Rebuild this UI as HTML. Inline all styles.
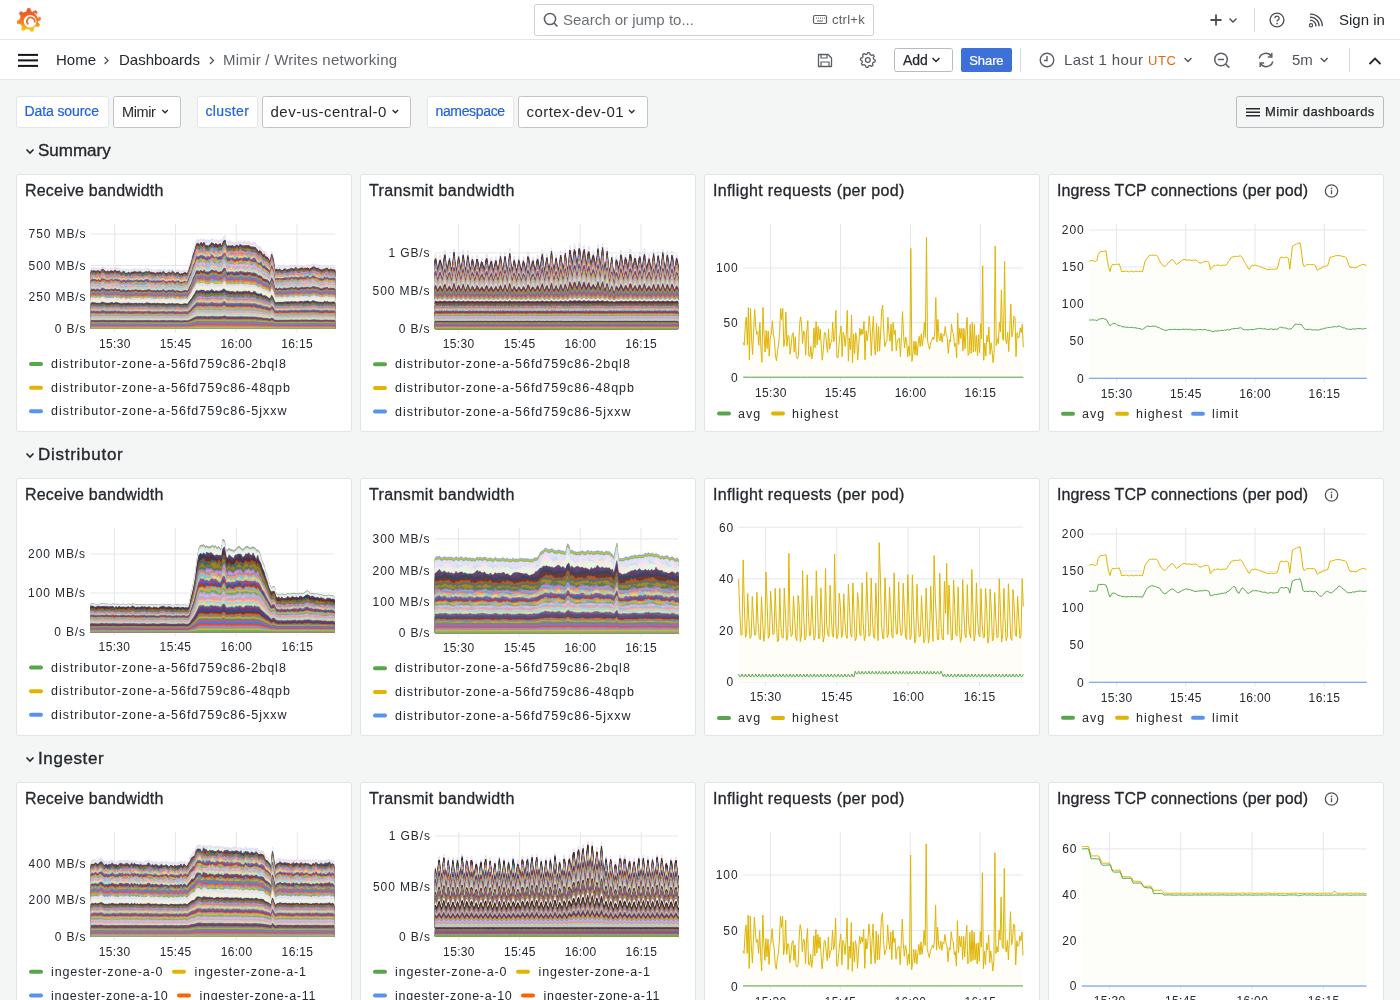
<!DOCTYPE html>
<html><head><meta charset="utf-8"><style>
html,body{margin:0;padding:0;background:#f4f5f5;width:1400px;height:1000px;overflow:hidden}
svg{display:block;will-change:transform;font-family:"Liberation Sans", sans-serif}
</style></head><body>
<svg width="1400" height="1000" viewBox="0 0 1400 1000">
<rect x="0" y="0" width="1400" height="40" fill="#ffffff" stroke="none" rx="0" stroke-width="1"/>
<rect x="0" y="39" width="1400" height="1" fill="#e4e5e6"/>
<rect x="0" y="40" width="1400" height="40" fill="#ffffff" stroke="none" rx="0" stroke-width="1"/>
<rect x="0" y="79" width="1400" height="1" fill="#e4e5e6"/>
<defs><linearGradient id="lg" x1="0" y1="0" x2="0" y2="1"><stop offset="0" stop-color="#ef4f28"/><stop offset="0.55" stop-color="#f57a1f"/><stop offset="1" stop-color="#f7d50c"/></linearGradient></defs>
<polygon points="26.62,11.47 27.57,8.46 30.03,8.46 30.98,11.47 32.75,12.11 35.40,10.42 37.29,12.00 36.08,14.91 37.14,16.83 40.25,17.35 40.59,19.79 37.75,21.14 37.53,22.38 39.74,24.62 38.58,26.80 35.49,26.22 33.57,27.83 33.60,30.98 31.25,31.74 29.43,29.18 26.02,28.76 23.63,30.81 21.54,29.50 22.33,26.45 20.64,24.00 17.52,23.65 17.04,21.23 19.81,19.73 20.78,16.11 19.13,13.43 20.75,11.57 23.64,12.83" fill="url(#lg)" stroke="url(#lg)" stroke-width="0.6" stroke-linejoin="round"/>
<circle cx="30.1" cy="21.2" r="6.3" fill="#ffffff"/>
<path d="M34.6,13.2 A8.9,8.9 0 0 1 38.6,18.4" fill="none" stroke="#ffffff" stroke-width="1.0"/>
<path d="M28.3,24.4 A3.9,3.9 0 1 1 34.6,22.6" fill="none" stroke="#f26b21" stroke-width="1.7"/>
<rect x="534.5" y="4.5" width="339" height="31" fill="#ffffff" stroke="#cfd0d2" rx="2" stroke-width="1"/>
<circle cx="550" cy="19" r="5.6" fill="none" stroke="#5b5f64" stroke-width="1.5"/><line x1="554" y1="23" x2="557.5" y2="26.5" stroke="#5b5f64" stroke-width="1.6"/>
<text x="563" y="25" font-size="15" fill="#6c7075" text-anchor="start" font-weight="normal" letter-spacing="0" >Search or jump to...</text>
<rect x="813.5" y="15.5" width="13" height="8" rx="1.5" fill="none" stroke="#5b5f64" stroke-width="1.2"/>
<rect x="816" y="17.6" width="1" height="1" fill="#5b5f64"/>
<rect x="818" y="17.6" width="1" height="1" fill="#5b5f64"/>
<rect x="820" y="17.6" width="1" height="1" fill="#5b5f64"/>
<rect x="822" y="17.6" width="1" height="1" fill="#5b5f64"/>
<rect x="824" y="17.6" width="1" height="1" fill="#5b5f64"/>
<rect x="817" y="20.5" width="6" height="1" fill="#5b5f64"/>
<text x="832" y="24" font-size="13" fill="#5b5f64" text-anchor="start" font-weight="normal" letter-spacing="0.25" >ctrl+k</text>
<path d="M1216,14.5 V25.5 M1210.5,20 H1221.5" stroke="#4a4e53" stroke-width="1.8" fill="none"/>
<path d="M1229.5,18.5 L1233,22 L1236.5,18.5" stroke="#4a4e53" stroke-width="1.4" fill="none"/>
<rect x="1254" y="8" width="1" height="24" fill="#d9dadb"/>
<circle cx="1277" cy="20" r="6.9" fill="none" stroke="#4a4e53" stroke-width="1.4"/>
<path d="M1274.9,18.2 A2.1,2.1 0 1 1 1277.8,20.1 Q1277,20.5 1277,21.6" fill="none" stroke="#4a4e53" stroke-width="1.3"/><circle cx="1277" cy="23.6" r="0.9" fill="#4a4e53"/>
<circle cx="1311" cy="25.3" r="1.6" fill="none" stroke="#4a4e53" stroke-width="1.2"/>
<path d="M1310,20.5 A5,5 0 0 1 1315.8,26.3 M1310,17.3 A8.3,8.3 0 0 1 1319,26.3 M1310,14.2 A11.5,11.5 0 0 1 1322.2,26.3" fill="none" stroke="#4a4e53" stroke-width="1.4"/>
<text x="1339" y="25" font-size="15" fill="#24292e" text-anchor="start" font-weight="normal" letter-spacing="0" >Sign in</text>
<rect x="18" y="53.9" width="20" height="2" fill="#111418"/>
<rect x="18" y="59.4" width="20" height="2" fill="#111418"/>
<rect x="18" y="64.9" width="20" height="2" fill="#111418"/>
<text x="56" y="65" font-size="15" fill="#24292e" text-anchor="start" font-weight="normal" letter-spacing="0" >Home</text>
<path d="M210,57 L213.5,60.5 L210,64" stroke="#4a4e53" stroke-width="1.2" fill="none"/>
<text x="119" y="65" font-size="15" fill="#24292e" text-anchor="start" font-weight="normal" letter-spacing="0" >Dashboards</text>
<text x="223" y="65" font-size="15" fill="#5f6368" text-anchor="start" font-weight="normal" letter-spacing="0.25" >Mimir / Writes networking</text>
<path d="M104.6,57 L108.1,60.5 L104.6,64" stroke="#4a4e53" stroke-width="1.2" fill="none"/>
<path d="M818.5,54.5 H828 L831.5,58 V66.5 H818.5 Z" fill="none" stroke="#5b5f64" stroke-width="1.3" stroke-linejoin="round"/>
<path d="M821,54.5 V58 H827 V54.5 M821,66.5 V62 H829 V66.5" fill="none" stroke="#5b5f64" stroke-width="1.2"/>
<polygon points="875.20,60.00 875.14,60.97 874.95,61.92 873.25,62.26 872.91,62.95 872.48,63.59 873.03,65.23 872.30,65.87 871.50,66.41 870.06,65.45 869.33,65.70 868.57,65.85 867.80,67.40 866.83,67.34 865.88,67.15 865.54,65.45 864.85,65.11 864.21,64.68 862.57,65.23 861.93,64.50 861.39,63.70 862.35,62.26 862.10,61.53 861.95,60.77 860.40,60.00 860.46,59.03 860.65,58.08 862.35,57.74 862.69,57.05 863.12,56.41 862.57,54.77 863.30,54.13 864.10,53.59 865.54,54.55 866.27,54.30 867.03,54.15 867.80,52.60 868.77,52.66 869.72,52.85 870.06,54.55 870.75,54.89 871.39,55.32 873.03,54.77 873.67,55.50 874.21,56.30 873.25,57.74 873.50,58.47 873.65,59.23" fill="none" stroke="#5b5f64" stroke-width="1.3" stroke-linejoin="round"/>
<circle cx="867.8" cy="60" r="2.4" fill="none" stroke="#5b5f64" stroke-width="1.3"/>
<rect x="894.5" y="48.5" width="58" height="23" fill="#ffffff" stroke="#b9bbbe" rx="2" stroke-width="1"/>
<text x="903" y="65" font-size="14" fill="#24292e" text-anchor="start" font-weight="normal" letter-spacing="0" stroke="#24292e" stroke-width="0.25">Add</text>
<path d="M932.5,58 L936,61.5 L939.5,58" stroke="#24292e" stroke-width="1.5" fill="none"/>
<rect x="961" y="48" width="51" height="24" fill="#3d71d9" stroke="none" rx="2" stroke-width="1"/>
<text x="969.3" y="64.8" font-size="13" fill="#ffffff" text-anchor="start" font-weight="normal" letter-spacing="-0.1" stroke="#ffffff" stroke-width="0.2">Share</text>
<rect x="1020" y="48" width="1" height="24" fill="#d9dadb"/>
<circle cx="1047" cy="60" r="6.8" fill="none" stroke="#5b5f64" stroke-width="1.4"/><path d="M1047,56 V60.5 H1044" fill="none" stroke="#5b5f64" stroke-width="1.4"/>
<text x="1064" y="65" font-size="15" fill="#4f5358" text-anchor="start" font-weight="normal" letter-spacing="0.4" >Last 1 hour</text>
<text x="1148" y="64.5" font-size="13" fill="#e8660f" text-anchor="start" font-weight="normal" letter-spacing="0.6" >UTC</text>
<path d="M1184.5,58 L1188,61.5 L1191.5,58" stroke="#4f5358" stroke-width="1.4" fill="none"/>
<circle cx="1221" cy="59.5" r="6.3" fill="none" stroke="#5b5f64" stroke-width="1.5"/><path d="M1218,59.5 H1224 M1225.6,64 L1229.4,67.6" stroke="#5b5f64" stroke-width="1.5" fill="none"/>
<path d="M1259.2,58.5 A6.8,6.8 0 0 1 1271.5,56.5 M1272.8,61.5 A6.8,6.8 0 0 1 1260.5,63.5" fill="none" stroke="#5b5f64" stroke-width="1.5"/>
<path d="M1271.8,53 V57 H1267.8 M1260.2,67 V63 H1264.2" fill="none" stroke="#5b5f64" stroke-width="1.5"/>
<text x="1292" y="65" font-size="15" fill="#4f5358" text-anchor="start" font-weight="normal" letter-spacing="0" >5m</text>
<path d="M1320.8,58 L1324.2,61.5 L1327.6,58" stroke="#4f5358" stroke-width="1.4" fill="none"/>
<rect x="1349" y="48" width="1" height="24" fill="#d9dadb"/>
<path d="M1369.5,64 L1375,58.5 L1380.5,64" stroke="#24292e" stroke-width="1.8" fill="none"/>
<rect x="16.5" y="96.5" width="92" height="31" fill="#ffffff" stroke="#e4e5e6" rx="2" stroke-width="1"/>
<text x="24.5" y="116.3" font-size="14" fill="#1f62e0" text-anchor="start" font-weight="normal" letter-spacing="-0.1" stroke="#1f62e0" stroke-width="0.2">Data source</text>
<rect x="113.5" y="96.5" width="67" height="31" fill="#ffffff" stroke="#c2c4c6" rx="2" stroke-width="1"/>
<text x="122" y="117" font-size="14.5" fill="#24292e" text-anchor="start" font-weight="normal" letter-spacing="-0.4" >Mimir</text>
<path d="M162.3,110 L165.05,112.75 L167.8,110" stroke="#24292e" stroke-width="1.3" fill="none"/>
<rect x="197.5" y="96.5" width="60" height="31" fill="#ffffff" stroke="#e4e5e6" rx="2" stroke-width="1"/>
<text x="205.5" y="116.3" font-size="14" fill="#1f62e0" text-anchor="start" font-weight="normal" letter-spacing="0.35" stroke="#1f62e0" stroke-width="0.2">cluster</text>
<rect x="262.5" y="96.5" width="148" height="31" fill="#ffffff" stroke="#c2c4c6" rx="2" stroke-width="1"/>
<text x="270.5" y="117" font-size="15" fill="#24292e" text-anchor="start" font-weight="normal" letter-spacing="0.5" >dev-us-central-0</text>
<path d="M392.6,110 L395.35,112.75 L398.1,110" stroke="#24292e" stroke-width="1.3" fill="none"/>
<rect x="427.5" y="96.5" width="86" height="31" fill="#ffffff" stroke="#e4e5e6" rx="2" stroke-width="1"/>
<text x="435.5" y="116.3" font-size="14" fill="#1f62e0" text-anchor="start" font-weight="normal" letter-spacing="-0.35" stroke="#1f62e0" stroke-width="0.2">namespace</text>
<rect x="518.5" y="96.5" width="129" height="31" fill="#ffffff" stroke="#c2c4c6" rx="2" stroke-width="1"/>
<text x="526.5" y="117" font-size="15" fill="#24292e" text-anchor="start" font-weight="normal" letter-spacing="0.45" >cortex-dev-01</text>
<path d="M629,110 L631.75,112.75 L634.5,110" stroke="#24292e" stroke-width="1.3" fill="none"/>
<rect x="1236.5" y="96.5" width="147" height="31" fill="#f4f5f5" stroke="#b9bbbe" rx="2" stroke-width="1"/>
<rect x="1246" y="108" width="14" height="1.5" fill="#24292e"/>
<rect x="1246" y="111.5" width="14" height="1.5" fill="#24292e"/>
<rect x="1246" y="115" width="14" height="1.5" fill="#24292e"/>
<text x="1265" y="116.2" font-size="13" fill="#24292e" text-anchor="start" font-weight="normal" letter-spacing="0.4" stroke="#24292e" stroke-width="0.25">Mimir dashboards</text>
<path d="M26.5,149.5 L30.0,153.0 L33.5,149.5" stroke="#24292e" stroke-width="1.6" fill="none"/>
<text x="38" y="155.8" font-size="17" fill="#24292e" text-anchor="start" font-weight="normal" letter-spacing="0" stroke="#24292e" stroke-width="0.35">Summary</text>
<path d="M26.5,453.5 L30.0,457.0 L33.5,453.5" stroke="#24292e" stroke-width="1.6" fill="none"/>
<text x="38" y="459.8" font-size="17" fill="#24292e" text-anchor="start" font-weight="normal" letter-spacing="0.73" stroke="#24292e" stroke-width="0.35">Distributor</text>
<path d="M26.5,757.5 L30.0,761.0 L33.5,757.5" stroke="#24292e" stroke-width="1.6" fill="none"/>
<text x="38" y="763.8" font-size="17" fill="#24292e" text-anchor="start" font-weight="normal" letter-spacing="0.6" stroke="#24292e" stroke-width="0.35">Ingester</text>
<rect x="16.5" y="174.5" width="335" height="257" fill="#ffffff" stroke="#e2e4e3" rx="1.5" stroke-width="1"/>
<rect x="360.5" y="174.5" width="335" height="257" fill="#ffffff" stroke="#e2e4e3" rx="1.5" stroke-width="1"/>
<rect x="704.5" y="174.5" width="335" height="257" fill="#ffffff" stroke="#e2e4e3" rx="1.5" stroke-width="1"/>
<rect x="1048.5" y="174.5" width="335" height="257" fill="#ffffff" stroke="#e2e4e3" rx="1.5" stroke-width="1"/>
<rect x="16.5" y="478.5" width="335" height="257" fill="#ffffff" stroke="#e2e4e3" rx="1.5" stroke-width="1"/>
<rect x="360.5" y="478.5" width="335" height="257" fill="#ffffff" stroke="#e2e4e3" rx="1.5" stroke-width="1"/>
<rect x="704.5" y="478.5" width="335" height="257" fill="#ffffff" stroke="#e2e4e3" rx="1.5" stroke-width="1"/>
<rect x="1048.5" y="478.5" width="335" height="257" fill="#ffffff" stroke="#e2e4e3" rx="1.5" stroke-width="1"/>
<rect x="16.5" y="782.5" width="335" height="257" fill="#ffffff" stroke="#e2e4e3" rx="1.5" stroke-width="1"/>
<rect x="360.5" y="782.5" width="335" height="257" fill="#ffffff" stroke="#e2e4e3" rx="1.5" stroke-width="1"/>
<rect x="704.5" y="782.5" width="335" height="257" fill="#ffffff" stroke="#e2e4e3" rx="1.5" stroke-width="1"/>
<rect x="1048.5" y="782.5" width="335" height="257" fill="#ffffff" stroke="#e2e4e3" rx="1.5" stroke-width="1"/>
<text x="25" y="196" font-size="16" fill="#24292e" text-anchor="start" font-weight="normal" letter-spacing="0.2" stroke="#24292e" stroke-width="0.3">Receive bandwidth</text>
<text x="369" y="196" font-size="16" fill="#24292e" text-anchor="start" font-weight="normal" letter-spacing="0.37" stroke="#24292e" stroke-width="0.3">Transmit bandwidth</text>
<text x="713" y="196" font-size="16" fill="#24292e" text-anchor="start" font-weight="normal" letter-spacing="0.35" stroke="#24292e" stroke-width="0.3">Inflight requests (per pod)</text>
<text x="1057" y="196" font-size="16" fill="#24292e" text-anchor="start" font-weight="normal" letter-spacing="0.11" stroke="#24292e" stroke-width="0.3">Ingress TCP connections (per pod)</text>
<circle cx="1331.5" cy="191" r="6.2" fill="none" stroke="#4f5358" stroke-width="1.3"/>
<rect x="1330.85" y="190.2" width="1.3" height="4" fill="#4f5358"/><circle cx="1331.5" cy="188.3" r="0.85" fill="#4f5358"/>
<text x="25" y="500" font-size="16" fill="#24292e" text-anchor="start" font-weight="normal" letter-spacing="0.2" stroke="#24292e" stroke-width="0.3">Receive bandwidth</text>
<text x="369" y="500" font-size="16" fill="#24292e" text-anchor="start" font-weight="normal" letter-spacing="0.37" stroke="#24292e" stroke-width="0.3">Transmit bandwidth</text>
<text x="713" y="500" font-size="16" fill="#24292e" text-anchor="start" font-weight="normal" letter-spacing="0.35" stroke="#24292e" stroke-width="0.3">Inflight requests (per pod)</text>
<text x="1057" y="500" font-size="16" fill="#24292e" text-anchor="start" font-weight="normal" letter-spacing="0.11" stroke="#24292e" stroke-width="0.3">Ingress TCP connections (per pod)</text>
<circle cx="1331.5" cy="495" r="6.2" fill="none" stroke="#4f5358" stroke-width="1.3"/>
<rect x="1330.85" y="494.2" width="1.3" height="4" fill="#4f5358"/><circle cx="1331.5" cy="492.3" r="0.85" fill="#4f5358"/>
<text x="25" y="804" font-size="16" fill="#24292e" text-anchor="start" font-weight="normal" letter-spacing="0.2" stroke="#24292e" stroke-width="0.3">Receive bandwidth</text>
<text x="369" y="804" font-size="16" fill="#24292e" text-anchor="start" font-weight="normal" letter-spacing="0.37" stroke="#24292e" stroke-width="0.3">Transmit bandwidth</text>
<text x="713" y="804" font-size="16" fill="#24292e" text-anchor="start" font-weight="normal" letter-spacing="0.35" stroke="#24292e" stroke-width="0.3">Inflight requests (per pod)</text>
<text x="1057" y="804" font-size="16" fill="#24292e" text-anchor="start" font-weight="normal" letter-spacing="0.11" stroke="#24292e" stroke-width="0.3">Ingress TCP connections (per pod)</text>
<circle cx="1331.5" cy="799" r="6.2" fill="none" stroke="#4f5358" stroke-width="1.3"/>
<rect x="1330.85" y="798.2" width="1.3" height="4" fill="#4f5358"/><circle cx="1331.5" cy="796.3" r="0.85" fill="#4f5358"/>
<clipPath id="clipall"><rect x="0" y="0" width="1400" height="1000"/></clipPath>
<rect x="91" y="328.0" width="244.0" height="1" fill="#e6e7e8"/>
<text x="86.5" y="332.8" font-size="12" fill="#24292e" text-anchor="end" font-weight="normal" letter-spacing="0.9" >0 B/s</text>
<rect x="91" y="296.5" width="244.0" height="1" fill="#e6e7e8"/>
<text x="86.5" y="301.3" font-size="12" fill="#24292e" text-anchor="end" font-weight="normal" letter-spacing="0.9" >250 MB/s</text>
<rect x="91" y="265.0" width="244.0" height="1" fill="#e6e7e8"/>
<text x="86.5" y="269.8" font-size="12" fill="#24292e" text-anchor="end" font-weight="normal" letter-spacing="0.9" >500 MB/s</text>
<rect x="91" y="233.5" width="244.0" height="1" fill="#e6e7e8"/>
<text x="86.5" y="238.3" font-size="12" fill="#24292e" text-anchor="end" font-weight="normal" letter-spacing="0.9" >750 MB/s</text>
<rect x="114.2" y="223.6" width="1" height="108.9" fill="#e6e7e8"/>
<text x="114.9" y="347.9" font-size="12" fill="#24292e" text-anchor="middle" font-weight="normal" letter-spacing="0.35" >15:30</text>
<rect x="175.0" y="223.6" width="1" height="108.9" fill="#e6e7e8"/>
<text x="175.66666666666666" y="347.9" font-size="12" fill="#24292e" text-anchor="middle" font-weight="normal" letter-spacing="0.35" >15:45</text>
<rect x="235.7" y="223.6" width="1" height="108.9" fill="#e6e7e8"/>
<text x="236.43333333333334" y="347.9" font-size="12" fill="#24292e" text-anchor="middle" font-weight="normal" letter-spacing="0.35" >16:00</text>
<rect x="296.5" y="223.6" width="1" height="108.9" fill="#e6e7e8"/>
<text x="297.2" y="347.9" font-size="12" fill="#24292e" text-anchor="middle" font-weight="normal" letter-spacing="0.35" >16:15</text>
<defs><path id="s1v0" d="M91,0 L91.0,-60.6 92.5,-60.8 94.0,-61.3 95.5,-60.4 97.0,-60.4 98.5,-60.5 100.0,-59.7 101.5,-61.1 103.0,-61.8 104.6,-60.8 106.1,-59.5 107.6,-59.8 109.1,-59.4 110.6,-60.6 112.1,-60.4 113.6,-59.2 115.1,-60.8 116.6,-60.8 118.1,-60.2 119.6,-60.1 121.1,-59.2 122.6,-58.9 124.1,-59.8 125.6,-58.9 127.1,-59.1 128.7,-59.2 130.2,-58.8 131.7,-59.5 133.2,-59.4 134.7,-60.1 136.2,-59.5 137.7,-59.7 139.2,-59.4 140.7,-59.6 142.2,-59.2 143.7,-58.9 145.2,-60.1 146.7,-60.1 148.2,-59.8 149.7,-59.5 151.2,-58.8 152.8,-58.6 154.3,-58.6 155.8,-58.2 157.3,-59.4 158.8,-58.7 160.3,-59.5 161.8,-58.6 163.3,-59.6 164.8,-59.4 166.3,-57.9 167.8,-58.2 169.3,-59.4 170.8,-58.6 172.3,-59.4 173.8,-58.4 175.3,-57.8 176.9,-58.7 178.4,-58.9 179.9,-58.0 181.4,-57.6 182.9,-58.0 184.4,-59.1 185.9,-58.7 187.4,-57.6 188.9,-62.0 190.4,-66.9 191.9,-71.9 193.4,-78.8 194.9,-82.5 196.4,-88.6 197.9,-89.5 199.4,-88.7 201.0,-90.1 202.5,-88.4 204.0,-89.7 205.5,-88.2 207.0,-88.9 208.5,-88.2 210.0,-88.3 211.5,-90.1 213.0,-89.6 214.5,-88.1 216.0,-89.6 217.5,-87.7 219.0,-88.1 220.5,-89.2 222.0,-88.6 223.5,-92.0 225.0,-93.1 226.6,-86.8 228.1,-86.8 229.6,-88.1 231.1,-86.9 232.6,-86.7 234.1,-86.1 235.6,-86.0 237.1,-87.3 238.6,-86.3 240.1,-87.2 241.6,-86.5 243.1,-86.6 244.6,-87.9 246.1,-86.6 247.6,-86.7 249.1,-87.4 250.7,-85.6 252.2,-85.4 253.7,-86.8 255.2,-85.9 256.7,-83.7 258.2,-82.1 259.7,-81.9 261.2,-80.9 262.7,-77.7 264.2,-77.9 265.7,-76.3 267.2,-74.2 268.7,-72.3 270.2,-70.5 271.7,-77.7 273.2,-72.5 274.8,-61.3 276.3,-62.2 277.8,-61.5 279.3,-62.7 280.8,-62.3 282.3,-61.9 283.8,-61.7 285.3,-62.9 286.8,-61.7 288.3,-62.1 289.8,-62.9 291.3,-63.5 292.8,-63.2 294.3,-62.6 295.8,-63.9 297.3,-62.7 298.9,-62.4 300.4,-63.0 301.9,-63.4 303.4,-62.8 304.9,-63.1 306.4,-63.6 307.9,-64.1 309.4,-63.3 310.9,-63.6 312.4,-64.4 313.9,-64.5 315.4,-63.7 316.9,-63.6 318.4,-63.3 319.9,-62.3 321.4,-61.9 323.0,-61.8 324.5,-63.3 326.0,-62.7 327.5,-63.1 329.0,-61.2 330.5,-62.2 332.0,-61.8 333.5,-62.1 335.0,-61.2 L335,0Z" fill="currentColor" stroke="currentColor"/><path id="s1v1" d="M91,0 L91.0,-59.1 92.5,-59.8 94.0,-59.9 95.5,-59.7 97.0,-58.9 98.5,-60.3 100.0,-59.0 101.5,-58.8 103.0,-59.6 104.6,-60.0 106.1,-57.4 107.6,-59.1 109.1,-57.1 110.6,-58.8 112.1,-59.4 113.6,-58.6 115.1,-60.8 116.6,-58.6 118.1,-60.1 119.6,-58.1 121.1,-56.9 122.6,-57.6 124.1,-59.4 125.6,-56.9 127.1,-56.8 128.7,-57.5 130.2,-57.6 131.7,-58.6 133.2,-58.6 134.7,-59.6 136.2,-57.9 137.7,-58.6 139.2,-58.9 140.7,-59.4 142.2,-57.7 143.7,-58.2 145.2,-58.9 146.7,-59.3 148.2,-57.7 149.7,-57.4 151.2,-58.7 152.8,-58.1 154.3,-57.9 155.8,-55.9 157.3,-57.6 158.8,-57.9 160.3,-59.0 161.8,-57.1 163.3,-57.6 164.8,-57.2 166.3,-57.1 167.8,-56.1 169.3,-57.7 170.8,-57.4 172.3,-57.1 173.8,-57.8 175.3,-56.1 176.9,-58.5 178.4,-58.5 179.9,-55.9 181.4,-57.2 182.9,-56.3 184.4,-57.7 185.9,-56.7 187.4,-56.7 188.9,-61.2 190.4,-66.1 191.9,-69.4 193.4,-76.9 194.9,-79.3 196.4,-85.5 197.9,-89.0 199.4,-86.8 201.0,-89.7 202.5,-88.2 204.0,-89.4 205.5,-85.1 207.0,-86.1 208.5,-85.3 210.0,-87.1 211.5,-87.9 213.0,-86.8 214.5,-86.8 216.0,-87.5 217.5,-86.9 219.0,-87.8 220.5,-88.3 222.0,-85.4 223.5,-89.9 225.0,-89.7 226.6,-85.2 228.1,-85.9 229.6,-85.3 231.1,-84.0 232.6,-86.7 234.1,-83.8 235.6,-85.7 237.1,-86.9 238.6,-83.2 240.1,-87.0 241.6,-85.7 243.1,-83.2 244.6,-86.4 246.1,-86.2 247.6,-86.2 249.1,-86.6 250.7,-83.0 252.2,-85.1 253.7,-83.7 255.2,-84.6 256.7,-80.4 258.2,-79.1 259.7,-81.0 261.2,-80.1 262.7,-76.2 264.2,-77.6 265.7,-74.3 267.2,-74.0 268.7,-72.3 270.2,-67.7 271.7,-76.8 273.2,-70.8 274.8,-60.2 276.3,-61.5 277.8,-61.4 279.3,-60.4 280.8,-59.9 282.3,-59.5 283.8,-61.5 285.3,-62.3 286.8,-60.2 288.3,-59.7 289.8,-61.5 291.3,-61.8 292.8,-61.5 294.3,-62.0 295.8,-62.5 297.3,-61.9 298.9,-61.8 300.4,-62.8 301.9,-62.7 303.4,-60.3 304.9,-62.0 306.4,-61.9 307.9,-62.4 309.4,-60.9 310.9,-62.6 312.4,-63.7 313.9,-63.6 315.4,-62.9 316.9,-61.5 318.4,-61.0 319.9,-61.5 321.4,-61.1 323.0,-60.4 324.5,-61.8 326.0,-61.3 327.5,-62.5 329.0,-61.1 330.5,-61.6 332.0,-61.6 333.5,-60.7 335.0,-61.0 L335,0Z" fill="currentColor" stroke="currentColor"/><path id="s1v2" d="M91,0 L91.0,-60.5 92.5,-59.2 94.0,-60.6 95.5,-58.5 97.0,-59.2 98.5,-58.4 100.0,-59.3 101.5,-59.9 103.0,-59.8 104.6,-60.6 106.1,-57.2 107.6,-59.4 109.1,-57.5 110.6,-58.3 112.1,-58.4 113.6,-58.4 115.1,-60.6 116.6,-59.5 118.1,-58.0 119.6,-59.4 121.1,-57.1 122.6,-58.6 124.1,-57.6 125.6,-58.9 127.1,-58.4 128.7,-57.0 130.2,-56.9 131.7,-57.3 133.2,-57.4 134.7,-58.3 136.2,-57.9 137.7,-59.2 139.2,-58.4 140.7,-59.3 142.2,-57.5 143.7,-57.3 145.2,-59.5 146.7,-59.9 148.2,-57.5 149.7,-57.6 151.2,-57.5 152.8,-57.3 154.3,-56.7 155.8,-57.2 157.3,-58.5 158.8,-57.9 160.3,-58.9 161.8,-58.6 163.3,-58.1 164.8,-58.4 166.3,-56.5 167.8,-58.0 169.3,-58.5 170.8,-58.2 172.3,-59.1 173.8,-57.8 175.3,-55.8 176.9,-57.8 178.4,-58.0 179.9,-56.6 181.4,-57.1 182.9,-58.0 184.4,-57.9 185.9,-57.5 187.4,-56.1 188.9,-60.9 190.4,-65.0 191.9,-69.8 193.4,-78.0 194.9,-80.8 196.4,-86.9 197.9,-88.7 199.4,-87.3 201.0,-88.1 202.5,-85.2 204.0,-86.4 205.5,-87.2 207.0,-86.6 208.5,-88.1 210.0,-88.1 211.5,-88.2 213.0,-86.4 214.5,-87.6 216.0,-86.8 217.5,-84.6 219.0,-87.0 220.5,-86.8 222.0,-85.6 223.5,-90.6 225.0,-90.5 226.6,-84.2 228.1,-84.8 229.6,-85.1 231.1,-83.8 232.6,-83.4 234.1,-84.1 235.6,-85.4 237.1,-86.4 238.6,-85.6 240.1,-85.2 241.6,-83.9 243.1,-86.5 244.6,-85.5 246.1,-84.1 247.6,-85.5 249.1,-85.6 250.7,-85.0 252.2,-82.9 253.7,-86.7 255.2,-82.5 256.7,-81.0 258.2,-80.0 259.7,-81.1 261.2,-78.0 262.7,-74.7 264.2,-77.5 265.7,-73.9 267.2,-71.7 268.7,-70.4 270.2,-68.5 271.7,-76.3 273.2,-69.9 274.8,-58.9 276.3,-61.3 277.8,-59.5 279.3,-61.6 280.8,-61.9 282.3,-61.1 283.8,-61.4 285.3,-60.6 286.8,-59.4 288.3,-61.8 289.8,-61.3 291.3,-62.5 292.8,-62.9 294.3,-61.9 295.8,-63.3 297.3,-60.8 298.9,-62.4 300.4,-62.5 301.9,-62.3 303.4,-62.7 304.9,-61.5 306.4,-62.0 307.9,-61.9 309.4,-62.8 310.9,-62.9 312.4,-63.0 313.9,-63.8 315.4,-62.2 316.9,-63.0 318.4,-61.5 319.9,-60.3 321.4,-59.9 323.0,-59.4 324.5,-61.9 326.0,-61.5 327.5,-60.9 329.0,-59.3 330.5,-60.8 332.0,-60.8 333.5,-61.4 335.0,-60.9 L335,0Z" fill="currentColor" stroke="currentColor"/><path id="s1v3" d="M91,0 L91.0,-58.7 92.5,-60.5 94.0,-59.5 95.5,-59.1 97.0,-58.1 98.5,-58.7 100.0,-57.4 101.5,-60.8 103.0,-60.6 104.6,-59.4 106.1,-58.7 107.6,-58.6 109.1,-58.5 110.6,-59.4 112.1,-60.4 113.6,-58.1 115.1,-59.7 116.6,-60.0 118.1,-59.2 119.6,-58.2 121.1,-57.6 122.6,-57.8 124.1,-58.3 125.6,-58.0 127.1,-58.6 128.7,-59.2 130.2,-58.1 131.7,-58.1 133.2,-57.3 134.7,-58.1 136.2,-58.3 137.7,-57.3 139.2,-58.3 140.7,-57.6 142.2,-58.3 143.7,-57.1 145.2,-57.8 146.7,-59.4 148.2,-59.4 149.7,-58.0 151.2,-57.5 152.8,-57.7 154.3,-58.6 155.8,-57.3 157.3,-58.4 158.8,-57.8 160.3,-57.4 161.8,-57.3 163.3,-57.9 164.8,-57.2 166.3,-56.1 167.8,-57.0 169.3,-57.6 170.8,-57.1 172.3,-57.9 173.8,-56.9 175.3,-56.8 176.9,-57.2 178.4,-57.4 179.9,-55.8 181.4,-55.8 182.9,-56.1 184.4,-57.3 185.9,-56.8 187.4,-56.2 188.9,-61.1 190.4,-66.2 191.9,-69.9 193.4,-76.0 194.9,-80.7 196.4,-88.1 197.9,-86.5 199.4,-87.0 201.0,-88.4 202.5,-88.2 204.0,-87.8 205.5,-85.5 207.0,-87.4 208.5,-87.0 210.0,-86.0 211.5,-90.0 213.0,-87.7 214.5,-84.8 216.0,-87.1 217.5,-86.3 219.0,-85.7 220.5,-87.1 222.0,-87.8 223.5,-91.2 225.0,-89.8 226.6,-85.9 228.1,-86.6 229.6,-85.2 231.1,-85.1 232.6,-85.5 234.1,-84.3 235.6,-83.5 237.1,-86.7 238.6,-84.1 240.1,-84.7 241.6,-83.7 243.1,-85.7 244.6,-85.7 246.1,-85.8 247.6,-84.8 249.1,-86.8 250.7,-82.9 252.2,-82.5 253.7,-85.7 255.2,-85.1 256.7,-80.5 258.2,-79.7 259.7,-79.2 261.2,-80.8 262.7,-74.9 264.2,-76.0 265.7,-75.3 267.2,-72.9 268.7,-70.1 270.2,-68.3 271.7,-77.1 273.2,-70.7 274.8,-60.9 276.3,-59.8 277.8,-60.4 279.3,-60.4 280.8,-60.5 282.3,-60.4 283.8,-61.1 285.3,-61.5 286.8,-61.4 288.3,-61.8 289.8,-61.1 291.3,-62.6 292.8,-61.3 294.3,-62.0 295.8,-62.1 297.3,-60.9 298.9,-61.7 300.4,-62.7 301.9,-62.4 303.4,-61.6 304.9,-62.9 306.4,-63.1 307.9,-63.9 309.4,-61.8 310.9,-61.3 312.4,-63.9 313.9,-64.4 315.4,-61.9 316.9,-61.5 318.4,-60.8 319.9,-60.8 321.4,-61.1 323.0,-59.7 324.5,-63.0 326.0,-61.0 327.5,-62.8 329.0,-60.2 330.5,-61.0 332.0,-60.8 333.5,-61.6 335.0,-60.6 L335,0Z" fill="currentColor" stroke="currentColor"/><path id="s1v4" d="M91,0 L91.0,-58.7 92.5,-59.6 94.0,-59.9 95.5,-59.9 97.0,-58.7 98.5,-59.7 100.0,-58.3 101.5,-58.9 103.0,-59.3 104.6,-60.7 106.1,-57.6 107.6,-57.7 109.1,-58.6 110.6,-59.7 112.1,-59.0 113.6,-57.0 115.1,-59.9 116.6,-58.6 118.1,-58.4 119.6,-59.7 121.1,-57.0 122.6,-58.9 124.1,-59.5 125.6,-57.4 127.1,-59.0 128.7,-58.3 130.2,-58.5 131.7,-58.4 133.2,-57.4 134.7,-57.9 136.2,-59.4 137.7,-59.5 139.2,-57.4 140.7,-59.5 142.2,-58.6 143.7,-58.6 145.2,-59.9 146.7,-60.0 148.2,-58.2 149.7,-57.7 151.2,-57.2 152.8,-56.6 154.3,-57.1 155.8,-57.3 157.3,-57.9 158.8,-56.5 160.3,-58.0 161.8,-58.1 163.3,-59.5 164.8,-57.2 166.3,-56.5 167.8,-57.4 169.3,-57.9 170.8,-57.3 172.3,-58.2 173.8,-58.2 175.3,-56.9 176.9,-57.7 178.4,-58.5 179.9,-56.0 181.4,-56.7 182.9,-56.5 184.4,-57.4 185.9,-57.0 187.4,-55.9 188.9,-60.1 190.4,-66.2 191.9,-69.1 193.4,-78.3 194.9,-79.4 196.4,-85.6 197.9,-86.5 199.4,-88.5 201.0,-89.8 202.5,-85.5 204.0,-88.0 205.5,-86.9 207.0,-85.4 208.5,-88.1 210.0,-86.4 211.5,-88.5 213.0,-89.1 214.5,-86.7 216.0,-87.1 217.5,-84.6 219.0,-88.0 220.5,-87.4 222.0,-88.3 223.5,-89.0 225.0,-92.8 226.6,-86.7 228.1,-85.5 229.6,-85.5 231.1,-85.8 232.6,-86.3 234.1,-83.3 235.6,-83.3 237.1,-84.3 238.6,-85.3 240.1,-85.7 241.6,-85.6 243.1,-84.7 244.6,-86.7 246.1,-85.4 247.6,-84.0 249.1,-84.1 250.7,-83.6 252.2,-85.1 253.7,-84.6 255.2,-84.3 256.7,-80.4 258.2,-79.7 259.7,-79.2 261.2,-78.7 262.7,-76.0 264.2,-75.1 265.7,-73.7 267.2,-73.3 268.7,-71.8 270.2,-69.4 271.7,-76.1 273.2,-72.3 274.8,-60.4 276.3,-60.8 277.8,-61.4 279.3,-60.6 280.8,-60.7 282.3,-61.1 283.8,-61.0 285.3,-62.0 286.8,-60.9 288.3,-60.3 289.8,-61.6 291.3,-62.2 292.8,-62.8 294.3,-60.3 295.8,-63.1 297.3,-61.9 298.9,-62.2 300.4,-60.5 301.9,-62.2 303.4,-60.5 304.9,-60.8 306.4,-61.1 307.9,-62.0 309.4,-60.9 310.9,-61.2 312.4,-62.4 313.9,-64.1 315.4,-62.4 316.9,-62.2 318.4,-60.8 319.9,-60.3 321.4,-60.2 323.0,-59.9 324.5,-62.4 326.0,-60.4 327.5,-61.5 329.0,-60.2 330.5,-61.0 332.0,-59.3 333.5,-60.7 335.0,-60.7 L335,0Z" fill="currentColor" stroke="currentColor"/><path id="s1v5" d="M91,0 L91.0,-60.3 92.5,-59.1 94.0,-60.0 95.5,-58.2 97.0,-60.0 98.5,-59.5 100.0,-57.9 101.5,-61.0 103.0,-61.6 104.6,-59.5 106.1,-58.8 107.6,-59.5 109.1,-58.8 110.6,-59.1 112.1,-59.1 113.6,-59.0 115.1,-60.7 116.6,-58.7 118.1,-58.6 119.6,-59.7 121.1,-57.2 122.6,-58.9 124.1,-58.9 125.6,-56.9 127.1,-57.4 128.7,-58.5 130.2,-56.7 131.7,-58.1 133.2,-57.4 134.7,-58.0 136.2,-58.5 137.7,-58.1 139.2,-58.1 140.7,-57.4 142.2,-57.3 143.7,-57.2 145.2,-58.2 146.7,-57.7 148.2,-59.2 149.7,-59.0 151.2,-57.0 152.8,-56.8 154.3,-57.4 155.8,-57.1 157.3,-58.5 158.8,-56.7 160.3,-57.6 161.8,-57.3 163.3,-59.5 164.8,-57.4 166.3,-56.8 167.8,-57.7 169.3,-58.7 170.8,-56.9 172.3,-59.4 173.8,-58.1 175.3,-57.1 176.9,-56.6 178.4,-57.2 179.9,-55.7 181.4,-56.4 182.9,-56.7 184.4,-57.8 185.9,-57.5 187.4,-56.3 188.9,-60.0 190.4,-64.3 191.9,-70.7 193.4,-76.8 194.9,-81.5 196.4,-87.6 197.9,-87.7 199.4,-86.6 201.0,-88.1 202.5,-84.9 204.0,-89.1 205.5,-85.9 207.0,-85.4 208.5,-85.6 210.0,-86.3 211.5,-88.8 213.0,-88.1 214.5,-84.8 216.0,-86.4 217.5,-85.4 219.0,-84.9 220.5,-85.9 222.0,-85.6 223.5,-90.5 225.0,-91.4 226.6,-84.0 228.1,-85.6 229.6,-85.5 231.1,-85.2 232.6,-85.6 234.1,-84.5 235.6,-85.6 237.1,-86.0 238.6,-84.9 240.1,-87.1 241.6,-85.9 243.1,-85.7 244.6,-84.9 246.1,-84.5 247.6,-85.7 249.1,-83.9 250.7,-84.7 252.2,-83.7 253.7,-84.3 255.2,-83.5 256.7,-82.2 258.2,-79.5 259.7,-80.3 261.2,-78.6 262.7,-76.1 264.2,-74.9 265.7,-74.1 267.2,-73.9 268.7,-71.9 270.2,-67.7 271.7,-77.0 273.2,-72.5 274.8,-60.7 276.3,-61.0 277.8,-59.2 279.3,-61.7 280.8,-60.5 282.3,-59.8 283.8,-61.5 285.3,-61.3 286.8,-59.3 288.3,-60.8 289.8,-61.5 291.3,-62.6 292.8,-60.8 294.3,-60.2 295.8,-63.7 297.3,-61.3 298.9,-61.4 300.4,-61.3 301.9,-63.1 303.4,-62.1 304.9,-62.4 306.4,-62.4 307.9,-62.0 309.4,-61.1 310.9,-61.6 312.4,-62.7 313.9,-64.2 315.4,-62.7 316.9,-61.9 318.4,-62.5 319.9,-61.0 321.4,-59.7 323.0,-61.5 324.5,-61.1 326.0,-62.5 327.5,-62.1 329.0,-59.0 330.5,-61.7 332.0,-60.5 333.5,-61.0 335.0,-59.0 L335,0Z" fill="currentColor" stroke="currentColor"/><path id="s1v6" d="M91,0 L91.0,-58.2 92.5,-60.1 94.0,-60.1 95.5,-58.3 97.0,-59.1 98.5,-60.0 100.0,-57.9 101.5,-60.3 103.0,-60.6 104.6,-60.8 106.1,-57.1 107.6,-58.2 109.1,-57.2 110.6,-58.3 112.1,-59.7 113.6,-57.9 115.1,-59.8 116.6,-58.9 118.1,-58.1 119.6,-59.5 121.1,-58.6 122.6,-57.3 124.1,-58.8 125.6,-58.6 127.1,-58.7 128.7,-57.9 130.2,-57.4 131.7,-57.2 133.2,-58.2 134.7,-58.6 136.2,-59.1 137.7,-58.7 139.2,-58.7 140.7,-58.0 142.2,-58.6 143.7,-58.4 145.2,-59.2 146.7,-59.0 148.2,-59.0 149.7,-58.1 151.2,-58.3 152.8,-56.5 154.3,-57.0 155.8,-57.0 157.3,-59.3 158.8,-58.0 160.3,-57.8 161.8,-57.1 163.3,-57.7 164.8,-57.3 166.3,-57.1 167.8,-57.0 169.3,-58.6 170.8,-58.3 172.3,-59.1 173.8,-57.8 175.3,-57.6 176.9,-57.4 178.4,-57.3 179.9,-56.7 181.4,-56.1 182.9,-57.5 184.4,-58.6 185.9,-57.4 187.4,-55.5 188.9,-61.0 190.4,-66.9 191.9,-71.9 193.4,-77.8 194.9,-80.4 196.4,-88.3 197.9,-88.7 199.4,-86.3 201.0,-86.5 202.5,-87.2 204.0,-87.5 205.5,-86.3 207.0,-88.8 208.5,-87.1 210.0,-87.8 211.5,-89.2 213.0,-86.8 214.5,-85.7 216.0,-89.4 217.5,-87.4 219.0,-85.5 220.5,-88.9 222.0,-87.5 223.5,-91.0 225.0,-92.9 226.6,-86.7 228.1,-86.4 229.6,-86.7 231.1,-83.6 232.6,-84.5 234.1,-85.2 235.6,-83.7 237.1,-86.3 238.6,-84.5 240.1,-86.0 241.6,-83.2 243.1,-85.4 244.6,-85.1 246.1,-84.4 247.6,-83.8 249.1,-85.3 250.7,-82.6 252.2,-84.0 253.7,-84.5 255.2,-83.8 256.7,-81.9 258.2,-80.2 259.7,-80.2 261.2,-79.6 262.7,-74.9 264.2,-76.0 265.7,-74.6 267.2,-74.0 268.7,-70.8 270.2,-70.0 271.7,-77.1 273.2,-71.3 274.8,-59.9 276.3,-61.6 277.8,-60.8 279.3,-61.3 280.8,-61.2 282.3,-60.9 283.8,-61.5 285.3,-61.9 286.8,-60.1 288.3,-60.8 289.8,-61.5 291.3,-61.4 292.8,-61.3 294.3,-60.9 295.8,-63.8 297.3,-61.9 298.9,-60.7 300.4,-62.6 301.9,-61.1 303.4,-62.4 304.9,-60.9 306.4,-63.0 307.9,-61.9 309.4,-61.1 310.9,-62.7 312.4,-62.2 313.9,-64.1 315.4,-61.5 316.9,-62.6 318.4,-62.2 319.9,-62.0 321.4,-60.5 323.0,-61.1 324.5,-61.6 326.0,-60.7 327.5,-61.6 329.0,-61.2 330.5,-59.8 332.0,-59.5 333.5,-60.5 335.0,-60.2 L335,0Z" fill="currentColor" stroke="currentColor"/><path id="s1v7" d="M91,0 L91.0,-59.3 92.5,-58.6 94.0,-60.2 95.5,-58.5 97.0,-59.0 98.5,-59.5 100.0,-57.5 101.5,-60.1 103.0,-60.3 104.6,-60.6 106.1,-58.3 107.6,-59.7 109.1,-57.7 110.6,-60.6 112.1,-60.3 113.6,-58.9 115.1,-60.5 116.6,-59.5 118.1,-59.3 119.6,-59.4 121.1,-56.9 122.6,-56.8 124.1,-58.2 125.6,-57.0 127.1,-57.2 128.7,-58.6 130.2,-56.9 131.7,-58.9 133.2,-58.1 134.7,-59.2 136.2,-59.1 137.7,-57.8 139.2,-57.2 140.7,-58.9 142.2,-57.2 143.7,-58.1 145.2,-58.5 146.7,-57.7 148.2,-57.9 149.7,-59.4 151.2,-57.7 152.8,-57.7 154.3,-58.0 155.8,-56.3 157.3,-58.4 158.8,-57.1 160.3,-58.0 161.8,-57.4 163.3,-59.5 164.8,-57.8 166.3,-55.8 167.8,-57.8 169.3,-57.9 170.8,-57.4 172.3,-58.6 173.8,-56.7 175.3,-55.5 176.9,-58.7 178.4,-56.8 179.9,-57.1 181.4,-55.7 182.9,-57.6 184.4,-57.4 185.9,-58.5 187.4,-56.8 188.9,-59.6 190.4,-65.1 191.9,-69.7 193.4,-77.3 194.9,-80.9 196.4,-86.9 197.9,-86.7 199.4,-86.2 201.0,-89.4 202.5,-86.8 204.0,-87.7 205.5,-86.2 207.0,-85.6 208.5,-85.3 210.0,-87.8 211.5,-88.7 213.0,-89.2 214.5,-88.0 216.0,-89.3 217.5,-87.1 219.0,-85.4 220.5,-86.9 222.0,-85.8 223.5,-90.9 225.0,-92.5 226.6,-83.4 228.1,-84.0 229.6,-84.8 231.1,-86.8 232.6,-85.4 234.1,-83.9 235.6,-83.5 237.1,-84.1 238.6,-84.4 240.1,-85.8 241.6,-86.5 243.1,-83.9 244.6,-84.4 246.1,-83.4 247.6,-84.4 249.1,-86.2 250.7,-84.8 252.2,-82.8 253.7,-83.6 255.2,-82.6 256.7,-83.1 258.2,-80.1 259.7,-80.3 261.2,-79.5 262.7,-75.2 264.2,-75.0 265.7,-74.1 267.2,-72.1 268.7,-70.3 270.2,-68.6 271.7,-76.1 273.2,-71.8 274.8,-59.4 276.3,-61.9 277.8,-59.9 279.3,-61.7 280.8,-60.9 282.3,-60.3 283.8,-60.6 285.3,-60.4 286.8,-61.2 288.3,-62.1 289.8,-60.5 291.3,-62.7 292.8,-62.5 294.3,-61.6 295.8,-62.4 297.3,-60.2 298.9,-60.6 300.4,-62.2 301.9,-62.1 303.4,-61.7 304.9,-61.8 306.4,-62.5 307.9,-63.6 309.4,-62.3 310.9,-62.6 312.4,-63.9 313.9,-62.4 315.4,-62.8 316.9,-63.2 318.4,-61.8 319.9,-60.2 321.4,-60.0 323.0,-60.2 324.5,-61.4 326.0,-61.9 327.5,-62.7 329.0,-60.6 330.5,-61.3 332.0,-61.1 333.5,-60.9 335.0,-60.8 L335,0Z" fill="currentColor" stroke="currentColor"/></defs>
<g stroke-width="0.6"><use href="#s1v0" transform="matrix(1 0 0 1.0000 0 328.50)" color="#e2dff8"/><use href="#s1v2" transform="matrix(1 0 0 0.9954 0 328.50)" color="#f9def9"/><use href="#s1v2" transform="matrix(1 0 0 0.9920 0 328.50)" color="#c4e3f5"/><use href="#s1v7" transform="matrix(1 0 0 0.9872 0 328.50)" color="#fce6e2"/><use href="#s1v3" transform="matrix(1 0 0 0.9852 0 328.50)" color="#f9e6d8"/><use href="#s1v4" transform="matrix(1 0 0 0.9808 0 328.50)" color="#d6faff"/><use href="#s1v1" transform="matrix(1 0 0 0.9756 0 328.50)" color="#fcedd1"/><use href="#s1v5" transform="matrix(1 0 0 0.9709 0 328.50)" color="#e4f9dd"/><use href="#s1v5" transform="matrix(1 0 0 0.9679 0 328.50)" color="#5b4a73"/><use href="#s1v1" transform="matrix(1 0 0 0.9624 0 328.50)" color="#6b3964"/><use href="#s1v7" transform="matrix(1 0 0 0.9543 0 328.50)" color="#2a4a6b"/><use href="#s1v7" transform="matrix(1 0 0 0.9463 0 328.50)" color="#713730"/><use href="#s1v5" transform="matrix(1 0 0 0.9408 0 328.50)" color="#a8602e"/><use href="#s1v4" transform="matrix(1 0 0 0.9321 0 328.50)" color="#4e7076"/><use href="#s1v1" transform="matrix(1 0 0 0.9206 0 328.50)" color="#a58827"/><use href="#s1v4" transform="matrix(1 0 0 0.9131 0 328.50)" color="#5b7e51"/><use href="#s1v7" transform="matrix(1 0 0 0.9058 0 328.50)" color="#9383c1"/><use href="#s1v5" transform="matrix(1 0 0 0.9004 0 328.50)" color="#dc95d5"/><use href="#s1v7" transform="matrix(1 0 0 0.8887 0 328.50)" color="#6ba4d5"/><use href="#s1v5" transform="matrix(1 0 0 0.8828 0 328.50)" color="#ed7b77"/><use href="#s1v6" transform="matrix(1 0 0 0.8689 0 328.50)" color="#f9a368"/><use href="#s1v3" transform="matrix(1 0 0 0.8548 0 328.50)" color="#7ccde0"/><use href="#s1v4" transform="matrix(1 0 0 0.8445 0 328.50)" color="#f3d182"/><use href="#s1v3" transform="matrix(1 0 0 0.8314 0 328.50)" color="#a9cc9b"/><use href="#s1v3" transform="matrix(1 0 0 0.8243 0 328.50)" color="#7867a3"/><use href="#s1v4" transform="matrix(1 0 0 0.8189 0 328.50)" color="#a54c94"/><use href="#s1v1" transform="matrix(1 0 0 0.8094 0 328.50)" color="#2e6aaf"/><use href="#s1v5" transform="matrix(1 0 0 0.7989 0 328.50)" color="#c83d26"/><use href="#s1v7" transform="matrix(1 0 0 0.7927 0 328.50)" color="#e4894c"/><use href="#s1v4" transform="matrix(1 0 0 0.7795 0 328.50)" color="#7bbbd0"/><use href="#s1v1" transform="matrix(1 0 0 0.7736 0 328.50)" color="#e8b832"/><use href="#s1v4" transform="matrix(1 0 0 0.7659 0 328.50)" color="#79ac6b"/><use href="#s1v3" transform="matrix(1 0 0 0.7568 0 328.50)" color="#baafe4"/><use href="#s1v5" transform="matrix(1 0 0 0.7442 0 328.50)" color="#e8b5e6"/><use href="#s1v6" transform="matrix(1 0 0 0.7297 0 328.50)" color="#94c0dd"/><use href="#s1v3" transform="matrix(1 0 0 0.7163 0 328.50)" color="#f3a1a1"/><use href="#s1v7" transform="matrix(1 0 0 0.7063 0 328.50)" color="#f9c49f"/><use href="#s1v2" transform="matrix(1 0 0 0.6922 0 328.50)" color="#85e0ef"/><use href="#s1v5" transform="matrix(1 0 0 0.6806 0 328.50)" color="#f5dba7"/><use href="#s1v5" transform="matrix(1 0 0 0.6694 0 328.50)" color="#c1e0b7"/><use href="#s1v5" transform="matrix(1 0 0 0.6618 0 328.50)" color="#71608b"/><use href="#s1v7" transform="matrix(1 0 0 0.6529 0 328.50)" color="#824079"/><use href="#s1v3" transform="matrix(1 0 0 0.6451 0 328.50)" color="#2e5f8f"/><use href="#s1v1" transform="matrix(1 0 0 0.6382 0 328.50)" color="#9a3327"/><use href="#s1v7" transform="matrix(1 0 0 0.6282 0 328.50)" color="#ca7439"/><use href="#s1v5" transform="matrix(1 0 0 0.6212 0 328.50)" color="#6091c6"/><use href="#s1v7" transform="matrix(1 0 0 0.6151 0 328.50)" color="#d3b026"/><use href="#s1v7" transform="matrix(1 0 0 0.6101 0 328.50)" color="#6a985e"/><use href="#s1v7" transform="matrix(1 0 0 0.6026 0 328.50)" color="#8575ae"/><use href="#s1v3" transform="matrix(1 0 0 0.5905 0 328.50)" color="#c45fb5"/><use href="#s1v4" transform="matrix(1 0 0 0.5843 0 328.50)" color="#408cca"/><use href="#s1v4" transform="matrix(1 0 0 0.5702 0 328.50)" color="#e44e60"/><use href="#s1v5" transform="matrix(1 0 0 0.5614 0 328.50)" color="#fa7b26"/><use href="#s1v7" transform="matrix(1 0 0 0.5483 0 328.50)" color="#70a4f3"/><use href="#s1v1" transform="matrix(1 0 0 0.5364 0 328.50)" color="#e4bf26"/><use href="#s1v5" transform="matrix(1 0 0 0.5224 0 328.50)" color="#6fb366"/><use href="#s1v5" transform="matrix(1 0 0 0.5163 0 328.50)" color="#e2dff8"/><use href="#s1v1" transform="matrix(1 0 0 0.5063 0 328.50)" color="#f9def9"/><use href="#s1v1" transform="matrix(1 0 0 0.4993 0 328.50)" color="#c4e3f5"/><use href="#s1v5" transform="matrix(1 0 0 0.4919 0 328.50)" color="#fce6e2"/><use href="#s1v5" transform="matrix(1 0 0 0.4806 0 328.50)" color="#f9e6d8"/><use href="#s1v1" transform="matrix(1 0 0 0.4672 0 328.50)" color="#d6faff"/><use href="#s1v1" transform="matrix(1 0 0 0.4612 0 328.50)" color="#fcedd1"/><use href="#s1v3" transform="matrix(1 0 0 0.4501 0 328.50)" color="#e4f9dd"/><use href="#s1v3" transform="matrix(1 0 0 0.4356 0 328.50)" color="#5b4a73"/><use href="#s1v3" transform="matrix(1 0 0 0.4252 0 328.50)" color="#6b3964"/><use href="#s1v7" transform="matrix(1 0 0 0.4188 0 328.50)" color="#2a4a6b"/><use href="#s1v5" transform="matrix(1 0 0 0.4082 0 328.50)" color="#713730"/><use href="#s1v1" transform="matrix(1 0 0 0.4038 0 328.50)" color="#a8602e"/><use href="#s1v6" transform="matrix(1 0 0 0.3978 0 328.50)" color="#4e7076"/><use href="#s1v3" transform="matrix(1 0 0 0.3879 0 328.50)" color="#a58827"/><use href="#s1v5" transform="matrix(1 0 0 0.3790 0 328.50)" color="#5b7e51"/><use href="#s1v1" transform="matrix(1 0 0 0.3704 0 328.50)" color="#9383c1"/><use href="#s1v4" transform="matrix(1 0 0 0.3574 0 328.50)" color="#dc95d5"/><use href="#s1v6" transform="matrix(1 0 0 0.3496 0 328.50)" color="#6ba4d5"/><use href="#s1v1" transform="matrix(1 0 0 0.3400 0 328.50)" color="#ed7b77"/><use href="#s1v7" transform="matrix(1 0 0 0.3330 0 328.50)" color="#f9a368"/><use href="#s1v5" transform="matrix(1 0 0 0.3198 0 328.50)" color="#7ccde0"/><use href="#s1v4" transform="matrix(1 0 0 0.3140 0 328.50)" color="#f3d182"/><use href="#s1v3" transform="matrix(1 0 0 0.3037 0 328.50)" color="#a9cc9b"/><use href="#s1v5" transform="matrix(1 0 0 0.2953 0 328.50)" color="#7867a3"/><use href="#s1v7" transform="matrix(1 0 0 0.2834 0 328.50)" color="#a54c94"/><use href="#s1v5" transform="matrix(1 0 0 0.2762 0 328.50)" color="#2e6aaf"/><use href="#s1v1" transform="matrix(1 0 0 0.2629 0 328.50)" color="#c83d26"/><use href="#s1v2" transform="matrix(1 0 0 0.2544 0 328.50)" color="#e4894c"/><use href="#s1v3" transform="matrix(1 0 0 0.2397 0 328.50)" color="#7bbbd0"/><use href="#s1v3" transform="matrix(1 0 0 0.2282 0 328.50)" color="#e8b832"/><use href="#s1v2" transform="matrix(1 0 0 0.2204 0 328.50)" color="#79ac6b"/><use href="#s1v2" transform="matrix(1 0 0 0.2117 0 328.50)" color="#baafe4"/><use href="#s1v5" transform="matrix(1 0 0 0.2043 0 328.50)" color="#e8b5e6"/><use href="#s1v2" transform="matrix(1 0 0 0.1986 0 328.50)" color="#94c0dd"/><use href="#s1v5" transform="matrix(1 0 0 0.1883 0 328.50)" color="#f3a1a1"/><use href="#s1v1" transform="matrix(1 0 0 0.1821 0 328.50)" color="#f9c49f"/><use href="#s1v4" transform="matrix(1 0 0 0.1713 0 328.50)" color="#85e0ef"/><use href="#s1v3" transform="matrix(1 0 0 0.1596 0 328.50)" color="#f5dba7"/><use href="#s1v7" transform="matrix(1 0 0 0.1508 0 328.50)" color="#c1e0b7"/><use href="#s1v5" transform="matrix(1 0 0 0.1385 0 328.50)" color="#71608b"/><use href="#s1v4" transform="matrix(1 0 0 0.1340 0 328.50)" color="#824079"/><use href="#s1v7" transform="matrix(1 0 0 0.1239 0 328.50)" color="#2e5f8f"/><use href="#s1v3" transform="matrix(1 0 0 0.1193 0 328.50)" color="#9a3327"/><use href="#s1v3" transform="matrix(1 0 0 0.1104 0 328.50)" color="#ca7439"/><use href="#s1v7" transform="matrix(1 0 0 0.1035 0 328.50)" color="#6091c6"/><use href="#s1v3" transform="matrix(1 0 0 0.0946 0 328.50)" color="#d3b026"/><use href="#s1v5" transform="matrix(1 0 0 0.0842 0 328.50)" color="#6a985e"/><use href="#s1v3" transform="matrix(1 0 0 0.0735 0 328.50)" color="#8575ae"/><use href="#s1v1" transform="matrix(1 0 0 0.0599 0 328.50)" color="#c45fb5"/><use href="#s1v6" transform="matrix(1 0 0 0.0507 0 328.50)" color="#408cca"/><use href="#s1v1" transform="matrix(1 0 0 0.0438 0 328.50)" color="#e44e60"/><use href="#s1v7" transform="matrix(1 0 0 0.0335 0 328.50)" color="#fa7b26"/><use href="#s1v6" transform="matrix(1 0 0 0.0206 0 328.50)" color="#70a4f3"/><use href="#s1v2" transform="matrix(1 0 0 0.0137 0 328.50)" color="#e4bf26"/><use href="#s1v7" transform="matrix(1 0 0 0.0062 0 328.50)" color="#6fb366"/></g>
<rect x="29" y="362.0" width="14" height="4" rx="2" fill="#56a64b"/>
<text x="51" y="368.0" font-size="12.5" fill="#24292e" text-anchor="start" font-weight="normal" letter-spacing="0.98" >distributor-zone-a-56fd759c86-2bql8</text>
<rect x="29" y="385.7" width="14" height="4" rx="2" fill="#e0b400"/>
<text x="51" y="391.7" font-size="12.5" fill="#24292e" text-anchor="start" font-weight="normal" letter-spacing="0.98" >distributor-zone-a-56fd759c86-48qpb</text>
<rect x="29" y="409.2" width="14" height="4" rx="2" fill="#5794f2"/>
<text x="51" y="415.2" font-size="12.5" fill="#24292e" text-anchor="start" font-weight="normal" letter-spacing="0.98" >distributor-zone-a-56fd759c86-5jxxw</text>
<rect x="435" y="328.3" width="243.0" height="1" fill="#e6e7e8"/>
<text x="430.5" y="333.1" font-size="12" fill="#24292e" text-anchor="end" font-weight="normal" letter-spacing="0.9" >0 B/s</text>
<rect x="435" y="290.4" width="243.0" height="1" fill="#e6e7e8"/>
<text x="430.5" y="295.15000000000003" font-size="12" fill="#24292e" text-anchor="end" font-weight="normal" letter-spacing="0.9" >500 MB/s</text>
<rect x="435" y="252.4" width="243.0" height="1" fill="#e6e7e8"/>
<text x="430.5" y="257.2" font-size="12" fill="#24292e" text-anchor="end" font-weight="normal" letter-spacing="0.9" >1 GB/s</text>
<rect x="458.0" y="223.6" width="1" height="109.2" fill="#e6e7e8"/>
<text x="458.7" y="348.2" font-size="12" fill="#24292e" text-anchor="middle" font-weight="normal" letter-spacing="0.35" >15:30</text>
<rect x="518.8" y="223.6" width="1" height="109.2" fill="#e6e7e8"/>
<text x="519.5333333333334" y="348.2" font-size="12" fill="#24292e" text-anchor="middle" font-weight="normal" letter-spacing="0.35" >15:45</text>
<rect x="579.7" y="223.6" width="1" height="109.2" fill="#e6e7e8"/>
<text x="580.3666666666667" y="348.2" font-size="12" fill="#24292e" text-anchor="middle" font-weight="normal" letter-spacing="0.35" >16:00</text>
<rect x="640.5" y="223.6" width="1" height="109.2" fill="#e6e7e8"/>
<text x="641.2" y="348.2" font-size="12" fill="#24292e" text-anchor="middle" font-weight="normal" letter-spacing="0.35" >16:15</text>
<defs><path id="s2v0" d="M435,0 L435.0,-48.7 435.8,-49.1 436.5,-42.7 437.3,-39.0 438.0,-38.6 438.8,-41.5 439.6,-46.9 440.3,-48.5 441.1,-42.6 441.9,-39.0 442.6,-38.5 443.4,-42.3 444.1,-49.7 444.9,-53.8 445.7,-45.1 446.4,-39.7 447.2,-38.2 447.9,-40.4 448.7,-44.8 449.5,-48.5 450.2,-42.9 451.0,-39.2 451.8,-38.1 452.5,-41.1 453.3,-47.4 454.0,-54.8 454.8,-46.0 455.6,-40.2 456.3,-38.0 457.1,-40.0 457.9,-44.7 458.6,-51.7 459.4,-44.7 460.1,-39.9 460.9,-37.9 461.7,-40.0 462.4,-45.5 463.2,-53.9 463.9,-46.8 464.7,-40.7 465.5,-37.9 466.2,-39.6 467.0,-45.0 467.8,-53.3 468.5,-47.7 469.3,-41.2 470.0,-38.0 470.8,-38.8 471.6,-42.3 472.3,-47.9 473.1,-45.2 473.8,-40.5 474.6,-37.9 475.4,-38.6 476.1,-42.3 476.9,-48.5 477.7,-46.7 478.4,-41.1 479.2,-38.1 479.9,-38.2 480.7,-41.1 481.5,-46.0 482.2,-45.6 483.0,-40.8 483.8,-38.1 484.5,-38.2 485.3,-42.0 486.0,-48.7 486.8,-49.7 487.6,-42.6 488.3,-38.4 489.1,-37.8 489.8,-40.3 490.6,-44.8 491.4,-46.6 492.1,-41.5 492.9,-38.3 493.7,-37.6 494.4,-39.9 495.2,-44.2 495.9,-47.1 496.7,-41.8 497.5,-38.4 498.2,-37.5 499.0,-40.3 499.7,-45.9 500.5,-51.2 501.3,-43.8 502.0,-39.0 502.8,-37.4 503.6,-39.8 504.3,-45.0 505.1,-51.7 505.8,-44.2 506.6,-39.3 507.4,-37.3 508.1,-39.9 508.9,-46.4 509.7,-56.0 510.4,-46.9 511.2,-40.2 511.9,-37.3 512.7,-38.5 513.5,-42.0 514.2,-47.3 515.0,-43.1 515.7,-39.2 516.5,-37.3 517.3,-38.4 518.0,-42.0 518.8,-47.7 519.6,-44.2 520.3,-39.7 521.1,-37.4 521.8,-38.2 522.6,-41.7 523.4,-47.3 524.1,-45.0 524.9,-40.2 525.6,-37.6 526.4,-38.5 527.2,-43.6 527.9,-52.2 528.7,-50.4 529.5,-42.4 530.2,-38.0 531.0,-37.9 531.7,-41.0 532.5,-46.2 533.3,-46.2 534.0,-41.0 534.8,-37.9 535.6,-37.9 536.3,-41.2 537.1,-47.3 537.8,-48.7 538.6,-42.2 539.4,-38.3 540.1,-37.9 540.9,-42.1 541.6,-50.0 542.4,-53.9 543.2,-44.7 543.9,-39.0 544.7,-37.7 545.5,-40.5 546.2,-46.0 547.0,-50.1 547.7,-43.3 548.5,-38.9 549.3,-37.6 550.0,-41.1 550.8,-48.4 551.5,-56.0 552.3,-46.3 553.1,-39.9 553.8,-37.6 554.6,-39.5 555.4,-43.7 556.1,-49.5 556.9,-43.4 557.6,-39.3 558.4,-37.6 559.2,-39.8 559.9,-45.3 560.7,-53.5 561.5,-46.2 562.2,-40.4 563.0,-37.7 563.7,-39.6 564.5,-45.3 565.3,-54.0 566.0,-47.8 566.8,-41.1 567.5,-37.9 568.3,-40.5 569.1,-47.4 569.8,-58.2 570.6,-54.7 571.4,-48.2 572.1,-44.4 572.9,-45.5 573.6,-51.0 574.4,-60.1 575.2,-56.9 575.9,-48.8 576.7,-44.4 577.4,-45.1 578.2,-51.1 579.0,-61.0 579.7,-59.6 580.5,-50.0 581.3,-44.6 582.0,-44.5 582.8,-49.2 583.5,-57.5 584.3,-58.1 585.1,-49.6 585.8,-44.6 586.6,-44.0 587.4,-48.0 588.1,-55.3 588.9,-57.5 589.6,-49.5 590.4,-44.6 591.2,-43.6 591.9,-46.1 592.7,-51.0 593.4,-53.7 594.2,-47.9 595.0,-44.3 595.7,-43.4 596.5,-46.7 597.3,-53.5 598.0,-59.2 598.8,-50.5 599.5,-44.9 600.3,-42.8 601.1,-45.7 601.8,-52.5 602.6,-60.3 603.3,-49.5 604.1,-42.4 604.9,-39.4 605.6,-41.6 606.4,-47.4 607.2,-56.1 607.9,-46.1 608.7,-39.0 609.4,-35.5 610.2,-36.9 611.0,-41.9 611.7,-49.6 612.5,-41.2 613.3,-34.0 614.0,-30.4 614.8,-33.3 615.5,-39.5 616.3,-48.6 617.1,-46.0 617.8,-42.0 618.6,-39.5 619.3,-40.7 620.1,-45.7 620.9,-53.7 621.6,-49.8 622.4,-43.1 623.2,-39.5 623.9,-40.1 624.7,-43.9 625.4,-50.1 626.2,-48.3 627.0,-42.7 627.7,-39.5 628.5,-40.2 629.2,-45.6 630.0,-54.8 630.8,-54.1 631.5,-45.1 632.3,-39.9 633.1,-39.5 633.8,-42.7 634.6,-48.4 635.3,-49.3 636.1,-43.3 636.9,-39.7 637.6,-39.4 638.4,-42.9 639.2,-49.4 639.9,-52.1 640.7,-44.6 641.4,-40.1 642.2,-39.2 643.0,-42.9 643.7,-50.2 644.5,-55.0 645.2,-46.1 646.0,-40.5 646.8,-38.9 647.5,-41.0 648.3,-45.3 649.1,-49.4 649.8,-43.7 650.6,-40.0 651.3,-38.8 652.1,-41.3 652.9,-46.8 653.6,-54.0 654.4,-46.0 655.1,-40.7 655.9,-38.6 656.7,-40.6 657.4,-45.4 658.2,-52.6 659.0,-45.8 659.7,-40.8 660.5,-38.6 661.2,-40.6 662.0,-46.2 662.8,-54.7 663.5,-48.1 664.3,-41.7 665.1,-38.6 665.8,-40.1 666.6,-45.2 667.3,-53.2 668.1,-48.4 668.9,-41.9 669.6,-38.6 670.4,-39.8 671.1,-44.9 671.9,-53.2 672.7,-49.8 673.4,-42.6 674.2,-38.7 675.0,-39.1 675.7,-42.8 676.5,-49.0 677.2,-47.7 678.0,-41.9 L678,0Z" fill="currentColor" stroke="currentColor"/><path id="s2v1" d="M435,0 L435.0,-47.1 435.8,-47.1 436.5,-42.7 437.3,-37.1 438.0,-37.2 438.8,-40.3 439.6,-44.8 440.3,-46.4 441.1,-42.4 441.9,-37.4 442.6,-37.0 443.4,-41.9 444.1,-47.8 444.9,-52.2 445.7,-44.7 446.4,-38.1 447.2,-37.9 447.9,-39.2 448.7,-43.8 449.5,-47.9 450.2,-41.6 451.0,-38.3 451.8,-37.7 452.5,-39.1 453.3,-47.3 454.0,-54.8 454.8,-44.8 455.6,-38.5 456.3,-36.7 457.1,-38.5 457.9,-43.6 458.6,-50.0 459.4,-43.9 460.1,-39.4 460.9,-37.0 461.7,-39.9 462.4,-45.3 463.2,-51.9 463.9,-46.4 464.7,-39.2 465.5,-36.4 466.2,-38.8 467.0,-43.5 467.8,-51.2 468.5,-45.7 469.3,-40.9 470.0,-37.7 470.8,-38.0 471.6,-41.3 472.3,-47.2 473.1,-45.2 473.8,-39.3 474.6,-36.1 475.4,-37.9 476.1,-41.2 476.9,-47.5 477.7,-45.7 478.4,-39.3 479.2,-37.5 479.9,-37.0 480.7,-40.1 481.5,-44.7 482.2,-43.5 483.0,-40.7 483.8,-36.5 484.5,-37.6 485.3,-40.6 486.0,-46.7 486.8,-48.0 487.6,-41.8 488.3,-36.8 489.1,-37.6 489.8,-39.0 490.6,-43.9 491.4,-45.4 492.1,-39.7 492.9,-36.8 493.7,-36.5 494.4,-39.3 495.2,-43.7 495.9,-46.0 496.7,-41.3 497.5,-37.9 498.2,-35.7 499.0,-40.0 499.7,-44.0 500.5,-50.3 501.3,-43.0 502.0,-38.4 502.8,-37.2 503.6,-38.9 504.3,-44.7 505.1,-50.5 505.8,-43.6 506.6,-37.5 507.4,-35.6 508.1,-39.0 508.9,-44.9 509.7,-53.4 510.4,-46.1 511.2,-40.0 511.9,-36.8 512.7,-38.1 513.5,-40.6 514.2,-46.5 515.0,-42.4 515.7,-37.6 516.5,-36.8 517.3,-36.8 518.0,-40.7 518.8,-46.7 519.6,-42.4 520.3,-39.0 521.1,-35.8 521.8,-36.4 522.6,-40.7 523.4,-45.7 524.1,-42.9 524.9,-38.7 525.6,-36.1 526.4,-36.8 527.2,-41.6 527.9,-50.2 528.7,-47.9 529.5,-41.8 530.2,-36.8 531.0,-36.6 531.7,-40.2 532.5,-45.3 533.3,-45.8 534.0,-39.0 534.8,-37.3 535.6,-37.0 536.3,-39.4 537.1,-46.8 537.8,-46.3 538.6,-41.9 539.4,-38.3 540.1,-37.2 540.9,-41.4 541.6,-47.8 542.4,-51.5 543.2,-43.0 543.9,-38.2 544.7,-36.6 545.5,-40.0 546.2,-44.0 547.0,-49.2 547.7,-42.7 548.5,-37.7 549.3,-37.4 550.0,-40.5 550.8,-46.1 551.5,-55.8 552.3,-45.9 553.1,-39.5 553.8,-37.1 554.6,-38.6 555.4,-43.1 556.1,-48.7 556.9,-42.8 557.6,-38.8 558.4,-36.5 559.2,-39.1 559.9,-44.4 560.7,-51.5 561.5,-46.0 562.2,-40.1 563.0,-36.1 563.7,-38.8 564.5,-43.5 565.3,-53.7 566.0,-46.5 566.8,-39.4 567.5,-37.2 568.3,-38.9 569.1,-46.0 569.8,-57.0 570.6,-52.0 571.4,-47.2 572.1,-43.4 572.9,-44.1 573.6,-50.2 574.4,-57.6 575.2,-55.2 575.9,-47.4 576.7,-43.2 577.4,-42.9 578.2,-48.5 579.0,-58.5 579.7,-58.2 580.5,-49.0 581.3,-43.4 582.0,-44.4 582.8,-49.0 583.5,-54.6 584.3,-57.8 585.1,-47.3 585.8,-43.0 586.6,-42.0 587.4,-47.8 588.1,-54.4 588.9,-55.2 589.6,-49.5 590.4,-44.3 591.2,-42.8 591.9,-45.7 592.7,-50.6 593.4,-51.9 594.2,-47.7 595.0,-42.1 595.7,-42.0 596.5,-46.6 597.3,-51.1 598.0,-58.5 598.8,-49.3 599.5,-43.7 600.3,-42.5 601.1,-44.6 601.8,-52.3 602.6,-59.7 603.3,-47.3 604.1,-40.7 604.9,-38.4 605.6,-40.2 606.4,-45.4 607.2,-55.8 607.9,-45.0 608.7,-38.7 609.4,-35.3 610.2,-36.7 611.0,-41.5 611.7,-49.5 612.5,-40.7 613.3,-33.4 614.0,-29.4 614.8,-31.9 615.5,-37.7 616.3,-46.8 617.1,-44.8 617.8,-40.1 618.6,-39.2 619.3,-40.5 620.1,-43.8 620.9,-52.0 621.6,-49.3 622.4,-42.3 623.2,-39.0 623.9,-39.3 624.7,-42.9 625.4,-49.1 626.2,-46.4 627.0,-40.9 627.7,-38.4 628.5,-39.2 629.2,-44.9 630.0,-52.7 630.8,-51.5 631.5,-44.6 632.3,-38.5 633.1,-38.2 633.8,-41.3 634.6,-48.3 635.3,-47.9 636.1,-42.9 636.9,-39.4 637.6,-38.2 638.4,-41.5 639.2,-47.9 639.9,-50.1 640.7,-43.1 641.4,-39.1 642.2,-39.1 643.0,-41.3 643.7,-48.1 644.5,-52.7 645.2,-44.8 646.0,-40.4 646.8,-38.5 647.5,-40.8 648.3,-43.8 649.1,-48.0 649.8,-43.3 650.6,-38.1 651.3,-36.9 652.1,-39.4 652.9,-45.8 653.6,-53.2 654.4,-45.5 655.1,-39.1 655.9,-37.3 656.7,-40.0 657.4,-43.4 658.2,-51.1 659.0,-44.9 659.7,-40.0 660.5,-37.2 661.2,-39.7 662.0,-44.6 662.8,-54.4 663.5,-46.4 664.3,-41.1 665.1,-36.8 665.8,-39.7 666.6,-44.4 667.3,-51.8 668.1,-47.5 668.9,-40.8 669.6,-36.8 670.4,-39.4 671.1,-43.2 671.9,-51.4 672.7,-47.8 673.4,-41.6 674.2,-37.8 675.0,-38.5 675.7,-41.8 676.5,-48.4 677.2,-47.2 678.0,-40.9 L678,0Z" fill="currentColor" stroke="currentColor"/><path id="s2v2" d="M435,0 L435.0,-48.2 435.8,-48.0 436.5,-41.5 437.3,-38.4 438.0,-38.3 438.8,-40.3 439.6,-44.9 440.3,-48.0 441.1,-41.3 441.9,-37.7 442.6,-36.8 443.4,-40.9 444.1,-48.9 444.9,-53.2 445.7,-43.2 446.4,-39.1 447.2,-38.2 447.9,-38.6 448.7,-44.3 449.5,-47.7 450.2,-42.2 451.0,-38.7 451.8,-36.7 452.5,-40.4 453.3,-46.4 454.0,-53.6 454.8,-44.0 455.6,-40.1 456.3,-36.9 457.1,-39.7 457.9,-44.4 458.6,-50.2 459.4,-43.8 460.1,-39.8 460.9,-36.8 461.7,-38.2 462.4,-44.0 463.2,-52.6 463.9,-45.0 464.7,-38.9 465.5,-37.6 466.2,-39.0 467.0,-42.8 467.8,-50.9 468.5,-47.3 469.3,-39.8 470.0,-36.3 470.8,-37.6 471.6,-40.8 472.3,-46.7 473.1,-44.7 473.8,-40.0 474.6,-37.8 475.4,-37.3 476.1,-42.1 476.9,-47.0 477.7,-45.8 478.4,-40.2 479.2,-36.2 479.9,-37.5 480.7,-40.1 481.5,-45.1 482.2,-45.1 483.0,-40.4 483.8,-37.1 484.5,-36.6 485.3,-41.8 486.0,-46.4 486.8,-48.0 487.6,-42.5 488.3,-37.1 489.1,-37.1 489.8,-39.2 490.6,-44.6 491.4,-45.4 492.1,-40.4 492.9,-36.8 493.7,-36.6 494.4,-38.5 495.2,-42.6 495.9,-46.5 496.7,-41.7 497.5,-37.5 498.2,-37.3 499.0,-40.0 499.7,-45.2 500.5,-49.9 501.3,-42.5 502.0,-37.8 502.8,-35.6 503.6,-39.6 504.3,-43.8 505.1,-51.5 505.8,-42.7 506.6,-38.4 507.4,-37.0 508.1,-39.3 508.9,-44.8 509.7,-54.7 510.4,-44.6 511.2,-39.5 511.9,-36.6 512.7,-36.7 513.5,-40.7 514.2,-47.1 515.0,-41.4 515.7,-38.4 516.5,-35.5 517.3,-37.1 518.0,-40.3 518.8,-45.5 519.6,-43.1 520.3,-37.8 521.1,-37.4 521.8,-37.6 522.6,-40.0 523.4,-47.3 524.1,-43.5 524.9,-38.1 525.6,-36.2 526.4,-36.8 527.2,-43.5 527.9,-50.8 528.7,-48.9 529.5,-41.5 530.2,-37.2 531.0,-36.4 531.7,-40.6 532.5,-46.1 533.3,-44.8 534.0,-39.0 534.8,-36.4 535.6,-36.6 536.3,-40.6 537.1,-45.1 537.8,-48.6 538.6,-41.7 539.4,-36.8 540.1,-36.2 540.9,-41.3 541.6,-47.8 542.4,-53.6 543.2,-43.4 543.9,-38.9 544.7,-37.2 545.5,-40.1 546.2,-45.9 547.0,-49.1 547.7,-42.2 548.5,-38.4 549.3,-36.4 550.0,-41.0 550.8,-47.1 551.5,-54.6 552.3,-45.3 553.1,-38.1 553.8,-37.4 554.6,-38.6 555.4,-42.7 556.1,-48.6 556.9,-41.3 557.6,-38.2 558.4,-36.7 559.2,-38.9 559.9,-44.3 560.7,-51.0 561.5,-44.3 562.2,-39.0 563.0,-37.4 563.7,-38.5 564.5,-45.0 565.3,-53.1 566.0,-47.7 566.8,-39.7 567.5,-36.0 568.3,-39.2 569.1,-46.1 569.8,-57.4 570.6,-53.5 571.4,-47.0 572.1,-43.5 572.9,-44.9 573.6,-50.5 574.4,-57.9 575.2,-54.2 575.9,-46.8 576.7,-43.0 577.4,-45.1 578.2,-50.3 579.0,-58.5 579.7,-56.7 580.5,-48.6 581.3,-43.3 582.0,-43.0 582.8,-48.6 583.5,-55.5 584.3,-57.1 585.1,-47.5 585.8,-43.5 586.6,-42.6 587.4,-46.7 588.1,-53.8 588.9,-56.2 589.6,-47.1 590.4,-42.9 591.2,-42.7 591.9,-45.0 592.7,-48.7 593.4,-51.7 594.2,-46.3 595.0,-42.1 595.7,-43.1 596.5,-45.3 597.3,-51.8 598.0,-57.9 598.8,-48.1 599.5,-42.7 600.3,-42.0 601.1,-44.3 601.8,-50.5 602.6,-58.2 603.3,-48.6 604.1,-40.7 604.9,-38.8 605.6,-41.3 606.4,-45.9 607.2,-54.3 607.9,-45.2 608.7,-38.0 609.4,-33.8 610.2,-35.4 611.0,-41.1 611.7,-47.4 612.5,-40.0 613.3,-33.3 614.0,-29.4 614.8,-32.0 615.5,-37.7 616.3,-46.9 617.1,-44.4 617.8,-41.2 618.6,-39.4 619.3,-39.8 620.1,-45.4 620.9,-51.1 621.6,-48.9 622.4,-41.8 623.2,-38.1 623.9,-39.8 624.7,-42.1 625.4,-49.3 626.2,-48.1 627.0,-41.4 627.7,-38.7 628.5,-38.3 629.2,-44.6 630.0,-54.5 630.8,-54.1 631.5,-45.1 632.3,-39.0 633.1,-38.1 633.8,-42.6 634.6,-47.6 635.3,-48.1 636.1,-41.4 636.9,-37.8 637.6,-37.6 638.4,-41.5 639.2,-48.0 639.9,-51.5 640.7,-43.3 641.4,-39.7 642.2,-38.6 643.0,-41.1 643.7,-48.7 644.5,-53.0 645.2,-45.1 646.0,-40.0 646.8,-37.9 647.5,-39.8 648.3,-44.7 649.1,-47.3 649.8,-41.6 650.6,-39.7 651.3,-38.3 652.1,-39.6 652.9,-45.2 653.6,-53.4 654.4,-44.7 655.1,-40.3 655.9,-37.0 656.7,-39.4 657.4,-44.3 658.2,-52.2 659.0,-44.9 659.7,-39.8 660.5,-37.9 661.2,-40.2 662.0,-45.7 662.8,-52.8 663.5,-45.8 664.3,-39.9 665.1,-37.4 665.8,-38.5 666.6,-44.9 667.3,-52.7 668.1,-46.7 668.9,-41.9 669.6,-38.5 670.4,-38.2 671.1,-44.5 671.9,-52.7 672.7,-48.8 673.4,-40.8 674.2,-38.7 675.0,-37.4 675.7,-42.2 676.5,-47.6 677.2,-46.6 678.0,-41.7 L678,0Z" fill="currentColor" stroke="currentColor"/><path id="s2v3" d="M435,0 L435.0,-46.3 435.8,-48.7 436.5,-41.0 437.3,-37.2 438.0,-37.7 438.8,-39.5 439.6,-46.7 440.3,-48.2 441.1,-41.6 441.9,-38.9 442.6,-36.9 443.4,-41.2 444.1,-47.7 444.9,-53.0 445.7,-45.0 446.4,-37.9 447.2,-37.8 447.9,-39.5 448.7,-44.5 449.5,-47.1 450.2,-41.9 451.0,-38.8 451.8,-38.0 452.5,-40.4 453.3,-45.6 454.0,-54.4 454.8,-45.4 455.6,-38.9 456.3,-36.8 457.1,-38.4 457.9,-43.3 458.6,-49.5 459.4,-44.3 460.1,-38.1 460.9,-37.9 461.7,-39.8 462.4,-45.3 463.2,-51.8 463.9,-45.7 464.7,-38.9 465.5,-36.1 466.2,-37.7 467.0,-43.6 467.8,-52.4 468.5,-45.5 469.3,-39.7 470.0,-37.6 470.8,-37.7 471.6,-42.3 472.3,-47.9 473.1,-43.8 473.8,-39.0 474.6,-36.3 475.4,-37.2 476.1,-42.1 476.9,-46.7 477.7,-44.4 478.4,-39.7 479.2,-37.1 479.9,-37.7 480.7,-41.0 481.5,-44.5 482.2,-43.4 483.0,-40.6 483.8,-36.5 484.5,-36.5 485.3,-41.2 486.0,-46.6 486.8,-49.3 487.6,-42.0 488.3,-37.3 489.1,-36.2 489.8,-39.2 490.6,-44.6 491.4,-44.5 492.1,-40.3 492.9,-36.8 493.7,-37.2 494.4,-39.2 495.2,-44.0 495.9,-46.6 496.7,-40.9 497.5,-37.6 498.2,-36.3 499.0,-38.6 499.7,-45.1 500.5,-48.9 501.3,-42.4 502.0,-38.4 502.8,-37.0 503.6,-37.9 504.3,-43.5 505.1,-51.6 505.8,-42.7 506.6,-38.5 507.4,-36.5 508.1,-38.4 508.9,-45.8 509.7,-55.3 510.4,-45.6 511.2,-38.4 511.9,-37.1 512.7,-36.9 513.5,-40.5 514.2,-46.9 515.0,-41.7 515.7,-37.9 516.5,-35.9 517.3,-37.3 518.0,-41.3 518.8,-46.5 519.6,-43.7 520.3,-38.8 521.1,-36.6 521.8,-38.0 522.6,-41.2 523.4,-46.5 524.1,-44.1 524.9,-39.0 525.6,-36.2 526.4,-38.0 527.2,-42.4 527.9,-51.3 528.7,-49.8 529.5,-42.1 530.2,-36.1 531.0,-36.1 531.7,-39.3 532.5,-45.8 533.3,-45.9 534.0,-40.8 534.8,-37.4 535.6,-37.1 536.3,-41.2 537.1,-46.3 537.8,-47.0 538.6,-40.5 539.4,-38.0 540.1,-37.9 540.9,-40.4 541.6,-49.1 542.4,-53.1 543.2,-44.4 543.9,-38.5 544.7,-37.2 545.5,-39.9 546.2,-45.4 547.0,-48.8 547.7,-41.5 548.5,-38.3 549.3,-36.9 550.0,-40.1 550.8,-46.3 551.5,-53.9 552.3,-44.0 553.1,-39.6 553.8,-36.1 554.6,-38.9 555.4,-42.4 556.1,-48.2 556.9,-42.1 557.6,-38.7 558.4,-37.5 559.2,-39.8 559.9,-43.2 560.7,-51.2 561.5,-45.1 562.2,-40.2 563.0,-36.1 563.7,-38.6 564.5,-44.2 565.3,-52.3 566.0,-47.4 566.8,-40.7 567.5,-36.3 568.3,-39.0 569.1,-45.1 569.8,-56.9 570.6,-52.0 571.4,-46.0 572.1,-43.3 572.9,-43.4 573.6,-50.6 574.4,-59.9 575.2,-54.6 575.9,-48.5 576.7,-43.3 577.4,-43.5 578.2,-49.3 579.0,-60.4 579.7,-57.2 580.5,-49.9 581.3,-43.3 582.0,-42.5 582.8,-47.9 583.5,-56.6 584.3,-55.2 585.1,-47.8 585.8,-42.8 586.6,-42.1 587.4,-45.8 588.1,-53.7 588.9,-55.2 589.6,-48.2 590.4,-44.0 591.2,-43.0 591.9,-45.5 592.7,-50.9 593.4,-52.1 594.2,-47.0 595.0,-42.2 595.7,-43.3 596.5,-44.9 597.3,-52.9 598.0,-58.3 598.8,-49.8 599.5,-42.8 600.3,-41.4 601.1,-44.7 601.8,-52.0 602.6,-60.1 603.3,-48.6 604.1,-40.4 604.9,-38.6 605.6,-40.2 606.4,-45.3 607.2,-56.0 607.9,-45.4 608.7,-38.2 609.4,-35.1 610.2,-36.2 611.0,-40.5 611.7,-49.3 612.5,-39.8 613.3,-33.5 614.0,-29.4 614.8,-33.0 615.5,-37.9 616.3,-47.5 617.1,-44.1 617.8,-40.0 618.6,-38.3 619.3,-40.7 620.1,-44.9 620.9,-51.0 621.6,-48.2 622.4,-41.5 623.2,-38.6 623.9,-38.2 624.7,-41.9 625.4,-48.6 626.2,-46.9 627.0,-42.5 627.7,-39.5 628.5,-39.8 629.2,-43.9 630.0,-52.5 630.8,-52.1 631.5,-43.1 632.3,-39.9 633.1,-39.5 633.8,-42.2 634.6,-48.3 635.3,-47.8 636.1,-41.3 636.9,-38.0 637.6,-39.2 638.4,-41.5 639.2,-47.8 639.9,-50.4 640.7,-43.7 641.4,-39.6 642.2,-37.4 643.0,-41.0 643.7,-48.4 644.5,-53.5 645.2,-46.1 646.0,-40.0 646.8,-38.4 647.5,-40.5 648.3,-44.8 649.1,-47.7 649.8,-42.2 650.6,-39.7 651.3,-37.0 652.1,-41.3 652.9,-44.6 653.6,-52.4 654.4,-44.5 655.1,-40.2 655.9,-37.3 656.7,-38.8 657.4,-44.9 658.2,-52.3 659.0,-44.0 659.7,-40.3 660.5,-38.4 661.2,-39.6 662.0,-45.7 662.8,-54.2 663.5,-47.4 664.3,-41.5 665.1,-37.0 665.8,-39.0 666.6,-43.7 667.3,-52.5 668.1,-46.5 668.9,-39.9 669.6,-36.7 670.4,-39.7 671.1,-44.2 671.9,-53.0 672.7,-48.6 673.4,-41.2 674.2,-37.5 675.0,-38.4 675.7,-40.8 676.5,-47.5 677.2,-45.3 678.0,-41.0 L678,0Z" fill="currentColor" stroke="currentColor"/><path id="s2v4" d="M435,0 L435.0,-47.1 435.8,-48.9 436.5,-41.6 437.3,-37.7 438.0,-38.1 438.8,-40.2 439.6,-46.6 440.3,-47.4 441.1,-41.3 441.9,-38.1 442.6,-38.2 443.4,-41.9 444.1,-48.7 444.9,-52.0 445.7,-44.1 446.4,-39.3 447.2,-37.6 447.9,-39.8 448.7,-44.5 449.5,-47.1 450.2,-41.8 451.0,-38.6 451.8,-38.1 452.5,-39.2 453.3,-47.3 454.0,-54.5 454.8,-45.3 455.6,-38.6 456.3,-36.2 457.1,-38.5 457.9,-44.2 458.6,-49.6 459.4,-44.6 460.1,-39.7 460.9,-37.7 461.7,-38.9 462.4,-44.2 463.2,-52.2 463.9,-44.6 464.7,-39.2 465.5,-36.5 466.2,-39.3 467.0,-42.9 467.8,-50.9 468.5,-45.8 469.3,-41.0 470.0,-36.6 470.8,-37.8 471.6,-41.2 472.3,-47.3 473.1,-43.5 473.8,-38.8 474.6,-36.5 475.4,-38.0 476.1,-40.8 476.9,-48.3 477.7,-45.1 478.4,-41.1 479.2,-38.0 479.9,-38.0 480.7,-39.8 481.5,-43.7 482.2,-44.5 483.0,-39.5 483.8,-37.0 484.5,-36.6 485.3,-39.9 486.0,-46.7 486.8,-48.8 487.6,-42.5 488.3,-36.7 489.1,-37.3 489.8,-38.8 490.6,-42.9 491.4,-46.2 492.1,-41.1 492.9,-37.5 493.7,-36.1 494.4,-38.2 495.2,-42.0 495.9,-46.4 496.7,-40.5 497.5,-36.8 498.2,-36.8 499.0,-39.1 499.7,-45.4 500.5,-49.0 501.3,-42.9 502.0,-38.1 502.8,-36.2 503.6,-39.1 504.3,-43.2 505.1,-50.5 505.8,-43.3 506.6,-37.8 507.4,-36.1 508.1,-38.5 508.9,-44.3 509.7,-53.8 510.4,-45.9 511.2,-38.9 511.9,-35.7 512.7,-38.4 513.5,-40.6 514.2,-46.1 515.0,-42.3 515.7,-38.9 516.5,-36.7 517.3,-36.9 518.0,-40.1 518.8,-45.3 519.6,-42.6 520.3,-38.0 521.1,-35.9 521.8,-37.9 522.6,-40.3 523.4,-45.3 524.1,-43.3 524.9,-39.6 525.6,-36.2 526.4,-37.7 527.2,-42.7 527.9,-50.3 528.7,-48.7 529.5,-42.1 530.2,-36.8 531.0,-37.8 531.7,-40.5 532.5,-44.3 533.3,-44.1 534.0,-40.5 534.8,-36.5 535.6,-37.5 536.3,-40.2 537.1,-46.4 537.8,-48.5 538.6,-41.3 539.4,-37.3 540.1,-36.3 540.9,-41.9 541.6,-49.3 542.4,-53.9 543.2,-44.3 543.9,-38.5 544.7,-36.1 545.5,-38.6 546.2,-45.5 547.0,-48.9 547.7,-42.1 548.5,-38.0 549.3,-35.8 550.0,-39.1 550.8,-48.3 551.5,-54.9 552.3,-45.0 553.1,-38.6 553.8,-36.6 554.6,-37.8 555.4,-43.5 556.1,-48.4 556.9,-41.6 557.6,-39.0 558.4,-37.3 559.2,-38.6 559.9,-44.9 560.7,-52.1 561.5,-45.9 562.2,-40.0 563.0,-37.1 563.7,-38.1 564.5,-43.9 565.3,-52.4 566.0,-46.3 566.8,-40.3 567.5,-36.0 568.3,-39.3 569.1,-46.0 569.8,-58.0 570.6,-54.0 571.4,-46.7 572.1,-42.3 572.9,-43.9 573.6,-50.9 574.4,-57.7 575.2,-56.3 575.9,-47.4 576.7,-44.0 577.4,-45.0 578.2,-49.1 579.0,-59.5 579.7,-57.8 580.5,-48.3 581.3,-43.2 582.0,-43.6 582.8,-48.4 583.5,-56.0 584.3,-57.4 585.1,-48.9 585.8,-42.7 586.6,-43.3 587.4,-46.3 588.1,-53.4 588.9,-56.2 589.6,-47.5 590.4,-43.8 591.2,-43.6 591.9,-44.2 592.7,-49.0 593.4,-51.7 594.2,-45.7 595.0,-43.4 595.7,-42.4 596.5,-45.3 597.3,-51.1 598.0,-58.4 598.8,-48.6 599.5,-42.8 600.3,-42.3 601.1,-45.7 601.8,-52.1 602.6,-58.3 603.3,-49.0 604.1,-40.4 604.9,-39.3 605.6,-39.8 606.4,-46.6 607.2,-53.6 607.9,-45.3 608.7,-38.8 609.4,-34.3 610.2,-36.4 611.0,-39.9 611.7,-47.6 612.5,-40.7 613.3,-33.2 614.0,-29.5 614.8,-32.0 615.5,-38.9 616.3,-47.2 617.1,-44.8 617.8,-40.8 618.6,-38.4 619.3,-39.8 620.1,-44.8 620.9,-52.6 621.6,-47.4 622.4,-42.0 623.2,-39.3 623.9,-39.3 624.7,-42.2 625.4,-48.4 626.2,-48.1 627.0,-41.8 627.7,-38.6 628.5,-38.5 629.2,-45.0 630.0,-52.3 630.8,-51.9 631.5,-45.1 632.3,-38.9 633.1,-38.5 633.8,-41.4 634.6,-46.2 635.3,-48.8 636.1,-41.5 636.9,-39.7 637.6,-37.7 638.4,-42.3 639.2,-49.4 639.9,-50.0 640.7,-42.5 641.4,-38.8 642.2,-37.6 643.0,-42.1 643.7,-49.5 644.5,-53.2 645.2,-44.3 646.0,-40.0 646.8,-38.2 647.5,-40.4 648.3,-44.7 649.1,-47.3 649.8,-43.7 650.6,-40.0 651.3,-38.4 652.1,-39.6 652.9,-45.5 653.6,-51.9 654.4,-44.4 655.1,-38.9 655.9,-37.5 656.7,-40.6 657.4,-45.2 658.2,-51.6 659.0,-45.5 659.7,-40.2 660.5,-38.1 661.2,-38.6 662.0,-43.9 662.8,-52.9 663.5,-47.1 664.3,-40.8 665.1,-38.5 665.8,-39.2 666.6,-44.9 667.3,-51.8 668.1,-46.4 668.9,-41.1 669.6,-37.3 670.4,-38.2 671.1,-42.9 671.9,-52.1 672.7,-49.2 673.4,-40.7 674.2,-37.7 675.0,-38.6 675.7,-41.4 676.5,-46.9 677.2,-45.4 678.0,-41.1 L678,0Z" fill="currentColor" stroke="currentColor"/><path id="s2l0" d="M435,0 L435.0,-25.0 435.8,-25.0 436.5,-25.0 437.3,-25.0 438.0,-25.0 438.8,-25.0 439.6,-25.0 440.3,-25.0 441.1,-25.0 441.9,-25.0 442.6,-25.0 443.4,-25.0 444.1,-25.0 444.9,-25.0 445.7,-25.0 446.4,-25.0 447.2,-25.0 447.9,-25.0 448.7,-25.0 449.5,-25.0 450.2,-25.0 451.0,-25.0 451.8,-25.0 452.5,-25.0 453.3,-25.0 454.0,-25.0 454.8,-25.0 455.6,-25.0 456.3,-25.0 457.1,-25.0 457.9,-25.0 458.6,-25.0 459.4,-25.0 460.1,-25.0 460.9,-25.0 461.7,-25.0 462.4,-25.0 463.2,-25.0 463.9,-25.0 464.7,-25.0 465.5,-25.0 466.2,-25.0 467.0,-25.0 467.8,-25.0 468.5,-25.0 469.3,-25.0 470.0,-25.0 470.8,-25.0 471.6,-25.0 472.3,-25.0 473.1,-25.0 473.8,-25.0 474.6,-25.0 475.4,-25.0 476.1,-25.0 476.9,-25.0 477.7,-25.0 478.4,-25.0 479.2,-25.0 479.9,-25.0 480.7,-25.0 481.5,-25.0 482.2,-25.0 483.0,-25.0 483.8,-25.0 484.5,-25.0 485.3,-25.0 486.0,-25.0 486.8,-25.0 487.6,-25.0 488.3,-25.0 489.1,-25.0 489.8,-25.0 490.6,-25.0 491.4,-25.0 492.1,-25.0 492.9,-25.0 493.7,-25.0 494.4,-25.0 495.2,-25.0 495.9,-25.0 496.7,-25.0 497.5,-25.0 498.2,-25.0 499.0,-25.0 499.7,-25.0 500.5,-25.0 501.3,-25.0 502.0,-25.0 502.8,-25.0 503.6,-25.0 504.3,-25.0 505.1,-25.0 505.8,-25.0 506.6,-25.0 507.4,-25.0 508.1,-25.0 508.9,-25.0 509.7,-25.0 510.4,-25.0 511.2,-25.0 511.9,-25.0 512.7,-25.0 513.5,-25.0 514.2,-25.0 515.0,-25.0 515.7,-25.0 516.5,-25.0 517.3,-25.0 518.0,-25.0 518.8,-25.0 519.6,-25.0 520.3,-25.0 521.1,-25.0 521.8,-25.0 522.6,-25.0 523.4,-25.0 524.1,-25.0 524.9,-25.0 525.6,-25.0 526.4,-25.0 527.2,-25.0 527.9,-25.0 528.7,-25.0 529.5,-25.0 530.2,-25.0 531.0,-25.0 531.7,-25.0 532.5,-25.0 533.3,-25.0 534.0,-25.0 534.8,-25.0 535.6,-25.0 536.3,-25.0 537.1,-25.0 537.8,-25.0 538.6,-25.0 539.4,-25.0 540.1,-25.0 540.9,-25.0 541.6,-25.0 542.4,-25.0 543.2,-25.0 543.9,-25.0 544.7,-25.0 545.5,-25.0 546.2,-25.0 547.0,-25.0 547.7,-25.0 548.5,-25.0 549.3,-25.0 550.0,-25.0 550.8,-25.0 551.5,-25.0 552.3,-25.0 553.1,-25.0 553.8,-25.0 554.6,-25.0 555.4,-25.0 556.1,-25.0 556.9,-25.0 557.6,-25.0 558.4,-25.0 559.2,-25.0 559.9,-25.0 560.7,-25.0 561.5,-25.0 562.2,-25.0 563.0,-25.0 563.7,-25.0 564.5,-25.0 565.3,-25.0 566.0,-25.0 566.8,-25.0 567.5,-25.0 568.3,-25.0 569.1,-25.0 569.8,-25.0 570.6,-25.0 571.4,-25.0 572.1,-25.0 572.9,-25.0 573.6,-25.0 574.4,-25.0 575.2,-25.0 575.9,-25.0 576.7,-25.0 577.4,-25.0 578.2,-25.0 579.0,-25.0 579.7,-25.0 580.5,-25.0 581.3,-25.0 582.0,-25.0 582.8,-25.0 583.5,-25.0 584.3,-25.0 585.1,-25.0 585.8,-25.0 586.6,-25.0 587.4,-25.0 588.1,-25.0 588.9,-25.0 589.6,-25.0 590.4,-25.0 591.2,-25.0 591.9,-25.0 592.7,-25.0 593.4,-25.0 594.2,-25.0 595.0,-25.0 595.7,-25.0 596.5,-25.0 597.3,-25.0 598.0,-25.0 598.8,-25.0 599.5,-25.0 600.3,-25.0 601.1,-25.0 601.8,-25.0 602.6,-25.0 603.3,-25.0 604.1,-25.0 604.9,-25.0 605.6,-25.0 606.4,-25.0 607.2,-25.0 607.9,-25.0 608.7,-25.0 609.4,-25.0 610.2,-25.0 611.0,-25.0 611.7,-25.0 612.5,-25.0 613.3,-25.0 614.0,-25.0 614.8,-25.0 615.5,-25.0 616.3,-25.0 617.1,-25.0 617.8,-25.0 618.6,-25.0 619.3,-25.0 620.1,-25.0 620.9,-25.0 621.6,-25.0 622.4,-25.0 623.2,-25.0 623.9,-25.0 624.7,-25.0 625.4,-25.0 626.2,-25.0 627.0,-25.0 627.7,-25.0 628.5,-25.0 629.2,-25.0 630.0,-25.0 630.8,-25.0 631.5,-25.0 632.3,-25.0 633.1,-25.0 633.8,-25.0 634.6,-25.0 635.3,-25.0 636.1,-25.0 636.9,-25.0 637.6,-25.0 638.4,-25.0 639.2,-25.0 639.9,-25.0 640.7,-25.0 641.4,-25.0 642.2,-25.0 643.0,-25.0 643.7,-25.0 644.5,-25.0 645.2,-25.0 646.0,-25.0 646.8,-25.0 647.5,-25.0 648.3,-25.0 649.1,-25.0 649.8,-25.0 650.6,-25.0 651.3,-25.0 652.1,-25.0 652.9,-25.0 653.6,-25.0 654.4,-25.0 655.1,-25.0 655.9,-25.0 656.7,-25.0 657.4,-25.0 658.2,-25.0 659.0,-25.0 659.7,-25.0 660.5,-25.0 661.2,-25.0 662.0,-25.0 662.8,-25.0 663.5,-25.0 664.3,-25.0 665.1,-25.0 665.8,-25.0 666.6,-25.0 667.3,-25.0 668.1,-25.0 668.9,-25.0 669.6,-25.0 670.4,-25.0 671.1,-25.0 671.9,-25.0 672.7,-25.0 673.4,-25.0 674.2,-25.0 675.0,-25.0 675.7,-25.0 676.5,-25.0 677.2,-25.0 678.0,-25.0 L678,0Z" fill="currentColor" stroke="currentColor"/><path id="s2l1" d="M435,0 L435.0,-24.5 435.8,-24.4 436.5,-25.0 437.3,-24.0 438.0,-24.4 438.8,-24.1 439.6,-23.8 440.3,-24.1 441.1,-24.1 441.9,-24.2 442.6,-24.4 443.4,-24.1 444.1,-24.1 444.9,-24.7 445.7,-24.0 446.4,-24.9 447.2,-24.4 447.9,-23.9 448.7,-24.8 449.5,-23.9 450.2,-24.4 451.0,-24.1 451.8,-24.9 452.5,-25.0 453.3,-24.7 454.0,-24.3 454.8,-23.9 455.6,-24.3 456.3,-24.4 457.1,-24.6 457.9,-24.4 458.6,-24.2 459.4,-24.0 460.1,-24.6 460.9,-24.2 461.7,-24.6 462.4,-24.7 463.2,-25.0 463.9,-24.5 464.7,-24.3 465.5,-24.4 466.2,-24.5 467.0,-24.1 467.8,-24.5 468.5,-24.2 469.3,-24.4 470.0,-23.9 470.8,-24.6 471.6,-24.5 472.3,-24.1 473.1,-24.7 473.8,-24.1 474.6,-24.6 475.4,-24.9 476.1,-24.4 476.9,-24.3 477.7,-24.7 478.4,-24.7 479.2,-23.8 479.9,-24.4 480.7,-24.2 481.5,-24.5 482.2,-24.4 483.0,-24.7 483.8,-24.8 484.5,-24.0 485.3,-24.2 486.0,-24.7 486.8,-24.5 487.6,-24.3 488.3,-25.0 489.1,-24.3 489.8,-23.8 490.6,-24.2 491.4,-24.5 492.1,-24.9 492.9,-24.4 493.7,-24.3 494.4,-24.2 495.2,-23.9 495.9,-24.7 496.7,-24.9 497.5,-23.8 498.2,-24.4 499.0,-23.9 499.7,-24.3 500.5,-23.9 501.3,-24.3 502.0,-24.1 502.8,-24.3 503.6,-23.9 504.3,-24.1 505.1,-23.8 505.8,-24.5 506.6,-24.8 507.4,-24.8 508.1,-24.5 508.9,-24.4 509.7,-24.2 510.4,-24.5 511.2,-23.8 511.9,-24.5 512.7,-25.0 513.5,-24.4 514.2,-24.2 515.0,-24.7 515.7,-24.1 516.5,-24.8 517.3,-23.9 518.0,-24.5 518.8,-23.9 519.6,-24.3 520.3,-24.1 521.1,-24.8 521.8,-23.9 522.6,-23.8 523.4,-24.9 524.1,-24.3 524.9,-24.8 525.6,-23.9 526.4,-24.0 527.2,-23.9 527.9,-24.1 528.7,-24.6 529.5,-24.3 530.2,-25.0 531.0,-24.9 531.7,-24.4 532.5,-24.1 533.3,-24.7 534.0,-25.0 534.8,-25.0 535.6,-24.6 536.3,-24.6 537.1,-23.9 537.8,-24.2 538.6,-23.9 539.4,-24.1 540.1,-24.2 540.9,-24.1 541.6,-24.8 542.4,-24.1 543.2,-24.3 543.9,-24.2 544.7,-24.4 545.5,-24.5 546.2,-24.0 547.0,-24.0 547.7,-24.8 548.5,-24.0 549.3,-24.4 550.0,-25.0 550.8,-24.1 551.5,-23.9 552.3,-24.5 553.1,-24.5 553.8,-24.7 554.6,-24.8 555.4,-24.4 556.1,-24.5 556.9,-24.2 557.6,-24.2 558.4,-24.8 559.2,-24.1 559.9,-24.5 560.7,-24.5 561.5,-24.8 562.2,-24.3 563.0,-24.2 563.7,-24.1 564.5,-24.0 565.3,-24.6 566.0,-24.4 566.8,-24.3 567.5,-24.6 568.3,-25.0 569.1,-24.1 569.8,-23.9 570.6,-24.5 571.4,-23.9 572.1,-25.0 572.9,-24.3 573.6,-24.6 574.4,-24.2 575.2,-24.6 575.9,-24.1 576.7,-24.8 577.4,-24.7 578.2,-24.5 579.0,-24.5 579.7,-24.5 580.5,-23.9 581.3,-24.4 582.0,-24.3 582.8,-24.9 583.5,-24.4 584.3,-24.1 585.1,-24.2 585.8,-23.8 586.6,-24.3 587.4,-24.6 588.1,-24.0 588.9,-23.8 589.6,-23.8 590.4,-24.9 591.2,-24.2 591.9,-24.8 592.7,-24.7 593.4,-24.1 594.2,-24.0 595.0,-24.3 595.7,-24.6 596.5,-24.4 597.3,-24.7 598.0,-24.7 598.8,-24.8 599.5,-23.9 600.3,-23.9 601.1,-24.8 601.8,-24.0 602.6,-24.1 603.3,-24.1 604.1,-24.7 604.9,-24.4 605.6,-24.0 606.4,-24.2 607.2,-23.9 607.9,-25.0 608.7,-24.6 609.4,-24.6 610.2,-24.5 611.0,-23.8 611.7,-23.8 612.5,-24.0 613.3,-24.2 614.0,-24.1 614.8,-24.0 615.5,-24.8 616.3,-24.3 617.1,-23.8 617.8,-24.8 618.6,-24.5 619.3,-24.6 620.1,-24.0 620.9,-24.5 621.6,-24.9 622.4,-24.6 623.2,-24.2 623.9,-24.4 624.7,-25.0 625.4,-24.0 626.2,-24.7 627.0,-25.0 627.7,-24.3 628.5,-24.2 629.2,-24.3 630.0,-24.9 630.8,-25.0 631.5,-24.1 632.3,-24.4 633.1,-25.0 633.8,-24.3 634.6,-24.9 635.3,-24.5 636.1,-24.2 636.9,-24.8 637.6,-24.5 638.4,-24.1 639.2,-24.7 639.9,-24.3 640.7,-25.0 641.4,-24.2 642.2,-24.8 643.0,-24.5 643.7,-23.8 644.5,-24.1 645.2,-24.8 646.0,-24.0 646.8,-24.5 647.5,-24.4 648.3,-24.7 649.1,-24.8 649.8,-23.8 650.6,-24.6 651.3,-24.8 652.1,-24.0 652.9,-24.9 653.6,-24.5 654.4,-24.9 655.1,-25.0 655.9,-23.8 656.7,-24.4 657.4,-24.2 658.2,-24.9 659.0,-24.6 659.7,-25.0 660.5,-24.0 661.2,-25.0 662.0,-23.9 662.8,-23.8 663.5,-24.8 664.3,-24.7 665.1,-24.8 665.8,-25.0 666.6,-24.5 667.3,-24.4 668.1,-23.9 668.9,-24.4 669.6,-24.8 670.4,-24.5 671.1,-24.8 671.9,-25.0 672.7,-24.6 673.4,-24.0 674.2,-24.9 675.0,-23.8 675.7,-24.0 676.5,-23.8 677.2,-24.3 678.0,-24.7 L678,0Z" fill="currentColor" stroke="currentColor"/><path id="s2l2" d="M435,0 L435.0,-24.1 435.8,-24.9 436.5,-24.4 437.3,-24.0 438.0,-24.4 438.8,-24.1 439.6,-24.8 440.3,-24.0 441.1,-24.9 441.9,-24.6 442.6,-24.3 443.4,-23.9 444.1,-24.9 444.9,-24.7 445.7,-24.1 446.4,-24.7 447.2,-24.6 447.9,-24.8 448.7,-23.8 449.5,-24.1 450.2,-24.6 451.0,-23.8 451.8,-23.9 452.5,-24.6 453.3,-25.0 454.0,-24.1 454.8,-24.3 455.6,-24.7 456.3,-25.0 457.1,-24.7 457.9,-23.9 458.6,-24.2 459.4,-24.2 460.1,-24.2 460.9,-24.7 461.7,-23.9 462.4,-24.5 463.2,-23.9 463.9,-24.3 464.7,-24.2 465.5,-24.0 466.2,-23.8 467.0,-24.2 467.8,-23.9 468.5,-24.5 469.3,-24.7 470.0,-24.7 470.8,-24.6 471.6,-23.9 472.3,-24.6 473.1,-24.7 473.8,-24.9 474.6,-24.1 475.4,-23.9 476.1,-24.5 476.9,-24.9 477.7,-24.1 478.4,-24.0 479.2,-24.5 479.9,-24.5 480.7,-24.6 481.5,-24.4 482.2,-24.2 483.0,-23.9 483.8,-24.6 484.5,-23.8 485.3,-24.3 486.0,-24.5 486.8,-24.0 487.6,-24.7 488.3,-24.4 489.1,-23.9 489.8,-24.0 490.6,-24.0 491.4,-24.4 492.1,-24.2 492.9,-24.1 493.7,-24.7 494.4,-23.8 495.2,-24.0 495.9,-24.4 496.7,-24.3 497.5,-23.9 498.2,-25.0 499.0,-24.7 499.7,-23.9 500.5,-25.0 501.3,-24.2 502.0,-24.7 502.8,-24.7 503.6,-25.0 504.3,-24.7 505.1,-24.6 505.8,-24.2 506.6,-24.0 507.4,-24.3 508.1,-24.9 508.9,-24.4 509.7,-23.9 510.4,-24.8 511.2,-24.2 511.9,-24.8 512.7,-24.7 513.5,-24.4 514.2,-24.0 515.0,-24.4 515.7,-24.8 516.5,-24.3 517.3,-25.0 518.0,-24.1 518.8,-24.3 519.6,-24.6 520.3,-24.3 521.1,-24.6 521.8,-24.4 522.6,-24.3 523.4,-24.0 524.1,-24.8 524.9,-23.8 525.6,-24.0 526.4,-24.8 527.2,-23.9 527.9,-24.7 528.7,-24.0 529.5,-24.8 530.2,-24.0 531.0,-24.0 531.7,-24.3 532.5,-24.2 533.3,-24.1 534.0,-24.3 534.8,-24.6 535.6,-24.1 536.3,-23.9 537.1,-24.4 537.8,-24.0 538.6,-24.6 539.4,-24.5 540.1,-24.2 540.9,-24.6 541.6,-24.1 542.4,-24.1 543.2,-24.8 543.9,-24.5 544.7,-23.9 545.5,-24.4 546.2,-25.0 547.0,-24.0 547.7,-24.8 548.5,-24.5 549.3,-23.9 550.0,-24.1 550.8,-24.1 551.5,-25.0 552.3,-24.7 553.1,-24.9 553.8,-23.8 554.6,-24.8 555.4,-24.8 556.1,-24.2 556.9,-24.1 557.6,-24.1 558.4,-24.4 559.2,-23.9 559.9,-24.3 560.7,-25.0 561.5,-24.0 562.2,-25.0 563.0,-23.8 563.7,-24.3 564.5,-24.3 565.3,-24.7 566.0,-24.0 566.8,-24.6 567.5,-24.3 568.3,-25.0 569.1,-24.2 569.8,-24.0 570.6,-24.3 571.4,-24.0 572.1,-24.3 572.9,-24.4 573.6,-24.0 574.4,-24.8 575.2,-24.6 575.9,-24.0 576.7,-24.1 577.4,-23.9 578.2,-24.1 579.0,-24.2 579.7,-24.2 580.5,-24.8 581.3,-24.1 582.0,-24.0 582.8,-24.8 583.5,-24.6 584.3,-24.5 585.1,-24.1 585.8,-25.0 586.6,-24.9 587.4,-23.9 588.1,-24.1 588.9,-24.5 589.6,-24.8 590.4,-25.0 591.2,-24.9 591.9,-23.9 592.7,-24.9 593.4,-24.0 594.2,-24.8 595.0,-24.0 595.7,-24.8 596.5,-24.2 597.3,-24.1 598.0,-24.4 598.8,-24.7 599.5,-24.4 600.3,-24.7 601.1,-23.8 601.8,-24.5 602.6,-24.3 603.3,-24.6 604.1,-24.5 604.9,-23.9 605.6,-23.9 606.4,-24.0 607.2,-23.9 607.9,-23.8 608.7,-25.0 609.4,-24.7 610.2,-24.9 611.0,-24.0 611.7,-24.9 612.5,-24.1 613.3,-24.8 614.0,-24.8 614.8,-24.6 615.5,-23.9 616.3,-24.7 617.1,-24.8 617.8,-24.1 618.6,-24.7 619.3,-24.3 620.1,-24.4 620.9,-24.2 621.6,-24.4 622.4,-24.8 623.2,-24.9 623.9,-24.0 624.7,-24.8 625.4,-24.7 626.2,-24.3 627.0,-23.9 627.7,-24.6 628.5,-24.6 629.2,-24.6 630.0,-24.5 630.8,-23.9 631.5,-24.3 632.3,-24.4 633.1,-24.7 633.8,-24.6 634.6,-24.5 635.3,-24.0 636.1,-23.9 636.9,-24.0 637.6,-24.8 638.4,-23.9 639.2,-24.7 639.9,-24.6 640.7,-24.5 641.4,-24.9 642.2,-24.4 643.0,-23.9 643.7,-24.9 644.5,-23.8 645.2,-24.5 646.0,-24.7 646.8,-24.4 647.5,-24.9 648.3,-24.6 649.1,-24.1 649.8,-24.7 650.6,-24.1 651.3,-24.7 652.1,-24.1 652.9,-24.1 653.6,-24.3 654.4,-24.5 655.1,-24.8 655.9,-24.9 656.7,-24.4 657.4,-24.6 658.2,-24.0 659.0,-24.9 659.7,-24.9 660.5,-24.6 661.2,-24.4 662.0,-24.1 662.8,-24.3 663.5,-24.7 664.3,-24.9 665.1,-24.2 665.8,-24.9 666.6,-24.1 667.3,-24.3 668.1,-23.9 668.9,-24.5 669.6,-24.5 670.4,-24.2 671.1,-24.9 671.9,-24.0 672.7,-24.3 673.4,-24.2 674.2,-25.0 675.0,-24.7 675.7,-24.9 676.5,-24.6 677.2,-24.6 678.0,-23.9 L678,0Z" fill="currentColor" stroke="currentColor"/><path id="s2l3" d="M435,0 L435.0,-24.5 435.8,-24.3 436.5,-24.5 437.3,-24.5 438.0,-25.0 438.8,-24.2 439.6,-24.4 440.3,-24.8 441.1,-24.1 441.9,-25.0 442.6,-23.9 443.4,-24.4 444.1,-24.0 444.9,-24.4 445.7,-24.9 446.4,-24.4 447.2,-24.8 447.9,-24.4 448.7,-25.0 449.5,-24.2 450.2,-24.1 451.0,-24.3 451.8,-24.6 452.5,-24.2 453.3,-24.6 454.0,-23.8 454.8,-23.9 455.6,-24.5 456.3,-24.0 457.1,-24.7 457.9,-23.9 458.6,-24.2 459.4,-25.0 460.1,-24.2 460.9,-24.6 461.7,-24.2 462.4,-24.9 463.2,-24.6 463.9,-23.9 464.7,-24.3 465.5,-24.4 466.2,-24.2 467.0,-24.9 467.8,-24.9 468.5,-24.5 469.3,-24.6 470.0,-24.5 470.8,-24.4 471.6,-24.9 472.3,-24.7 473.1,-24.0 473.8,-24.1 474.6,-24.3 475.4,-25.0 476.1,-24.2 476.9,-24.9 477.7,-24.8 478.4,-24.7 479.2,-23.8 479.9,-24.6 480.7,-24.7 481.5,-24.9 482.2,-24.5 483.0,-24.1 483.8,-24.6 484.5,-24.5 485.3,-24.9 486.0,-24.8 486.8,-24.9 487.6,-24.0 488.3,-24.0 489.1,-24.5 489.8,-24.3 490.6,-24.6 491.4,-24.2 492.1,-24.8 492.9,-24.6 493.7,-24.1 494.4,-24.6 495.2,-23.8 495.9,-24.5 496.7,-25.0 497.5,-24.4 498.2,-24.0 499.0,-24.8 499.7,-24.5 500.5,-24.3 501.3,-23.9 502.0,-25.0 502.8,-24.1 503.6,-24.9 504.3,-24.2 505.1,-23.9 505.8,-24.3 506.6,-25.0 507.4,-24.7 508.1,-24.5 508.9,-23.9 509.7,-24.5 510.4,-24.7 511.2,-24.1 511.9,-24.1 512.7,-23.8 513.5,-24.3 514.2,-24.1 515.0,-23.9 515.7,-24.8 516.5,-25.0 517.3,-24.0 518.0,-24.3 518.8,-24.0 519.6,-24.0 520.3,-24.9 521.1,-24.7 521.8,-24.0 522.6,-24.4 523.4,-24.1 524.1,-23.9 524.9,-25.0 525.6,-24.7 526.4,-25.0 527.2,-24.8 527.9,-24.6 528.7,-23.9 529.5,-24.8 530.2,-24.4 531.0,-24.5 531.7,-23.9 532.5,-24.2 533.3,-24.5 534.0,-24.9 534.8,-24.7 535.6,-24.9 536.3,-23.8 537.1,-24.7 537.8,-24.8 538.6,-25.0 539.4,-24.9 540.1,-24.3 540.9,-24.4 541.6,-24.3 542.4,-24.1 543.2,-24.8 543.9,-24.3 544.7,-24.3 545.5,-23.8 546.2,-24.5 547.0,-24.8 547.7,-24.8 548.5,-24.2 549.3,-24.0 550.0,-24.7 550.8,-24.0 551.5,-23.9 552.3,-24.6 553.1,-24.9 553.8,-23.9 554.6,-24.7 555.4,-23.8 556.1,-24.6 556.9,-24.4 557.6,-24.5 558.4,-25.0 559.2,-24.6 559.9,-24.9 560.7,-24.4 561.5,-24.9 562.2,-24.3 563.0,-24.4 563.7,-23.9 564.5,-24.0 565.3,-24.3 566.0,-24.1 566.8,-24.5 567.5,-24.0 568.3,-24.3 569.1,-24.0 569.8,-24.0 570.6,-24.2 571.4,-23.9 572.1,-25.0 572.9,-23.9 573.6,-24.4 574.4,-24.4 575.2,-24.8 575.9,-24.6 576.7,-24.4 577.4,-24.6 578.2,-25.0 579.0,-24.6 579.7,-24.8 580.5,-23.8 581.3,-24.9 582.0,-24.1 582.8,-24.1 583.5,-23.8 584.3,-24.1 585.1,-24.1 585.8,-24.3 586.6,-23.9 587.4,-24.0 588.1,-24.4 588.9,-23.8 589.6,-24.3 590.4,-24.5 591.2,-24.7 591.9,-24.3 592.7,-24.4 593.4,-24.7 594.2,-24.5 595.0,-24.5 595.7,-24.0 596.5,-24.9 597.3,-25.0 598.0,-24.4 598.8,-24.4 599.5,-25.0 600.3,-24.5 601.1,-24.9 601.8,-24.8 602.6,-24.1 603.3,-25.0 604.1,-24.8 604.9,-24.4 605.6,-24.0 606.4,-24.1 607.2,-24.4 607.9,-24.4 608.7,-24.0 609.4,-24.4 610.2,-24.1 611.0,-24.5 611.7,-24.9 612.5,-23.9 613.3,-24.8 614.0,-24.3 614.8,-24.2 615.5,-24.4 616.3,-24.6 617.1,-25.0 617.8,-24.5 618.6,-24.9 619.3,-24.4 620.1,-24.5 620.9,-25.0 621.6,-24.6 622.4,-24.5 623.2,-24.7 623.9,-23.9 624.7,-24.7 625.4,-25.0 626.2,-25.0 627.0,-25.0 627.7,-24.5 628.5,-25.0 629.2,-24.5 630.0,-23.9 630.8,-24.7 631.5,-24.2 632.3,-24.4 633.1,-24.8 633.8,-24.5 634.6,-25.0 635.3,-24.5 636.1,-24.9 636.9,-24.9 637.6,-24.5 638.4,-24.6 639.2,-24.8 639.9,-24.9 640.7,-24.7 641.4,-23.8 642.2,-23.8 643.0,-24.7 643.7,-25.0 644.5,-24.4 645.2,-23.9 646.0,-24.7 646.8,-23.8 647.5,-24.5 648.3,-24.7 649.1,-25.0 649.8,-24.7 650.6,-24.4 651.3,-24.7 652.1,-24.6 652.9,-24.1 653.6,-24.4 654.4,-24.9 655.1,-24.9 655.9,-24.0 656.7,-24.8 657.4,-24.6 658.2,-24.2 659.0,-23.8 659.7,-24.4 660.5,-24.1 661.2,-24.3 662.0,-24.0 662.8,-24.5 663.5,-24.8 664.3,-24.4 665.1,-24.3 665.8,-24.9 666.6,-24.3 667.3,-24.5 668.1,-24.6 668.9,-24.4 669.6,-24.6 670.4,-24.6 671.1,-23.8 671.9,-24.6 672.7,-24.5 673.4,-25.0 674.2,-24.7 675.0,-24.0 675.7,-24.4 676.5,-24.2 677.2,-23.9 678.0,-24.2 L678,0Z" fill="currentColor" stroke="currentColor"/><path id="s2l4" d="M435,0 L435.0,-23.9 435.8,-24.0 436.5,-24.8 437.3,-24.3 438.0,-25.0 438.8,-24.2 439.6,-23.9 440.3,-24.1 441.1,-23.9 441.9,-24.3 442.6,-24.1 443.4,-24.8 444.1,-24.7 444.9,-24.9 445.7,-24.9 446.4,-24.1 447.2,-24.9 447.9,-24.1 448.7,-24.7 449.5,-24.0 450.2,-23.8 451.0,-25.0 451.8,-24.3 452.5,-24.2 453.3,-24.5 454.0,-25.0 454.8,-24.4 455.6,-24.2 456.3,-24.4 457.1,-24.8 457.9,-24.4 458.6,-25.0 459.4,-24.8 460.1,-24.6 460.9,-24.4 461.7,-24.6 462.4,-24.7 463.2,-23.9 463.9,-24.9 464.7,-24.8 465.5,-24.1 466.2,-24.6 467.0,-24.0 467.8,-24.0 468.5,-24.4 469.3,-24.3 470.0,-24.6 470.8,-24.1 471.6,-23.8 472.3,-24.3 473.1,-24.6 473.8,-23.9 474.6,-25.0 475.4,-24.1 476.1,-23.9 476.9,-24.8 477.7,-24.2 478.4,-24.9 479.2,-24.6 479.9,-23.9 480.7,-24.9 481.5,-24.8 482.2,-24.9 483.0,-24.9 483.8,-24.8 484.5,-23.8 485.3,-24.3 486.0,-24.4 486.8,-24.0 487.6,-24.2 488.3,-23.8 489.1,-24.6 489.8,-24.4 490.6,-23.9 491.4,-24.7 492.1,-23.9 492.9,-24.6 493.7,-24.5 494.4,-24.5 495.2,-24.9 495.9,-24.6 496.7,-24.2 497.5,-24.0 498.2,-24.3 499.0,-25.0 499.7,-24.3 500.5,-24.2 501.3,-24.3 502.0,-24.7 502.8,-25.0 503.6,-24.4 504.3,-24.7 505.1,-24.0 505.8,-24.0 506.6,-25.0 507.4,-24.1 508.1,-24.5 508.9,-24.5 509.7,-24.5 510.4,-24.0 511.2,-24.9 511.9,-23.9 512.7,-23.9 513.5,-24.5 514.2,-23.8 515.0,-24.0 515.7,-24.2 516.5,-24.4 517.3,-24.2 518.0,-24.3 518.8,-24.1 519.6,-24.8 520.3,-24.5 521.1,-24.7 521.8,-25.0 522.6,-24.2 523.4,-24.3 524.1,-24.7 524.9,-24.0 525.6,-24.1 526.4,-24.1 527.2,-24.3 527.9,-24.7 528.7,-24.2 529.5,-24.7 530.2,-24.4 531.0,-24.0 531.7,-24.4 532.5,-24.0 533.3,-24.0 534.0,-24.5 534.8,-24.6 535.6,-24.7 536.3,-24.5 537.1,-24.9 537.8,-24.0 538.6,-24.7 539.4,-25.0 540.1,-24.9 540.9,-24.6 541.6,-24.6 542.4,-24.3 543.2,-24.6 543.9,-24.8 544.7,-24.5 545.5,-24.4 546.2,-24.4 547.0,-24.6 547.7,-24.4 548.5,-23.8 549.3,-24.6 550.0,-24.2 550.8,-24.5 551.5,-24.2 552.3,-24.6 553.1,-24.0 553.8,-23.8 554.6,-24.2 555.4,-24.1 556.1,-25.0 556.9,-24.2 557.6,-24.2 558.4,-24.8 559.2,-24.1 559.9,-24.0 560.7,-23.9 561.5,-24.5 562.2,-24.8 563.0,-24.8 563.7,-25.0 564.5,-24.4 565.3,-23.8 566.0,-24.6 566.8,-24.4 567.5,-24.9 568.3,-24.1 569.1,-24.6 569.8,-24.7 570.6,-24.0 571.4,-24.2 572.1,-24.3 572.9,-24.2 573.6,-24.9 574.4,-24.2 575.2,-24.3 575.9,-24.3 576.7,-24.6 577.4,-24.5 578.2,-24.9 579.0,-24.5 579.7,-24.5 580.5,-24.3 581.3,-24.4 582.0,-24.3 582.8,-24.4 583.5,-23.8 584.3,-24.8 585.1,-24.2 585.8,-24.1 586.6,-24.1 587.4,-24.8 588.1,-24.7 588.9,-24.2 589.6,-24.3 590.4,-24.6 591.2,-24.0 591.9,-24.5 592.7,-24.7 593.4,-24.5 594.2,-24.8 595.0,-24.1 595.7,-23.8 596.5,-24.1 597.3,-24.3 598.0,-24.9 598.8,-23.9 599.5,-24.0 600.3,-24.0 601.1,-24.1 601.8,-24.9 602.6,-24.7 603.3,-24.4 604.1,-24.3 604.9,-24.8 605.6,-23.9 606.4,-24.4 607.2,-24.1 607.9,-23.9 608.7,-24.7 609.4,-24.8 610.2,-24.3 611.0,-24.9 611.7,-25.0 612.5,-25.0 613.3,-24.1 614.0,-24.0 614.8,-24.6 615.5,-24.5 616.3,-24.3 617.1,-24.7 617.8,-24.6 618.6,-24.6 619.3,-24.7 620.1,-24.2 620.9,-24.4 621.6,-24.9 622.4,-24.9 623.2,-24.1 623.9,-24.4 624.7,-24.0 625.4,-24.1 626.2,-24.3 627.0,-24.7 627.7,-24.3 628.5,-24.5 629.2,-24.1 630.0,-24.7 630.8,-23.8 631.5,-23.9 632.3,-23.8 633.1,-24.6 633.8,-24.8 634.6,-24.5 635.3,-24.1 636.1,-24.2 636.9,-25.0 637.6,-24.8 638.4,-23.8 639.2,-24.4 639.9,-25.0 640.7,-24.3 641.4,-24.1 642.2,-23.9 643.0,-24.9 643.7,-24.2 644.5,-24.9 645.2,-24.2 646.0,-24.4 646.8,-25.0 647.5,-24.8 648.3,-24.5 649.1,-24.2 649.8,-23.8 650.6,-24.7 651.3,-24.7 652.1,-24.2 652.9,-24.5 653.6,-24.3 654.4,-24.0 655.1,-24.1 655.9,-24.5 656.7,-24.6 657.4,-24.2 658.2,-24.3 659.0,-24.2 659.7,-24.4 660.5,-24.1 661.2,-24.8 662.0,-24.0 662.8,-24.5 663.5,-24.5 664.3,-25.0 665.1,-24.0 665.8,-24.3 666.6,-24.3 667.3,-24.6 668.1,-25.0 668.9,-24.4 669.6,-24.4 670.4,-24.8 671.1,-24.0 671.9,-25.0 672.7,-24.0 673.4,-23.9 674.2,-24.9 675.0,-23.9 675.7,-23.9 676.5,-24.6 677.2,-24.5 678.0,-24.0 L678,0Z" fill="currentColor" stroke="currentColor"/></defs>
<g stroke-width="1.0"><use href="#s2v0" transform="matrix(1 0 0 1.0000 0 303.75)" color="#e1ddf7"/><use href="#s2v4" transform="matrix(1 0 0 0.9964 0 303.75)" color="#f9dcf9"/><use href="#s2v4" transform="matrix(1 0 0 0.9873 0 303.75)" color="#c0e2f5"/><use href="#s2v4" transform="matrix(1 0 0 0.9791 0 303.75)" color="#fce4e1"/><use href="#s2v3" transform="matrix(1 0 0 0.9744 0 303.75)" color="#f9e4d6"/><use href="#s2v4" transform="matrix(1 0 0 0.9668 0 303.75)" color="#d3faff"/><use href="#s2v4" transform="matrix(1 0 0 0.9590 0 303.75)" color="#fceccf"/><use href="#s2v3" transform="matrix(1 0 0 0.9502 0 303.75)" color="#e3f9db"/><use href="#s2v1" transform="matrix(1 0 0 0.9439 0 303.75)" color="#52406b"/><use href="#s2v4" transform="matrix(1 0 0 0.9247 0 303.75)" color="#622e5b"/><use href="#s2v1" transform="matrix(1 0 0 0.9079 0 303.75)" color="#1e4062"/><use href="#s2v1" transform="matrix(1 0 0 0.8908 0 303.75)" color="#682b24"/><use href="#s2v1" transform="matrix(1 0 0 0.8729 0 303.75)" color="#a35622"/><use href="#s2v1" transform="matrix(1 0 0 0.8515 0 303.75)" color="#43676e"/><use href="#s2v1" transform="matrix(1 0 0 0.8359 0 303.75)" color="#a0811b"/><use href="#s2v3" transform="matrix(1 0 0 0.8271 0 303.75)" color="#527747"/><use href="#s2v3" transform="matrix(1 0 0 0.8103 0 303.75)" color="#8c7cbe"/><use href="#s2v1" transform="matrix(1 0 0 0.7986 0 303.75)" color="#da8fd2"/><use href="#s2v4" transform="matrix(1 0 0 0.7724 0 303.75)" color="#629fd2"/><use href="#s2v1" transform="matrix(1 0 0 0.7583 0 303.75)" color="#ec736f"/><use href="#s2v1" transform="matrix(1 0 0 0.7328 0 303.75)" color="#f99d5f"/><use href="#s2v3" transform="matrix(1 0 0 0.7073 0 303.75)" color="#74cade"/><use href="#s2v4" transform="matrix(1 0 0 0.6938 0 303.75)" color="#f3ce7b"/><use href="#s2v1" transform="matrix(1 0 0 0.6823 0 303.75)" color="#a4c995"/><use href="#s2v4" transform="matrix(1 0 0 0.6719 0 303.75)" color="#705e9d"/><use href="#s2v4" transform="matrix(1 0 0 0.6560 0 303.75)" color="#a0428e"/><use href="#s2v1" transform="matrix(1 0 0 0.6415 0 303.75)" color="#2261aa"/><use href="#s2v1" transform="matrix(1 0 0 0.6247 0 303.75)" color="#c53119"/><use href="#s2v1" transform="matrix(1 0 0 0.6038 0 303.75)" color="#e38242"/><use href="#s2v3" transform="matrix(1 0 0 0.5816 0 303.75)" color="#73b7cd"/><use href="#s2v1" transform="matrix(1 0 0 0.5561 0 303.75)" color="#e7b426"/><use href="#s2v2" transform="matrix(1 0 0 0.5330 0 303.75)" color="#71a762"/><use href="#s2v2" transform="matrix(1 0 0 0.5211 0 303.75)" color="#b6abe3"/><use href="#s2v3" transform="matrix(1 0 0 0.5114 0 303.75)" color="#e7b0e4"/><use href="#s2v1" transform="matrix(1 0 0 0.4967 0 303.75)" color="#8ebcdb"/><use href="#s2v2" transform="matrix(1 0 0 0.4724 0 303.75)" color="#f39c9c"/><use href="#s2v1" transform="matrix(1 0 0 0.4611 0 303.75)" color="#f9c09a"/><use href="#s2v3" transform="matrix(1 0 0 0.4343 0 303.75)" color="#7edeee"/><use href="#s2v3" transform="matrix(1 0 0 0.4156 0 303.75)" color="#f5d9a2"/><use href="#s2v1" transform="matrix(1 0 0 0.3919 0 303.75)" color="#bedeb3"/><use href="#s2v4" transform="matrix(1 0 0 0.3805 0 303.75)" color="#685684"/><use href="#s2v2" transform="matrix(1 0 0 0.3665 0 303.75)" color="#7b3571"/><use href="#s2v3" transform="matrix(1 0 0 0.3449 0 303.75)" color="#225589"/><use href="#s2v2" transform="matrix(1 0 0 0.3349 0 303.75)" color="#94271b"/><use href="#s2v3" transform="matrix(1 0 0 0.3143 0 303.75)" color="#c76c2e"/><use href="#s2v1" transform="matrix(1 0 0 0.2887 0 303.75)" color="#568ac2"/><use href="#s2v3" transform="matrix(1 0 0 0.2699 0 303.75)" color="#d1ac19"/><use href="#s2v4" transform="matrix(1 0 0 0.2604 0 303.75)" color="#619254"/><use href="#s2v1" transform="matrix(1 0 0 0.2359 0 303.75)" color="#7e6da9"/><use href="#s2v1" transform="matrix(1 0 0 0.2217 0 303.75)" color="#c055b1"/><use href="#s2v2" transform="matrix(1 0 0 0.2099 0 303.75)" color="#3585c7"/><use href="#s2v3" transform="matrix(1 0 0 0.1895 0 303.75)" color="#e34356"/><use href="#s2v2" transform="matrix(1 0 0 0.1719 0 303.75)" color="#fa7319"/><use href="#s2v2" transform="matrix(1 0 0 0.1485 0 303.75)" color="#679ef3"/><use href="#s2v1" transform="matrix(1 0 0 0.1282 0 303.75)" color="#e3bb19"/><use href="#s2v3" transform="matrix(1 0 0 0.1101 0 303.75)" color="#66ae5d"/><use href="#s2v4" transform="matrix(1 0 0 0.0996 0 303.75)" color="#e1ddf7"/><use href="#s2v3" transform="matrix(1 0 0 0.0905 0 303.75)" color="#f9dcf9"/><use href="#s2v2" transform="matrix(1 0 0 0.0854 0 303.75)" color="#c0e2f5"/><use href="#s2v4" transform="matrix(1 0 0 0.0789 0 303.75)" color="#fce4e1"/><use href="#s2v2" transform="matrix(1 0 0 0.0739 0 303.75)" color="#f9e4d6"/><use href="#s2v3" transform="matrix(1 0 0 0.0695 0 303.75)" color="#d3faff"/><use href="#s2v1" transform="matrix(1 0 0 0.0657 0 303.75)" color="#fceccf"/><use href="#s2v4" transform="matrix(1 0 0 0.0620 0 303.75)" color="#e3f9db"/><use href="#s2v4" transform="matrix(1 0 0 0.0581 0 303.75)" color="#52406b"/><use href="#s2v3" transform="matrix(1 0 0 0.0404 0 303.75)" color="#622e5b"/><use href="#s2v4" transform="matrix(1 0 0 0.0205 0 303.75)" color="#1e4062"/><use href="#s2v2" transform="matrix(1 0 0 0.0098 0 303.75)" color="#682b24"/><use href="#s2l0" transform="matrix(1 0 0 1.0000 0 328.8)" color="#a35622"/><use href="#s2l4" transform="matrix(1 0 0 0.9787 0 328.8)" color="#43676e"/><use href="#s2l2" transform="matrix(1 0 0 0.9609 0 328.8)" color="#a0811b"/><use href="#s2l4" transform="matrix(1 0 0 0.9364 0 328.8)" color="#527747"/><use href="#s2l3" transform="matrix(1 0 0 0.9248 0 328.8)" color="#8c7cbe"/><use href="#s2l3" transform="matrix(1 0 0 0.8922 0 328.8)" color="#da8fd2"/><use href="#s2l2" transform="matrix(1 0 0 0.8725 0 328.8)" color="#629fd2"/><use href="#s2l3" transform="matrix(1 0 0 0.8581 0 328.8)" color="#ec736f"/><use href="#s2l3" transform="matrix(1 0 0 0.8241 0 328.8)" color="#f99d5f"/><use href="#s2l4" transform="matrix(1 0 0 0.8034 0 328.8)" color="#74cade"/><use href="#s2l4" transform="matrix(1 0 0 0.7690 0 328.8)" color="#f3ce7b"/><use href="#s2l2" transform="matrix(1 0 0 0.7520 0 328.8)" color="#a4c995"/><use href="#s2l2" transform="matrix(1 0 0 0.7212 0 328.8)" color="#705e9d"/><use href="#s2l1" transform="matrix(1 0 0 0.7047 0 328.8)" color="#a0428e"/><use href="#s2l3" transform="matrix(1 0 0 0.6835 0 328.8)" color="#2261aa"/><use href="#s2l2" transform="matrix(1 0 0 0.6479 0 328.8)" color="#c53119"/><use href="#s2l1" transform="matrix(1 0 0 0.6174 0 328.8)" color="#e38242"/><use href="#s2l4" transform="matrix(1 0 0 0.5837 0 328.8)" color="#73b7cd"/><use href="#s2l4" transform="matrix(1 0 0 0.5703 0 328.8)" color="#e7b426"/><use href="#s2l4" transform="matrix(1 0 0 0.5408 0 328.8)" color="#71a762"/><use href="#s2l1" transform="matrix(1 0 0 0.5194 0 328.8)" color="#b6abe3"/><use href="#s2l2" transform="matrix(1 0 0 0.4885 0 328.8)" color="#e7b0e4"/><use href="#s2l1" transform="matrix(1 0 0 0.4581 0 328.8)" color="#8ebcdb"/><use href="#s2l1" transform="matrix(1 0 0 0.4315 0 328.8)" color="#f39c9c"/><use href="#s2l1" transform="matrix(1 0 0 0.3996 0 328.8)" color="#f9c09a"/><use href="#s2l4" transform="matrix(1 0 0 0.3798 0 328.8)" color="#7edeee"/><use href="#s2l3" transform="matrix(1 0 0 0.3492 0 328.8)" color="#f5d9a2"/><use href="#s2l2" transform="matrix(1 0 0 0.3342 0 328.8)" color="#bedeb3"/><use href="#s2l3" transform="matrix(1 0 0 0.3116 0 328.8)" color="#685684"/><use href="#s2l2" transform="matrix(1 0 0 0.2977 0 328.8)" color="#7b3571"/><use href="#s2l3" transform="matrix(1 0 0 0.2854 0 328.8)" color="#225589"/><use href="#s2l3" transform="matrix(1 0 0 0.2707 0 328.8)" color="#94271b"/><use href="#s2l3" transform="matrix(1 0 0 0.2564 0 328.8)" color="#c76c2e"/><use href="#s2l3" transform="matrix(1 0 0 0.2368 0 328.8)" color="#568ac2"/><use href="#s2l3" transform="matrix(1 0 0 0.2220 0 328.8)" color="#d1ac19"/><use href="#s2l1" transform="matrix(1 0 0 0.2029 0 328.8)" color="#619254"/><use href="#s2l1" transform="matrix(1 0 0 0.1814 0 328.8)" color="#7e6da9"/><use href="#s2l4" transform="matrix(1 0 0 0.1555 0 328.8)" color="#c055b1"/><use href="#s2l3" transform="matrix(1 0 0 0.1253 0 328.8)" color="#3585c7"/><use href="#s2l4" transform="matrix(1 0 0 0.1015 0 328.8)" color="#e34356"/><use href="#s2l4" transform="matrix(1 0 0 0.0878 0 328.8)" color="#fa7319"/><use href="#s2l1" transform="matrix(1 0 0 0.0597 0 328.8)" color="#679ef3"/><use href="#s2l3" transform="matrix(1 0 0 0.0469 0 328.8)" color="#e3bb19"/><use href="#s2l4" transform="matrix(1 0 0 0.0140 0 328.8)" color="#66ae5d"/></g>
<rect x="373" y="362.3" width="14" height="4" rx="2" fill="#56a64b"/>
<text x="395" y="368.3" font-size="12.5" fill="#24292e" text-anchor="start" font-weight="normal" letter-spacing="0.98" >distributor-zone-a-56fd759c86-2bql8</text>
<rect x="373" y="386.0" width="14" height="4" rx="2" fill="#e0b400"/>
<text x="395" y="392.0" font-size="12.5" fill="#24292e" text-anchor="start" font-weight="normal" letter-spacing="0.98" >distributor-zone-a-56fd759c86-48qpb</text>
<rect x="373" y="409.5" width="14" height="4" rx="2" fill="#5794f2"/>
<text x="395" y="415.5" font-size="12.5" fill="#24292e" text-anchor="start" font-weight="normal" letter-spacing="0.98" >distributor-zone-a-56fd759c86-5jxxw</text>
<rect x="90.5" y="631.5" width="244.0" height="1" fill="#e6e7e8"/>
<text x="86.0" y="636.3" font-size="12" fill="#24292e" text-anchor="end" font-weight="normal" letter-spacing="0.9" >0 B/s</text>
<rect x="90.5" y="592.5" width="244.0" height="1" fill="#e6e7e8"/>
<text x="86.0" y="597.3" font-size="12" fill="#24292e" text-anchor="end" font-weight="normal" letter-spacing="0.9" >100 MB/s</text>
<rect x="90.5" y="553.5" width="244.0" height="1" fill="#e6e7e8"/>
<text x="86.0" y="558.3" font-size="12" fill="#24292e" text-anchor="end" font-weight="normal" letter-spacing="0.9" >200 MB/s</text>
<rect x="113.8" y="527.6" width="1" height="108.4" fill="#e6e7e8"/>
<text x="114.5" y="651.4" font-size="12" fill="#24292e" text-anchor="middle" font-weight="normal" letter-spacing="0.35" >15:30</text>
<rect x="174.8" y="527.6" width="1" height="108.4" fill="#e6e7e8"/>
<text x="175.5" y="651.4" font-size="12" fill="#24292e" text-anchor="middle" font-weight="normal" letter-spacing="0.35" >15:45</text>
<rect x="235.8" y="527.6" width="1" height="108.4" fill="#e6e7e8"/>
<text x="236.5" y="651.4" font-size="12" fill="#24292e" text-anchor="middle" font-weight="normal" letter-spacing="0.35" >16:00</text>
<rect x="296.8" y="527.6" width="1" height="108.4" fill="#e6e7e8"/>
<text x="297.5" y="651.4" font-size="12" fill="#24292e" text-anchor="middle" font-weight="normal" letter-spacing="0.35" >16:15</text>
<defs><path id="s3v0" d="M90.5,0 L90.5,-28.1 92.0,-28.2 93.5,-28.2 95.0,-27.6 96.5,-27.5 98.0,-27.9 99.5,-27.7 101.0,-28.3 102.5,-28.2 104.1,-28.0 105.6,-28.0 107.1,-28.1 108.6,-27.5 110.1,-27.8 111.6,-27.5 113.1,-28.3 114.6,-27.3 116.1,-28.1 117.6,-27.3 119.1,-27.9 120.6,-27.5 122.1,-27.6 123.6,-28.1 125.1,-27.1 126.6,-27.2 128.2,-28.1 129.7,-27.6 131.2,-27.1 132.7,-28.1 134.2,-28.1 135.7,-27.1 137.2,-27.4 138.7,-27.1 140.2,-27.3 141.7,-27.6 143.2,-27.1 144.7,-27.7 146.2,-26.9 147.7,-27.0 149.2,-27.7 150.7,-27.3 152.3,-27.3 153.8,-27.4 155.3,-27.3 156.8,-27.2 158.3,-26.8 159.8,-27.5 161.3,-27.8 162.8,-27.7 164.3,-27.4 165.8,-27.0 167.3,-27.0 168.8,-27.4 170.3,-27.3 171.8,-26.7 173.3,-26.8 174.8,-26.9 176.4,-27.1 177.9,-27.4 179.4,-27.0 180.9,-26.5 182.4,-27.3 183.9,-26.9 185.4,-27.0 186.9,-26.6 188.4,-26.8 189.9,-30.5 191.4,-38.9 192.9,-45.5 194.4,-54.2 195.9,-62.4 197.4,-74.7 198.9,-83.4 200.5,-86.8 202.0,-86.7 203.5,-87.5 205.0,-85.2 206.5,-86.4 208.0,-85.2 209.5,-85.2 211.0,-85.6 212.5,-87.0 214.0,-85.1 215.5,-86.5 217.0,-83.5 218.5,-85.8 220.0,-83.7 221.5,-82.8 223.0,-93.0 224.5,-91.3 226.1,-81.1 227.6,-82.1 229.1,-83.9 230.6,-82.6 232.1,-82.3 233.6,-81.7 235.1,-81.9 236.6,-84.0 238.1,-85.3 239.6,-85.5 241.1,-84.0 242.6,-82.5 244.1,-83.6 245.6,-85.3 247.1,-85.6 248.6,-85.0 250.2,-83.8 251.7,-84.9 253.2,-84.9 254.7,-84.7 256.2,-81.8 257.7,-82.3 259.2,-80.3 260.7,-75.1 262.2,-70.7 263.7,-67.5 265.2,-61.1 266.7,-57.8 268.2,-52.0 269.7,-47.5 271.2,-43.5 272.7,-45.3 274.3,-45.8 275.8,-39.5 277.3,-37.7 278.8,-37.8 280.3,-37.0 281.8,-38.2 283.3,-37.5 284.8,-37.3 286.3,-37.6 287.8,-38.5 289.3,-37.9 290.8,-38.1 292.3,-38.6 293.8,-38.7 295.3,-38.4 296.8,-37.9 298.4,-38.2 299.9,-38.7 301.4,-38.6 302.9,-38.5 304.4,-39.3 305.9,-40.5 307.4,-41.3 308.9,-40.2 310.4,-38.5 311.9,-38.7 313.4,-38.4 314.9,-38.1 316.4,-38.1 317.9,-38.0 319.4,-37.3 320.9,-37.5 322.5,-36.8 324.0,-36.2 325.5,-36.5 327.0,-36.3 328.5,-37.1 330.0,-36.6 331.5,-36.2 333.0,-36.2 334.5,-35.3 L334.5,0Z" fill="currentColor" stroke="currentColor"/><path id="s3v1" d="M90.5,0 L90.5,-27.8 92.0,-27.3 93.5,-27.9 95.0,-26.3 96.5,-26.1 98.0,-27.5 99.5,-27.3 101.0,-26.9 102.5,-27.1 104.1,-26.7 105.6,-27.4 107.1,-27.8 108.6,-27.0 110.1,-26.5 111.6,-27.0 113.1,-27.7 114.6,-26.6 116.1,-27.4 117.6,-26.6 119.1,-26.4 120.6,-27.3 122.1,-27.6 123.6,-26.5 125.1,-25.7 126.6,-25.6 128.2,-27.4 129.7,-26.1 131.2,-25.6 132.7,-27.7 134.2,-26.8 135.7,-25.8 137.2,-26.4 138.7,-26.3 140.2,-26.8 141.7,-27.0 143.2,-26.7 144.7,-27.5 146.2,-26.0 147.7,-26.6 149.2,-26.4 150.7,-27.2 152.3,-25.8 153.8,-26.3 155.3,-25.8 156.8,-25.7 158.3,-25.3 159.8,-26.6 161.3,-27.7 162.8,-26.5 164.3,-27.1 165.8,-26.5 167.3,-25.9 168.8,-26.5 170.3,-26.6 171.8,-25.2 173.3,-25.8 174.8,-26.4 176.4,-26.7 177.9,-26.0 179.4,-26.3 180.9,-25.3 182.4,-26.8 183.9,-26.6 185.4,-26.1 186.9,-25.3 188.4,-26.6 189.9,-29.0 191.4,-36.7 192.9,-43.3 194.4,-51.5 195.9,-62.4 197.4,-71.9 198.9,-79.1 200.5,-86.5 202.0,-85.3 203.5,-86.1 205.0,-82.5 206.5,-84.2 208.0,-82.8 209.5,-81.3 211.0,-85.6 212.5,-86.7 214.0,-84.5 215.5,-85.8 217.0,-83.2 218.5,-80.8 220.0,-79.4 221.5,-82.4 223.0,-90.2 224.5,-89.6 226.1,-79.5 227.6,-80.3 229.1,-80.6 230.6,-79.7 232.1,-80.6 233.6,-80.8 235.1,-80.3 236.6,-83.4 238.1,-82.5 239.6,-81.8 241.1,-82.1 242.6,-82.1 244.1,-82.7 245.6,-83.4 247.1,-82.5 248.6,-81.1 250.2,-81.9 251.7,-80.8 253.2,-81.7 254.7,-82.5 256.2,-79.9 257.7,-79.8 259.2,-76.9 260.7,-73.2 262.2,-67.8 263.7,-65.6 265.2,-60.2 266.7,-55.9 268.2,-49.8 269.7,-47.3 271.2,-42.4 272.7,-44.2 274.3,-43.4 275.8,-37.3 277.3,-36.9 278.8,-35.8 280.3,-35.2 281.8,-37.6 283.3,-36.5 284.8,-37.0 286.3,-35.8 287.8,-37.0 289.3,-35.9 290.8,-36.2 292.3,-37.0 293.8,-37.0 295.3,-37.1 296.8,-37.7 298.4,-36.9 299.9,-38.7 301.4,-38.3 302.9,-36.7 304.4,-39.2 305.9,-40.2 307.4,-41.1 308.9,-38.1 310.4,-38.1 311.9,-38.6 313.4,-36.4 314.9,-37.8 316.4,-36.2 317.9,-36.4 319.4,-35.4 320.9,-35.4 322.5,-35.5 324.0,-34.5 325.5,-36.4 327.0,-34.6 328.5,-35.9 330.0,-35.0 331.5,-36.0 333.0,-34.6 334.5,-33.4 L334.5,0Z" fill="currentColor" stroke="currentColor"/><path id="s3v2" d="M90.5,0 L90.5,-27.9 92.0,-27.7 93.5,-27.3 95.0,-26.3 96.5,-27.1 98.0,-27.6 99.5,-27.3 101.0,-27.3 102.5,-26.9 104.1,-27.4 105.6,-27.3 107.1,-27.4 108.6,-26.9 110.1,-27.1 111.6,-27.3 113.1,-27.4 114.6,-25.7 116.1,-27.4 117.6,-26.1 119.1,-27.7 120.6,-26.4 122.1,-26.3 123.6,-26.9 125.1,-26.3 126.6,-26.4 128.2,-27.0 129.7,-26.1 131.2,-26.9 132.7,-28.0 134.2,-26.8 135.7,-25.6 137.2,-26.6 138.7,-26.4 140.2,-26.1 141.7,-27.3 143.2,-26.7 144.7,-27.3 146.2,-26.0 147.7,-26.5 149.2,-27.3 150.7,-26.1 152.3,-25.7 153.8,-26.9 155.3,-26.1 156.8,-26.5 158.3,-25.4 159.8,-26.5 161.3,-27.3 162.8,-27.4 164.3,-27.3 165.8,-26.3 167.3,-26.4 168.8,-27.1 170.3,-26.7 171.8,-26.2 173.3,-25.6 174.8,-26.7 176.4,-25.5 177.9,-26.6 179.4,-26.1 180.9,-25.8 182.4,-26.0 183.9,-25.6 185.4,-26.1 186.9,-25.9 188.4,-25.7 189.9,-28.9 191.4,-37.9 192.9,-43.5 194.4,-51.1 195.9,-60.7 197.4,-73.7 198.9,-82.2 200.5,-83.0 202.0,-83.2 203.5,-82.5 205.0,-80.8 206.5,-85.1 208.0,-84.3 209.5,-83.9 211.0,-84.7 212.5,-83.3 214.0,-80.7 215.5,-81.8 217.0,-82.3 218.5,-81.4 220.0,-82.1 221.5,-80.7 223.0,-88.9 224.5,-90.8 226.1,-80.6 227.6,-78.0 229.1,-82.4 230.6,-80.8 232.1,-79.5 233.6,-78.4 235.1,-81.9 236.6,-82.3 238.1,-83.1 239.6,-83.0 241.1,-82.9 242.6,-79.6 244.1,-78.8 245.6,-83.3 247.1,-82.8 248.6,-84.4 250.2,-82.4 251.7,-81.5 253.2,-84.3 254.7,-80.2 256.2,-77.3 257.7,-81.8 259.2,-75.8 260.7,-73.4 262.2,-67.4 263.7,-64.4 265.2,-60.0 266.7,-55.4 268.2,-49.9 269.7,-45.2 271.2,-42.8 272.7,-43.3 274.3,-43.1 275.8,-37.9 277.3,-36.5 278.8,-37.5 280.3,-35.9 281.8,-37.4 283.3,-35.9 284.8,-35.8 286.3,-36.4 287.8,-38.1 289.3,-36.4 290.8,-36.6 292.3,-38.1 293.8,-36.6 295.3,-36.9 296.8,-37.6 298.4,-36.1 299.9,-38.4 301.4,-37.9 302.9,-36.8 304.4,-37.9 305.9,-39.1 307.4,-39.7 308.9,-39.1 310.4,-37.7 311.9,-38.3 313.4,-38.2 314.9,-36.5 316.4,-36.4 317.9,-36.7 319.4,-35.6 320.9,-36.7 322.5,-36.2 324.0,-35.4 325.5,-34.6 327.0,-36.2 328.5,-35.9 330.0,-36.0 331.5,-34.5 333.0,-35.4 334.5,-34.6 L334.5,0Z" fill="currentColor" stroke="currentColor"/><path id="s3v3" d="M90.5,0 L90.5,-27.4 92.0,-27.3 93.5,-26.9 95.0,-27.0 96.5,-26.1 98.0,-27.7 99.5,-27.3 101.0,-28.1 102.5,-28.0 104.1,-26.7 105.6,-26.7 107.1,-27.8 108.6,-27.2 110.1,-27.1 111.6,-26.2 113.1,-26.9 114.6,-26.1 116.1,-27.1 117.6,-27.0 119.1,-27.3 120.6,-27.2 122.1,-26.7 123.6,-27.1 125.1,-26.8 126.6,-26.8 128.2,-26.8 129.7,-27.6 131.2,-25.8 132.7,-26.6 134.2,-26.5 135.7,-26.5 137.2,-26.5 138.7,-26.2 140.2,-26.2 141.7,-26.0 143.2,-26.0 144.7,-27.2 146.2,-25.5 147.7,-26.3 149.2,-26.7 150.7,-26.1 152.3,-27.3 153.8,-26.2 155.3,-26.2 156.8,-26.4 158.3,-25.9 159.8,-26.7 161.3,-27.4 162.8,-26.9 164.3,-27.3 165.8,-26.2 167.3,-26.0 168.8,-26.6 170.3,-26.4 171.8,-25.2 173.3,-25.4 174.8,-26.7 176.4,-25.8 177.9,-26.4 179.4,-26.9 180.9,-25.9 182.4,-27.0 183.9,-26.8 185.4,-26.1 186.9,-25.2 188.4,-26.3 189.9,-28.9 191.4,-37.2 192.9,-45.2 194.4,-51.4 195.9,-60.2 197.4,-70.5 198.9,-79.8 200.5,-82.9 202.0,-85.0 203.5,-83.3 205.0,-80.4 206.5,-81.9 208.0,-83.0 209.5,-81.4 211.0,-83.1 212.5,-86.4 214.0,-84.9 215.5,-86.1 217.0,-82.5 218.5,-85.0 220.0,-81.2 221.5,-79.3 223.0,-90.0 224.5,-89.0 226.1,-77.9 227.6,-80.6 229.1,-81.5 230.6,-78.8 232.1,-80.4 233.6,-80.8 235.1,-77.5 236.6,-80.4 238.1,-83.4 239.6,-83.6 241.1,-81.3 242.6,-79.5 244.1,-82.5 245.6,-85.3 247.1,-84.5 248.6,-81.1 250.2,-83.1 251.7,-82.6 253.2,-83.9 254.7,-83.7 256.2,-80.9 257.7,-80.3 259.2,-79.5 260.7,-75.0 262.2,-70.3 263.7,-66.8 265.2,-59.3 266.7,-57.6 268.2,-51.9 269.7,-46.3 271.2,-42.4 272.7,-43.4 274.3,-45.6 275.8,-38.5 277.3,-36.8 278.8,-37.7 280.3,-34.9 281.8,-37.7 283.3,-37.3 284.8,-36.2 286.3,-37.3 287.8,-37.1 289.3,-37.1 290.8,-37.8 292.3,-38.4 293.8,-37.0 295.3,-37.8 296.8,-36.1 298.4,-37.2 299.9,-36.6 301.4,-37.9 302.9,-37.9 304.4,-38.7 305.9,-38.5 307.4,-39.8 308.9,-39.4 310.4,-38.2 311.9,-37.1 313.4,-36.2 314.9,-36.7 316.4,-38.1 317.9,-37.9 319.4,-37.1 320.9,-37.1 322.5,-36.7 324.0,-36.1 325.5,-35.0 327.0,-34.3 328.5,-36.6 330.0,-34.4 331.5,-35.2 333.0,-34.4 334.5,-33.4 L334.5,0Z" fill="currentColor" stroke="currentColor"/><path id="s3v4" d="M90.5,0 L90.5,-26.5 92.0,-28.2 93.5,-27.7 95.0,-26.6 96.5,-25.9 98.0,-27.7 99.5,-27.2 101.0,-26.9 102.5,-28.0 104.1,-27.4 105.6,-27.4 107.1,-26.9 108.6,-25.9 110.1,-27.5 111.6,-26.2 113.1,-27.0 114.6,-25.9 116.1,-27.2 117.6,-25.8 119.1,-27.3 120.6,-26.9 122.1,-27.2 123.6,-26.8 125.1,-26.4 126.6,-26.7 128.2,-27.8 129.7,-26.4 131.2,-26.2 132.7,-26.9 134.2,-27.4 135.7,-26.3 137.2,-27.2 138.7,-26.0 140.2,-27.2 141.7,-26.8 143.2,-25.9 144.7,-26.5 146.2,-26.8 147.7,-26.7 149.2,-26.3 150.7,-26.2 152.3,-25.8 153.8,-26.0 155.3,-26.6 156.8,-25.7 158.3,-25.6 159.8,-27.0 161.3,-27.1 162.8,-27.6 164.3,-26.7 165.8,-25.5 167.3,-26.9 168.8,-26.4 170.3,-27.1 171.8,-26.6 173.3,-25.8 174.8,-26.5 176.4,-27.0 177.9,-27.1 179.4,-26.0 180.9,-25.6 182.4,-27.3 183.9,-26.5 185.4,-25.4 186.9,-26.3 188.4,-25.9 189.9,-29.7 191.4,-37.0 192.9,-43.9 194.4,-51.6 195.9,-60.4 197.4,-73.9 198.9,-82.5 200.5,-86.4 202.0,-82.4 203.5,-86.9 205.0,-85.1 206.5,-81.4 208.0,-84.2 209.5,-80.7 211.0,-85.2 212.5,-84.6 214.0,-84.0 215.5,-82.2 217.0,-80.4 218.5,-82.5 220.0,-79.8 221.5,-78.5 223.0,-91.1 224.5,-88.0 226.1,-78.9 227.6,-81.5 229.1,-79.7 230.6,-79.6 232.1,-78.3 233.6,-80.7 235.1,-79.3 236.6,-81.6 238.1,-81.6 239.6,-85.1 241.1,-82.2 242.6,-80.1 244.1,-83.2 245.6,-82.5 247.1,-81.8 248.6,-82.9 250.2,-80.5 251.7,-81.8 253.2,-83.8 254.7,-82.9 256.2,-76.9 257.7,-80.6 259.2,-78.2 260.7,-74.7 262.2,-69.8 263.7,-66.8 265.2,-57.7 266.7,-55.3 268.2,-49.2 269.7,-44.7 271.2,-41.9 272.7,-42.8 274.3,-44.3 275.8,-38.5 277.3,-35.6 278.8,-35.8 280.3,-34.9 281.8,-37.1 283.3,-35.8 284.8,-36.4 286.3,-35.4 287.8,-36.4 289.3,-37.3 290.8,-35.9 292.3,-38.1 293.8,-38.4 295.3,-36.7 296.8,-37.3 298.4,-37.0 299.9,-37.3 301.4,-38.5 302.9,-36.8 304.4,-38.6 305.9,-39.4 307.4,-40.5 308.9,-38.4 310.4,-36.7 311.9,-38.0 313.4,-38.1 314.9,-37.4 316.4,-37.2 317.9,-37.8 319.4,-36.9 320.9,-35.8 322.5,-35.2 324.0,-34.1 325.5,-34.3 327.0,-34.4 328.5,-36.2 330.0,-36.2 331.5,-35.5 333.0,-35.2 334.5,-34.2 L334.5,0Z" fill="currentColor" stroke="currentColor"/><path id="s3v5" d="M90.5,0 L90.5,-27.1 92.0,-27.6 93.5,-26.8 95.0,-27.2 96.5,-26.7 98.0,-26.4 99.5,-26.4 101.0,-27.8 102.5,-27.7 104.1,-26.7 105.6,-27.9 107.1,-27.8 108.6,-26.6 110.1,-26.9 111.6,-27.2 113.1,-28.2 114.6,-27.0 116.1,-26.8 117.6,-26.5 119.1,-26.3 120.6,-26.2 122.1,-26.0 123.6,-28.0 125.1,-26.8 126.6,-27.1 128.2,-27.4 129.7,-27.1 131.2,-27.1 132.7,-27.2 134.2,-27.9 135.7,-26.6 137.2,-27.0 138.7,-25.8 140.2,-26.6 141.7,-27.2 143.2,-27.0 144.7,-26.9 146.2,-25.9 147.7,-25.9 149.2,-26.2 150.7,-25.9 152.3,-26.9 153.8,-27.2 155.3,-26.0 156.8,-25.9 158.3,-25.9 159.8,-26.1 161.3,-26.8 162.8,-27.3 164.3,-27.1 165.8,-27.0 167.3,-26.0 168.8,-25.9 170.3,-25.8 171.8,-25.9 173.3,-25.7 174.8,-25.4 176.4,-25.8 177.9,-26.4 179.4,-26.4 180.9,-25.7 182.4,-27.1 183.9,-26.6 185.4,-25.9 186.9,-25.1 188.4,-26.0 189.9,-29.7 191.4,-38.0 192.9,-44.3 194.4,-51.6 195.9,-60.7 197.4,-70.4 198.9,-82.6 200.5,-85.1 202.0,-84.0 203.5,-85.3 205.0,-80.9 206.5,-82.1 208.0,-80.5 209.5,-82.1 211.0,-85.5 212.5,-84.0 214.0,-82.3 215.5,-83.9 217.0,-82.1 218.5,-82.2 220.0,-79.1 221.5,-82.3 223.0,-89.3 224.5,-89.3 226.1,-78.6 227.6,-77.7 229.1,-79.0 230.6,-79.4 232.1,-81.4 233.6,-77.2 235.1,-81.0 236.6,-82.0 238.1,-81.1 239.6,-83.9 241.1,-82.6 242.6,-77.8 244.1,-78.9 245.6,-83.7 247.1,-83.6 248.6,-83.6 250.2,-83.1 251.7,-83.6 253.2,-79.9 254.7,-84.3 256.2,-80.6 257.7,-81.3 259.2,-79.9 260.7,-72.8 262.2,-67.6 263.7,-64.1 265.2,-58.8 266.7,-55.0 268.2,-51.9 269.7,-46.7 271.2,-41.0 272.7,-45.1 274.3,-45.0 275.8,-38.3 277.3,-37.1 278.8,-36.6 280.3,-36.9 281.8,-37.6 283.3,-35.4 284.8,-37.0 286.3,-35.6 287.8,-38.1 289.3,-35.7 290.8,-36.5 292.3,-37.1 293.8,-38.3 295.3,-38.3 296.8,-36.2 298.4,-37.8 299.9,-38.3 301.4,-36.7 302.9,-36.5 304.4,-39.2 305.9,-38.1 307.4,-40.0 308.9,-39.3 310.4,-38.2 311.9,-37.8 313.4,-36.1 314.9,-37.4 316.4,-37.8 317.9,-37.7 319.4,-37.0 320.9,-36.7 322.5,-34.8 324.0,-36.1 325.5,-36.1 327.0,-34.2 328.5,-34.8 330.0,-34.4 331.5,-35.7 333.0,-35.4 334.5,-33.3 L334.5,0Z" fill="currentColor" stroke="currentColor"/><path id="s3v6" d="M90.5,0 L90.5,-27.2 92.0,-27.0 93.5,-27.7 95.0,-27.6 96.5,-26.9 98.0,-26.6 99.5,-26.4 101.0,-27.3 102.5,-27.4 104.1,-27.1 105.6,-27.2 107.1,-27.2 108.6,-26.1 110.1,-27.4 111.6,-26.5 113.1,-26.7 114.6,-25.9 116.1,-27.8 117.6,-25.7 119.1,-26.5 120.6,-27.3 122.1,-27.2 123.6,-27.7 125.1,-27.1 126.6,-25.6 128.2,-27.4 129.7,-26.2 131.2,-27.0 132.7,-28.1 134.2,-26.6 135.7,-25.8 137.2,-25.8 138.7,-26.0 140.2,-26.4 141.7,-26.3 143.2,-26.9 144.7,-26.8 146.2,-26.2 147.7,-26.8 149.2,-26.7 150.7,-26.7 152.3,-26.4 153.8,-26.8 155.3,-26.8 156.8,-26.6 158.3,-25.8 159.8,-25.9 161.3,-26.2 162.8,-26.3 164.3,-26.0 165.8,-26.6 167.3,-25.4 168.8,-26.9 170.3,-27.1 171.8,-25.9 173.3,-25.6 174.8,-26.4 176.4,-26.0 177.9,-26.9 179.4,-25.5 180.9,-25.8 182.4,-26.6 183.9,-26.0 185.4,-25.6 186.9,-25.1 188.4,-26.0 189.9,-29.7 191.4,-37.4 192.9,-45.3 194.4,-52.8 195.9,-59.3 197.4,-71.2 198.9,-83.1 200.5,-82.3 202.0,-84.7 203.5,-82.4 205.0,-83.3 206.5,-85.2 208.0,-82.4 209.5,-80.7 211.0,-83.4 212.5,-82.5 214.0,-81.5 215.5,-84.6 217.0,-82.0 218.5,-83.2 220.0,-81.7 221.5,-81.0 223.0,-89.3 224.5,-86.5 226.1,-78.2 227.6,-81.3 229.1,-82.8 230.6,-80.7 232.1,-79.3 233.6,-81.0 235.1,-81.5 236.6,-82.4 238.1,-83.9 239.6,-85.3 241.1,-81.3 242.6,-77.9 244.1,-80.9 245.6,-81.5 247.1,-81.3 248.6,-80.8 250.2,-79.2 251.7,-82.7 253.2,-81.4 254.7,-84.1 256.2,-77.5 257.7,-80.4 259.2,-78.0 260.7,-71.1 262.2,-69.5 263.7,-66.7 265.2,-58.1 266.7,-55.7 268.2,-51.7 269.7,-47.5 271.2,-42.5 272.7,-45.3 274.3,-43.5 275.8,-39.0 277.3,-37.1 278.8,-36.9 280.3,-35.9 281.8,-37.2 283.3,-36.1 284.8,-35.8 286.3,-36.7 287.8,-38.3 289.3,-35.7 290.8,-36.5 292.3,-38.4 293.8,-37.6 295.3,-36.7 296.8,-35.7 298.4,-38.1 299.9,-38.7 301.4,-37.5 302.9,-37.5 304.4,-37.2 305.9,-38.5 307.4,-40.5 308.9,-39.2 310.4,-37.1 311.9,-36.6 313.4,-37.9 314.9,-37.2 316.4,-37.9 317.9,-36.5 319.4,-37.2 320.9,-35.4 322.5,-35.6 324.0,-35.0 325.5,-36.3 327.0,-35.8 328.5,-36.0 330.0,-34.7 331.5,-35.0 333.0,-35.6 334.5,-33.3 L334.5,0Z" fill="currentColor" stroke="currentColor"/><path id="s3v7" d="M90.5,0 L90.5,-26.9 92.0,-27.3 93.5,-27.9 95.0,-27.1 96.5,-26.0 98.0,-27.6 99.5,-26.8 101.0,-27.2 102.5,-27.6 104.1,-26.7 105.6,-26.4 107.1,-26.6 108.6,-26.3 110.1,-27.4 111.6,-27.4 113.1,-27.5 114.6,-26.8 116.1,-27.8 117.6,-25.9 119.1,-27.6 120.6,-26.2 122.1,-26.0 123.6,-27.9 125.1,-25.6 126.6,-26.5 128.2,-27.7 129.7,-27.3 131.2,-27.1 132.7,-27.3 134.2,-27.4 135.7,-25.7 137.2,-26.1 138.7,-27.0 140.2,-26.6 141.7,-27.0 143.2,-26.8 144.7,-27.2 146.2,-26.5 147.7,-25.9 149.2,-27.2 150.7,-27.1 152.3,-26.9 153.8,-26.7 155.3,-26.4 156.8,-26.8 158.3,-25.6 159.8,-27.1 161.3,-26.6 162.8,-26.7 164.3,-27.1 165.8,-25.8 167.3,-26.4 168.8,-26.5 170.3,-26.3 171.8,-25.7 173.3,-26.1 174.8,-26.8 176.4,-25.8 177.9,-26.0 179.4,-26.2 180.9,-25.6 182.4,-26.9 183.9,-25.4 185.4,-25.9 186.9,-26.3 188.4,-25.5 189.9,-28.7 191.4,-38.1 192.9,-42.8 194.4,-52.6 195.9,-61.8 197.4,-71.5 198.9,-81.7 200.5,-83.0 202.0,-83.7 203.5,-86.9 205.0,-82.5 206.5,-81.9 208.0,-82.8 209.5,-82.5 211.0,-81.2 212.5,-84.7 214.0,-82.6 215.5,-83.4 217.0,-79.4 218.5,-84.8 220.0,-83.2 221.5,-79.0 223.0,-89.9 224.5,-89.6 226.1,-76.7 227.6,-77.7 229.1,-81.1 230.6,-77.7 232.1,-78.2 233.6,-78.0 235.1,-80.5 236.6,-83.9 238.1,-81.9 239.6,-81.7 241.1,-82.2 242.6,-80.1 244.1,-80.8 245.6,-84.0 247.1,-82.0 248.6,-82.2 250.2,-81.8 251.7,-84.4 253.2,-82.0 254.7,-83.1 256.2,-78.2 257.7,-81.4 259.2,-78.4 260.7,-74.2 262.2,-69.0 263.7,-65.1 265.2,-60.7 266.7,-57.6 268.2,-50.5 269.7,-47.0 271.2,-42.1 272.7,-44.9 274.3,-45.5 275.8,-38.2 277.3,-35.7 278.8,-35.8 280.3,-35.9 281.8,-37.3 283.3,-37.4 284.8,-36.7 286.3,-36.9 287.8,-36.3 289.3,-37.6 290.8,-35.9 292.3,-37.4 293.8,-37.7 295.3,-37.8 296.8,-35.7 298.4,-37.8 299.9,-37.4 301.4,-37.4 302.9,-38.0 304.4,-38.8 305.9,-38.1 307.4,-39.4 308.9,-38.4 310.4,-36.4 311.9,-38.4 313.4,-36.8 314.9,-36.4 316.4,-37.6 317.9,-36.9 319.4,-35.1 320.9,-36.8 322.5,-35.1 324.0,-35.9 325.5,-35.0 327.0,-35.7 328.5,-35.9 330.0,-35.7 331.5,-34.3 333.0,-34.6 334.5,-34.3 L334.5,0Z" fill="currentColor" stroke="currentColor"/></defs>
<g stroke-width="0.6"><use href="#s3v0" transform="matrix(1 0 0 1.0000 0 632.00)" color="#679ef3"/><use href="#s3v0" transform="matrix(1 0 0 0.9935 0 632.00)" color="#e3bb19"/><use href="#s3v0" transform="matrix(1 0 0 0.9881 0 632.00)" color="#66ae5d"/><use href="#s3v0" transform="matrix(1 0 0 0.9810 0 632.00)" color="#e1ddf7"/><use href="#s3v0" transform="matrix(1 0 0 0.9758 0 632.00)" color="#f9dcf9"/><use href="#s3v0" transform="matrix(1 0 0 0.9687 0 632.00)" color="#c0e2f5"/><use href="#s3v0" transform="matrix(1 0 0 0.9648 0 632.00)" color="#fce4e1"/><use href="#s3v0" transform="matrix(1 0 0 0.9570 0 632.00)" color="#f9e4d6"/><use href="#s3v0" transform="matrix(1 0 0 0.9520 0 632.00)" color="#d3faff"/><use href="#s3v3" transform="matrix(1 0 0 0.9462 0 632.00)" color="#fceccf"/><use href="#s3v6" transform="matrix(1 0 0 0.9427 0 632.00)" color="#e3f9db"/><use href="#s3v2" transform="matrix(1 0 0 0.9385 0 632.00)" color="#52406b"/><use href="#s3v4" transform="matrix(1 0 0 0.9120 0 632.00)" color="#622e5b"/><use href="#s3v4" transform="matrix(1 0 0 0.8932 0 632.00)" color="#1e4062"/><use href="#s3v2" transform="matrix(1 0 0 0.8795 0 632.00)" color="#682b24"/><use href="#s3v7" transform="matrix(1 0 0 0.8530 0 632.00)" color="#a35622"/><use href="#s3v1" transform="matrix(1 0 0 0.8345 0 632.00)" color="#43676e"/><use href="#s3v3" transform="matrix(1 0 0 0.8096 0 632.00)" color="#a0811b"/><use href="#s3v2" transform="matrix(1 0 0 0.7778 0 632.00)" color="#527747"/><use href="#s3v2" transform="matrix(1 0 0 0.7558 0 632.00)" color="#8c7cbe"/><use href="#s3v2" transform="matrix(1 0 0 0.7384 0 632.00)" color="#da8fd2"/><use href="#s3v4" transform="matrix(1 0 0 0.7151 0 632.00)" color="#629fd2"/><use href="#s3v4" transform="matrix(1 0 0 0.7024 0 632.00)" color="#ec736f"/><use href="#s3v1" transform="matrix(1 0 0 0.6909 0 632.00)" color="#f99d5f"/><use href="#s3v4" transform="matrix(1 0 0 0.6773 0 632.00)" color="#74cade"/><use href="#s3v3" transform="matrix(1 0 0 0.6525 0 632.00)" color="#f3ce7b"/><use href="#s3v5" transform="matrix(1 0 0 0.6316 0 632.00)" color="#a4c995"/><use href="#s3v1" transform="matrix(1 0 0 0.6181 0 632.00)" color="#705e9d"/><use href="#s3v5" transform="matrix(1 0 0 0.6042 0 632.00)" color="#a0428e"/><use href="#s3v6" transform="matrix(1 0 0 0.5836 0 632.00)" color="#2261aa"/><use href="#s3v5" transform="matrix(1 0 0 0.5620 0 632.00)" color="#c53119"/><use href="#s3v2" transform="matrix(1 0 0 0.5423 0 632.00)" color="#e38242"/><use href="#s3v3" transform="matrix(1 0 0 0.5287 0 632.00)" color="#73b7cd"/><use href="#s3v1" transform="matrix(1 0 0 0.5060 0 632.00)" color="#e7b426"/><use href="#s3v1" transform="matrix(1 0 0 0.4872 0 632.00)" color="#71a762"/><use href="#s3v4" transform="matrix(1 0 0 0.4646 0 632.00)" color="#b6abe3"/><use href="#s3v1" transform="matrix(1 0 0 0.4382 0 632.00)" color="#e7b0e4"/><use href="#s3v5" transform="matrix(1 0 0 0.4244 0 632.00)" color="#8ebcdb"/><use href="#s3v3" transform="matrix(1 0 0 0.4099 0 632.00)" color="#f39c9c"/><use href="#s3v2" transform="matrix(1 0 0 0.3845 0 632.00)" color="#f9c09a"/><use href="#s3v2" transform="matrix(1 0 0 0.3617 0 632.00)" color="#7edeee"/><use href="#s3v4" transform="matrix(1 0 0 0.3419 0 632.00)" color="#f5d9a2"/><use href="#s3v5" transform="matrix(1 0 0 0.3298 0 632.00)" color="#bedeb3"/><use href="#s3v5" transform="matrix(1 0 0 0.3127 0 632.00)" color="#685684"/><use href="#s3v3" transform="matrix(1 0 0 0.2902 0 632.00)" color="#7b3571"/><use href="#s3v6" transform="matrix(1 0 0 0.2659 0 632.00)" color="#225589"/><use href="#s3v7" transform="matrix(1 0 0 0.2400 0 632.00)" color="#94271b"/><use href="#s3v5" transform="matrix(1 0 0 0.2209 0 632.00)" color="#c76c2e"/><use href="#s3v4" transform="matrix(1 0 0 0.1980 0 632.00)" color="#568ac2"/><use href="#s3v6" transform="matrix(1 0 0 0.1834 0 632.00)" color="#d1ac19"/><use href="#s3v6" transform="matrix(1 0 0 0.1622 0 632.00)" color="#619254"/><use href="#s3v2" transform="matrix(1 0 0 0.1482 0 632.00)" color="#7e6da9"/><use href="#s3v5" transform="matrix(1 0 0 0.1361 0 632.00)" color="#c055b1"/><use href="#s3v5" transform="matrix(1 0 0 0.1188 0 632.00)" color="#3585c7"/><use href="#s3v4" transform="matrix(1 0 0 0.0984 0 632.00)" color="#e34356"/><use href="#s3v6" transform="matrix(1 0 0 0.0788 0 632.00)" color="#fa7319"/><use href="#s3v3" transform="matrix(1 0 0 0.0634 0 632.00)" color="#679ef3"/><use href="#s3v7" transform="matrix(1 0 0 0.0398 0 632.00)" color="#e3bb19"/><use href="#s3v1" transform="matrix(1 0 0 0.0219 0 632.00)" color="#66ae5d"/></g>
<rect x="29" y="665.5" width="14" height="4" rx="2" fill="#56a64b"/>
<text x="51" y="671.5" font-size="12.5" fill="#24292e" text-anchor="start" font-weight="normal" letter-spacing="0.98" >distributor-zone-a-56fd759c86-2bql8</text>
<rect x="29" y="689.2" width="14" height="4" rx="2" fill="#e0b400"/>
<text x="51" y="695.2" font-size="12.5" fill="#24292e" text-anchor="start" font-weight="normal" letter-spacing="0.98" >distributor-zone-a-56fd759c86-48qpb</text>
<rect x="29" y="712.7" width="14" height="4" rx="2" fill="#5794f2"/>
<text x="51" y="718.7" font-size="12.5" fill="#24292e" text-anchor="start" font-weight="normal" letter-spacing="0.98" >distributor-zone-a-56fd759c86-5jxxw</text>
<rect x="435" y="632.3" width="243.5" height="1" fill="#e6e7e8"/>
<text x="430.5" y="637.0999999999999" font-size="12" fill="#24292e" text-anchor="end" font-weight="normal" letter-spacing="0.9" >0 B/s</text>
<rect x="435" y="601.0" width="243.5" height="1" fill="#e6e7e8"/>
<text x="430.5" y="605.8" font-size="12" fill="#24292e" text-anchor="end" font-weight="normal" letter-spacing="0.9" >100 MB/s</text>
<rect x="435" y="569.7" width="243.5" height="1" fill="#e6e7e8"/>
<text x="430.5" y="574.4999999999999" font-size="12" fill="#24292e" text-anchor="end" font-weight="normal" letter-spacing="0.9" >200 MB/s</text>
<rect x="435" y="538.4" width="243.5" height="1" fill="#e6e7e8"/>
<text x="430.5" y="543.1999999999999" font-size="12" fill="#24292e" text-anchor="end" font-weight="normal" letter-spacing="0.9" >300 MB/s</text>
<rect x="458.0" y="527.6" width="1" height="109.2" fill="#e6e7e8"/>
<text x="458.7" y="652.1999999999999" font-size="12" fill="#24292e" text-anchor="middle" font-weight="normal" letter-spacing="0.35" >15:30</text>
<rect x="518.8" y="527.6" width="1" height="109.2" fill="#e6e7e8"/>
<text x="519.5333333333334" y="652.1999999999999" font-size="12" fill="#24292e" text-anchor="middle" font-weight="normal" letter-spacing="0.35" >15:45</text>
<rect x="579.7" y="527.6" width="1" height="109.2" fill="#e6e7e8"/>
<text x="580.3666666666667" y="652.1999999999999" font-size="12" fill="#24292e" text-anchor="middle" font-weight="normal" letter-spacing="0.35" >16:00</text>
<rect x="640.5" y="527.6" width="1" height="109.2" fill="#e6e7e8"/>
<text x="641.2" y="652.1999999999999" font-size="12" fill="#24292e" text-anchor="middle" font-weight="normal" letter-spacing="0.35" >16:15</text>
<defs><path id="s4v0" d="M435,0 L435.0,-74.9 436.5,-76.2 438.0,-76.0 439.5,-76.7 441.0,-75.1 442.5,-75.1 444.0,-76.1 445.5,-75.9 447.0,-75.1 448.5,-75.9 450.0,-75.2 451.5,-76.1 453.0,-74.5 454.5,-74.8 456.0,-76.3 457.5,-75.0 459.0,-74.8 460.6,-76.0 462.1,-75.5 463.6,-74.4 465.1,-75.3 466.6,-75.5 468.1,-74.4 469.6,-75.4 471.1,-74.2 472.6,-74.7 474.1,-74.1 475.6,-74.3 477.1,-76.0 478.6,-74.7 480.1,-76.0 481.6,-74.7 483.1,-75.1 484.6,-75.7 486.1,-75.2 487.6,-73.9 489.1,-74.9 490.6,-75.0 492.1,-74.0 493.6,-73.7 495.1,-75.5 496.6,-74.6 498.1,-73.9 499.6,-74.4 501.1,-73.9 502.6,-75.1 504.1,-74.5 505.6,-73.5 507.1,-75.1 508.7,-73.5 510.2,-73.9 511.7,-73.3 513.2,-74.8 514.7,-73.4 516.2,-74.3 517.7,-73.3 519.2,-74.1 520.7,-74.6 522.2,-74.2 523.7,-74.0 525.2,-74.0 526.7,-73.9 528.2,-74.2 529.7,-73.1 531.2,-73.9 532.7,-73.3 534.2,-74.7 535.7,-75.1 537.2,-75.0 538.7,-77.0 540.2,-80.2 541.7,-81.7 543.2,-82.2 544.7,-84.3 546.2,-84.8 547.7,-83.4 549.2,-83.0 550.7,-83.5 552.2,-84.3 553.7,-82.5 555.2,-82.4 556.8,-82.0 558.3,-83.0 559.8,-82.5 561.3,-81.8 562.8,-82.0 564.3,-81.0 565.8,-81.6 567.3,-89.0 568.8,-88.0 570.3,-81.5 571.8,-83.0 573.3,-81.6 574.8,-81.2 576.3,-80.7 577.8,-80.9 579.3,-81.0 580.8,-81.0 582.3,-82.5 583.8,-81.0 585.3,-80.9 586.8,-81.7 588.3,-82.5 589.8,-80.9 591.3,-82.0 592.8,-81.0 594.3,-81.4 595.8,-81.4 597.3,-82.2 598.8,-81.7 600.3,-81.1 601.8,-81.8 603.3,-80.6 604.8,-80.6 606.4,-82.0 607.9,-80.9 609.4,-81.4 610.9,-79.5 612.4,-78.6 613.9,-75.6 615.4,-82.8 616.9,-89.9 618.4,-74.9 619.9,-74.4 621.4,-74.5 622.9,-74.4 624.4,-74.9 625.9,-76.2 627.4,-75.2 628.9,-75.8 630.4,-76.5 631.9,-77.0 633.4,-76.8 634.9,-78.0 636.4,-77.1 637.9,-77.6 639.4,-78.0 640.9,-77.6 642.4,-78.0 643.9,-78.1 645.4,-79.8 646.9,-78.7 648.4,-80.2 649.9,-78.9 651.4,-79.6 652.9,-79.4 654.5,-78.3 656.0,-79.4 657.5,-78.4 659.0,-77.9 660.5,-76.4 662.0,-77.0 663.5,-76.3 665.0,-76.5 666.5,-77.3 668.0,-76.8 669.5,-74.7 671.0,-75.8 672.5,-76.0 674.0,-74.9 675.5,-73.6 677.0,-75.0 678.5,-73.7 L678.5,0Z" fill="currentColor" stroke="currentColor"/><path id="s4v1" d="M435,0 L435.0,-69.9 436.5,-71.6 438.0,-71.3 439.5,-73.9 441.0,-72.3 442.5,-72.6 444.0,-73.6 445.5,-74.6 447.0,-71.7 448.5,-71.7 450.0,-70.9 451.5,-70.5 453.0,-69.2 454.5,-71.2 456.0,-73.4 457.5,-74.0 459.0,-72.2 460.6,-73.1 462.1,-73.6 463.6,-71.2 465.1,-71.2 466.6,-70.8 468.1,-71.3 469.6,-70.8 471.1,-70.8 472.6,-71.8 474.1,-72.6 475.6,-72.5 477.1,-73.5 478.6,-72.1 480.1,-72.3 481.6,-72.4 483.1,-72.0 484.6,-71.8 486.1,-71.2 487.6,-72.0 489.1,-72.3 490.6,-73.0 492.1,-73.8 493.6,-71.9 495.1,-73.7 496.6,-72.6 498.1,-71.1 499.6,-70.9 501.1,-71.0 502.6,-72.9 504.1,-73.4 505.6,-71.9 507.1,-74.0 508.7,-71.5 510.2,-71.4 511.7,-71.1 513.2,-69.9 514.7,-70.9 516.2,-70.6 517.7,-70.5 519.2,-71.6 520.7,-73.6 522.2,-71.6 523.7,-72.9 525.2,-73.5 526.7,-71.0 528.2,-72.1 529.7,-69.1 531.2,-70.3 532.7,-69.3 534.2,-70.1 535.7,-71.6 537.2,-73.4 538.7,-74.5 540.2,-78.0 541.7,-79.8 543.2,-80.2 544.7,-79.9 546.2,-80.0 547.7,-77.3 549.2,-77.5 550.7,-79.9 552.2,-82.4 553.7,-79.4 555.2,-82.4 556.8,-81.3 558.3,-80.0 559.8,-78.5 561.3,-78.7 562.8,-77.1 564.3,-75.6 565.8,-78.4 567.3,-86.3 568.8,-86.8 570.3,-80.5 571.8,-79.6 573.3,-79.6 574.8,-76.6 576.3,-75.4 577.8,-76.2 579.3,-77.4 580.8,-75.5 582.3,-79.3 583.8,-78.9 585.3,-79.7 586.8,-78.5 588.3,-80.5 589.8,-78.9 591.3,-78.5 592.8,-78.0 594.3,-76.5 595.8,-77.4 597.3,-79.3 598.8,-78.0 600.3,-78.0 601.8,-81.8 603.3,-78.8 604.8,-79.1 606.4,-77.4 607.9,-76.1 609.4,-77.9 610.9,-75.9 612.4,-75.8 613.9,-71.1 615.4,-81.1 616.9,-87.5 618.4,-73.5 619.9,-72.2 621.4,-71.7 622.9,-70.4 624.4,-72.1 625.9,-71.3 627.4,-71.9 628.9,-72.3 630.4,-74.3 631.9,-75.6 633.4,-75.2 634.9,-76.5 636.4,-75.4 637.9,-73.9 639.4,-74.0 640.9,-74.8 642.4,-74.6 643.9,-74.4 645.4,-75.2 646.9,-75.1 648.4,-78.2 649.9,-78.9 651.4,-76.8 652.9,-77.0 654.5,-74.8 656.0,-74.7 657.5,-73.7 659.0,-73.9 660.5,-71.7 662.0,-74.6 663.5,-74.7 665.0,-73.9 666.5,-76.6 668.0,-75.3 669.5,-70.9 671.0,-73.5 672.5,-70.9 674.0,-70.2 675.5,-70.1 677.0,-72.6 678.5,-70.6 L678.5,0Z" fill="currentColor" stroke="currentColor"/><path id="s4v2" d="M435,0 L435.0,-71.7 436.5,-72.0 438.0,-71.9 439.5,-73.5 441.0,-73.5 442.5,-73.0 444.0,-73.6 445.5,-75.3 447.0,-73.1 448.5,-71.2 450.0,-70.2 451.5,-71.6 453.0,-72.9 454.5,-72.0 456.0,-73.2 457.5,-71.9 459.0,-71.8 460.6,-74.0 462.1,-70.5 463.6,-71.2 465.1,-71.4 466.6,-71.6 468.1,-72.0 469.6,-75.0 471.1,-72.9 472.6,-70.6 474.1,-71.4 475.6,-69.9 477.1,-72.4 478.6,-72.7 480.1,-73.5 481.6,-74.6 483.1,-74.6 484.6,-73.6 486.1,-73.1 487.6,-71.2 489.1,-70.7 490.6,-70.9 492.1,-70.4 493.6,-73.1 495.1,-74.1 496.6,-73.2 498.1,-70.7 499.6,-70.7 501.1,-68.5 502.6,-71.8 504.1,-72.9 505.6,-71.0 507.1,-74.6 508.7,-71.4 510.2,-71.4 511.7,-68.7 513.2,-70.6 514.7,-69.1 516.2,-71.7 517.7,-70.8 519.2,-73.2 520.7,-72.3 522.2,-72.1 523.7,-72.1 525.2,-71.0 526.7,-70.2 528.2,-69.8 529.7,-71.3 531.2,-71.4 532.7,-71.4 534.2,-74.2 535.7,-72.0 537.2,-72.7 538.7,-74.0 540.2,-75.6 541.7,-79.0 543.2,-78.4 544.7,-82.6 546.2,-83.6 547.7,-80.0 549.2,-81.2 550.7,-78.4 552.2,-81.2 553.7,-79.6 555.2,-77.9 556.8,-79.4 558.3,-82.3 559.8,-81.7 561.3,-77.4 562.8,-77.6 564.3,-75.6 565.8,-78.5 567.3,-84.8 568.8,-85.9 570.3,-80.6 571.8,-81.8 573.3,-78.7 574.8,-78.3 576.3,-76.8 577.8,-77.7 579.3,-76.0 580.8,-77.7 582.3,-79.5 583.8,-79.6 585.3,-77.7 586.8,-78.7 588.3,-78.1 589.8,-76.2 591.3,-76.9 592.8,-78.0 594.3,-80.4 595.8,-81.3 597.3,-81.4 598.8,-80.7 600.3,-76.3 601.8,-77.6 603.3,-75.4 604.8,-78.5 606.4,-79.3 607.9,-77.8 609.4,-79.4 610.9,-77.7 612.4,-75.7 613.9,-73.0 615.4,-79.4 616.9,-86.5 618.4,-72.3 619.9,-72.7 621.4,-71.8 622.9,-73.8 624.4,-73.2 625.9,-73.5 627.4,-72.2 628.9,-72.3 630.4,-73.8 631.9,-74.5 633.4,-76.5 634.9,-75.1 636.4,-75.4 637.9,-73.2 639.4,-73.5 640.9,-72.8 642.4,-74.2 643.9,-73.7 645.4,-78.8 646.9,-76.5 648.4,-79.0 649.9,-75.8 651.4,-75.3 652.9,-76.1 654.5,-75.1 656.0,-77.4 657.5,-76.8 659.0,-77.5 660.5,-75.2 662.0,-73.4 663.5,-73.7 665.0,-73.2 666.5,-73.1 668.0,-73.7 669.5,-71.2 671.0,-73.1 672.5,-75.5 674.0,-73.9 675.5,-70.6 677.0,-70.2 678.5,-69.3 L678.5,0Z" fill="currentColor" stroke="currentColor"/><path id="s4v3" d="M435,0 L435.0,-72.3 436.5,-73.7 438.0,-71.8 439.5,-74.1 441.0,-74.3 442.5,-73.2 444.0,-73.1 445.5,-74.3 447.0,-73.7 448.5,-74.8 450.0,-73.6 451.5,-71.3 453.0,-70.7 454.5,-69.3 456.0,-73.5 457.5,-72.0 459.0,-72.9 460.6,-73.6 462.1,-74.8 463.6,-73.5 465.1,-74.1 466.6,-74.5 468.1,-73.8 469.6,-74.4 471.1,-69.8 472.6,-72.1 474.1,-70.1 475.6,-70.5 477.1,-71.9 478.6,-72.3 480.1,-73.4 481.6,-73.4 483.1,-73.0 484.6,-72.7 486.1,-73.4 487.6,-71.2 489.1,-73.8 490.6,-73.9 492.1,-70.8 493.6,-70.2 495.1,-71.2 496.6,-70.9 498.1,-69.6 499.6,-70.2 501.1,-69.7 502.6,-73.3 504.1,-72.7 505.6,-71.0 507.1,-74.4 508.7,-72.9 510.2,-72.4 511.7,-71.9 513.2,-70.8 514.7,-68.8 516.2,-70.8 517.7,-70.4 519.2,-71.5 520.7,-71.8 522.2,-72.5 523.7,-71.9 525.2,-72.0 526.7,-73.1 528.2,-74.0 529.7,-70.8 531.2,-73.1 532.7,-71.5 534.2,-72.0 535.7,-71.7 537.2,-72.1 538.7,-73.0 540.2,-76.6 541.7,-77.2 543.2,-78.9 544.7,-80.4 546.2,-82.2 547.7,-80.8 549.2,-81.1 550.7,-81.7 552.2,-80.7 553.7,-78.8 555.2,-77.2 556.8,-77.1 558.3,-77.8 559.8,-78.8 561.3,-76.7 562.8,-78.8 564.3,-79.3 565.8,-80.7 567.3,-88.1 568.8,-87.0 570.3,-79.2 571.8,-81.7 573.3,-80.4 574.8,-77.2 576.3,-76.7 577.8,-78.2 579.3,-78.0 580.8,-77.8 582.3,-78.9 583.8,-76.3 585.3,-76.6 586.8,-79.1 588.3,-81.5 589.8,-79.5 591.3,-80.7 592.8,-79.4 594.3,-80.3 595.8,-77.9 597.3,-77.2 598.8,-76.7 600.3,-77.9 601.8,-77.4 603.3,-77.8 604.8,-76.6 606.4,-79.4 607.9,-77.4 609.4,-78.7 610.9,-79.1 612.4,-77.5 613.9,-72.3 615.4,-80.1 616.9,-86.4 618.4,-71.5 619.9,-69.6 621.4,-69.1 622.9,-70.3 624.4,-69.9 625.9,-72.9 627.4,-74.0 628.9,-72.9 630.4,-75.1 631.9,-76.8 633.4,-73.7 634.9,-77.3 636.4,-74.1 637.9,-74.3 639.4,-72.9 640.9,-73.7 642.4,-74.6 643.9,-74.7 645.4,-77.0 646.9,-75.4 648.4,-78.1 649.9,-76.2 651.4,-78.8 652.9,-78.2 654.5,-77.3 656.0,-75.6 657.5,-74.5 659.0,-73.4 660.5,-72.2 662.0,-73.1 663.5,-73.2 665.0,-71.5 666.5,-73.8 668.0,-75.3 669.5,-73.4 671.0,-75.2 672.5,-73.8 674.0,-72.1 675.5,-72.7 677.0,-71.8 678.5,-71.4 L678.5,0Z" fill="currentColor" stroke="currentColor"/><path id="s4v4" d="M435,0 L435.0,-71.5 436.5,-72.9 438.0,-74.6 439.5,-76.6 441.0,-73.5 442.5,-73.0 444.0,-74.7 445.5,-73.3 447.0,-72.1 448.5,-73.3 450.0,-71.7 451.5,-72.4 453.0,-71.0 454.5,-71.1 456.0,-74.1 457.5,-71.7 459.0,-72.3 460.6,-73.1 462.1,-73.2 463.6,-71.7 465.1,-72.3 466.6,-71.1 468.1,-70.9 469.6,-71.0 471.1,-69.7 472.6,-71.0 474.1,-71.7 475.6,-73.1 477.1,-75.3 478.6,-73.6 480.1,-74.2 481.6,-72.2 483.1,-72.2 484.6,-73.4 486.1,-70.5 487.6,-70.7 489.1,-70.2 490.6,-72.2 492.1,-69.6 493.6,-70.1 495.1,-71.5 496.6,-71.5 498.1,-71.7 499.6,-71.9 501.1,-71.5 502.6,-72.7 504.1,-72.6 505.6,-70.2 507.1,-70.1 508.7,-70.2 510.2,-68.4 511.7,-69.5 513.2,-71.9 514.7,-72.3 516.2,-72.6 517.7,-72.6 519.2,-72.2 520.7,-71.7 522.2,-70.9 523.7,-71.0 525.2,-71.1 526.7,-71.3 528.2,-69.6 529.7,-68.9 531.2,-69.5 532.7,-70.5 534.2,-70.9 535.7,-73.9 537.2,-73.9 538.7,-76.2 540.2,-78.0 541.7,-78.2 543.2,-80.5 544.7,-80.2 546.2,-79.6 547.7,-79.7 549.2,-80.0 550.7,-79.0 552.2,-79.4 553.7,-78.2 555.2,-79.3 556.8,-80.4 558.3,-81.6 559.8,-80.6 561.3,-78.4 562.8,-79.9 564.3,-78.3 565.8,-77.2 567.3,-82.5 568.8,-84.2 570.3,-78.8 571.8,-80.5 573.3,-78.3 574.8,-78.5 576.3,-79.8 577.8,-80.3 579.3,-79.0 580.8,-78.5 582.3,-79.2 583.8,-76.9 585.3,-78.4 586.8,-77.4 588.3,-76.8 589.8,-75.2 591.3,-78.8 592.8,-76.7 594.3,-78.5 595.8,-78.1 597.3,-81.5 598.8,-79.4 600.3,-78.0 601.8,-79.3 603.3,-78.7 604.8,-77.8 606.4,-78.8 607.9,-77.8 609.4,-78.3 610.9,-75.4 612.4,-76.7 613.9,-72.4 615.4,-80.0 616.9,-86.9 618.4,-72.5 619.9,-71.9 621.4,-70.9 622.9,-70.1 624.4,-71.0 625.9,-70.8 627.4,-72.3 628.9,-72.9 630.4,-74.1 631.9,-74.8 633.4,-74.8 634.9,-76.2 636.4,-74.9 637.9,-75.3 639.4,-77.4 640.9,-75.5 642.4,-74.9 643.9,-74.9 645.4,-76.8 646.9,-74.0 648.4,-76.3 649.9,-74.5 651.4,-76.4 652.9,-75.3 654.5,-74.9 656.0,-79.1 657.5,-76.0 659.0,-75.4 660.5,-74.8 662.0,-75.3 663.5,-72.9 665.0,-73.0 666.5,-72.3 668.0,-71.4 669.5,-71.3 671.0,-73.2 672.5,-73.5 674.0,-72.3 675.5,-71.1 677.0,-73.3 678.5,-72.6 L678.5,0Z" fill="currentColor" stroke="currentColor"/><path id="s4v5" d="M435,0 L435.0,-71.0 436.5,-73.4 438.0,-72.1 439.5,-73.5 441.0,-71.3 442.5,-73.6 444.0,-74.7 445.5,-75.4 447.0,-73.6 448.5,-72.8 450.0,-73.1 451.5,-73.8 453.0,-70.1 454.5,-72.2 456.0,-72.6 457.5,-70.0 459.0,-72.4 460.6,-71.8 462.1,-73.2 463.6,-73.7 465.1,-74.4 466.6,-74.1 468.1,-73.1 469.6,-73.4 471.1,-73.0 472.6,-72.3 474.1,-69.0 475.6,-70.5 477.1,-72.0 478.6,-72.1 480.1,-73.3 481.6,-70.7 483.1,-72.4 484.6,-73.9 486.1,-75.0 487.6,-72.6 489.1,-72.1 490.6,-72.6 492.1,-70.5 493.6,-68.9 495.1,-70.9 496.6,-70.1 498.1,-71.5 499.6,-72.5 501.1,-70.4 502.6,-73.3 504.1,-71.7 505.6,-71.1 507.1,-72.2 508.7,-71.9 510.2,-69.9 511.7,-69.4 513.2,-69.9 514.7,-70.5 516.2,-69.4 517.7,-69.8 519.2,-69.4 520.7,-70.4 522.2,-72.9 523.7,-72.5 525.2,-73.2 526.7,-72.4 528.2,-72.9 529.7,-70.1 531.2,-71.9 532.7,-70.7 534.2,-70.8 535.7,-72.2 537.2,-71.5 538.7,-72.3 540.2,-76.0 541.7,-80.4 543.2,-81.9 544.7,-81.5 546.2,-81.4 547.7,-80.8 549.2,-81.4 550.7,-80.8 552.2,-78.7 553.7,-76.6 555.2,-79.5 556.8,-78.8 558.3,-79.5 559.8,-80.2 561.3,-78.6 562.8,-80.6 564.3,-78.5 565.8,-81.0 567.3,-86.6 568.8,-83.3 570.3,-77.4 571.8,-80.3 573.3,-78.4 574.8,-76.3 576.3,-76.9 577.8,-77.7 579.3,-78.1 580.8,-78.4 582.3,-79.1 583.8,-80.2 585.3,-79.0 586.8,-80.4 588.3,-79.5 589.8,-76.7 591.3,-79.1 592.8,-76.7 594.3,-76.3 595.8,-78.8 597.3,-77.6 598.8,-79.0 600.3,-78.7 601.8,-79.6 603.3,-78.1 604.8,-80.4 606.4,-79.8 607.9,-79.7 609.4,-78.4 610.9,-76.1 612.4,-75.9 613.9,-72.0 615.4,-78.7 616.9,-85.3 618.4,-70.9 619.9,-72.6 621.4,-72.7 622.9,-72.3 624.4,-72.0 625.9,-72.9 627.4,-71.2 628.9,-73.2 630.4,-73.7 631.9,-71.5 633.4,-73.9 634.9,-74.2 636.4,-72.9 637.9,-74.6 639.4,-76.1 640.9,-74.5 642.4,-77.1 643.9,-76.3 645.4,-76.6 646.9,-77.2 648.4,-77.3 649.9,-75.1 651.4,-75.1 652.9,-75.9 654.5,-74.4 656.0,-77.2 657.5,-76.8 659.0,-76.1 660.5,-75.7 662.0,-74.0 663.5,-75.4 665.0,-75.2 666.5,-73.8 668.0,-72.9 669.5,-71.7 671.0,-70.7 672.5,-71.5 674.0,-71.3 675.5,-69.8 677.0,-72.9 678.5,-72.2 L678.5,0Z" fill="currentColor" stroke="currentColor"/><path id="s4v6" d="M435,0 L435.0,-69.8 436.5,-73.9 438.0,-74.7 439.5,-76.2 441.0,-72.9 442.5,-73.2 444.0,-75.3 445.5,-74.2 447.0,-70.3 448.5,-71.8 450.0,-70.1 451.5,-74.0 453.0,-71.6 454.5,-73.9 456.0,-74.0 457.5,-73.1 459.0,-72.4 460.6,-74.0 462.1,-70.6 463.6,-71.6 465.1,-72.5 466.6,-71.3 468.1,-72.6 469.6,-74.5 471.1,-72.7 472.6,-72.7 474.1,-71.1 475.6,-71.2 477.1,-74.0 478.6,-70.4 480.1,-70.8 481.6,-72.0 483.1,-71.1 484.6,-73.9 486.1,-74.0 487.6,-73.9 489.1,-72.5 490.6,-72.7 492.1,-69.8 493.6,-70.2 495.1,-72.4 496.6,-71.5 498.1,-71.1 499.6,-70.4 501.1,-72.8 502.6,-74.8 504.1,-73.4 505.6,-72.8 507.1,-72.6 508.7,-69.7 510.2,-69.5 511.7,-70.2 513.2,-72.2 514.7,-70.4 516.2,-71.5 517.7,-71.8 519.2,-72.4 520.7,-71.6 522.2,-72.8 523.7,-71.5 525.2,-70.2 526.7,-69.7 528.2,-69.1 529.7,-69.7 531.2,-70.9 532.7,-71.7 534.2,-72.3 535.7,-72.4 537.2,-73.4 538.7,-75.2 540.2,-77.0 541.7,-77.7 543.2,-76.5 544.7,-81.1 546.2,-81.1 547.7,-80.6 549.2,-79.8 550.7,-83.0 552.2,-81.2 553.7,-80.1 555.2,-80.0 556.8,-77.3 558.3,-77.3 559.8,-78.0 561.3,-79.9 562.8,-77.9 564.3,-79.5 565.8,-79.5 567.3,-86.1 568.8,-86.0 570.3,-78.4 571.8,-79.4 573.3,-78.4 574.8,-78.4 576.3,-76.3 577.8,-78.3 579.3,-77.7 580.8,-80.8 582.3,-81.4 583.8,-79.8 585.3,-76.4 586.8,-76.9 588.3,-76.7 589.8,-76.5 591.3,-79.3 592.8,-78.1 594.3,-79.9 595.8,-81.2 597.3,-80.4 598.8,-80.4 600.3,-79.6 601.8,-78.2 603.3,-75.0 604.8,-74.8 606.4,-77.9 607.9,-78.8 609.4,-77.9 610.9,-78.8 612.4,-76.9 613.9,-75.1 615.4,-78.7 616.9,-86.1 618.4,-71.4 619.9,-71.0 621.4,-70.3 622.9,-69.5 624.4,-72.4 625.9,-75.1 627.4,-73.6 628.9,-72.9 630.4,-74.8 631.9,-73.7 633.4,-72.0 634.9,-74.4 636.4,-71.9 637.9,-73.7 639.4,-76.0 640.9,-76.6 642.4,-74.9 643.9,-76.7 645.4,-78.0 646.9,-74.8 648.4,-76.4 649.9,-74.8 651.4,-75.9 652.9,-74.4 654.5,-75.7 656.0,-76.8 657.5,-75.7 659.0,-76.0 660.5,-75.9 662.0,-75.6 663.5,-72.7 665.0,-72.1 666.5,-74.3 668.0,-71.1 669.5,-72.2 671.0,-73.9 672.5,-75.2 674.0,-73.4 675.5,-71.7 677.0,-72.0 678.5,-72.1 L678.5,0Z" fill="currentColor" stroke="currentColor"/><path id="s4v7" d="M435,0 L435.0,-73.1 436.5,-74.8 438.0,-73.4 439.5,-74.1 441.0,-70.3 442.5,-72.5 444.0,-72.6 445.5,-74.6 447.0,-73.3 448.5,-73.6 450.0,-72.4 451.5,-71.2 453.0,-69.2 454.5,-71.6 456.0,-73.8 457.5,-71.9 459.0,-74.3 460.6,-74.4 462.1,-73.2 463.6,-69.5 465.1,-72.3 466.6,-71.1 468.1,-70.5 469.6,-72.6 471.1,-74.2 472.6,-71.7 474.1,-72.3 475.6,-69.9 477.1,-71.5 478.6,-70.9 480.1,-71.6 481.6,-71.9 483.1,-73.9 484.6,-73.4 486.1,-73.0 487.6,-70.2 489.1,-70.7 490.6,-70.0 492.1,-71.5 493.6,-71.2 495.1,-75.2 496.6,-72.3 498.1,-71.1 499.6,-70.5 501.1,-71.5 502.6,-70.9 504.1,-70.8 505.6,-71.9 507.1,-74.1 508.7,-70.6 510.2,-71.0 511.7,-71.4 513.2,-70.2 514.7,-68.9 516.2,-70.8 517.7,-69.9 519.2,-72.9 520.7,-73.7 522.2,-74.0 523.7,-71.0 525.2,-70.3 526.7,-69.2 528.2,-70.3 529.7,-70.1 531.2,-72.3 532.7,-71.1 534.2,-73.5 535.7,-72.5 537.2,-70.9 538.7,-73.1 540.2,-75.2 541.7,-79.4 543.2,-80.3 544.7,-81.3 546.2,-84.2 547.7,-82.5 549.2,-81.2 550.7,-78.2 552.2,-81.0 553.7,-78.7 555.2,-79.7 556.8,-79.1 558.3,-81.4 559.8,-80.3 561.3,-80.3 562.8,-76.9 564.3,-75.7 565.8,-77.1 567.3,-84.4 568.8,-85.3 570.3,-79.1 571.8,-79.9 573.3,-78.3 574.8,-78.9 576.3,-75.0 577.8,-75.1 579.3,-78.6 580.8,-80.1 582.3,-81.4 583.8,-80.5 585.3,-78.7 586.8,-79.3 588.3,-78.9 589.8,-78.2 591.3,-78.6 592.8,-79.1 594.3,-78.9 595.8,-80.1 597.3,-80.9 598.8,-76.7 600.3,-75.5 601.8,-76.8 603.3,-77.8 604.8,-78.3 606.4,-80.3 607.9,-79.6 609.4,-80.7 610.9,-76.5 612.4,-73.7 613.9,-70.8 615.4,-77.6 616.9,-86.0 618.4,-72.3 619.9,-71.8 621.4,-71.4 622.9,-70.7 624.4,-71.4 625.9,-71.6 627.4,-71.0 628.9,-71.7 630.4,-73.8 631.9,-75.6 633.4,-76.0 634.9,-75.9 636.4,-74.2 637.9,-72.8 639.4,-73.1 640.9,-75.3 642.4,-75.7 643.9,-75.4 645.4,-78.4 646.9,-77.4 648.4,-76.2 649.9,-75.1 651.4,-76.5 652.9,-76.5 654.5,-77.4 656.0,-78.8 657.5,-77.0 659.0,-76.9 660.5,-74.7 662.0,-72.8 663.5,-70.8 665.0,-71.9 666.5,-75.2 668.0,-73.7 669.5,-74.4 671.0,-74.8 672.5,-74.6 674.0,-72.4 675.5,-69.2 677.0,-70.5 678.5,-71.0 L678.5,0Z" fill="currentColor" stroke="currentColor"/></defs>
<g stroke-width="0.6"><use href="#s4v0" transform="matrix(1 0 0 1.0000 0 632.80)" color="#70a4f3"/><use href="#s4v0" transform="matrix(1 0 0 0.9862 0 632.80)" color="#e4bf26"/><use href="#s4v0" transform="matrix(1 0 0 0.9704 0 632.80)" color="#6fb366"/><use href="#s4v0" transform="matrix(1 0 0 0.9577 0 632.80)" color="#e2dff8"/><use href="#s4v7" transform="matrix(1 0 0 0.9378 0 632.80)" color="#f9def9"/><use href="#s4v1" transform="matrix(1 0 0 0.9254 0 632.80)" color="#c4e3f5"/><use href="#s4v5" transform="matrix(1 0 0 0.9095 0 632.80)" color="#fce6e2"/><use href="#s4v2" transform="matrix(1 0 0 0.8914 0 632.80)" color="#f9e6d8"/><use href="#s4v3" transform="matrix(1 0 0 0.8779 0 632.80)" color="#d6faff"/><use href="#s4v3" transform="matrix(1 0 0 0.8631 0 632.80)" color="#fcedd1"/><use href="#s4v3" transform="matrix(1 0 0 0.8508 0 632.80)" color="#e4f9dd"/><use href="#s4v4" transform="matrix(1 0 0 0.8302 0 632.80)" color="#5b4a73"/><use href="#s4v7" transform="matrix(1 0 0 0.8005 0 632.80)" color="#6b3964"/><use href="#s4v5" transform="matrix(1 0 0 0.7758 0 632.80)" color="#2a4a6b"/><use href="#s4v5" transform="matrix(1 0 0 0.7472 0 632.80)" color="#713730"/><use href="#s4v3" transform="matrix(1 0 0 0.7061 0 632.80)" color="#a8602e"/><use href="#s4v5" transform="matrix(1 0 0 0.6774 0 632.80)" color="#4e7076"/><use href="#s4v5" transform="matrix(1 0 0 0.6527 0 632.80)" color="#a58827"/><use href="#s4v1" transform="matrix(1 0 0 0.6242 0 632.80)" color="#5b7e51"/><use href="#s4v7" transform="matrix(1 0 0 0.5966 0 632.80)" color="#9383c1"/><use href="#s4v5" transform="matrix(1 0 0 0.5807 0 632.80)" color="#dc95d5"/><use href="#s4v5" transform="matrix(1 0 0 0.5700 0 632.80)" color="#6ba4d5"/><use href="#s4v4" transform="matrix(1 0 0 0.5561 0 632.80)" color="#ed7b77"/><use href="#s4v4" transform="matrix(1 0 0 0.5436 0 632.80)" color="#f9a368"/><use href="#s4v6" transform="matrix(1 0 0 0.5323 0 632.80)" color="#7ccde0"/><use href="#s4v2" transform="matrix(1 0 0 0.5184 0 632.80)" color="#f3d182"/><use href="#s4v5" transform="matrix(1 0 0 0.5043 0 632.80)" color="#a9cc9b"/><use href="#s4v6" transform="matrix(1 0 0 0.4898 0 632.80)" color="#7867a3"/><use href="#s4v4" transform="matrix(1 0 0 0.4794 0 632.80)" color="#a54c94"/><use href="#s4v4" transform="matrix(1 0 0 0.4638 0 632.80)" color="#2e6aaf"/><use href="#s4v1" transform="matrix(1 0 0 0.4459 0 632.80)" color="#c83d26"/><use href="#s4v2" transform="matrix(1 0 0 0.4303 0 632.80)" color="#e4894c"/><use href="#s4v1" transform="matrix(1 0 0 0.4195 0 632.80)" color="#7bbbd0"/><use href="#s4v4" transform="matrix(1 0 0 0.4050 0 632.80)" color="#e8b832"/><use href="#s4v3" transform="matrix(1 0 0 0.3938 0 632.80)" color="#79ac6b"/><use href="#s4v1" transform="matrix(1 0 0 0.3779 0 632.80)" color="#baafe4"/><use href="#s4v3" transform="matrix(1 0 0 0.3652 0 632.80)" color="#e8b5e6"/><use href="#s4v7" transform="matrix(1 0 0 0.3484 0 632.80)" color="#94c0dd"/><use href="#s4v3" transform="matrix(1 0 0 0.3310 0 632.80)" color="#f3a1a1"/><use href="#s4v4" transform="matrix(1 0 0 0.3182 0 632.80)" color="#f9c49f"/><use href="#s4v5" transform="matrix(1 0 0 0.3046 0 632.80)" color="#85e0ef"/><use href="#s4v5" transform="matrix(1 0 0 0.2882 0 632.80)" color="#f5dba7"/><use href="#s4v1" transform="matrix(1 0 0 0.2774 0 632.80)" color="#c1e0b7"/><use href="#s4v2" transform="matrix(1 0 0 0.2622 0 632.80)" color="#71608b"/><use href="#s4v1" transform="matrix(1 0 0 0.2388 0 632.80)" color="#824079"/><use href="#s4v4" transform="matrix(1 0 0 0.2211 0 632.80)" color="#2e5f8f"/><use href="#s4v2" transform="matrix(1 0 0 0.1993 0 632.80)" color="#9a3327"/><use href="#s4v6" transform="matrix(1 0 0 0.1835 0 632.80)" color="#ca7439"/><use href="#s4v3" transform="matrix(1 0 0 0.1658 0 632.80)" color="#6091c6"/><use href="#s4v1" transform="matrix(1 0 0 0.1527 0 632.80)" color="#d3b026"/><use href="#s4v5" transform="matrix(1 0 0 0.1402 0 632.80)" color="#6a985e"/><use href="#s4v1" transform="matrix(1 0 0 0.1224 0 632.80)" color="#8575ae"/><use href="#s4v5" transform="matrix(1 0 0 0.1080 0 632.80)" color="#c45fb5"/><use href="#s4v7" transform="matrix(1 0 0 0.0938 0 632.80)" color="#408cca"/><use href="#s4v6" transform="matrix(1 0 0 0.0818 0 632.80)" color="#e44e60"/><use href="#s4v1" transform="matrix(1 0 0 0.0666 0 632.80)" color="#fa7b26"/><use href="#s4v1" transform="matrix(1 0 0 0.0507 0 632.80)" color="#70a4f3"/><use href="#s4v1" transform="matrix(1 0 0 0.0321 0 632.80)" color="#e4bf26"/><use href="#s4v3" transform="matrix(1 0 0 0.0176 0 632.80)" color="#6fb366"/></g>
<rect x="373" y="666.3" width="14" height="4" rx="2" fill="#56a64b"/>
<text x="395" y="672.3" font-size="12.5" fill="#24292e" text-anchor="start" font-weight="normal" letter-spacing="0.98" >distributor-zone-a-56fd759c86-2bql8</text>
<rect x="373" y="690.0" width="14" height="4" rx="2" fill="#e0b400"/>
<text x="395" y="696.0" font-size="12.5" fill="#24292e" text-anchor="start" font-weight="normal" letter-spacing="0.98" >distributor-zone-a-56fd759c86-48qpb</text>
<rect x="373" y="713.5" width="14" height="4" rx="2" fill="#5794f2"/>
<text x="395" y="719.5" font-size="12.5" fill="#24292e" text-anchor="start" font-weight="normal" letter-spacing="0.98" >distributor-zone-a-56fd759c86-5jxxw</text>
<rect x="91" y="935.8" width="243.0" height="1" fill="#e6e7e8"/>
<text x="86.5" y="940.5999999999999" font-size="12" fill="#24292e" text-anchor="end" font-weight="normal" letter-spacing="0.9" >0 B/s</text>
<rect x="91" y="899.4" width="243.0" height="1" fill="#e6e7e8"/>
<text x="86.5" y="904.1999999999999" font-size="12" fill="#24292e" text-anchor="end" font-weight="normal" letter-spacing="0.9" >200 MB/s</text>
<rect x="91" y="863.0" width="243.0" height="1" fill="#e6e7e8"/>
<text x="86.5" y="867.8" font-size="12" fill="#24292e" text-anchor="end" font-weight="normal" letter-spacing="0.9" >400 MB/s</text>
<rect x="113.9" y="831.6" width="1" height="108.7" fill="#e6e7e8"/>
<text x="114.60000000000001" y="955.6999999999999" font-size="12" fill="#24292e" text-anchor="middle" font-weight="normal" letter-spacing="0.35" >15:30</text>
<rect x="174.9" y="831.6" width="1" height="108.7" fill="#e6e7e8"/>
<text x="175.56666666666666" y="955.6999999999999" font-size="12" fill="#24292e" text-anchor="middle" font-weight="normal" letter-spacing="0.35" >15:45</text>
<rect x="235.8" y="831.6" width="1" height="108.7" fill="#e6e7e8"/>
<text x="236.53333333333333" y="955.6999999999999" font-size="12" fill="#24292e" text-anchor="middle" font-weight="normal" letter-spacing="0.35" >16:00</text>
<rect x="296.8" y="831.6" width="1" height="108.7" fill="#e6e7e8"/>
<text x="297.5" y="955.6999999999999" font-size="12" fill="#24292e" text-anchor="middle" font-weight="normal" letter-spacing="0.35" >16:15</text>
<defs><path id="s5v0" d="M91,0 L91.0,-75.5 92.5,-76.6 94.0,-76.6 95.5,-77.1 97.0,-75.6 98.5,-75.9 100.0,-79.0 101.5,-77.6 103.0,-76.1 104.5,-74.7 106.0,-75.5 107.5,-74.8 109.0,-75.0 110.5,-75.3 112.0,-76.2 113.5,-75.6 115.0,-74.2 116.5,-74.8 118.0,-74.5 119.5,-76.1 121.0,-76.0 122.5,-75.9 124.0,-75.9 125.5,-75.7 127.0,-76.2 128.5,-75.8 130.0,-74.6 131.5,-75.9 133.0,-75.0 134.5,-75.6 136.0,-75.2 137.5,-74.8 139.0,-74.7 140.5,-74.8 142.0,-74.5 143.5,-74.1 145.0,-75.6 146.5,-75.5 148.0,-75.9 149.5,-75.3 151.0,-74.9 152.5,-75.3 154.0,-73.9 155.5,-75.1 157.0,-74.6 158.5,-74.0 160.0,-74.0 161.5,-74.7 163.0,-74.1 164.5,-74.5 166.0,-74.8 167.5,-74.3 169.0,-73.7 170.5,-74.5 172.0,-73.9 173.5,-73.9 175.0,-73.8 176.5,-74.1 178.0,-73.4 179.5,-74.7 181.0,-75.4 182.5,-74.1 184.0,-74.8 185.5,-75.2 187.0,-73.2 188.5,-75.4 190.0,-79.4 191.5,-81.9 193.0,-83.9 194.5,-85.1 196.0,-88.2 197.5,-91.6 199.0,-91.6 200.5,-91.3 202.0,-89.6 203.5,-91.3 205.0,-90.0 206.5,-90.9 208.0,-89.2 209.5,-91.4 211.0,-90.4 212.5,-90.6 214.0,-89.2 215.5,-90.2 217.0,-90.1 218.5,-90.0 220.0,-89.3 221.5,-90.3 223.0,-89.2 224.5,-89.0 226.0,-88.6 227.5,-89.9 229.0,-88.3 230.5,-88.6 232.0,-88.1 233.5,-89.6 235.0,-89.3 236.5,-89.2 238.0,-87.8 239.5,-88.8 241.0,-88.5 242.5,-87.7 244.0,-87.4 245.5,-90.0 247.0,-87.6 248.5,-88.0 250.0,-87.9 251.5,-88.7 253.0,-87.3 254.5,-88.2 256.0,-87.9 257.5,-88.4 259.0,-85.6 260.5,-85.8 262.0,-85.5 263.5,-84.6 265.0,-81.5 266.5,-79.6 268.0,-78.8 269.5,-76.5 271.0,-72.6 272.5,-89.7 274.0,-78.7 275.5,-72.8 277.0,-76.8 278.5,-77.7 280.0,-78.1 281.5,-76.7 283.0,-77.4 284.5,-76.8 286.0,-76.6 287.5,-76.6 289.0,-76.4 290.5,-76.7 292.0,-75.9 293.5,-76.7 295.0,-76.0 296.5,-77.5 298.0,-77.1 299.5,-75.7 301.0,-77.4 302.5,-76.1 304.0,-76.7 305.5,-76.8 307.0,-76.3 308.5,-76.2 310.0,-76.5 311.5,-75.7 313.0,-77.4 314.5,-75.6 316.0,-77.2 317.5,-75.8 319.0,-76.0 320.5,-76.1 322.0,-75.3 323.5,-75.5 325.0,-76.0 326.5,-76.1 328.0,-77.1 329.5,-77.3 331.0,-75.1 332.5,-76.2 334.0,-75.2 L334,0Z" fill="currentColor" stroke="currentColor"/><path id="s5v1" d="M91,0 L91.0,-72.6 92.5,-74.5 94.0,-76.5 95.5,-74.3 97.0,-75.3 98.5,-73.0 100.0,-76.9 101.5,-77.4 103.0,-75.5 104.5,-72.8 106.0,-73.8 107.5,-72.6 109.0,-72.2 110.5,-74.6 112.0,-76.1 113.5,-72.8 115.0,-74.2 116.5,-72.2 118.0,-74.2 119.5,-73.6 121.0,-73.6 122.5,-73.3 124.0,-74.3 125.5,-73.1 127.0,-75.6 128.5,-73.8 130.0,-73.6 131.5,-73.2 133.0,-72.7 134.5,-74.2 136.0,-73.6 137.5,-74.8 139.0,-74.6 140.5,-73.0 142.0,-73.1 143.5,-71.5 145.0,-73.8 146.5,-75.1 148.0,-74.8 149.5,-72.9 151.0,-73.4 152.5,-75.3 154.0,-71.5 155.5,-72.6 157.0,-74.3 158.5,-72.4 160.0,-72.9 161.5,-72.3 163.0,-73.1 164.5,-73.8 166.0,-73.4 167.5,-71.4 169.0,-73.4 170.5,-74.1 172.0,-72.1 173.5,-71.3 175.0,-72.2 176.5,-72.8 178.0,-70.9 179.5,-72.4 181.0,-75.2 182.5,-71.5 184.0,-74.2 185.5,-74.3 187.0,-70.8 188.5,-74.2 190.0,-76.9 191.5,-81.4 193.0,-81.0 194.5,-84.5 196.0,-87.7 197.5,-89.8 199.0,-90.4 200.5,-89.4 202.0,-86.4 203.5,-88.8 205.0,-90.0 206.5,-89.7 208.0,-87.3 209.5,-89.6 211.0,-87.8 212.5,-88.9 214.0,-88.9 215.5,-89.3 217.0,-87.0 218.5,-88.7 220.0,-86.6 221.5,-86.7 223.0,-86.9 224.5,-86.6 226.0,-86.4 227.5,-88.8 229.0,-85.1 230.5,-86.9 232.0,-84.9 233.5,-88.5 235.0,-86.2 236.5,-86.4 238.0,-85.6 239.5,-87.2 241.0,-88.0 242.5,-85.0 244.0,-86.2 245.5,-87.6 247.0,-87.2 248.5,-87.8 250.0,-87.4 251.5,-85.8 253.0,-86.6 254.5,-85.1 256.0,-86.6 257.5,-86.4 259.0,-84.4 260.5,-83.6 262.0,-85.1 263.5,-83.3 265.0,-78.4 266.5,-79.0 268.0,-76.8 269.5,-75.5 271.0,-71.7 272.5,-89.6 274.0,-78.6 275.5,-70.0 277.0,-74.2 278.5,-75.2 280.0,-75.6 281.5,-73.8 283.0,-76.9 284.5,-75.0 286.0,-75.0 287.5,-74.9 289.0,-73.5 290.5,-74.4 292.0,-73.0 293.5,-76.4 295.0,-74.0 296.5,-75.4 298.0,-74.8 299.5,-73.8 301.0,-74.9 302.5,-75.1 304.0,-73.9 305.5,-75.6 307.0,-74.5 308.5,-73.4 310.0,-74.3 311.5,-74.8 313.0,-76.7 314.5,-74.6 316.0,-75.3 317.5,-72.8 319.0,-73.2 320.5,-74.9 322.0,-74.1 323.5,-73.0 325.0,-75.1 326.5,-74.9 328.0,-77.0 329.5,-76.7 331.0,-73.5 332.5,-74.1 334.0,-73.4 L334,0Z" fill="currentColor" stroke="currentColor"/><path id="s5v2" d="M91,0 L91.0,-74.4 92.5,-73.7 94.0,-74.7 95.5,-76.6 97.0,-75.4 98.5,-72.9 100.0,-75.9 101.5,-74.7 103.0,-74.2 104.5,-73.7 106.0,-75.3 107.5,-74.0 109.0,-74.3 110.5,-72.5 112.0,-73.4 113.5,-73.3 115.0,-73.8 116.5,-74.1 118.0,-73.6 119.5,-73.2 121.0,-75.5 122.5,-73.5 124.0,-73.9 125.5,-74.1 127.0,-73.3 128.5,-75.0 130.0,-73.0 131.5,-75.4 133.0,-74.8 134.5,-75.5 136.0,-74.2 137.5,-74.5 139.0,-74.5 140.5,-71.8 142.0,-73.7 143.5,-71.4 145.0,-73.5 146.5,-73.3 148.0,-73.9 149.5,-72.4 151.0,-72.3 152.5,-73.2 154.0,-72.3 155.5,-73.0 157.0,-72.4 158.5,-72.3 160.0,-72.5 161.5,-74.2 163.0,-71.6 164.5,-73.1 166.0,-74.6 167.5,-73.8 169.0,-71.1 170.5,-73.7 172.0,-72.7 173.5,-71.9 175.0,-71.2 176.5,-73.1 178.0,-72.3 179.5,-73.4 181.0,-75.3 182.5,-71.5 184.0,-74.7 185.5,-72.4 187.0,-72.8 188.5,-75.0 190.0,-76.7 191.5,-79.2 193.0,-83.1 194.5,-83.2 196.0,-86.5 197.5,-89.0 199.0,-90.9 200.5,-88.3 202.0,-86.1 203.5,-88.8 205.0,-86.7 206.5,-87.4 208.0,-87.9 209.5,-88.3 211.0,-87.4 212.5,-88.5 214.0,-88.8 215.5,-88.0 217.0,-86.8 218.5,-88.9 220.0,-87.0 221.5,-87.0 223.0,-87.0 224.5,-88.9 226.0,-86.3 227.5,-89.0 229.0,-85.3 230.5,-86.2 232.0,-87.0 233.5,-86.4 235.0,-87.0 236.5,-88.0 238.0,-84.8 239.5,-85.6 241.0,-85.3 242.5,-84.6 244.0,-85.1 245.5,-87.5 247.0,-85.5 248.5,-86.2 250.0,-84.4 251.5,-87.5 253.0,-87.0 254.5,-85.7 256.0,-86.1 257.5,-86.5 259.0,-83.5 260.5,-84.9 262.0,-84.8 263.5,-84.4 265.0,-78.9 266.5,-76.7 268.0,-76.6 269.5,-76.2 271.0,-69.8 272.5,-86.7 274.0,-77.1 275.5,-72.8 277.0,-74.2 278.5,-75.8 280.0,-76.1 281.5,-76.6 283.0,-75.1 284.5,-76.7 286.0,-75.1 287.5,-76.2 289.0,-75.3 290.5,-74.0 292.0,-73.7 293.5,-74.2 295.0,-75.1 296.5,-76.3 298.0,-75.2 299.5,-75.6 301.0,-76.2 302.5,-73.1 304.0,-74.4 305.5,-74.2 307.0,-75.4 308.5,-74.1 310.0,-74.0 311.5,-73.6 313.0,-76.0 314.5,-75.1 316.0,-77.2 317.5,-73.1 319.0,-73.1 320.5,-75.3 322.0,-73.0 323.5,-74.2 325.0,-74.1 326.5,-73.5 328.0,-76.1 329.5,-75.4 331.0,-74.3 332.5,-74.6 334.0,-75.1 L334,0Z" fill="currentColor" stroke="currentColor"/><path id="s5v3" d="M91,0 L91.0,-74.7 92.5,-75.7 94.0,-73.8 95.5,-76.7 97.0,-73.4 98.5,-75.6 100.0,-75.9 101.5,-77.1 103.0,-75.8 104.5,-74.0 106.0,-72.7 107.5,-72.8 109.0,-72.3 110.5,-73.8 112.0,-75.8 113.5,-74.6 115.0,-72.9 116.5,-71.8 118.0,-74.0 119.5,-75.4 121.0,-73.4 122.5,-75.6 124.0,-73.0 125.5,-74.8 127.0,-74.4 128.5,-73.8 130.0,-71.9 131.5,-75.7 133.0,-72.5 134.5,-75.1 136.0,-73.0 137.5,-74.8 139.0,-72.4 140.5,-74.3 142.0,-73.9 143.5,-74.0 145.0,-74.6 146.5,-74.5 148.0,-73.0 149.5,-73.4 151.0,-73.8 152.5,-72.4 154.0,-73.4 155.5,-74.5 157.0,-71.7 158.5,-71.1 160.0,-72.0 161.5,-71.8 163.0,-73.9 164.5,-71.8 166.0,-72.7 167.5,-72.3 169.0,-71.2 170.5,-74.2 172.0,-73.3 173.5,-73.5 175.0,-72.3 176.5,-72.5 178.0,-71.9 179.5,-73.6 181.0,-73.1 182.5,-71.6 184.0,-72.5 185.5,-75.1 187.0,-72.8 188.5,-74.8 190.0,-78.7 191.5,-80.1 193.0,-83.2 194.5,-83.0 196.0,-87.0 197.5,-90.3 199.0,-89.0 200.5,-87.9 202.0,-89.0 203.5,-90.1 205.0,-86.5 206.5,-90.1 208.0,-89.1 209.5,-90.7 211.0,-87.4 212.5,-88.0 214.0,-85.8 215.5,-88.4 217.0,-89.9 218.5,-88.9 220.0,-86.8 221.5,-88.9 223.0,-88.7 224.5,-87.7 226.0,-86.9 227.5,-88.6 229.0,-86.7 230.5,-88.1 232.0,-88.0 233.5,-86.8 235.0,-86.7 236.5,-87.7 238.0,-87.4 239.5,-87.7 241.0,-86.5 242.5,-84.6 244.0,-85.7 245.5,-86.5 247.0,-85.8 248.5,-87.4 250.0,-85.7 251.5,-86.6 253.0,-85.2 254.5,-85.7 256.0,-87.8 257.5,-86.9 259.0,-82.8 260.5,-85.3 262.0,-85.3 263.5,-84.0 265.0,-80.5 266.5,-78.2 268.0,-77.9 269.5,-74.6 271.0,-72.1 272.5,-88.4 274.0,-76.5 275.5,-71.2 277.0,-73.8 278.5,-74.8 280.0,-77.3 281.5,-75.7 283.0,-75.7 284.5,-75.2 286.0,-75.4 287.5,-74.0 289.0,-75.8 290.5,-75.3 292.0,-75.6 293.5,-74.0 295.0,-74.2 296.5,-74.4 298.0,-76.7 299.5,-73.5 301.0,-75.6 302.5,-75.9 304.0,-74.2 305.5,-74.1 307.0,-76.0 308.5,-73.3 310.0,-74.1 311.5,-73.9 313.0,-75.7 314.5,-74.8 316.0,-77.0 317.5,-74.4 319.0,-73.3 320.5,-75.5 322.0,-73.9 323.5,-74.6 325.0,-73.9 326.5,-73.2 328.0,-74.3 329.5,-76.4 331.0,-73.8 332.5,-76.2 334.0,-73.6 L334,0Z" fill="currentColor" stroke="currentColor"/><path id="s5v4" d="M91,0 L91.0,-72.9 92.5,-74.0 94.0,-76.4 95.5,-75.8 97.0,-75.4 98.5,-74.6 100.0,-76.2 101.5,-76.7 103.0,-73.5 104.5,-71.8 106.0,-73.1 107.5,-74.2 109.0,-72.2 110.5,-72.5 112.0,-73.1 113.5,-75.6 115.0,-74.2 116.5,-73.9 118.0,-73.0 119.5,-74.8 121.0,-75.7 122.5,-74.0 124.0,-73.9 125.5,-73.8 127.0,-74.6 128.5,-74.1 130.0,-72.5 131.5,-75.7 133.0,-73.7 134.5,-75.2 136.0,-74.9 137.5,-72.6 139.0,-73.7 140.5,-73.8 142.0,-73.7 143.5,-72.3 145.0,-75.3 146.5,-73.6 148.0,-75.7 149.5,-72.4 151.0,-74.5 152.5,-73.0 154.0,-72.3 155.5,-73.9 157.0,-73.7 158.5,-72.9 160.0,-71.8 161.5,-73.1 163.0,-72.5 164.5,-73.8 166.0,-72.9 167.5,-73.8 169.0,-72.3 170.5,-72.5 172.0,-72.3 173.5,-72.2 175.0,-72.1 176.5,-73.5 178.0,-70.6 179.5,-72.7 181.0,-73.2 182.5,-71.3 184.0,-73.4 185.5,-74.2 187.0,-72.4 188.5,-74.5 190.0,-78.5 191.5,-80.9 193.0,-83.2 194.5,-83.5 196.0,-87.2 197.5,-90.3 199.0,-89.2 200.5,-90.2 202.0,-86.5 203.5,-88.4 205.0,-88.8 206.5,-87.8 208.0,-88.6 209.5,-91.1 211.0,-86.8 212.5,-90.5 214.0,-89.2 215.5,-87.1 217.0,-90.1 218.5,-87.7 220.0,-87.4 221.5,-89.5 223.0,-88.3 224.5,-85.5 226.0,-87.2 227.5,-89.0 229.0,-86.8 230.5,-86.0 232.0,-87.1 233.5,-89.2 235.0,-86.4 236.5,-88.8 238.0,-87.6 239.5,-88.8 241.0,-84.9 242.5,-86.2 244.0,-84.8 245.5,-88.0 247.0,-84.2 248.5,-86.8 250.0,-86.7 251.5,-86.3 253.0,-87.3 254.5,-87.0 256.0,-85.2 257.5,-86.4 259.0,-83.9 260.5,-82.6 262.0,-84.0 263.5,-82.1 265.0,-80.2 266.5,-79.3 268.0,-77.6 269.5,-75.9 271.0,-72.5 272.5,-88.6 274.0,-78.3 275.5,-71.5 277.0,-74.5 278.5,-75.4 280.0,-75.3 281.5,-75.7 283.0,-75.3 284.5,-74.1 286.0,-75.3 287.5,-73.8 289.0,-76.1 290.5,-73.9 292.0,-73.3 293.5,-73.7 295.0,-73.5 296.5,-75.3 298.0,-75.8 299.5,-73.5 301.0,-74.7 302.5,-74.3 304.0,-74.8 305.5,-74.0 307.0,-75.4 308.5,-75.1 310.0,-76.4 311.5,-73.1 313.0,-75.4 314.5,-73.6 316.0,-76.5 317.5,-75.2 319.0,-74.5 320.5,-73.5 322.0,-74.2 323.5,-74.2 325.0,-74.7 326.5,-73.5 328.0,-76.7 329.5,-74.6 331.0,-75.1 332.5,-74.1 334.0,-72.9 L334,0Z" fill="currentColor" stroke="currentColor"/><path id="s5v5" d="M91,0 L91.0,-74.1 92.5,-74.3 94.0,-75.8 95.5,-76.7 97.0,-74.6 98.5,-75.1 100.0,-76.8 101.5,-75.9 103.0,-74.0 104.5,-71.7 106.0,-73.2 107.5,-72.4 109.0,-72.1 110.5,-72.5 112.0,-73.9 113.5,-74.6 115.0,-72.7 116.5,-72.6 118.0,-72.2 119.5,-73.4 121.0,-73.7 122.5,-73.9 124.0,-75.2 125.5,-73.9 127.0,-75.6 128.5,-73.8 130.0,-74.0 131.5,-75.8 133.0,-72.2 134.5,-73.0 136.0,-74.3 137.5,-74.7 139.0,-72.2 140.5,-72.5 142.0,-74.1 143.5,-71.6 145.0,-73.1 146.5,-73.8 148.0,-75.1 149.5,-75.1 151.0,-74.7 152.5,-74.0 154.0,-71.8 155.5,-73.2 157.0,-73.9 158.5,-71.6 160.0,-73.8 161.5,-72.9 163.0,-73.6 164.5,-74.5 166.0,-74.2 167.5,-72.0 169.0,-73.1 170.5,-74.4 172.0,-72.5 173.5,-72.8 175.0,-72.1 176.5,-72.4 178.0,-71.4 179.5,-72.0 181.0,-74.3 182.5,-72.2 184.0,-74.4 185.5,-74.5 187.0,-73.0 188.5,-72.8 190.0,-78.3 191.5,-79.6 193.0,-81.0 194.5,-83.8 196.0,-87.5 197.5,-90.7 199.0,-89.8 200.5,-89.9 202.0,-89.4 203.5,-88.2 205.0,-87.7 206.5,-87.7 208.0,-86.2 209.5,-88.8 211.0,-87.4 212.5,-88.1 214.0,-87.7 215.5,-87.3 217.0,-86.8 218.5,-89.6 220.0,-88.8 221.5,-89.7 223.0,-87.5 224.5,-85.9 226.0,-86.7 227.5,-86.8 229.0,-87.0 230.5,-86.6 232.0,-87.2 233.5,-87.3 235.0,-88.3 236.5,-89.1 238.0,-86.4 239.5,-86.8 241.0,-85.3 242.5,-86.7 244.0,-84.2 245.5,-87.1 247.0,-87.1 248.5,-85.3 250.0,-84.6 251.5,-85.3 253.0,-84.9 254.5,-86.9 256.0,-86.0 257.5,-86.1 259.0,-83.5 260.5,-85.1 262.0,-82.4 263.5,-82.8 265.0,-81.2 266.5,-78.6 268.0,-78.6 269.5,-75.1 271.0,-72.3 272.5,-87.8 274.0,-77.8 275.5,-70.4 277.0,-74.4 278.5,-77.2 280.0,-75.6 281.5,-74.9 283.0,-76.6 284.5,-74.0 286.0,-76.5 287.5,-75.4 289.0,-74.6 290.5,-76.2 292.0,-74.5 293.5,-74.0 295.0,-74.9 296.5,-75.3 298.0,-76.5 299.5,-72.7 301.0,-74.5 302.5,-75.6 304.0,-74.4 305.5,-75.8 307.0,-76.2 308.5,-75.5 310.0,-74.2 311.5,-74.3 313.0,-75.7 314.5,-75.2 316.0,-76.7 317.5,-74.7 319.0,-74.4 320.5,-73.6 322.0,-73.9 323.5,-74.5 325.0,-73.2 326.5,-74.0 328.0,-74.7 329.5,-74.8 331.0,-73.6 332.5,-75.4 334.0,-74.9 L334,0Z" fill="currentColor" stroke="currentColor"/><path id="s5v6" d="M91,0 L91.0,-73.5 92.5,-74.3 94.0,-73.9 95.5,-74.3 97.0,-74.1 98.5,-74.4 100.0,-76.0 101.5,-77.3 103.0,-74.9 104.5,-73.0 106.0,-73.7 107.5,-73.0 109.0,-74.5 110.5,-73.7 112.0,-75.6 113.5,-74.4 115.0,-73.7 116.5,-73.9 118.0,-72.6 119.5,-74.9 121.0,-75.4 122.5,-74.5 124.0,-73.9 125.5,-74.8 127.0,-75.3 128.5,-74.5 130.0,-72.5 131.5,-75.8 133.0,-73.0 134.5,-75.5 136.0,-72.5 137.5,-74.3 139.0,-72.2 140.5,-74.7 142.0,-73.0 143.5,-73.3 145.0,-73.3 146.5,-73.2 148.0,-75.6 149.5,-75.1 151.0,-72.7 152.5,-74.1 154.0,-72.8 155.5,-74.1 157.0,-73.5 158.5,-72.3 160.0,-72.9 161.5,-74.3 163.0,-72.7 164.5,-71.6 166.0,-72.5 167.5,-72.2 169.0,-71.0 170.5,-73.2 172.0,-72.8 173.5,-71.5 175.0,-73.5 176.5,-71.8 178.0,-73.0 179.5,-72.8 181.0,-73.8 182.5,-71.8 184.0,-74.6 185.5,-73.2 187.0,-70.8 188.5,-75.3 190.0,-77.2 191.5,-81.0 193.0,-81.4 194.5,-81.8 196.0,-88.2 197.5,-90.1 199.0,-89.8 200.5,-87.7 202.0,-86.3 203.5,-91.2 205.0,-89.5 206.5,-89.4 208.0,-86.4 209.5,-88.5 211.0,-88.4 212.5,-87.3 214.0,-86.3 215.5,-87.1 217.0,-87.8 218.5,-89.1 220.0,-86.7 221.5,-87.7 223.0,-85.9 224.5,-88.4 226.0,-88.5 227.5,-88.7 229.0,-87.4 230.5,-87.2 232.0,-87.9 233.5,-87.4 235.0,-87.7 236.5,-88.2 238.0,-87.4 239.5,-86.7 241.0,-88.1 242.5,-84.7 244.0,-86.5 245.5,-86.8 247.0,-87.2 248.5,-86.7 250.0,-85.2 251.5,-86.9 253.0,-85.7 254.5,-85.1 256.0,-87.3 257.5,-85.4 259.0,-83.8 260.5,-84.8 262.0,-84.3 263.5,-83.7 265.0,-79.4 266.5,-78.2 268.0,-77.2 269.5,-74.5 271.0,-70.1 272.5,-87.2 274.0,-77.7 275.5,-70.9 277.0,-74.7 278.5,-74.9 280.0,-76.9 281.5,-75.1 283.0,-75.1 284.5,-75.8 286.0,-75.6 287.5,-74.7 289.0,-75.3 290.5,-74.1 292.0,-74.9 293.5,-76.1 295.0,-74.1 296.5,-75.7 298.0,-74.1 299.5,-72.8 301.0,-76.1 302.5,-74.7 304.0,-74.7 305.5,-75.3 307.0,-74.5 308.5,-74.9 310.0,-73.8 311.5,-73.0 313.0,-74.9 314.5,-73.4 316.0,-74.5 317.5,-75.0 319.0,-73.1 320.5,-75.5 322.0,-75.0 323.5,-74.0 325.0,-75.5 326.5,-75.3 328.0,-75.2 329.5,-76.8 331.0,-73.9 332.5,-75.1 334.0,-72.4 L334,0Z" fill="currentColor" stroke="currentColor"/><path id="s5v7" d="M91,0 L91.0,-75.3 92.5,-75.0 94.0,-75.2 95.5,-76.6 97.0,-74.6 98.5,-74.8 100.0,-77.9 101.5,-75.9 103.0,-74.4 104.5,-73.3 106.0,-74.2 107.5,-73.0 109.0,-73.5 110.5,-74.9 112.0,-74.2 113.5,-74.4 115.0,-71.7 116.5,-74.4 118.0,-72.9 119.5,-75.2 121.0,-74.0 122.5,-73.4 124.0,-74.0 125.5,-74.0 127.0,-73.3 128.5,-75.1 130.0,-71.6 131.5,-74.6 133.0,-73.1 134.5,-75.2 136.0,-75.1 137.5,-74.4 139.0,-73.1 140.5,-74.1 142.0,-72.1 143.5,-73.6 145.0,-73.6 146.5,-72.8 148.0,-73.8 149.5,-72.5 151.0,-72.5 152.5,-72.8 154.0,-73.8 155.5,-73.6 157.0,-73.7 158.5,-72.7 160.0,-71.8 161.5,-72.5 163.0,-73.5 164.5,-74.0 166.0,-74.6 167.5,-72.1 169.0,-71.3 170.5,-74.2 172.0,-73.5 173.5,-73.5 175.0,-70.8 176.5,-73.9 178.0,-71.8 179.5,-72.1 181.0,-74.8 182.5,-72.1 184.0,-73.8 185.5,-73.3 187.0,-71.9 188.5,-75.0 190.0,-76.6 191.5,-80.3 193.0,-80.6 194.5,-83.1 196.0,-84.8 197.5,-89.2 199.0,-91.4 200.5,-91.3 202.0,-86.1 203.5,-88.9 205.0,-87.1 206.5,-87.8 208.0,-87.9 209.5,-88.8 211.0,-88.0 212.5,-90.4 214.0,-87.3 215.5,-86.9 217.0,-88.1 218.5,-87.2 220.0,-89.1 221.5,-88.8 223.0,-87.4 224.5,-87.0 226.0,-85.6 227.5,-88.1 229.0,-86.3 230.5,-86.7 232.0,-85.7 233.5,-87.5 235.0,-87.9 236.5,-88.2 238.0,-84.7 239.5,-87.5 241.0,-85.9 242.5,-86.8 244.0,-84.0 245.5,-89.2 247.0,-86.2 248.5,-86.7 250.0,-84.8 251.5,-86.1 253.0,-86.4 254.5,-87.4 256.0,-85.3 257.5,-86.8 259.0,-85.0 260.5,-85.4 262.0,-83.0 263.5,-82.4 265.0,-78.8 266.5,-79.4 268.0,-77.3 269.5,-76.1 271.0,-70.9 272.5,-88.8 274.0,-78.0 275.5,-71.2 277.0,-76.3 278.5,-75.3 280.0,-77.6 281.5,-75.9 283.0,-75.1 284.5,-76.0 286.0,-75.6 287.5,-74.2 289.0,-74.7 290.5,-74.2 292.0,-73.3 293.5,-73.8 295.0,-75.7 296.5,-76.3 298.0,-75.7 299.5,-74.8 301.0,-74.8 302.5,-74.9 304.0,-73.9 305.5,-76.6 307.0,-74.9 308.5,-74.2 310.0,-74.1 311.5,-74.3 313.0,-74.6 314.5,-74.7 316.0,-76.1 317.5,-75.2 319.0,-75.4 320.5,-74.6 322.0,-73.1 323.5,-74.9 325.0,-74.5 326.5,-74.8 328.0,-74.0 329.5,-75.8 331.0,-72.7 332.5,-75.5 334.0,-72.5 L334,0Z" fill="currentColor" stroke="currentColor"/></defs>
<g stroke-width="0.6"><use href="#s5v0" transform="matrix(1 0 0 1.0000 0 936.30)" color="#e2dff8"/><use href="#s5v5" transform="matrix(1 0 0 0.9977 0 936.30)" color="#f9def9"/><use href="#s5v6" transform="matrix(1 0 0 0.9952 0 936.30)" color="#c4e3f5"/><use href="#s5v4" transform="matrix(1 0 0 0.9902 0 936.30)" color="#fce6e2"/><use href="#s5v6" transform="matrix(1 0 0 0.9865 0 936.30)" color="#f9e6d8"/><use href="#s5v4" transform="matrix(1 0 0 0.9829 0 936.30)" color="#d6faff"/><use href="#s5v5" transform="matrix(1 0 0 0.9796 0 936.30)" color="#fcedd1"/><use href="#s5v1" transform="matrix(1 0 0 0.9760 0 936.30)" color="#e4f9dd"/><use href="#s5v6" transform="matrix(1 0 0 0.9719 0 936.30)" color="#5b4a73"/><use href="#s5v2" transform="matrix(1 0 0 0.9607 0 936.30)" color="#6b3964"/><use href="#s5v7" transform="matrix(1 0 0 0.9539 0 936.30)" color="#2a4a6b"/><use href="#s5v3" transform="matrix(1 0 0 0.9436 0 936.30)" color="#713730"/><use href="#s5v3" transform="matrix(1 0 0 0.9390 0 936.30)" color="#a8602e"/><use href="#s5v7" transform="matrix(1 0 0 0.9327 0 936.30)" color="#4e7076"/><use href="#s5v5" transform="matrix(1 0 0 0.9272 0 936.30)" color="#a58827"/><use href="#s5v4" transform="matrix(1 0 0 0.9176 0 936.30)" color="#5b7e51"/><use href="#s5v5" transform="matrix(1 0 0 0.9130 0 936.30)" color="#9383c1"/><use href="#s5v2" transform="matrix(1 0 0 0.9004 0 936.30)" color="#dc95d5"/><use href="#s5v1" transform="matrix(1 0 0 0.8946 0 936.30)" color="#6ba4d5"/><use href="#s5v1" transform="matrix(1 0 0 0.8886 0 936.30)" color="#ed7b77"/><use href="#s5v7" transform="matrix(1 0 0 0.8836 0 936.30)" color="#f9a368"/><use href="#s5v1" transform="matrix(1 0 0 0.8707 0 936.30)" color="#7ccde0"/><use href="#s5v7" transform="matrix(1 0 0 0.8640 0 936.30)" color="#f3d182"/><use href="#s5v6" transform="matrix(1 0 0 0.8519 0 936.30)" color="#a9cc9b"/><use href="#s5v3" transform="matrix(1 0 0 0.8411 0 936.30)" color="#7867a3"/><use href="#s5v2" transform="matrix(1 0 0 0.8349 0 936.30)" color="#a54c94"/><use href="#s5v7" transform="matrix(1 0 0 0.8274 0 936.30)" color="#2e6aaf"/><use href="#s5v5" transform="matrix(1 0 0 0.8201 0 936.30)" color="#c83d26"/><use href="#s5v5" transform="matrix(1 0 0 0.8072 0 936.30)" color="#e4894c"/><use href="#s5v7" transform="matrix(1 0 0 0.7989 0 936.30)" color="#7bbbd0"/><use href="#s5v7" transform="matrix(1 0 0 0.7932 0 936.30)" color="#e8b832"/><use href="#s5v5" transform="matrix(1 0 0 0.7861 0 936.30)" color="#79ac6b"/><use href="#s5v2" transform="matrix(1 0 0 0.7792 0 936.30)" color="#baafe4"/><use href="#s5v4" transform="matrix(1 0 0 0.7689 0 936.30)" color="#e8b5e6"/><use href="#s5v7" transform="matrix(1 0 0 0.7605 0 936.30)" color="#94c0dd"/><use href="#s5v5" transform="matrix(1 0 0 0.7535 0 936.30)" color="#f3a1a1"/><use href="#s5v6" transform="matrix(1 0 0 0.7427 0 936.30)" color="#f9c49f"/><use href="#s5v2" transform="matrix(1 0 0 0.7365 0 936.30)" color="#85e0ef"/><use href="#s5v4" transform="matrix(1 0 0 0.7285 0 936.30)" color="#f5dba7"/><use href="#s5v4" transform="matrix(1 0 0 0.7184 0 936.30)" color="#c1e0b7"/><use href="#s5v6" transform="matrix(1 0 0 0.7054 0 936.30)" color="#71608b"/><use href="#s5v6" transform="matrix(1 0 0 0.7005 0 936.30)" color="#824079"/><use href="#s5v7" transform="matrix(1 0 0 0.6905 0 936.30)" color="#2e5f8f"/><use href="#s5v4" transform="matrix(1 0 0 0.6814 0 936.30)" color="#9a3327"/><use href="#s5v7" transform="matrix(1 0 0 0.6713 0 936.30)" color="#ca7439"/><use href="#s5v5" transform="matrix(1 0 0 0.6602 0 936.30)" color="#6091c6"/><use href="#s5v3" transform="matrix(1 0 0 0.6473 0 936.30)" color="#d3b026"/><use href="#s5v1" transform="matrix(1 0 0 0.6353 0 936.30)" color="#6a985e"/><use href="#s5v3" transform="matrix(1 0 0 0.6261 0 936.30)" color="#8575ae"/><use href="#s5v2" transform="matrix(1 0 0 0.6179 0 936.30)" color="#c45fb5"/><use href="#s5v4" transform="matrix(1 0 0 0.6088 0 936.30)" color="#408cca"/><use href="#s5v6" transform="matrix(1 0 0 0.5947 0 936.30)" color="#e44e60"/><use href="#s5v7" transform="matrix(1 0 0 0.5832 0 936.30)" color="#fa7b26"/><use href="#s5v6" transform="matrix(1 0 0 0.5712 0 936.30)" color="#70a4f3"/><use href="#s5v4" transform="matrix(1 0 0 0.5569 0 936.30)" color="#e4bf26"/><use href="#s5v2" transform="matrix(1 0 0 0.5499 0 936.30)" color="#6fb366"/><use href="#s5v6" transform="matrix(1 0 0 0.5354 0 936.30)" color="#e2dff8"/><use href="#s5v2" transform="matrix(1 0 0 0.5254 0 936.30)" color="#f9def9"/><use href="#s5v2" transform="matrix(1 0 0 0.5121 0 936.30)" color="#c4e3f5"/><use href="#s5v1" transform="matrix(1 0 0 0.5029 0 936.30)" color="#fce6e2"/><use href="#s5v4" transform="matrix(1 0 0 0.4967 0 936.30)" color="#f9e6d8"/><use href="#s5v2" transform="matrix(1 0 0 0.4803 0 936.30)" color="#d6faff"/><use href="#s5v4" transform="matrix(1 0 0 0.4674 0 936.30)" color="#fcedd1"/><use href="#s5v7" transform="matrix(1 0 0 0.4541 0 936.30)" color="#e4f9dd"/><use href="#s5v6" transform="matrix(1 0 0 0.4394 0 936.30)" color="#5b4a73"/><use href="#s5v3" transform="matrix(1 0 0 0.4335 0 936.30)" color="#6b3964"/><use href="#s5v7" transform="matrix(1 0 0 0.4291 0 936.30)" color="#2a4a6b"/><use href="#s5v3" transform="matrix(1 0 0 0.4227 0 936.30)" color="#713730"/><use href="#s5v7" transform="matrix(1 0 0 0.4173 0 936.30)" color="#a8602e"/><use href="#s5v1" transform="matrix(1 0 0 0.4077 0 936.30)" color="#4e7076"/><use href="#s5v1" transform="matrix(1 0 0 0.4008 0 936.30)" color="#a58827"/><use href="#s5v3" transform="matrix(1 0 0 0.3948 0 936.30)" color="#5b7e51"/><use href="#s5v4" transform="matrix(1 0 0 0.3891 0 936.30)" color="#9383c1"/><use href="#s5v7" transform="matrix(1 0 0 0.3756 0 936.30)" color="#dc95d5"/><use href="#s5v6" transform="matrix(1 0 0 0.3696 0 936.30)" color="#6ba4d5"/><use href="#s5v1" transform="matrix(1 0 0 0.3631 0 936.30)" color="#ed7b77"/><use href="#s5v1" transform="matrix(1 0 0 0.3503 0 936.30)" color="#f9a368"/><use href="#s5v7" transform="matrix(1 0 0 0.3441 0 936.30)" color="#7ccde0"/><use href="#s5v3" transform="matrix(1 0 0 0.3353 0 936.30)" color="#f3d182"/><use href="#s5v7" transform="matrix(1 0 0 0.3218 0 936.30)" color="#a9cc9b"/><use href="#s5v4" transform="matrix(1 0 0 0.3088 0 936.30)" color="#7867a3"/><use href="#s5v4" transform="matrix(1 0 0 0.3006 0 936.30)" color="#a54c94"/><use href="#s5v6" transform="matrix(1 0 0 0.2880 0 936.30)" color="#2e6aaf"/><use href="#s5v5" transform="matrix(1 0 0 0.2805 0 936.30)" color="#c83d26"/><use href="#s5v7" transform="matrix(1 0 0 0.2700 0 936.30)" color="#e4894c"/><use href="#s5v4" transform="matrix(1 0 0 0.2581 0 936.30)" color="#7bbbd0"/><use href="#s5v2" transform="matrix(1 0 0 0.2512 0 936.30)" color="#e8b832"/><use href="#s5v5" transform="matrix(1 0 0 0.2389 0 936.30)" color="#79ac6b"/><use href="#s5v6" transform="matrix(1 0 0 0.2245 0 936.30)" color="#baafe4"/><use href="#s5v2" transform="matrix(1 0 0 0.2114 0 936.30)" color="#e8b5e6"/><use href="#s5v7" transform="matrix(1 0 0 0.1988 0 936.30)" color="#94c0dd"/><use href="#s5v7" transform="matrix(1 0 0 0.1927 0 936.30)" color="#f3a1a1"/><use href="#s5v4" transform="matrix(1 0 0 0.1802 0 936.30)" color="#f9c49f"/><use href="#s5v2" transform="matrix(1 0 0 0.1707 0 936.30)" color="#85e0ef"/><use href="#s5v6" transform="matrix(1 0 0 0.1642 0 936.30)" color="#f5dba7"/><use href="#s5v3" transform="matrix(1 0 0 0.1577 0 936.30)" color="#c1e0b7"/><use href="#s5v7" transform="matrix(1 0 0 0.1486 0 936.30)" color="#71608b"/><use href="#s5v5" transform="matrix(1 0 0 0.1442 0 936.30)" color="#824079"/><use href="#s5v5" transform="matrix(1 0 0 0.1326 0 936.30)" color="#2e5f8f"/><use href="#s5v6" transform="matrix(1 0 0 0.1222 0 936.30)" color="#9a3327"/><use href="#s5v3" transform="matrix(1 0 0 0.1124 0 936.30)" color="#ca7439"/><use href="#s5v3" transform="matrix(1 0 0 0.1045 0 936.30)" color="#6091c6"/><use href="#s5v7" transform="matrix(1 0 0 0.0926 0 936.30)" color="#d3b026"/><use href="#s5v5" transform="matrix(1 0 0 0.0820 0 936.30)" color="#6a985e"/><use href="#s5v6" transform="matrix(1 0 0 0.0733 0 936.30)" color="#8575ae"/><use href="#s5v5" transform="matrix(1 0 0 0.0619 0 936.30)" color="#c45fb5"/><use href="#s5v4" transform="matrix(1 0 0 0.0536 0 936.30)" color="#408cca"/><use href="#s5v5" transform="matrix(1 0 0 0.0427 0 936.30)" color="#e44e60"/><use href="#s5v4" transform="matrix(1 0 0 0.0326 0 936.30)" color="#fa7b26"/><use href="#s5v7" transform="matrix(1 0 0 0.0226 0 936.30)" color="#70a4f3"/><use href="#s5v4" transform="matrix(1 0 0 0.0115 0 936.30)" color="#e4bf26"/><use href="#s5v6" transform="matrix(1 0 0 0.0051 0 936.30)" color="#6fb366"/></g>
<rect x="29" y="969.8" width="14" height="4" rx="2" fill="#56a64b"/>
<text x="51" y="975.8" font-size="12.5" fill="#24292e" text-anchor="start" font-weight="normal" letter-spacing="0.85" >ingester-zone-a-0</text>
<rect x="172" y="969.8" width="14" height="4" rx="2" fill="#e0b400"/>
<text x="194.5" y="975.8" font-size="12.5" fill="#24292e" text-anchor="start" font-weight="normal" letter-spacing="0.85" >ingester-zone-a-1</text>
<rect x="29" y="993.5" width="14" height="4" rx="2" fill="#5794f2"/>
<text x="51" y="999.5" font-size="12.5" fill="#24292e" text-anchor="start" font-weight="normal" letter-spacing="0.7" >ingester-zone-a-10</text>
<rect x="177" y="993.5" width="14" height="4" rx="2" fill="#fa6400"/>
<text x="199.5" y="999.5" font-size="12.5" fill="#24292e" text-anchor="start" font-weight="normal" letter-spacing="0.7" >ingester-zone-a-11</text>
<rect x="435.4" y="935.9" width="243.0" height="1" fill="#e6e7e8"/>
<text x="430.9" y="940.6999999999999" font-size="12" fill="#24292e" text-anchor="end" font-weight="normal" letter-spacing="0.9" >0 B/s</text>
<rect x="435.4" y="885.8" width="243.0" height="1" fill="#e6e7e8"/>
<text x="430.9" y="890.55" font-size="12" fill="#24292e" text-anchor="end" font-weight="normal" letter-spacing="0.9" >500 MB/s</text>
<rect x="435.4" y="835.6" width="243.0" height="1" fill="#e6e7e8"/>
<text x="430.9" y="840.4" font-size="12" fill="#24292e" text-anchor="end" font-weight="normal" letter-spacing="0.9" >1 GB/s</text>
<rect x="458.3" y="831.6" width="1" height="108.8" fill="#e6e7e8"/>
<text x="459.0" y="955.8" font-size="12" fill="#24292e" text-anchor="middle" font-weight="normal" letter-spacing="0.35" >15:30</text>
<rect x="519.1" y="831.6" width="1" height="108.8" fill="#e6e7e8"/>
<text x="519.8333333333334" y="955.8" font-size="12" fill="#24292e" text-anchor="middle" font-weight="normal" letter-spacing="0.35" >15:45</text>
<rect x="580.0" y="831.6" width="1" height="108.8" fill="#e6e7e8"/>
<text x="580.6666666666667" y="955.8" font-size="12" fill="#24292e" text-anchor="middle" font-weight="normal" letter-spacing="0.35" >16:00</text>
<rect x="640.8" y="831.6" width="1" height="108.8" fill="#e6e7e8"/>
<text x="641.5" y="955.8" font-size="12" fill="#24292e" text-anchor="middle" font-weight="normal" letter-spacing="0.35" >16:15</text>
<defs><path id="s6v0" d="M435.4,0 L435.4,-60.8 436.2,-54.9 436.9,-53.1 437.7,-58.1 438.4,-65.9 439.2,-71.4 440.0,-62.4 440.7,-55.5 441.5,-52.7 442.3,-57.6 443.0,-65.5 443.8,-73.2 444.5,-63.5 445.3,-56.1 446.1,-52.4 446.8,-55.9 447.6,-62.1 448.3,-69.7 449.1,-61.8 449.9,-55.6 450.6,-52.2 451.4,-55.4 452.2,-61.6 452.9,-69.7 453.7,-62.7 454.4,-56.1 455.2,-52.2 456.0,-55.0 456.7,-61.3 457.5,-69.6 458.3,-63.9 459.0,-56.8 459.8,-52.2 460.5,-55.1 461.3,-62.9 462.1,-73.4 462.8,-68.1 463.6,-58.7 464.3,-52.5 465.1,-54.1 465.9,-61.1 466.6,-70.5 467.4,-67.6 468.2,-58.7 468.9,-52.7 469.7,-53.7 470.4,-60.9 471.2,-70.9 472.0,-69.8 472.7,-60.0 473.5,-53.0 474.2,-52.7 475.0,-58.2 475.8,-66.0 476.5,-66.8 477.3,-58.7 478.1,-52.9 478.8,-52.2 479.6,-57.6 480.3,-65.4 481.1,-67.9 481.9,-59.5 482.6,-53.3 483.4,-51.9 484.2,-57.9 484.9,-67.0 485.7,-72.1 486.4,-61.8 487.2,-54.1 488.0,-51.3 488.7,-56.2 489.5,-64.0 490.2,-70.2 491.0,-61.0 491.8,-54.0 492.5,-50.9 493.3,-54.6 494.1,-60.7 494.8,-67.1 495.6,-59.5 496.3,-53.7 497.1,-50.6 497.9,-54.7 498.6,-61.9 499.4,-71.2 500.1,-62.2 500.9,-55.0 501.7,-50.9 502.4,-54.3 503.2,-61.0 504.0,-69.7 504.7,-62.9 505.5,-55.9 506.2,-51.6 507.0,-54.1 507.8,-60.0 508.5,-67.8 509.3,-63.2 510.1,-56.6 510.8,-52.4 511.6,-54.7 512.3,-61.5 513.1,-70.7 513.9,-66.9 514.6,-58.8 515.4,-53.3 516.1,-54.4 516.9,-60.0 517.7,-67.6 518.4,-65.9 519.2,-58.9 520.0,-54.0 520.7,-54.8 521.5,-61.5 522.2,-71.0 523.0,-70.6 523.8,-61.2 524.5,-54.5 525.3,-54.2 526.0,-60.5 526.8,-69.6 527.6,-71.2 528.3,-61.7 529.1,-54.8 529.9,-53.7 530.6,-59.9 531.4,-69.0 532.1,-72.7 532.9,-62.6 533.7,-55.2 534.4,-53.1 535.2,-59.0 536.0,-67.9 536.7,-73.6 537.5,-63.3 538.2,-55.6 539.0,-52.6 539.8,-56.7 540.5,-63.2 541.3,-69.0 542.0,-61.1 542.8,-55.1 543.6,-52.2 544.3,-56.0 545.1,-62.5 545.9,-69.9 546.6,-61.8 547.4,-55.4 548.1,-52.0 548.9,-55.5 549.7,-62.0 550.4,-70.3 551.2,-62.6 551.9,-55.9 552.7,-51.9 553.5,-55.8 554.2,-64.1 555.0,-74.9 555.8,-66.8 556.5,-57.7 557.3,-52.0 558.0,-54.3 558.8,-60.4 559.6,-68.6 560.3,-64.0 561.1,-56.7 561.9,-52.0 562.6,-54.3 563.4,-62.1 564.1,-72.6 564.9,-68.7 565.7,-59.0 566.4,-52.4 567.2,-53.0 567.9,-58.6 568.7,-69.7 569.5,-71.8 570.2,-66.7 571.0,-62.4 571.8,-62.7 572.5,-69.1 573.3,-78.2 574.0,-78.5 574.8,-69.3 575.6,-62.7 576.3,-62.2 577.1,-69.0 577.8,-79.0 578.6,-81.5 579.4,-70.9 580.1,-63.2 580.9,-61.6 581.7,-68.1 582.4,-78.0 583.2,-82.7 583.9,-71.7 584.7,-63.6 585.5,-61.1 586.2,-67.9 587.0,-78.7 587.8,-86.4 588.5,-73.9 589.3,-64.4 590.0,-60.5 590.8,-66.4 591.6,-76.2 592.3,-85.6 593.1,-73.7 593.8,-64.6 594.6,-60.0 595.4,-64.1 596.1,-71.1 596.9,-80.0 597.7,-70.8 598.4,-63.8 599.2,-59.8 599.9,-64.8 600.7,-73.9 601.5,-85.2 602.2,-73.8 603.0,-63.2 603.7,-56.6 604.5,-58.6 605.3,-64.0 606.0,-71.2 606.8,-64.9 607.6,-57.3 608.3,-52.3 609.1,-54.7 609.8,-61.9 610.6,-71.6 611.4,-65.8 612.1,-56.1 612.9,-49.6 613.7,-50.6 614.4,-56.5 615.2,-66.5 615.9,-64.8 616.7,-57.2 617.5,-52.0 618.2,-53.8 619.0,-61.6 619.7,-72.3 620.5,-72.0 621.3,-62.7 622.0,-56.2 622.8,-56.3 623.6,-62.6 624.3,-71.4 625.1,-71.8 625.8,-62.5 626.6,-55.7 627.4,-54.2 628.1,-58.8 628.9,-66.2 629.6,-68.9 630.4,-60.4 631.2,-54.2 631.9,-52.7 632.7,-57.7 633.5,-65.4 634.2,-69.8 635.0,-61.2 635.7,-54.7 636.5,-52.5 637.3,-57.4 638.0,-65.2 638.8,-71.5 639.6,-62.3 640.3,-55.4 641.1,-52.3 641.8,-56.8 642.6,-64.2 643.4,-72.1 644.1,-62.9 644.9,-55.9 645.6,-52.2 646.4,-55.9 647.2,-62.4 647.9,-70.9 648.7,-62.8 649.5,-56.2 650.2,-52.3 651.0,-55.6 651.7,-62.1 652.5,-70.7 653.3,-63.9 654.0,-56.9 654.8,-52.6 655.5,-55.7 656.3,-63.2 657.1,-73.2 657.8,-67.1 658.6,-58.5 659.4,-52.9 660.1,-55.3 660.9,-62.7 661.6,-72.8 662.4,-68.5 663.2,-59.4 663.9,-53.4 664.7,-54.3 665.5,-59.8 666.2,-67.4 667.0,-65.6 667.7,-58.5 668.5,-53.5 669.3,-54.2 670.0,-60.5 670.8,-69.3 671.5,-69.1 672.3,-60.4 673.1,-54.2 673.8,-53.9 674.6,-60.0 675.4,-68.7 676.1,-70.4 676.9,-61.3 677.6,-54.7 678.4,-53.5 L678.4,0Z" fill="currentColor" stroke="currentColor"/><path id="s6v1" d="M435.4,0 L435.4,-60.5 436.2,-54.2 436.9,-51.8 437.7,-57.1 438.4,-64.0 439.2,-69.7 440.0,-61.4 440.7,-55.3 441.5,-51.8 442.3,-56.8 443.0,-63.8 443.8,-72.0 444.5,-62.2 445.3,-54.7 446.1,-51.6 446.8,-54.5 447.6,-60.4 448.3,-69.4 449.1,-60.1 449.9,-54.2 450.6,-50.8 451.4,-54.9 452.2,-61.2 452.9,-69.4 453.7,-62.0 454.4,-54.7 455.2,-51.6 456.0,-54.9 456.7,-60.7 457.5,-69.5 458.3,-62.7 459.0,-55.4 459.8,-50.8 460.5,-54.9 461.3,-62.2 462.1,-73.1 462.8,-66.3 463.6,-57.2 464.3,-51.7 465.1,-52.6 465.9,-60.1 466.6,-68.9 467.4,-66.6 468.2,-58.1 468.9,-51.1 469.7,-52.3 470.4,-59.8 471.2,-69.0 472.0,-68.4 472.7,-58.5 473.5,-52.9 474.2,-52.5 475.0,-58.0 475.8,-64.8 476.5,-65.4 477.3,-58.5 478.1,-52.1 478.8,-52.0 479.6,-56.4 480.3,-63.9 481.1,-67.8 481.9,-57.7 482.6,-52.2 483.4,-51.7 484.2,-57.3 484.9,-66.7 485.7,-70.5 486.4,-60.1 487.2,-53.8 488.0,-51.0 488.7,-55.2 489.5,-62.3 490.2,-68.6 491.0,-60.2 491.8,-53.9 492.5,-50.0 493.3,-53.8 494.1,-59.2 494.8,-65.9 495.6,-58.2 496.3,-52.1 497.1,-49.7 497.9,-53.2 498.6,-61.4 499.4,-71.1 500.1,-60.6 500.9,-55.0 501.7,-49.4 502.4,-53.5 503.2,-60.9 504.0,-69.2 504.7,-61.6 505.5,-55.3 506.2,-50.7 507.0,-53.9 507.8,-58.5 508.5,-67.1 509.3,-61.6 510.1,-56.3 510.8,-51.3 511.6,-53.9 512.3,-60.8 513.1,-70.7 513.9,-65.8 514.6,-57.3 515.4,-53.2 516.1,-53.7 516.9,-60.0 517.7,-65.6 518.4,-64.0 519.2,-57.7 520.0,-53.2 520.7,-54.7 521.5,-61.3 522.2,-69.5 523.0,-68.9 523.8,-59.4 524.5,-53.1 525.3,-53.5 526.0,-60.0 526.8,-68.4 527.6,-70.4 528.3,-60.7 529.1,-53.4 529.9,-52.9 530.6,-58.1 531.4,-67.5 532.1,-72.6 532.9,-61.2 533.7,-54.1 534.4,-52.1 535.2,-58.9 536.0,-66.1 536.7,-72.5 537.5,-62.3 538.2,-55.3 539.0,-52.5 539.8,-56.6 540.5,-62.8 541.3,-68.4 542.0,-60.8 542.8,-55.0 543.6,-51.1 544.3,-54.9 545.1,-60.8 545.9,-69.5 546.6,-60.4 547.4,-54.5 548.1,-51.8 548.9,-54.0 549.7,-61.3 550.4,-69.9 551.2,-62.3 551.9,-54.4 552.7,-51.6 553.5,-55.2 554.2,-63.0 555.0,-74.1 555.8,-65.5 556.5,-57.6 557.3,-51.4 558.0,-53.3 558.8,-59.3 559.6,-67.3 560.3,-63.5 561.1,-55.7 561.9,-50.5 562.6,-53.5 563.4,-60.9 564.1,-70.8 564.9,-68.2 565.7,-58.5 566.4,-50.9 567.2,-52.6 567.9,-57.9 568.7,-68.9 569.5,-69.7 570.2,-65.6 571.0,-60.8 571.8,-62.4 572.5,-68.5 573.3,-76.7 574.0,-77.8 574.8,-67.9 575.6,-61.7 576.3,-62.1 577.1,-68.8 577.8,-78.0 578.6,-80.2 579.4,-70.5 580.1,-62.7 580.9,-61.6 581.7,-67.6 582.4,-77.2 583.2,-81.7 583.9,-70.4 584.7,-62.0 585.5,-59.7 586.2,-66.4 587.0,-78.0 587.8,-85.1 588.5,-72.3 589.3,-62.7 590.0,-60.0 590.8,-66.4 591.6,-76.0 592.3,-84.3 593.1,-71.8 593.8,-64.3 594.6,-58.6 595.4,-62.8 596.1,-69.3 596.9,-77.8 597.7,-70.6 598.4,-62.2 599.2,-59.5 599.9,-64.5 600.7,-73.0 601.5,-84.0 602.2,-73.7 603.0,-62.7 603.7,-56.3 604.5,-58.3 605.3,-63.8 606.0,-71.1 606.8,-64.4 607.6,-56.8 608.3,-51.7 609.1,-53.5 609.8,-60.7 610.6,-70.5 611.4,-65.2 612.1,-55.0 612.9,-49.3 613.7,-50.3 614.4,-56.3 615.2,-65.1 615.9,-64.5 616.7,-56.8 617.5,-51.5 618.2,-52.9 619.0,-60.4 619.7,-71.0 620.5,-70.8 621.3,-62.3 622.0,-54.6 622.8,-55.1 623.6,-61.8 624.3,-70.6 625.1,-70.5 625.8,-62.3 626.6,-54.6 627.4,-52.7 628.1,-58.2 628.9,-65.2 629.6,-68.3 630.4,-58.7 631.2,-53.6 631.9,-52.1 632.7,-56.5 633.5,-64.7 634.2,-67.9 635.0,-60.4 635.7,-53.7 636.5,-52.0 637.3,-56.4 638.0,-64.3 638.8,-71.3 639.6,-60.7 640.3,-55.1 641.1,-51.4 641.8,-55.6 642.6,-63.3 643.4,-71.4 644.1,-62.1 644.9,-54.2 645.6,-52.2 646.4,-54.4 647.2,-61.3 647.9,-69.9 648.7,-61.6 649.5,-55.1 650.2,-51.0 651.0,-53.9 651.7,-61.2 652.5,-69.9 653.3,-63.2 654.0,-55.3 654.8,-51.8 655.5,-55.6 656.3,-62.1 657.1,-72.9 657.8,-66.4 658.6,-57.3 659.4,-52.0 660.1,-54.4 660.9,-61.2 661.6,-71.4 662.4,-66.5 663.2,-58.0 663.9,-52.9 664.7,-53.0 665.5,-59.1 666.2,-65.4 667.0,-64.4 667.7,-57.7 668.5,-53.2 669.3,-52.9 670.0,-59.9 670.8,-69.3 671.5,-67.5 672.3,-60.4 673.1,-54.1 673.8,-53.9 674.6,-58.8 675.4,-67.5 676.1,-69.3 676.9,-59.6 677.6,-54.0 678.4,-53.2 L678.4,0Z" fill="currentColor" stroke="currentColor"/><path id="s6v2" d="M435.4,0 L435.4,-59.0 436.2,-54.7 436.9,-53.0 437.7,-57.7 438.4,-64.0 439.2,-70.5 440.0,-61.7 440.7,-54.9 441.5,-52.1 442.3,-56.3 443.0,-64.3 443.8,-72.6 444.5,-63.1 445.3,-54.7 446.1,-51.5 446.8,-55.1 447.6,-61.7 448.3,-67.7 449.1,-60.8 449.9,-54.1 450.6,-51.1 451.4,-54.4 452.2,-61.6 452.9,-67.8 453.7,-61.1 454.4,-56.0 455.2,-52.0 456.0,-53.8 456.7,-60.1 457.5,-69.2 458.3,-62.0 459.0,-56.6 459.8,-51.3 460.5,-54.3 461.3,-62.3 462.1,-71.9 462.8,-67.2 463.6,-57.4 464.3,-51.3 465.1,-54.1 465.9,-60.5 466.6,-69.4 467.4,-67.0 468.2,-57.7 468.9,-52.6 469.7,-53.5 470.4,-59.9 471.2,-70.4 472.0,-69.4 472.7,-59.2 473.5,-52.1 474.2,-51.7 475.0,-57.1 475.8,-65.0 476.5,-65.9 477.3,-57.2 478.1,-51.6 478.8,-50.8 479.6,-55.9 480.3,-64.1 481.1,-67.5 481.9,-58.2 482.6,-52.8 483.4,-51.4 484.2,-57.2 484.9,-67.0 485.7,-71.1 486.4,-61.4 487.2,-53.7 488.0,-50.7 488.7,-55.0 489.5,-62.7 490.2,-69.5 491.0,-59.7 491.8,-53.4 492.5,-50.4 493.3,-53.9 494.1,-60.1 494.8,-66.8 495.6,-57.8 496.3,-52.7 497.1,-49.7 497.9,-53.7 498.6,-61.0 499.4,-69.8 500.1,-62.2 500.9,-54.9 501.7,-50.1 502.4,-53.5 503.2,-61.0 504.0,-69.3 504.7,-62.4 505.5,-54.3 506.2,-50.3 507.0,-54.0 507.8,-59.3 508.5,-67.1 509.3,-62.9 510.1,-56.1 510.8,-50.8 511.6,-53.2 512.3,-61.0 513.1,-69.1 513.9,-66.7 514.6,-57.6 515.4,-53.2 516.1,-53.4 516.9,-58.9 517.7,-65.6 518.4,-64.8 519.2,-57.3 520.0,-53.6 520.7,-53.8 521.5,-61.2 522.2,-70.8 523.0,-68.5 523.8,-61.2 524.5,-54.0 525.3,-53.7 526.0,-60.1 526.8,-67.8 527.6,-69.5 528.3,-61.0 529.1,-53.9 529.9,-52.3 530.6,-59.7 531.4,-67.7 532.1,-70.8 532.9,-61.5 533.7,-54.4 534.4,-52.7 535.2,-58.7 536.0,-67.5 536.7,-72.8 537.5,-62.8 538.2,-54.3 539.0,-52.3 539.8,-56.4 540.5,-61.7 541.3,-68.1 542.0,-60.9 542.8,-53.7 543.6,-52.2 544.3,-55.4 545.1,-61.7 545.9,-68.9 546.6,-61.3 547.4,-53.9 548.1,-51.1 548.9,-55.0 549.7,-60.8 550.4,-69.5 551.2,-61.6 551.9,-54.9 552.7,-51.5 553.5,-54.4 554.2,-63.9 555.0,-72.8 555.8,-66.0 556.5,-56.8 557.3,-51.9 558.0,-53.4 558.8,-59.8 559.6,-67.3 560.3,-62.6 561.1,-56.6 561.9,-51.9 562.6,-52.9 563.4,-61.7 564.1,-71.2 564.9,-67.2 565.7,-57.6 566.4,-52.4 567.2,-52.0 567.9,-57.1 568.7,-69.6 569.5,-71.8 570.2,-65.0 571.0,-61.1 571.8,-61.4 572.5,-67.5 573.3,-76.8 574.0,-78.1 574.8,-68.9 575.6,-62.6 576.3,-61.0 577.1,-67.7 577.8,-76.7 578.6,-80.9 579.4,-70.6 580.1,-62.5 580.9,-59.8 581.7,-67.6 582.4,-75.9 583.2,-81.1 583.9,-70.1 584.7,-63.4 585.5,-59.6 586.2,-67.1 587.0,-76.9 587.8,-86.3 588.5,-73.2 589.3,-63.3 590.0,-60.0 590.8,-65.4 591.6,-75.9 592.3,-85.0 593.1,-72.3 593.8,-64.0 594.6,-58.2 595.4,-63.4 596.1,-70.5 596.9,-79.0 597.7,-69.5 598.4,-63.2 599.2,-58.0 599.9,-64.4 600.7,-72.6 601.5,-83.0 602.2,-73.2 603.0,-62.8 603.7,-55.7 604.5,-57.1 605.3,-62.4 606.0,-69.4 606.8,-63.5 607.6,-57.2 608.3,-50.9 609.1,-54.4 609.8,-61.9 610.6,-70.5 611.4,-65.8 612.1,-56.0 612.9,-49.3 613.7,-49.1 614.4,-56.1 615.2,-64.8 615.9,-63.0 616.7,-56.8 617.5,-51.9 618.2,-53.4 619.0,-60.4 619.7,-70.8 620.5,-71.3 621.3,-61.2 622.0,-56.0 622.8,-56.3 623.6,-61.9 624.3,-70.0 625.1,-70.0 625.8,-60.7 626.6,-54.2 627.4,-52.6 628.1,-57.7 628.9,-65.4 629.6,-68.8 630.4,-59.4 631.2,-52.7 631.9,-51.4 632.7,-56.9 633.5,-64.2 634.2,-68.2 635.0,-59.3 635.7,-53.5 636.5,-51.5 637.3,-55.8 638.0,-63.3 638.8,-71.5 639.6,-60.5 640.3,-54.9 641.1,-52.3 641.8,-56.3 642.6,-63.9 643.4,-72.1 644.1,-61.4 644.9,-55.3 645.6,-52.0 646.4,-54.7 647.2,-62.1 647.9,-70.2 648.7,-62.0 649.5,-55.6 650.2,-51.2 651.0,-55.2 651.7,-60.6 652.5,-69.7 653.3,-63.1 654.0,-56.3 654.8,-51.1 655.5,-55.3 656.3,-62.4 657.1,-72.6 657.8,-66.8 658.6,-58.4 659.4,-51.9 660.1,-53.9 660.9,-62.1 661.6,-71.8 662.4,-66.8 663.2,-59.3 663.9,-52.9 664.7,-53.1 665.5,-59.3 666.2,-66.9 667.0,-64.6 667.7,-58.0 668.5,-53.3 669.3,-54.2 670.0,-58.7 670.8,-67.6 671.5,-68.6 672.3,-60.2 673.1,-53.3 673.8,-53.0 674.6,-58.3 675.4,-67.9 676.1,-70.1 676.9,-59.7 677.6,-54.5 678.4,-53.1 L678.4,0Z" fill="currentColor" stroke="currentColor"/><path id="s6v3" d="M435.4,0 L435.4,-60.4 436.2,-53.5 436.9,-51.6 437.7,-57.4 438.4,-64.6 439.2,-69.9 440.0,-61.5 440.7,-54.2 441.5,-52.2 442.3,-56.3 443.0,-65.2 443.8,-72.9 444.5,-63.2 445.3,-55.8 446.1,-50.8 446.8,-55.5 447.6,-60.9 448.3,-69.7 449.1,-60.2 449.9,-54.4 450.6,-51.1 451.4,-53.8 452.2,-61.6 452.9,-68.1 453.7,-62.5 454.4,-54.5 455.2,-52.1 456.0,-54.4 456.7,-60.3 457.5,-68.6 458.3,-62.4 459.0,-56.6 459.8,-50.8 460.5,-55.0 461.3,-61.1 462.1,-71.7 462.8,-68.1 463.6,-58.6 464.3,-52.3 465.1,-54.0 465.9,-60.8 466.6,-70.1 467.4,-66.5 468.2,-57.9 468.9,-52.3 469.7,-52.1 470.4,-59.8 471.2,-69.8 472.0,-68.1 472.7,-58.8 473.5,-51.7 474.2,-51.4 475.0,-57.6 475.8,-64.3 476.5,-65.6 477.3,-58.7 478.1,-52.4 478.8,-51.1 479.6,-56.4 480.3,-64.0 481.1,-66.4 481.9,-58.2 482.6,-51.8 483.4,-51.5 484.2,-56.3 484.9,-65.2 485.7,-70.3 486.4,-61.4 487.2,-53.1 488.0,-50.0 488.7,-54.8 489.5,-63.6 490.2,-70.1 491.0,-60.0 491.8,-53.9 492.5,-50.1 493.3,-54.4 494.1,-60.4 494.8,-65.3 495.6,-58.4 496.3,-53.6 497.1,-49.8 497.9,-54.2 498.6,-61.0 499.4,-69.5 500.1,-60.6 500.9,-55.0 501.7,-50.9 502.4,-52.8 503.2,-60.7 504.0,-68.0 504.7,-61.7 505.5,-54.9 506.2,-50.6 507.0,-53.4 507.8,-58.5 508.5,-65.9 509.3,-62.6 510.1,-56.2 510.8,-51.7 511.6,-54.1 512.3,-60.5 513.1,-68.7 513.9,-66.3 514.6,-57.1 515.4,-52.9 516.1,-53.8 516.9,-58.6 517.7,-66.2 518.4,-64.2 519.2,-57.8 520.0,-53.5 520.7,-53.5 521.5,-61.1 522.2,-70.9 523.0,-69.9 523.8,-59.4 524.5,-54.5 525.3,-52.8 526.0,-59.2 526.8,-68.2 527.6,-69.9 528.3,-61.3 529.1,-54.0 529.9,-52.1 530.6,-58.4 531.4,-68.1 532.1,-71.7 532.9,-61.8 533.7,-54.6 534.4,-52.5 535.2,-58.6 536.0,-66.0 536.7,-73.5 537.5,-63.0 538.2,-54.6 539.0,-51.2 539.8,-55.5 540.5,-63.0 541.3,-68.0 542.0,-59.3 542.8,-53.7 543.6,-51.9 544.3,-54.4 545.1,-60.6 545.9,-69.6 546.6,-60.2 547.4,-55.1 548.1,-51.9 548.9,-54.8 549.7,-60.1 550.4,-68.8 551.2,-62.3 551.9,-54.5 552.7,-51.4 553.5,-54.5 554.2,-63.0 555.0,-73.4 555.8,-65.8 556.5,-56.6 557.3,-51.1 558.0,-52.7 558.8,-59.5 559.6,-66.8 560.3,-63.0 561.1,-56.6 561.9,-51.1 562.6,-52.9 563.4,-61.3 564.1,-71.7 564.9,-67.4 565.7,-58.5 566.4,-52.1 567.2,-52.2 567.9,-58.4 568.7,-68.7 569.5,-70.9 570.2,-65.8 571.0,-61.6 571.8,-61.6 572.5,-67.5 573.3,-76.2 574.0,-77.5 574.8,-67.9 575.6,-62.1 576.3,-61.8 577.1,-68.1 577.8,-78.3 578.6,-80.8 579.4,-69.5 580.1,-62.2 580.9,-61.3 581.7,-66.9 582.4,-75.6 583.2,-82.1 583.9,-70.2 584.7,-62.9 585.5,-59.7 586.2,-66.1 587.0,-76.4 587.8,-84.2 588.5,-73.3 589.3,-62.8 590.0,-60.3 590.8,-64.8 591.6,-74.6 592.3,-83.1 593.1,-72.9 593.8,-62.9 594.6,-59.1 595.4,-63.9 596.1,-69.2 596.9,-79.6 597.7,-69.5 598.4,-62.4 599.2,-58.6 599.9,-63.5 600.7,-71.8 601.5,-83.5 602.2,-73.7 603.0,-62.1 603.7,-55.0 604.5,-57.2 605.3,-63.1 606.0,-70.0 606.8,-63.4 607.6,-56.0 608.3,-52.3 609.1,-54.2 609.8,-61.2 610.6,-71.5 611.4,-64.5 612.1,-55.1 612.9,-49.2 613.7,-49.7 614.4,-54.9 615.2,-65.5 615.9,-64.4 616.7,-56.4 617.5,-51.0 618.2,-53.5 619.0,-60.4 619.7,-71.0 620.5,-72.0 621.3,-61.7 622.0,-56.1 622.8,-55.4 623.6,-62.2 624.3,-71.2 625.1,-70.9 625.8,-61.3 626.6,-55.7 627.4,-52.9 628.1,-58.1 628.9,-65.1 629.6,-67.7 630.4,-59.5 631.2,-54.0 631.9,-52.6 632.7,-57.2 633.5,-63.5 634.2,-68.5 635.0,-61.0 635.7,-53.7 636.5,-51.7 637.3,-57.0 638.0,-63.8 638.8,-69.5 639.6,-60.5 640.3,-54.5 641.1,-50.9 641.8,-55.2 642.6,-63.6 643.4,-71.0 644.1,-62.6 644.9,-54.6 645.6,-50.8 646.4,-54.7 647.2,-61.8 647.9,-69.3 648.7,-62.0 649.5,-55.8 650.2,-51.6 651.0,-55.2 651.7,-60.3 652.5,-70.6 653.3,-62.3 654.0,-56.2 654.8,-52.5 655.5,-54.3 656.3,-62.5 657.1,-72.9 657.8,-65.8 658.6,-57.6 659.4,-52.2 660.1,-54.7 660.9,-62.4 661.6,-70.8 662.4,-68.3 663.2,-59.3 663.9,-52.6 664.7,-53.2 665.5,-59.1 666.2,-65.5 667.0,-63.9 667.7,-57.5 668.5,-52.1 669.3,-52.7 670.0,-60.2 670.8,-68.8 671.5,-67.2 672.3,-59.8 673.1,-52.7 673.8,-52.7 674.6,-58.8 675.4,-67.3 676.1,-68.9 676.9,-59.7 677.6,-53.7 678.4,-53.3 L678.4,0Z" fill="currentColor" stroke="currentColor"/><path id="s6v4" d="M435.4,0 L435.4,-60.7 436.2,-54.7 436.9,-51.9 437.7,-57.8 438.4,-65.9 439.2,-70.8 440.0,-61.9 440.7,-54.2 441.5,-51.5 442.3,-57.6 443.0,-64.8 443.8,-71.9 444.5,-62.9 445.3,-54.5 446.1,-51.1 446.8,-55.8 447.6,-61.5 448.3,-67.8 449.1,-60.0 449.9,-55.4 450.6,-51.8 451.4,-54.2 452.2,-60.9 452.9,-69.3 453.7,-61.4 454.4,-55.0 455.2,-52.1 456.0,-54.2 456.7,-60.3 457.5,-69.0 458.3,-63.4 459.0,-55.2 459.8,-52.1 460.5,-55.0 461.3,-62.0 462.1,-73.3 462.8,-67.8 463.6,-58.0 464.3,-51.7 465.1,-52.7 465.9,-60.7 466.6,-70.1 467.4,-66.5 468.2,-58.0 468.9,-52.5 469.7,-53.5 470.4,-59.6 471.2,-69.4 472.0,-69.4 472.7,-59.6 473.5,-52.9 474.2,-52.1 475.0,-56.6 475.8,-64.6 476.5,-65.2 477.3,-57.4 478.1,-52.2 478.8,-52.2 479.6,-57.4 480.3,-65.3 481.1,-66.0 481.9,-58.7 482.6,-52.0 483.4,-51.4 484.2,-57.6 484.9,-65.8 485.7,-71.7 486.4,-60.2 487.2,-53.3 488.0,-50.8 488.7,-55.7 489.5,-62.7 490.2,-69.5 491.0,-60.4 491.8,-52.7 492.5,-50.0 493.3,-54.4 494.1,-59.2 494.8,-66.2 495.6,-59.1 496.3,-53.3 497.1,-49.5 497.9,-54.4 498.6,-60.7 499.4,-70.8 500.1,-61.5 500.9,-54.1 501.7,-50.6 502.4,-54.2 503.2,-60.2 504.0,-68.4 504.7,-62.8 505.5,-55.2 506.2,-51.1 507.0,-52.9 507.8,-59.9 508.5,-67.6 509.3,-63.1 510.1,-55.2 510.8,-51.4 511.6,-53.4 512.3,-60.3 513.1,-68.7 513.9,-66.3 514.6,-58.8 515.4,-52.3 516.1,-54.1 516.9,-59.7 517.7,-67.4 518.4,-64.6 519.2,-57.4 520.0,-53.7 520.7,-54.3 521.5,-59.8 522.2,-69.4 523.0,-68.5 523.8,-60.7 524.5,-53.5 525.3,-54.2 526.0,-59.8 526.8,-68.6 527.6,-70.7 528.3,-61.0 529.1,-54.8 529.9,-52.3 530.6,-59.6 531.4,-68.1 532.1,-72.3 532.9,-61.7 533.7,-54.6 534.4,-51.8 535.2,-57.7 536.0,-66.1 536.7,-72.3 537.5,-63.3 538.2,-54.3 539.0,-52.2 539.8,-55.3 540.5,-61.9 541.3,-68.5 542.0,-59.4 542.8,-53.9 543.6,-51.5 544.3,-55.6 545.1,-62.1 545.9,-69.8 546.6,-61.7 547.4,-55.0 548.1,-51.6 548.9,-54.0 549.7,-61.4 550.4,-68.3 551.2,-61.7 551.9,-55.6 552.7,-51.8 553.5,-54.1 554.2,-63.8 555.0,-73.6 555.8,-65.5 556.5,-57.1 557.3,-51.8 558.0,-53.4 558.8,-59.5 559.6,-67.6 560.3,-63.7 561.1,-56.5 561.9,-51.4 562.6,-53.9 563.4,-60.8 564.1,-71.4 564.9,-67.9 565.7,-58.1 566.4,-51.3 567.2,-51.7 567.9,-56.9 568.7,-68.6 569.5,-70.9 570.2,-66.1 571.0,-61.5 571.8,-62.1 572.5,-67.1 573.3,-76.7 574.0,-77.4 574.8,-67.8 575.6,-61.2 576.3,-61.7 577.1,-67.6 577.8,-77.2 578.6,-80.7 579.4,-69.7 580.1,-61.9 580.9,-61.5 581.7,-66.6 582.4,-77.1 583.2,-81.8 583.9,-70.0 584.7,-63.2 585.5,-61.0 586.2,-66.9 587.0,-78.1 587.8,-84.0 588.5,-73.3 589.3,-62.8 590.0,-59.8 590.8,-64.8 591.6,-74.4 592.3,-83.6 593.1,-72.1 593.8,-62.8 594.6,-58.4 595.4,-62.9 596.1,-69.2 596.9,-79.4 597.7,-70.6 598.4,-62.2 599.2,-58.8 599.9,-63.5 600.7,-73.8 601.5,-84.7 602.2,-72.1 603.0,-62.9 603.7,-55.2 604.5,-56.9 605.3,-62.5 606.0,-70.9 606.8,-63.5 607.6,-55.7 608.3,-52.3 609.1,-54.0 609.8,-61.7 610.6,-69.6 611.4,-65.5 612.1,-54.7 612.9,-48.4 613.7,-49.4 614.4,-54.9 615.2,-64.8 615.9,-64.6 616.7,-55.8 617.5,-51.5 618.2,-52.2 619.0,-61.0 619.7,-71.7 620.5,-70.9 621.3,-61.9 622.0,-55.1 622.8,-55.6 623.6,-61.8 624.3,-70.2 625.1,-69.7 625.8,-61.7 626.6,-54.4 627.4,-53.0 628.1,-58.2 628.9,-65.9 629.6,-67.7 630.4,-59.5 631.2,-53.7 631.9,-51.9 632.7,-57.0 633.5,-64.6 634.2,-68.7 635.0,-59.5 635.7,-53.6 636.5,-51.1 637.3,-56.1 638.0,-64.3 638.8,-71.0 639.6,-61.0 640.3,-54.3 641.1,-52.2 641.8,-56.6 642.6,-62.3 643.4,-71.5 644.1,-62.9 644.9,-54.5 645.6,-50.7 646.4,-54.8 647.2,-61.0 647.9,-70.2 648.7,-62.1 649.5,-55.2 650.2,-52.2 651.0,-55.1 651.7,-60.9 652.5,-69.9 653.3,-62.7 654.0,-55.2 654.8,-51.0 655.5,-54.1 656.3,-62.5 657.1,-71.9 657.8,-66.3 658.6,-58.2 659.4,-52.9 660.1,-54.7 660.9,-61.3 661.6,-72.1 662.4,-67.6 663.2,-59.2 663.9,-53.0 664.7,-52.8 665.5,-58.3 666.2,-65.4 667.0,-64.6 667.7,-58.1 668.5,-52.6 669.3,-53.9 670.0,-60.0 670.8,-68.7 671.5,-67.6 672.3,-59.1 673.1,-53.8 673.8,-52.5 674.6,-58.5 675.4,-68.4 676.1,-70.2 676.9,-60.3 677.6,-54.4 678.4,-51.9 L678.4,0Z" fill="currentColor" stroke="currentColor"/><path id="s6l0" d="M435.4,0 L435.4,-9.0 436.2,-9.0 436.9,-9.0 437.7,-9.0 438.4,-9.0 439.2,-9.0 440.0,-9.0 440.7,-9.0 441.5,-9.0 442.3,-9.0 443.0,-9.0 443.8,-9.0 444.5,-9.0 445.3,-9.0 446.1,-9.0 446.8,-9.0 447.6,-9.0 448.3,-9.0 449.1,-9.0 449.9,-9.0 450.6,-9.0 451.4,-9.0 452.2,-9.0 452.9,-9.0 453.7,-9.0 454.4,-9.0 455.2,-9.0 456.0,-9.0 456.7,-9.0 457.5,-9.0 458.3,-9.0 459.0,-9.0 459.8,-9.0 460.5,-9.0 461.3,-9.0 462.1,-9.0 462.8,-9.0 463.6,-9.0 464.3,-9.0 465.1,-9.0 465.9,-9.0 466.6,-9.0 467.4,-9.0 468.2,-9.0 468.9,-9.0 469.7,-9.0 470.4,-9.0 471.2,-9.0 472.0,-9.0 472.7,-9.0 473.5,-9.0 474.2,-9.0 475.0,-9.0 475.8,-9.0 476.5,-9.0 477.3,-9.0 478.1,-9.0 478.8,-9.0 479.6,-9.0 480.3,-9.0 481.1,-9.0 481.9,-9.0 482.6,-9.0 483.4,-9.0 484.2,-9.0 484.9,-9.0 485.7,-9.0 486.4,-9.0 487.2,-9.0 488.0,-9.0 488.7,-9.0 489.5,-9.0 490.2,-9.0 491.0,-9.0 491.8,-9.0 492.5,-9.0 493.3,-9.0 494.1,-9.0 494.8,-9.0 495.6,-9.0 496.3,-9.0 497.1,-9.0 497.9,-9.0 498.6,-9.0 499.4,-9.0 500.1,-9.0 500.9,-9.0 501.7,-9.0 502.4,-9.0 503.2,-9.0 504.0,-9.0 504.7,-9.0 505.5,-9.0 506.2,-9.0 507.0,-9.0 507.8,-9.0 508.5,-9.0 509.3,-9.0 510.1,-9.0 510.8,-9.0 511.6,-9.0 512.3,-9.0 513.1,-9.0 513.9,-9.0 514.6,-9.0 515.4,-9.0 516.1,-9.0 516.9,-9.0 517.7,-9.0 518.4,-9.0 519.2,-9.0 520.0,-9.0 520.7,-9.0 521.5,-9.0 522.2,-9.0 523.0,-9.0 523.8,-9.0 524.5,-9.0 525.3,-9.0 526.0,-9.0 526.8,-9.0 527.6,-9.0 528.3,-9.0 529.1,-9.0 529.9,-9.0 530.6,-9.0 531.4,-9.0 532.1,-9.0 532.9,-9.0 533.7,-9.0 534.4,-9.0 535.2,-9.0 536.0,-9.0 536.7,-9.0 537.5,-9.0 538.2,-9.0 539.0,-9.0 539.8,-9.0 540.5,-9.0 541.3,-9.0 542.0,-9.0 542.8,-9.0 543.6,-9.0 544.3,-9.0 545.1,-9.0 545.9,-9.0 546.6,-9.0 547.4,-9.0 548.1,-9.0 548.9,-9.0 549.7,-9.0 550.4,-9.0 551.2,-9.0 551.9,-9.0 552.7,-9.0 553.5,-9.0 554.2,-9.0 555.0,-9.0 555.8,-9.0 556.5,-9.0 557.3,-9.0 558.0,-9.0 558.8,-9.0 559.6,-9.0 560.3,-9.0 561.1,-9.0 561.9,-9.0 562.6,-9.0 563.4,-9.0 564.1,-9.0 564.9,-9.0 565.7,-9.0 566.4,-9.0 567.2,-9.0 567.9,-9.0 568.7,-9.0 569.5,-9.0 570.2,-9.0 571.0,-9.0 571.8,-9.0 572.5,-9.0 573.3,-9.0 574.0,-9.0 574.8,-9.0 575.6,-9.0 576.3,-9.0 577.1,-9.0 577.8,-9.0 578.6,-9.0 579.4,-9.0 580.1,-9.0 580.9,-9.0 581.7,-9.0 582.4,-9.0 583.2,-9.0 583.9,-9.0 584.7,-9.0 585.5,-9.0 586.2,-9.0 587.0,-9.0 587.8,-9.0 588.5,-9.0 589.3,-9.0 590.0,-9.0 590.8,-9.0 591.6,-9.0 592.3,-9.0 593.1,-9.0 593.8,-9.0 594.6,-9.0 595.4,-9.0 596.1,-9.0 596.9,-9.0 597.7,-9.0 598.4,-9.0 599.2,-9.0 599.9,-9.0 600.7,-9.0 601.5,-9.0 602.2,-9.0 603.0,-9.0 603.7,-9.0 604.5,-9.0 605.3,-9.0 606.0,-9.0 606.8,-9.0 607.6,-9.0 608.3,-9.0 609.1,-9.0 609.8,-9.0 610.6,-9.0 611.4,-9.0 612.1,-9.0 612.9,-9.0 613.7,-9.0 614.4,-9.0 615.2,-9.0 615.9,-9.0 616.7,-9.0 617.5,-9.0 618.2,-9.0 619.0,-9.0 619.7,-9.0 620.5,-9.0 621.3,-9.0 622.0,-9.0 622.8,-9.0 623.6,-9.0 624.3,-9.0 625.1,-9.0 625.8,-9.0 626.6,-9.0 627.4,-9.0 628.1,-9.0 628.9,-9.0 629.6,-9.0 630.4,-9.0 631.2,-9.0 631.9,-9.0 632.7,-9.0 633.5,-9.0 634.2,-9.0 635.0,-9.0 635.7,-9.0 636.5,-9.0 637.3,-9.0 638.0,-9.0 638.8,-9.0 639.6,-9.0 640.3,-9.0 641.1,-9.0 641.8,-9.0 642.6,-9.0 643.4,-9.0 644.1,-9.0 644.9,-9.0 645.6,-9.0 646.4,-9.0 647.2,-9.0 647.9,-9.0 648.7,-9.0 649.5,-9.0 650.2,-9.0 651.0,-9.0 651.7,-9.0 652.5,-9.0 653.3,-9.0 654.0,-9.0 654.8,-9.0 655.5,-9.0 656.3,-9.0 657.1,-9.0 657.8,-9.0 658.6,-9.0 659.4,-9.0 660.1,-9.0 660.9,-9.0 661.6,-9.0 662.4,-9.0 663.2,-9.0 663.9,-9.0 664.7,-9.0 665.5,-9.0 666.2,-9.0 667.0,-9.0 667.7,-9.0 668.5,-9.0 669.3,-9.0 670.0,-9.0 670.8,-9.0 671.5,-9.0 672.3,-9.0 673.1,-9.0 673.8,-9.0 674.6,-9.0 675.4,-9.0 676.1,-9.0 676.9,-9.0 677.6,-9.0 678.4,-9.0 L678.4,0Z" fill="currentColor" stroke="currentColor"/><path id="s6l1" d="M435.4,0 L435.4,-8.7 436.2,-8.8 436.9,-8.7 437.7,-8.9 438.4,-8.5 439.2,-8.8 440.0,-8.8 440.7,-8.8 441.5,-9.0 442.3,-8.5 443.0,-8.8 443.8,-8.6 444.5,-8.7 445.3,-8.8 446.1,-8.5 446.8,-8.8 447.6,-8.8 448.3,-9.0 449.1,-8.7 449.9,-8.6 450.6,-8.6 451.4,-8.7 452.2,-8.8 452.9,-8.8 453.7,-8.6 454.4,-8.5 455.2,-8.9 456.0,-8.9 456.7,-9.0 457.5,-8.8 458.3,-8.7 459.0,-8.7 459.8,-8.8 460.5,-9.0 461.3,-8.8 462.1,-8.5 462.8,-8.5 463.6,-8.6 464.3,-8.6 465.1,-8.5 465.9,-8.6 466.6,-8.8 467.4,-8.8 468.2,-8.5 468.9,-8.5 469.7,-9.0 470.4,-8.8 471.2,-8.8 472.0,-8.5 472.7,-9.0 473.5,-8.9 474.2,-8.6 475.0,-8.8 475.8,-8.7 476.5,-8.7 477.3,-8.9 478.1,-8.8 478.8,-8.9 479.6,-8.9 480.3,-8.5 481.1,-8.5 481.9,-8.6 482.6,-8.6 483.4,-8.6 484.2,-8.7 484.9,-8.5 485.7,-8.7 486.4,-8.6 487.2,-8.6 488.0,-8.6 488.7,-9.0 489.5,-9.0 490.2,-8.9 491.0,-8.6 491.8,-8.7 492.5,-9.0 493.3,-8.9 494.1,-8.5 494.8,-8.7 495.6,-8.9 496.3,-8.6 497.1,-9.0 497.9,-8.6 498.6,-8.7 499.4,-8.9 500.1,-8.9 500.9,-8.9 501.7,-8.6 502.4,-8.7 503.2,-9.0 504.0,-8.9 504.7,-8.6 505.5,-9.0 506.2,-8.8 507.0,-8.7 507.8,-8.8 508.5,-8.8 509.3,-8.5 510.1,-8.8 510.8,-8.7 511.6,-8.6 512.3,-8.8 513.1,-9.0 513.9,-9.0 514.6,-8.8 515.4,-8.8 516.1,-8.8 516.9,-8.6 517.7,-8.9 518.4,-9.0 519.2,-8.9 520.0,-9.0 520.7,-8.7 521.5,-9.0 522.2,-9.0 523.0,-8.9 523.8,-8.7 524.5,-8.6 525.3,-8.5 526.0,-8.8 526.8,-8.7 527.6,-8.5 528.3,-8.6 529.1,-8.6 529.9,-8.5 530.6,-8.6 531.4,-8.6 532.1,-8.6 532.9,-8.8 533.7,-8.7 534.4,-8.6 535.2,-9.0 536.0,-8.9 536.7,-8.7 537.5,-8.8 538.2,-9.0 539.0,-8.6 539.8,-8.7 540.5,-8.8 541.3,-8.5 542.0,-8.6 542.8,-8.9 543.6,-8.6 544.3,-8.5 545.1,-8.9 545.9,-8.6 546.6,-8.9 547.4,-9.0 548.1,-8.8 548.9,-8.6 549.7,-8.6 550.4,-8.9 551.2,-8.5 551.9,-9.0 552.7,-8.8 553.5,-8.6 554.2,-8.5 555.0,-8.8 555.8,-8.9 556.5,-8.7 557.3,-8.5 558.0,-8.5 558.8,-8.7 559.6,-8.9 560.3,-8.8 561.1,-9.0 561.9,-8.9 562.6,-8.8 563.4,-9.0 564.1,-8.7 564.9,-8.7 565.7,-8.7 566.4,-8.6 567.2,-8.6 567.9,-8.7 568.7,-8.8 569.5,-8.5 570.2,-8.6 571.0,-8.8 571.8,-8.7 572.5,-8.9 573.3,-8.8 574.0,-9.0 574.8,-8.7 575.6,-8.6 576.3,-8.9 577.1,-8.7 577.8,-9.0 578.6,-8.5 579.4,-8.7 580.1,-8.5 580.9,-8.6 581.7,-8.6 582.4,-8.7 583.2,-8.5 583.9,-9.0 584.7,-8.5 585.5,-8.7 586.2,-8.8 587.0,-8.7 587.8,-8.7 588.5,-8.8 589.3,-8.9 590.0,-8.8 590.8,-8.9 591.6,-8.8 592.3,-8.6 593.1,-8.7 593.8,-8.9 594.6,-8.7 595.4,-8.9 596.1,-8.9 596.9,-8.7 597.7,-8.7 598.4,-8.6 599.2,-8.7 599.9,-8.7 600.7,-8.8 601.5,-8.6 602.2,-8.8 603.0,-8.8 603.7,-8.7 604.5,-8.5 605.3,-8.7 606.0,-9.0 606.8,-8.5 607.6,-9.0 608.3,-8.9 609.1,-8.7 609.8,-8.7 610.6,-8.5 611.4,-8.5 612.1,-8.8 612.9,-8.5 613.7,-8.8 614.4,-8.6 615.2,-9.0 615.9,-8.6 616.7,-8.6 617.5,-8.8 618.2,-8.7 619.0,-8.7 619.7,-8.5 620.5,-8.5 621.3,-8.9 622.0,-8.9 622.8,-8.6 623.6,-8.7 624.3,-9.0 625.1,-8.7 625.8,-8.9 626.6,-8.8 627.4,-8.7 628.1,-8.6 628.9,-8.5 629.6,-8.5 630.4,-8.9 631.2,-8.9 631.9,-9.0 632.7,-8.5 633.5,-8.6 634.2,-8.6 635.0,-8.9 635.7,-8.7 636.5,-8.7 637.3,-8.7 638.0,-8.9 638.8,-8.8 639.6,-8.9 640.3,-8.6 641.1,-8.8 641.8,-8.6 642.6,-8.7 643.4,-8.7 644.1,-9.0 644.9,-8.5 645.6,-8.9 646.4,-8.5 647.2,-8.7 647.9,-8.6 648.7,-8.6 649.5,-8.5 650.2,-8.6 651.0,-8.6 651.7,-8.9 652.5,-8.6 653.3,-8.7 654.0,-9.0 654.8,-8.8 655.5,-8.9 656.3,-8.7 657.1,-8.7 657.8,-8.6 658.6,-8.6 659.4,-8.7 660.1,-8.8 660.9,-8.8 661.6,-8.8 662.4,-9.0 663.2,-8.8 663.9,-9.0 664.7,-8.7 665.5,-8.6 666.2,-8.5 667.0,-8.6 667.7,-8.8 668.5,-9.0 669.3,-8.7 670.0,-8.5 670.8,-8.8 671.5,-8.9 672.3,-8.7 673.1,-8.9 673.8,-8.6 674.6,-8.8 675.4,-8.6 676.1,-8.9 676.9,-8.7 677.6,-9.0 678.4,-8.5 L678.4,0Z" fill="currentColor" stroke="currentColor"/><path id="s6l2" d="M435.4,0 L435.4,-8.9 436.2,-8.8 436.9,-8.5 437.7,-8.6 438.4,-8.9 439.2,-8.7 440.0,-8.6 440.7,-9.0 441.5,-8.6 442.3,-8.8 443.0,-8.5 443.8,-8.8 444.5,-8.8 445.3,-8.7 446.1,-8.8 446.8,-8.6 447.6,-8.9 448.3,-8.5 449.1,-8.8 449.9,-8.9 450.6,-8.5 451.4,-8.9 452.2,-9.0 452.9,-8.6 453.7,-8.7 454.4,-8.7 455.2,-8.8 456.0,-8.8 456.7,-8.8 457.5,-8.5 458.3,-8.7 459.0,-8.5 459.8,-8.6 460.5,-8.7 461.3,-8.8 462.1,-9.0 462.8,-8.8 463.6,-9.0 464.3,-9.0 465.1,-8.6 465.9,-8.6 466.6,-8.5 467.4,-9.0 468.2,-8.6 468.9,-8.7 469.7,-8.7 470.4,-8.8 471.2,-8.7 472.0,-9.0 472.7,-8.7 473.5,-8.6 474.2,-8.5 475.0,-8.7 475.8,-8.6 476.5,-8.7 477.3,-9.0 478.1,-8.6 478.8,-8.8 479.6,-9.0 480.3,-8.6 481.1,-8.6 481.9,-8.7 482.6,-8.8 483.4,-8.9 484.2,-8.7 484.9,-9.0 485.7,-8.9 486.4,-9.0 487.2,-8.8 488.0,-8.7 488.7,-8.8 489.5,-8.8 490.2,-9.0 491.0,-8.9 491.8,-9.0 492.5,-8.6 493.3,-9.0 494.1,-8.6 494.8,-8.8 495.6,-8.5 496.3,-8.7 497.1,-8.9 497.9,-9.0 498.6,-8.5 499.4,-8.6 500.1,-8.9 500.9,-8.5 501.7,-9.0 502.4,-8.9 503.2,-8.6 504.0,-8.6 504.7,-8.8 505.5,-8.5 506.2,-8.6 507.0,-8.5 507.8,-9.0 508.5,-8.7 509.3,-9.0 510.1,-8.9 510.8,-8.9 511.6,-8.6 512.3,-8.9 513.1,-8.9 513.9,-8.7 514.6,-9.0 515.4,-8.9 516.1,-8.8 516.9,-8.7 517.7,-8.8 518.4,-8.5 519.2,-8.7 520.0,-9.0 520.7,-8.9 521.5,-8.8 522.2,-8.9 523.0,-8.6 523.8,-8.8 524.5,-8.5 525.3,-8.7 526.0,-8.8 526.8,-8.7 527.6,-8.8 528.3,-8.9 529.1,-8.5 529.9,-9.0 530.6,-8.6 531.4,-8.7 532.1,-8.6 532.9,-8.9 533.7,-9.0 534.4,-8.9 535.2,-9.0 536.0,-8.7 536.7,-8.9 537.5,-8.8 538.2,-8.9 539.0,-8.5 539.8,-8.6 540.5,-8.7 541.3,-8.8 542.0,-9.0 542.8,-9.0 543.6,-8.7 544.3,-8.6 545.1,-8.5 545.9,-8.6 546.6,-8.5 547.4,-8.8 548.1,-8.8 548.9,-8.9 549.7,-9.0 550.4,-8.7 551.2,-8.8 551.9,-8.6 552.7,-8.9 553.5,-8.7 554.2,-8.7 555.0,-8.8 555.8,-8.8 556.5,-8.6 557.3,-8.6 558.0,-8.7 558.8,-8.6 559.6,-8.9 560.3,-8.8 561.1,-8.7 561.9,-8.8 562.6,-8.6 563.4,-8.9 564.1,-9.0 564.9,-8.8 565.7,-9.0 566.4,-8.9 567.2,-8.8 567.9,-8.8 568.7,-8.6 569.5,-8.8 570.2,-8.5 571.0,-8.6 571.8,-8.8 572.5,-8.9 573.3,-8.9 574.0,-9.0 574.8,-9.0 575.6,-8.6 576.3,-8.8 577.1,-8.8 577.8,-8.7 578.6,-8.7 579.4,-8.7 580.1,-9.0 580.9,-8.9 581.7,-8.8 582.4,-8.9 583.2,-8.6 583.9,-8.8 584.7,-8.5 585.5,-8.6 586.2,-8.6 587.0,-8.7 587.8,-8.6 588.5,-8.9 589.3,-8.5 590.0,-8.9 590.8,-8.9 591.6,-9.0 592.3,-8.6 593.1,-8.9 593.8,-8.9 594.6,-8.9 595.4,-8.9 596.1,-8.7 596.9,-9.0 597.7,-8.6 598.4,-9.0 599.2,-8.7 599.9,-8.8 600.7,-9.0 601.5,-9.0 602.2,-8.6 603.0,-8.7 603.7,-8.7 604.5,-8.6 605.3,-8.7 606.0,-8.6 606.8,-8.8 607.6,-8.6 608.3,-8.7 609.1,-8.9 609.8,-9.0 610.6,-8.7 611.4,-8.7 612.1,-8.6 612.9,-8.6 613.7,-8.6 614.4,-8.9 615.2,-8.8 615.9,-8.6 616.7,-8.9 617.5,-9.0 618.2,-8.7 619.0,-8.9 619.7,-8.6 620.5,-8.7 621.3,-8.8 622.0,-8.7 622.8,-8.9 623.6,-8.7 624.3,-9.0 625.1,-9.0 625.8,-8.5 626.6,-8.9 627.4,-8.5 628.1,-8.5 628.9,-8.8 629.6,-8.9 630.4,-8.9 631.2,-8.6 631.9,-8.5 632.7,-8.8 633.5,-8.7 634.2,-8.8 635.0,-8.8 635.7,-8.7 636.5,-8.9 637.3,-8.8 638.0,-8.8 638.8,-8.9 639.6,-8.7 640.3,-8.6 641.1,-8.6 641.8,-8.7 642.6,-8.5 643.4,-8.5 644.1,-9.0 644.9,-8.7 645.6,-9.0 646.4,-8.8 647.2,-8.7 647.9,-8.9 648.7,-8.7 649.5,-8.8 650.2,-8.5 651.0,-8.7 651.7,-8.9 652.5,-8.7 653.3,-8.6 654.0,-8.8 654.8,-8.5 655.5,-8.9 656.3,-8.6 657.1,-8.7 657.8,-8.6 658.6,-8.8 659.4,-8.8 660.1,-8.9 660.9,-8.5 661.6,-8.5 662.4,-8.9 663.2,-8.6 663.9,-8.5 664.7,-8.6 665.5,-8.6 666.2,-8.6 667.0,-9.0 667.7,-8.7 668.5,-8.8 669.3,-8.5 670.0,-8.9 670.8,-8.8 671.5,-8.7 672.3,-8.7 673.1,-8.8 673.8,-8.6 674.6,-9.0 675.4,-8.7 676.1,-9.0 676.9,-8.9 677.6,-8.8 678.4,-9.0 L678.4,0Z" fill="currentColor" stroke="currentColor"/><path id="s6l3" d="M435.4,0 L435.4,-9.0 436.2,-8.6 436.9,-8.6 437.7,-8.5 438.4,-8.8 439.2,-8.8 440.0,-8.6 440.7,-8.9 441.5,-8.5 442.3,-8.8 443.0,-9.0 443.8,-8.6 444.5,-8.9 445.3,-8.8 446.1,-8.6 446.8,-8.8 447.6,-8.7 448.3,-8.6 449.1,-8.9 449.9,-8.6 450.6,-8.9 451.4,-8.8 452.2,-8.6 452.9,-8.8 453.7,-8.7 454.4,-9.0 455.2,-8.6 456.0,-8.8 456.7,-8.6 457.5,-9.0 458.3,-8.7 459.0,-8.5 459.8,-8.5 460.5,-8.8 461.3,-8.5 462.1,-9.0 462.8,-8.5 463.6,-8.9 464.3,-8.7 465.1,-8.9 465.9,-8.7 466.6,-8.6 467.4,-8.9 468.2,-8.8 468.9,-8.5 469.7,-8.9 470.4,-9.0 471.2,-8.5 472.0,-8.7 472.7,-8.7 473.5,-8.5 474.2,-8.9 475.0,-8.8 475.8,-8.9 476.5,-9.0 477.3,-8.6 478.1,-9.0 478.8,-8.5 479.6,-8.8 480.3,-8.7 481.1,-9.0 481.9,-8.9 482.6,-8.7 483.4,-8.8 484.2,-8.9 484.9,-8.9 485.7,-8.9 486.4,-8.8 487.2,-8.5 488.0,-8.8 488.7,-8.5 489.5,-8.6 490.2,-8.9 491.0,-8.8 491.8,-8.7 492.5,-8.5 493.3,-8.5 494.1,-8.5 494.8,-8.6 495.6,-8.8 496.3,-8.7 497.1,-8.8 497.9,-8.6 498.6,-8.8 499.4,-8.8 500.1,-8.8 500.9,-9.0 501.7,-8.8 502.4,-9.0 503.2,-8.9 504.0,-9.0 504.7,-8.7 505.5,-8.9 506.2,-8.5 507.0,-8.5 507.8,-8.9 508.5,-8.9 509.3,-8.9 510.1,-8.7 510.8,-8.7 511.6,-8.8 512.3,-8.6 513.1,-8.8 513.9,-8.7 514.6,-8.8 515.4,-8.6 516.1,-8.5 516.9,-8.9 517.7,-8.5 518.4,-8.9 519.2,-8.8 520.0,-8.9 520.7,-8.6 521.5,-8.8 522.2,-8.6 523.0,-8.6 523.8,-9.0 524.5,-8.9 525.3,-8.8 526.0,-8.7 526.8,-8.6 527.6,-8.7 528.3,-8.8 529.1,-8.6 529.9,-8.7 530.6,-8.6 531.4,-8.7 532.1,-9.0 532.9,-8.5 533.7,-9.0 534.4,-8.9 535.2,-8.8 536.0,-9.0 536.7,-9.0 537.5,-9.0 538.2,-8.6 539.0,-8.6 539.8,-8.6 540.5,-8.8 541.3,-8.9 542.0,-9.0 542.8,-8.5 543.6,-8.5 544.3,-8.6 545.1,-8.7 545.9,-9.0 546.6,-8.7 547.4,-8.8 548.1,-8.6 548.9,-9.0 549.7,-8.7 550.4,-8.7 551.2,-8.9 551.9,-8.8 552.7,-9.0 553.5,-8.9 554.2,-8.5 555.0,-9.0 555.8,-8.5 556.5,-8.9 557.3,-8.5 558.0,-8.6 558.8,-8.9 559.6,-8.8 560.3,-9.0 561.1,-8.6 561.9,-8.9 562.6,-8.9 563.4,-8.6 564.1,-9.0 564.9,-8.9 565.7,-8.9 566.4,-9.0 567.2,-8.7 567.9,-8.8 568.7,-9.0 569.5,-8.8 570.2,-8.6 571.0,-8.6 571.8,-8.9 572.5,-8.8 573.3,-8.8 574.0,-8.5 574.8,-9.0 575.6,-8.6 576.3,-8.9 577.1,-8.7 577.8,-8.7 578.6,-8.9 579.4,-9.0 580.1,-8.6 580.9,-8.9 581.7,-9.0 582.4,-8.6 583.2,-8.7 583.9,-8.7 584.7,-9.0 585.5,-8.6 586.2,-8.6 587.0,-8.7 587.8,-8.9 588.5,-8.6 589.3,-8.8 590.0,-8.7 590.8,-8.9 591.6,-8.5 592.3,-8.5 593.1,-9.0 593.8,-8.9 594.6,-8.9 595.4,-8.8 596.1,-8.7 596.9,-8.9 597.7,-8.8 598.4,-8.6 599.2,-8.5 599.9,-8.7 600.7,-8.8 601.5,-8.7 602.2,-8.6 603.0,-8.7 603.7,-8.8 604.5,-8.5 605.3,-9.0 606.0,-8.8 606.8,-8.9 607.6,-8.5 608.3,-8.6 609.1,-8.6 609.8,-8.7 610.6,-8.8 611.4,-8.9 612.1,-8.6 612.9,-8.6 613.7,-8.6 614.4,-8.8 615.2,-9.0 615.9,-8.8 616.7,-9.0 617.5,-8.7 618.2,-8.8 619.0,-8.5 619.7,-8.8 620.5,-8.9 621.3,-8.8 622.0,-8.5 622.8,-8.6 623.6,-8.7 624.3,-8.6 625.1,-9.0 625.8,-8.6 626.6,-8.7 627.4,-8.6 628.1,-8.6 628.9,-9.0 629.6,-8.9 630.4,-8.5 631.2,-8.6 631.9,-8.9 632.7,-8.8 633.5,-8.5 634.2,-8.9 635.0,-8.8 635.7,-8.7 636.5,-8.9 637.3,-8.9 638.0,-8.5 638.8,-9.0 639.6,-8.7 640.3,-8.5 641.1,-8.6 641.8,-8.5 642.6,-8.8 643.4,-8.9 644.1,-8.7 644.9,-8.5 645.6,-8.5 646.4,-9.0 647.2,-8.7 647.9,-8.5 648.7,-8.9 649.5,-8.8 650.2,-8.5 651.0,-8.8 651.7,-8.5 652.5,-8.6 653.3,-8.8 654.0,-8.6 654.8,-8.5 655.5,-9.0 656.3,-8.8 657.1,-8.7 657.8,-8.9 658.6,-9.0 659.4,-8.5 660.1,-8.9 660.9,-8.7 661.6,-8.9 662.4,-8.5 663.2,-8.7 663.9,-8.9 664.7,-8.6 665.5,-8.9 666.2,-8.6 667.0,-9.0 667.7,-8.9 668.5,-8.9 669.3,-8.5 670.0,-8.6 670.8,-8.7 671.5,-8.9 672.3,-9.0 673.1,-9.0 673.8,-8.7 674.6,-8.6 675.4,-8.7 676.1,-8.6 676.9,-9.0 677.6,-8.7 678.4,-8.7 L678.4,0Z" fill="currentColor" stroke="currentColor"/><path id="s6l4" d="M435.4,0 L435.4,-8.6 436.2,-9.0 436.9,-9.0 437.7,-8.5 438.4,-8.8 439.2,-8.8 440.0,-9.0 440.7,-8.9 441.5,-8.7 442.3,-8.7 443.0,-8.9 443.8,-8.8 444.5,-9.0 445.3,-8.9 446.1,-8.5 446.8,-8.5 447.6,-8.5 448.3,-8.7 449.1,-8.6 449.9,-9.0 450.6,-8.8 451.4,-8.5 452.2,-8.5 452.9,-8.7 453.7,-8.8 454.4,-8.5 455.2,-8.6 456.0,-8.9 456.7,-8.7 457.5,-8.9 458.3,-8.9 459.0,-8.8 459.8,-9.0 460.5,-8.9 461.3,-8.7 462.1,-8.7 462.8,-8.5 463.6,-8.6 464.3,-8.9 465.1,-8.5 465.9,-9.0 466.6,-8.7 467.4,-8.5 468.2,-8.6 468.9,-8.5 469.7,-8.8 470.4,-8.7 471.2,-8.5 472.0,-8.6 472.7,-8.7 473.5,-8.9 474.2,-8.7 475.0,-8.7 475.8,-9.0 476.5,-8.7 477.3,-8.9 478.1,-8.8 478.8,-8.7 479.6,-8.7 480.3,-8.5 481.1,-8.7 481.9,-8.7 482.6,-8.5 483.4,-9.0 484.2,-8.9 484.9,-8.9 485.7,-8.8 486.4,-8.8 487.2,-8.5 488.0,-8.9 488.7,-8.9 489.5,-8.5 490.2,-9.0 491.0,-8.9 491.8,-8.9 492.5,-8.9 493.3,-8.8 494.1,-8.7 494.8,-8.6 495.6,-8.8 496.3,-8.9 497.1,-8.5 497.9,-8.6 498.6,-8.7 499.4,-8.8 500.1,-9.0 500.9,-8.9 501.7,-8.6 502.4,-8.9 503.2,-8.5 504.0,-9.0 504.7,-8.8 505.5,-8.6 506.2,-8.9 507.0,-8.9 507.8,-8.5 508.5,-8.9 509.3,-8.5 510.1,-8.6 510.8,-8.8 511.6,-8.7 512.3,-8.5 513.1,-9.0 513.9,-8.7 514.6,-8.6 515.4,-8.7 516.1,-8.6 516.9,-9.0 517.7,-8.8 518.4,-8.6 519.2,-8.7 520.0,-8.5 520.7,-8.6 521.5,-9.0 522.2,-8.8 523.0,-8.9 523.8,-8.7 524.5,-8.7 525.3,-9.0 526.0,-8.8 526.8,-8.7 527.6,-9.0 528.3,-8.6 529.1,-8.9 529.9,-8.8 530.6,-8.7 531.4,-8.9 532.1,-8.6 532.9,-8.7 533.7,-9.0 534.4,-8.9 535.2,-9.0 536.0,-9.0 536.7,-8.6 537.5,-8.8 538.2,-8.8 539.0,-8.7 539.8,-8.7 540.5,-8.8 541.3,-8.5 542.0,-8.7 542.8,-8.6 543.6,-8.7 544.3,-8.7 545.1,-8.8 545.9,-8.9 546.6,-8.9 547.4,-8.7 548.1,-8.7 548.9,-8.6 549.7,-9.0 550.4,-8.7 551.2,-8.5 551.9,-8.8 552.7,-8.7 553.5,-8.9 554.2,-8.7 555.0,-8.8 555.8,-8.6 556.5,-8.7 557.3,-8.7 558.0,-8.7 558.8,-8.7 559.6,-8.8 560.3,-8.6 561.1,-8.7 561.9,-9.0 562.6,-8.8 563.4,-9.0 564.1,-8.5 564.9,-8.9 565.7,-9.0 566.4,-8.9 567.2,-8.5 567.9,-8.6 568.7,-8.5 569.5,-9.0 570.2,-8.7 571.0,-8.7 571.8,-8.9 572.5,-8.5 573.3,-8.8 574.0,-8.9 574.8,-8.6 575.6,-8.7 576.3,-8.6 577.1,-8.8 577.8,-8.5 578.6,-8.5 579.4,-8.7 580.1,-8.9 580.9,-8.6 581.7,-9.0 582.4,-8.6 583.2,-9.0 583.9,-8.7 584.7,-8.7 585.5,-8.6 586.2,-9.0 587.0,-8.6 587.8,-9.0 588.5,-9.0 589.3,-8.7 590.0,-8.8 590.8,-8.8 591.6,-8.9 592.3,-8.6 593.1,-8.6 593.8,-8.7 594.6,-8.6 595.4,-8.5 596.1,-8.6 596.9,-8.8 597.7,-9.0 598.4,-8.7 599.2,-8.5 599.9,-8.9 600.7,-8.6 601.5,-8.7 602.2,-8.8 603.0,-9.0 603.7,-8.8 604.5,-8.7 605.3,-8.9 606.0,-9.0 606.8,-8.7 607.6,-8.7 608.3,-8.7 609.1,-8.9 609.8,-9.0 610.6,-8.9 611.4,-8.8 612.1,-8.8 612.9,-8.9 613.7,-8.7 614.4,-9.0 615.2,-8.9 615.9,-9.0 616.7,-8.6 617.5,-8.8 618.2,-8.6 619.0,-8.9 619.7,-8.8 620.5,-8.9 621.3,-8.9 622.0,-9.0 622.8,-8.6 623.6,-8.5 624.3,-8.6 625.1,-8.6 625.8,-8.8 626.6,-8.7 627.4,-8.6 628.1,-8.5 628.9,-8.7 629.6,-8.6 630.4,-8.9 631.2,-8.5 631.9,-8.7 632.7,-8.6 633.5,-9.0 634.2,-8.7 635.0,-8.8 635.7,-9.0 636.5,-8.9 637.3,-8.7 638.0,-8.8 638.8,-8.9 639.6,-9.0 640.3,-8.6 641.1,-8.5 641.8,-8.7 642.6,-8.8 643.4,-8.6 644.1,-8.7 644.9,-8.8 645.6,-9.0 646.4,-9.0 647.2,-9.0 647.9,-8.9 648.7,-8.9 649.5,-8.6 650.2,-9.0 651.0,-8.7 651.7,-8.7 652.5,-8.5 653.3,-8.7 654.0,-8.6 654.8,-8.7 655.5,-9.0 656.3,-9.0 657.1,-8.9 657.8,-8.9 658.6,-8.8 659.4,-8.7 660.1,-8.8 660.9,-8.6 661.6,-8.6 662.4,-8.5 663.2,-8.8 663.9,-8.9 664.7,-8.7 665.5,-8.9 666.2,-8.9 667.0,-8.9 667.7,-8.9 668.5,-8.9 669.3,-8.6 670.0,-8.8 670.8,-9.0 671.5,-8.9 672.3,-9.0 673.1,-8.6 673.8,-8.9 674.6,-8.8 675.4,-9.0 676.1,-8.9 676.9,-9.0 677.6,-8.5 678.4,-9.0 L678.4,0Z" fill="currentColor" stroke="currentColor"/></defs>
<g stroke-width="0.9"><use href="#s6v0" transform="matrix(1 0 0 1.0000 0 927.37)" color="#dedaf7"/><use href="#s6v2" transform="matrix(1 0 0 0.9972 0 927.37)" color="#f9d9f9"/><use href="#s6v4" transform="matrix(1 0 0 0.9929 0 927.37)" color="#bbdff4"/><use href="#s6v2" transform="matrix(1 0 0 0.9898 0 927.37)" color="#fce2de"/><use href="#s6v4" transform="matrix(1 0 0 0.9862 0 927.37)" color="#f9e2d2"/><use href="#s6v2" transform="matrix(1 0 0 0.9803 0 927.37)" color="#cffaff"/><use href="#s6v2" transform="matrix(1 0 0 0.9771 0 927.37)" color="#fceacb"/><use href="#s6v2" transform="matrix(1 0 0 0.9744 0 927.37)" color="#e0f9d7"/><use href="#s6v1" transform="matrix(1 0 0 0.9685 0 927.37)" color="#422f5e"/><use href="#s6v2" transform="matrix(1 0 0 0.9570 0 927.37)" color="#541b4c"/><use href="#s6v1" transform="matrix(1 0 0 0.9455 0 927.37)" color="#0a2f54"/><use href="#s6v2" transform="matrix(1 0 0 0.9394 0 927.37)" color="#5b1810"/><use href="#s6v3" transform="matrix(1 0 0 0.9277 0 927.37)" color="#9b470e"/><use href="#s6v4" transform="matrix(1 0 0 0.9186 0 927.37)" color="#335a61"/><use href="#s6v4" transform="matrix(1 0 0 0.9083 0 927.37)" color="#987507"/><use href="#s6v1" transform="matrix(1 0 0 0.9036 0 927.37)" color="#426b37"/><use href="#s6v3" transform="matrix(1 0 0 0.8937 0 927.37)" color="#8270b8"/><use href="#s6v3" transform="matrix(1 0 0 0.8838 0 927.37)" color="#d685ce"/><use href="#s6v1" transform="matrix(1 0 0 0.8740 0 927.37)" color="#5497ce"/><use href="#s6v4" transform="matrix(1 0 0 0.8594 0 927.37)" color="#ea6763"/><use href="#s6v2" transform="matrix(1 0 0 0.8504 0 927.37)" color="#f99551"/><use href="#s6v1" transform="matrix(1 0 0 0.8353 0 927.37)" color="#68c6db"/><use href="#s6v2" transform="matrix(1 0 0 0.8290 0 927.37)" color="#f2ca6f"/><use href="#s6v3" transform="matrix(1 0 0 0.8126 0 927.37)" color="#9cc58c"/><use href="#s6v4" transform="matrix(1 0 0 0.7958 0 927.37)" color="#645095"/><use href="#s6v3" transform="matrix(1 0 0 0.7847 0 927.37)" color="#983184"/><use href="#s6v4" transform="matrix(1 0 0 0.7687 0 927.37)" color="#0e53a2"/><use href="#s6v3" transform="matrix(1 0 0 0.7514 0 927.37)" color="#c01f05"/><use href="#s6v3" transform="matrix(1 0 0 0.7342 0 927.37)" color="#e07731"/><use href="#s6v4" transform="matrix(1 0 0 0.7230 0 927.37)" color="#67b1c9"/><use href="#s6v3" transform="matrix(1 0 0 0.7086 0 927.37)" color="#e5ad12"/><use href="#s6v1" transform="matrix(1 0 0 0.6949 0 927.37)" color="#659f54"/><use href="#s6v3" transform="matrix(1 0 0 0.6828 0 927.37)" color="#afa3e0"/><use href="#s6v4" transform="matrix(1 0 0 0.6670 0 927.37)" color="#e5a9e2"/><use href="#s6v2" transform="matrix(1 0 0 0.6568 0 927.37)" color="#84b6d8"/><use href="#s6v1" transform="matrix(1 0 0 0.6404 0 927.37)" color="#f29393"/><use href="#s6v2" transform="matrix(1 0 0 0.6316 0 927.37)" color="#f9bb91"/><use href="#s6v3" transform="matrix(1 0 0 0.6171 0 927.37)" color="#72dbed"/><use href="#s6v3" transform="matrix(1 0 0 0.6003 0 927.37)" color="#f4d59a"/><use href="#s6v3" transform="matrix(1 0 0 0.5942 0 927.37)" color="#b8dbac"/><use href="#s6v1" transform="matrix(1 0 0 0.5802 0 927.37)" color="#5b4779"/><use href="#s6v1" transform="matrix(1 0 0 0.5752 0 927.37)" color="#6f2365"/><use href="#s6v1" transform="matrix(1 0 0 0.5685 0 927.37)" color="#0e467e"/><use href="#s6v2" transform="matrix(1 0 0 0.5599 0 927.37)" color="#8b1307"/><use href="#s6v1" transform="matrix(1 0 0 0.5541 0 927.37)" color="#c25f1b"/><use href="#s6v4" transform="matrix(1 0 0 0.5378 0 927.37)" color="#4780bd"/><use href="#s6v4" transform="matrix(1 0 0 0.5284 0 927.37)" color="#cda405"/><use href="#s6v3" transform="matrix(1 0 0 0.5208 0 927.37)" color="#538845"/><use href="#s6v3" transform="matrix(1 0 0 0.5086 0 927.37)" color="#7260a1"/><use href="#s6v1" transform="matrix(1 0 0 0.4922 0 927.37)" color="#bb46aa"/><use href="#s6v1" transform="matrix(1 0 0 0.4802 0 927.37)" color="#237ac2"/><use href="#s6v2" transform="matrix(1 0 0 0.4695 0 927.37)" color="#e03347"/><use href="#s6v3" transform="matrix(1 0 0 0.4554 0 927.37)" color="#fa6705"/><use href="#s6v2" transform="matrix(1 0 0 0.4455 0 927.37)" color="#5a96f2"/><use href="#s6v1" transform="matrix(1 0 0 0.4379 0 927.37)" color="#e0b505"/><use href="#s6v3" transform="matrix(1 0 0 0.4236 0 927.37)" color="#59a74e"/><use href="#s6v1" transform="matrix(1 0 0 0.4099 0 927.37)" color="#dedaf7"/><use href="#s6v1" transform="matrix(1 0 0 0.4043 0 927.37)" color="#f9d9f9"/><use href="#s6v4" transform="matrix(1 0 0 0.3994 0 927.37)" color="#bbdff4"/><use href="#s6v1" transform="matrix(1 0 0 0.3934 0 927.37)" color="#fce2de"/><use href="#s6v3" transform="matrix(1 0 0 0.3881 0 927.37)" color="#f9e2d2"/><use href="#s6v2" transform="matrix(1 0 0 0.3837 0 927.37)" color="#cffaff"/><use href="#s6v3" transform="matrix(1 0 0 0.3813 0 927.37)" color="#fceacb"/><use href="#s6v2" transform="matrix(1 0 0 0.3784 0 927.37)" color="#e0f9d7"/><use href="#s6v2" transform="matrix(1 0 0 0.3749 0 927.37)" color="#422f5e"/><use href="#s6v4" transform="matrix(1 0 0 0.3668 0 927.37)" color="#541b4c"/><use href="#s6v4" transform="matrix(1 0 0 0.3581 0 927.37)" color="#0a2f54"/><use href="#s6v3" transform="matrix(1 0 0 0.3500 0 927.37)" color="#5b1810"/><use href="#s6v2" transform="matrix(1 0 0 0.3374 0 927.37)" color="#9b470e"/><use href="#s6v3" transform="matrix(1 0 0 0.3269 0 927.37)" color="#335a61"/><use href="#s6v2" transform="matrix(1 0 0 0.3153 0 927.37)" color="#987507"/><use href="#s6v3" transform="matrix(1 0 0 0.3030 0 927.37)" color="#426b37"/><use href="#s6v1" transform="matrix(1 0 0 0.2953 0 927.37)" color="#8270b8"/><use href="#s6v1" transform="matrix(1 0 0 0.2838 0 927.37)" color="#d685ce"/><use href="#s6v4" transform="matrix(1 0 0 0.2698 0 927.37)" color="#5497ce"/><use href="#s6v2" transform="matrix(1 0 0 0.2637 0 927.37)" color="#ea6763"/><use href="#s6v4" transform="matrix(1 0 0 0.2507 0 927.37)" color="#f99551"/><use href="#s6v3" transform="matrix(1 0 0 0.2416 0 927.37)" color="#68c6db"/><use href="#s6v3" transform="matrix(1 0 0 0.2295 0 927.37)" color="#f2ca6f"/><use href="#s6v4" transform="matrix(1 0 0 0.2201 0 927.37)" color="#9cc58c"/><use href="#s6v3" transform="matrix(1 0 0 0.2108 0 927.37)" color="#645095"/><use href="#s6v4" transform="matrix(1 0 0 0.1951 0 927.37)" color="#983184"/><use href="#s6v4" transform="matrix(1 0 0 0.1862 0 927.37)" color="#0e53a2"/><use href="#s6v2" transform="matrix(1 0 0 0.1744 0 927.37)" color="#c01f05"/><use href="#s6v1" transform="matrix(1 0 0 0.1626 0 927.37)" color="#e07731"/><use href="#s6v2" transform="matrix(1 0 0 0.1502 0 927.37)" color="#67b1c9"/><use href="#s6v1" transform="matrix(1 0 0 0.1437 0 927.37)" color="#e5ad12"/><use href="#s6v3" transform="matrix(1 0 0 0.1300 0 927.37)" color="#659f54"/><use href="#s6v3" transform="matrix(1 0 0 0.1215 0 927.37)" color="#afa3e0"/><use href="#s6v3" transform="matrix(1 0 0 0.1045 0 927.37)" color="#e5a9e2"/><use href="#s6v3" transform="matrix(1 0 0 0.0872 0 927.37)" color="#84b6d8"/><use href="#s6v3" transform="matrix(1 0 0 0.0711 0 927.37)" color="#f29393"/><use href="#s6v3" transform="matrix(1 0 0 0.0567 0 927.37)" color="#f9bb91"/><use href="#s6v3" transform="matrix(1 0 0 0.0395 0 927.37)" color="#72dbed"/><use href="#s6v3" transform="matrix(1 0 0 0.0250 0 927.37)" color="#f4d59a"/><use href="#s6v1" transform="matrix(1 0 0 0.0129 0 927.37)" color="#b8dbac"/><use href="#s6l0" transform="matrix(1 0 0 1.0000 0 936.4)" color="#5b4779"/><use href="#s6l4" transform="matrix(1 0 0 0.9328 0 936.4)" color="#6f2365"/><use href="#s6l1" transform="matrix(1 0 0 0.8829 0 936.4)" color="#0e467e"/><use href="#s6l4" transform="matrix(1 0 0 0.8534 0 936.4)" color="#8b1307"/><use href="#s6l3" transform="matrix(1 0 0 0.8115 0 936.4)" color="#c25f1b"/><use href="#s6l4" transform="matrix(1 0 0 0.7670 0 936.4)" color="#4780bd"/><use href="#s6l3" transform="matrix(1 0 0 0.7036 0 936.4)" color="#cda405"/><use href="#s6l2" transform="matrix(1 0 0 0.6609 0 936.4)" color="#538845"/><use href="#s6l4" transform="matrix(1 0 0 0.5869 0 936.4)" color="#7260a1"/><use href="#s6l4" transform="matrix(1 0 0 0.5102 0 936.4)" color="#bb46aa"/><use href="#s6l3" transform="matrix(1 0 0 0.4310 0 936.4)" color="#237ac2"/><use href="#s6l4" transform="matrix(1 0 0 0.3590 0 936.4)" color="#e03347"/><use href="#s6l2" transform="matrix(1 0 0 0.2733 0 936.4)" color="#fa6705"/><use href="#s6l4" transform="matrix(1 0 0 0.2421 0 936.4)" color="#5a96f2"/><use href="#s6l1" transform="matrix(1 0 0 0.1696 0 936.4)" color="#e0b505"/><use href="#s6l3" transform="matrix(1 0 0 0.0892 0 936.4)" color="#59a74e"/></g>
<rect x="373" y="969.8" width="14" height="4" rx="2" fill="#56a64b"/>
<text x="395" y="975.8" font-size="12.5" fill="#24292e" text-anchor="start" font-weight="normal" letter-spacing="0.85" >ingester-zone-a-0</text>
<rect x="516" y="969.8" width="14" height="4" rx="2" fill="#e0b400"/>
<text x="538.5" y="975.8" font-size="12.5" fill="#24292e" text-anchor="start" font-weight="normal" letter-spacing="0.85" >ingester-zone-a-1</text>
<rect x="373" y="993.5" width="14" height="4" rx="2" fill="#5794f2"/>
<text x="395" y="999.5" font-size="12.5" fill="#24292e" text-anchor="start" font-weight="normal" letter-spacing="0.7" >ingester-zone-a-10</text>
<rect x="521" y="993.5" width="14" height="4" rx="2" fill="#fa6400"/>
<text x="543.5" y="999.5" font-size="12.5" fill="#24292e" text-anchor="start" font-weight="normal" letter-spacing="0.7" >ingester-zone-a-11</text>
<rect x="743.2" y="377.0" width="280.1" height="1" fill="#e6e7e8"/>
<text x="738.7" y="381.8" font-size="12" fill="#24292e" text-anchor="end" font-weight="normal" letter-spacing="0.9" >0</text>
<rect x="743.2" y="322.2" width="280.1" height="1" fill="#e6e7e8"/>
<text x="738.7" y="327.05" font-size="12" fill="#24292e" text-anchor="end" font-weight="normal" letter-spacing="0.9" >50</text>
<rect x="743.2" y="267.5" width="280.1" height="1" fill="#e6e7e8"/>
<text x="738.7" y="272.3" font-size="12" fill="#24292e" text-anchor="end" font-weight="normal" letter-spacing="0.9" >100</text>
<rect x="770.1" y="223.6" width="1" height="157.9" fill="#e6e7e8"/>
<text x="770.8000000000001" y="396.9" font-size="12" fill="#24292e" text-anchor="middle" font-weight="normal" letter-spacing="0.35" >15:30</text>
<rect x="840.0" y="223.6" width="1" height="157.9" fill="#e6e7e8"/>
<text x="840.7" y="396.9" font-size="12" fill="#24292e" text-anchor="middle" font-weight="normal" letter-spacing="0.35" >15:45</text>
<rect x="909.9" y="223.6" width="1" height="157.9" fill="#e6e7e8"/>
<text x="910.6" y="396.9" font-size="12" fill="#24292e" text-anchor="middle" font-weight="normal" letter-spacing="0.35" >16:00</text>
<rect x="979.8" y="223.6" width="1" height="157.9" fill="#e6e7e8"/>
<text x="980.5" y="396.9" font-size="12" fill="#24292e" text-anchor="middle" font-weight="normal" letter-spacing="0.35" >16:15</text>
<path d="M743.2,342.5 744.2,345.2 745.3,325.6 746.3,317.1 747.4,345.0 748.4,307.5 749.4,360.0 750.5,308.5 751.5,337.2 752.6,354.5 753.6,332.3 754.7,309.5 755.7,326.3 756.7,334.3 757.8,331.6 758.8,345.3 759.9,322.6 760.9,348.2 761.9,362.3 763.0,307.4 764.0,333.9 765.1,352.0 766.1,330.5 767.1,348.6 768.2,331.1 769.2,356.1 770.3,337.0 771.3,334.2 772.4,320.8 773.4,334.6 774.4,340.3 775.5,356.0 776.5,360.7 777.6,350.2 778.6,345.0 779.6,331.9 780.7,308.5 781.7,319.5 782.8,308.5 783.8,346.6 784.9,338.7 785.9,312.2 786.9,346.2 788.0,335.4 789.0,336.2 790.1,354.3 791.1,346.2 792.1,335.0 793.2,332.7 794.2,352.0 795.3,336.9 796.3,356.6 797.3,358.7 798.4,356.1 799.4,328.1 800.5,316.8 801.5,323.2 802.6,343.4 803.6,331.0 804.6,332.4 805.7,355.2 806.7,332.1 807.8,320.7 808.8,355.9 809.8,356.9 810.9,346.2 811.9,359.0 813.0,351.3 814.0,327.8 815.0,347.7 816.1,321.5 817.1,344.9 818.2,326.4 819.2,340.2 820.3,328.9 821.3,347.6 822.3,360.2 823.4,349.6 824.4,332.3 825.5,333.0 826.5,344.0 827.5,352.4 828.6,328.9 829.6,349.3 830.7,342.8 831.7,342.1 832.7,322.1 833.8,341.6 834.8,336.7 835.9,310.3 836.9,357.3 838.0,357.9 839.0,344.4 840.0,334.3 841.1,326.0 842.1,356.5 843.2,332.3 844.2,335.6 845.2,346.4 846.3,334.1 847.3,310.3 848.4,361.1 849.4,338.0 850.5,350.0 851.5,314.9 852.5,362.9 853.6,333.8 854.6,353.6 855.7,332.7 856.7,338.7 857.7,359.8 858.8,343.8 859.8,328.2 860.9,335.4 861.9,329.0 862.9,334.1 864.0,321.3 865.0,359.8 866.1,330.7 867.1,340.8 868.2,332.7 869.2,316.2 870.2,327.4 871.3,355.6 872.3,332.7 873.4,316.3 874.4,346.1 875.4,355.0 876.5,323.3 877.5,351.5 878.6,326.6 879.6,351.1 880.6,334.0 881.7,310.1 882.7,305.2 883.8,331.7 884.8,346.7 885.9,342.6 886.9,340.9 887.9,317.1 889.0,333.7 890.0,341.3 891.1,324.1 892.1,351.2 893.1,322.4 894.2,334.4 895.2,330.2 896.3,350.8 897.3,341.1 898.3,339.1 899.4,338.0 900.4,356.4 901.5,336.0 902.5,311.6 903.6,335.2 904.6,348.0 905.6,337.2 906.7,341.1 907.7,356.9 908.8,345.8 909.8,355.6 910.8,248.3 911.9,361.4 912.9,353.8 914.0,341.0 915.0,354.8 916.0,341.5 917.1,355.6 918.1,344.3 919.2,336.3 920.2,346.6 921.3,333.8 922.3,345.9 923.3,337.5 924.4,322.5 925.4,337.4 926.5,237.3 927.5,340.6 928.5,345.4 929.6,349.3 930.6,342.9 931.7,340.4 932.7,337.0 933.8,339.6 934.8,332.2 935.8,297.6 936.9,341.9 937.9,319.5 939.0,338.0 940.0,340.7 941.0,333.0 942.1,342.2 943.1,334.2 944.2,335.6 945.2,326.5 946.2,334.7 947.3,338.2 948.3,353.4 949.4,339.7 950.4,341.7 951.5,323.9 952.5,332.1 953.5,333.3 954.6,346.5 955.6,343.4 956.7,357.7 957.7,313.0 958.7,344.4 959.8,328.1 960.8,338.6 961.9,328.4 962.9,351.0 963.9,328.4 965.0,348.7 966.0,330.2 967.1,317.5 968.1,355.4 969.2,353.2 970.2,324.5 971.2,353.4 972.3,322.4 973.3,352.1 974.4,324.4 975.4,351.4 976.4,335.5 977.5,355.6 978.5,334.7 979.6,352.9 980.6,323.7 981.6,339.0 982.7,265.8 983.7,360.2 984.8,343.1 985.8,356.1 986.9,335.3 987.9,341.9 988.9,327.1 990.0,354.3 991.0,342.6 992.1,350.9 993.1,362.5 994.1,352.5 995.2,246.1 996.2,345.4 997.3,338.6 998.3,343.7 999.4,322.5 1000.4,332.1 1001.4,289.9 1002.5,338.1 1003.5,340.3 1004.6,261.4 1005.6,339.1 1006.6,343.7 1007.7,332.3 1008.7,351.6 1009.8,328.9 1010.8,304.1 1011.8,336.9 1012.9,331.7 1013.9,316.2 1015.0,317.2 1016.0,356.6 1017.1,332.6 1018.1,338.0 1019.1,337.5 1020.2,327.9 1021.2,332.6 1022.3,324.3 1023.3,347.4 L1023.3,377.5 L743.2,377.5 Z" fill="#fefdf8" stroke="none"/>
<path d="M743.2,342.5 744.2,345.2 745.3,325.6 746.3,317.1 747.4,345.0 748.4,307.5 749.4,360.0 750.5,308.5 751.5,337.2 752.6,354.5 753.6,332.3 754.7,309.5 755.7,326.3 756.7,334.3 757.8,331.6 758.8,345.3 759.9,322.6 760.9,348.2 761.9,362.3 763.0,307.4 764.0,333.9 765.1,352.0 766.1,330.5 767.1,348.6 768.2,331.1 769.2,356.1 770.3,337.0 771.3,334.2 772.4,320.8 773.4,334.6 774.4,340.3 775.5,356.0 776.5,360.7 777.6,350.2 778.6,345.0 779.6,331.9 780.7,308.5 781.7,319.5 782.8,308.5 783.8,346.6 784.9,338.7 785.9,312.2 786.9,346.2 788.0,335.4 789.0,336.2 790.1,354.3 791.1,346.2 792.1,335.0 793.2,332.7 794.2,352.0 795.3,336.9 796.3,356.6 797.3,358.7 798.4,356.1 799.4,328.1 800.5,316.8 801.5,323.2 802.6,343.4 803.6,331.0 804.6,332.4 805.7,355.2 806.7,332.1 807.8,320.7 808.8,355.9 809.8,356.9 810.9,346.2 811.9,359.0 813.0,351.3 814.0,327.8 815.0,347.7 816.1,321.5 817.1,344.9 818.2,326.4 819.2,340.2 820.3,328.9 821.3,347.6 822.3,360.2 823.4,349.6 824.4,332.3 825.5,333.0 826.5,344.0 827.5,352.4 828.6,328.9 829.6,349.3 830.7,342.8 831.7,342.1 832.7,322.1 833.8,341.6 834.8,336.7 835.9,310.3 836.9,357.3 838.0,357.9 839.0,344.4 840.0,334.3 841.1,326.0 842.1,356.5 843.2,332.3 844.2,335.6 845.2,346.4 846.3,334.1 847.3,310.3 848.4,361.1 849.4,338.0 850.5,350.0 851.5,314.9 852.5,362.9 853.6,333.8 854.6,353.6 855.7,332.7 856.7,338.7 857.7,359.8 858.8,343.8 859.8,328.2 860.9,335.4 861.9,329.0 862.9,334.1 864.0,321.3 865.0,359.8 866.1,330.7 867.1,340.8 868.2,332.7 869.2,316.2 870.2,327.4 871.3,355.6 872.3,332.7 873.4,316.3 874.4,346.1 875.4,355.0 876.5,323.3 877.5,351.5 878.6,326.6 879.6,351.1 880.6,334.0 881.7,310.1 882.7,305.2 883.8,331.7 884.8,346.7 885.9,342.6 886.9,340.9 887.9,317.1 889.0,333.7 890.0,341.3 891.1,324.1 892.1,351.2 893.1,322.4 894.2,334.4 895.2,330.2 896.3,350.8 897.3,341.1 898.3,339.1 899.4,338.0 900.4,356.4 901.5,336.0 902.5,311.6 903.6,335.2 904.6,348.0 905.6,337.2 906.7,341.1 907.7,356.9 908.8,345.8 909.8,355.6 910.8,248.3 911.9,361.4 912.9,353.8 914.0,341.0 915.0,354.8 916.0,341.5 917.1,355.6 918.1,344.3 919.2,336.3 920.2,346.6 921.3,333.8 922.3,345.9 923.3,337.5 924.4,322.5 925.4,337.4 926.5,237.3 927.5,340.6 928.5,345.4 929.6,349.3 930.6,342.9 931.7,340.4 932.7,337.0 933.8,339.6 934.8,332.2 935.8,297.6 936.9,341.9 937.9,319.5 939.0,338.0 940.0,340.7 941.0,333.0 942.1,342.2 943.1,334.2 944.2,335.6 945.2,326.5 946.2,334.7 947.3,338.2 948.3,353.4 949.4,339.7 950.4,341.7 951.5,323.9 952.5,332.1 953.5,333.3 954.6,346.5 955.6,343.4 956.7,357.7 957.7,313.0 958.7,344.4 959.8,328.1 960.8,338.6 961.9,328.4 962.9,351.0 963.9,328.4 965.0,348.7 966.0,330.2 967.1,317.5 968.1,355.4 969.2,353.2 970.2,324.5 971.2,353.4 972.3,322.4 973.3,352.1 974.4,324.4 975.4,351.4 976.4,335.5 977.5,355.6 978.5,334.7 979.6,352.9 980.6,323.7 981.6,339.0 982.7,265.8 983.7,360.2 984.8,343.1 985.8,356.1 986.9,335.3 987.9,341.9 988.9,327.1 990.0,354.3 991.0,342.6 992.1,350.9 993.1,362.5 994.1,352.5 995.2,246.1 996.2,345.4 997.3,338.6 998.3,343.7 999.4,322.5 1000.4,332.1 1001.4,289.9 1002.5,338.1 1003.5,340.3 1004.6,261.4 1005.6,339.1 1006.6,343.7 1007.7,332.3 1008.7,351.6 1009.8,328.9 1010.8,304.1 1011.8,336.9 1012.9,331.7 1013.9,316.2 1015.0,317.2 1016.0,356.6 1017.1,332.6 1018.1,338.0 1019.1,337.5 1020.2,327.9 1021.2,332.6 1022.3,324.3 1023.3,347.4" fill="none" stroke="#e0b400" stroke-width="1.0" stroke-linejoin="round"/>
<path d="M743.2,377.2 750.4,377.2 757.6,377.2 764.7,377.2 771.9,377.2 779.1,377.2 786.3,377.2 793.5,377.2 800.7,377.2 807.8,377.2 815.0,377.2 822.2,377.2 829.4,377.2 836.6,377.2 843.7,377.2 850.9,377.2 858.1,377.2 865.3,377.2 872.5,377.2 879.7,377.2 886.8,377.2 894.0,377.2 901.2,377.2 908.4,377.2 915.6,377.2 922.8,377.2 929.9,377.2 937.1,377.2 944.3,377.2 951.5,377.2 958.7,377.2 965.8,377.2 973.0,377.2 980.2,377.2 987.4,377.2 994.6,377.2 1001.8,377.2 1008.9,377.2 1016.1,377.2 1023.3,377.2" fill="none" stroke="#56a64b" stroke-width="1.0" stroke-linejoin="round"/>
<rect x="717" y="411.5" width="14" height="4" rx="2" fill="#56a64b"/>
<text x="738" y="417.5" font-size="12.5" fill="#24292e" text-anchor="start" font-weight="normal" letter-spacing="0.98" >avg</text>
<rect x="771" y="411.5" width="14" height="4" rx="2" fill="#e0b400"/>
<text x="792" y="417.5" font-size="12.5" fill="#24292e" text-anchor="start" font-weight="normal" letter-spacing="0.98" >highest</text>
<rect x="738.6" y="681.5" width="284.7" height="1" fill="#e6e7e8"/>
<text x="734.1" y="686.3" font-size="12" fill="#24292e" text-anchor="end" font-weight="normal" letter-spacing="0.9" >0</text>
<rect x="738.6" y="629.9" width="284.7" height="1" fill="#e6e7e8"/>
<text x="734.1" y="634.6999999999999" font-size="12" fill="#24292e" text-anchor="end" font-weight="normal" letter-spacing="0.9" >20</text>
<rect x="738.6" y="578.3" width="284.7" height="1" fill="#e6e7e8"/>
<text x="734.1" y="583.0999999999999" font-size="12" fill="#24292e" text-anchor="end" font-weight="normal" letter-spacing="0.9" >40</text>
<rect x="738.6" y="526.7" width="284.7" height="1" fill="#e6e7e8"/>
<text x="734.1" y="531.5" font-size="12" fill="#24292e" text-anchor="end" font-weight="normal" letter-spacing="0.9" >60</text>
<rect x="764.9" y="527.6" width="1" height="158.4" fill="#e6e7e8"/>
<text x="765.6" y="701.4" font-size="12" fill="#24292e" text-anchor="middle" font-weight="normal" letter-spacing="0.35" >15:30</text>
<rect x="836.3" y="527.6" width="1" height="158.4" fill="#e6e7e8"/>
<text x="836.9666666666667" y="701.4" font-size="12" fill="#24292e" text-anchor="middle" font-weight="normal" letter-spacing="0.35" >15:45</text>
<rect x="907.6" y="527.6" width="1" height="158.4" fill="#e6e7e8"/>
<text x="908.3333333333334" y="701.4" font-size="12" fill="#24292e" text-anchor="middle" font-weight="normal" letter-spacing="0.35" >16:00</text>
<rect x="979.0" y="527.6" width="1" height="158.4" fill="#e6e7e8"/>
<text x="979.7" y="701.4" font-size="12" fill="#24292e" text-anchor="middle" font-weight="normal" letter-spacing="0.35" >16:15</text>
<path d="M738.6,579.2 739.7,608.8 740.9,634.8 742.0,635.0 743.2,559.9 744.3,605.8 745.5,637.4 746.6,633.7 747.7,593.6 748.9,620.2 750.0,638.4 751.2,636.3 752.3,596.5 753.5,619.5 754.6,635.0 755.8,634.8 756.9,592.3 758.0,622.4 759.2,637.7 760.3,639.7 761.5,596.8 762.6,620.9 763.8,641.4 764.9,633.1 766.0,572.1 767.2,605.4 768.3,638.4 769.5,635.5 770.6,591.0 771.8,611.0 772.9,634.6 774.0,633.8 775.2,588.4 776.3,621.8 777.5,642.0 778.6,640.2 779.8,588.3 780.9,625.2 782.0,637.2 783.2,638.1 784.3,588.1 785.5,615.3 786.6,640.4 787.8,637.0 788.9,553.3 790.1,624.8 791.2,636.5 792.3,634.2 793.5,596.3 794.6,617.7 795.8,638.1 796.9,640.6 798.1,595.5 799.2,605.5 800.3,641.5 801.5,634.9 802.6,570.5 803.8,618.1 804.9,640.1 806.1,636.7 807.2,574.8 808.3,609.8 809.5,636.1 810.6,634.1 811.8,595.8 812.9,623.4 814.1,640.2 815.2,636.0 816.3,570.8 817.5,606.2 818.6,638.4 819.8,638.3 820.9,587.9 822.1,623.6 823.2,642.0 824.4,635.4 825.5,568.6 826.6,624.2 827.8,634.4 828.9,636.6 830.1,585.3 831.2,613.0 832.4,635.8 833.5,637.2 834.6,554.1 835.8,624.6 836.9,638.8 838.1,634.2 839.2,593.2 840.4,605.6 841.5,637.6 842.6,634.6 843.8,593.8 844.9,622.2 846.1,635.7 847.2,638.4 848.4,584.0 849.5,607.6 850.7,634.5 851.8,637.2 852.9,583.0 854.1,615.4 855.2,640.7 856.4,637.6 857.5,592.7 858.7,604.8 859.8,634.6 860.9,635.9 862.1,582.7 863.2,623.4 864.4,640.8 865.5,634.7 866.7,572.2 867.8,609.0 868.9,636.3 870.1,635.3 871.2,578.0 872.4,617.7 873.5,636.9 874.7,638.5 875.8,583.1 876.9,611.0 878.1,640.6 879.2,542.7 880.4,578.4 881.5,625.0 882.7,638.4 883.8,638.8 885.0,577.8 886.1,608.4 887.2,637.5 888.4,634.5 889.5,587.0 890.7,610.0 891.8,635.8 893.0,638.0 894.1,572.9 895.2,611.0 896.4,634.5 897.5,633.3 898.7,582.2 899.8,621.8 901.0,635.7 902.1,633.5 903.2,583.3 904.4,610.4 905.5,636.7 906.7,639.4 907.8,574.7 909.0,611.5 910.1,639.5 911.2,635.9 912.4,574.9 913.5,610.4 914.7,643.1 915.8,639.5 917.0,584.3 918.1,620.7 919.3,637.1 920.4,635.8 921.5,595.7 922.7,620.6 923.8,642.8 925.0,639.7 926.1,587.9 927.3,621.2 928.4,643.0 929.5,637.1 930.7,586.1 931.8,613.1 933.0,641.2 934.1,555.6 935.3,596.8 936.4,619.5 937.5,639.6 938.7,639.8 939.8,573.3 941.0,624.5 942.1,637.8 943.3,640.0 944.4,581.4 945.6,613.3 946.7,563.3 947.8,634.4 949.0,585.0 950.1,612.0 951.3,640.0 952.4,639.6 953.6,579.9 954.7,605.5 955.8,634.6 957.0,636.0 958.1,586.9 959.3,625.2 960.4,642.3 961.6,636.3 962.7,579.4 963.8,612.2 965.0,635.3 966.1,637.8 967.3,584.6 968.4,619.2 969.6,634.5 970.7,637.8 971.8,569.6 973.0,612.9 974.1,641.0 975.3,633.1 976.4,582.8 977.6,618.7 978.7,634.4 979.9,636.9 981.0,588.7 982.1,622.7 983.3,637.7 984.4,637.3 985.6,588.5 986.7,608.2 987.9,643.2 989.0,636.6 990.1,589.1 991.3,609.1 992.4,641.1 993.6,638.6 994.7,592.5 995.9,619.2 997.0,637.8 998.1,637.0 999.3,578.6 1000.4,609.9 1001.6,642.2 1002.7,634.8 1003.9,588.3 1005.0,618.3 1006.1,640.6 1007.3,636.6 1008.4,583.7 1009.6,609.9 1010.7,638.0 1011.9,640.4 1013.0,589.7 1014.2,606.3 1015.3,635.3 1016.4,636.5 1017.6,596.4 1018.7,616.4 1019.9,638.1 1021.0,635.2 1022.2,578.9 1023.3,606.4 L1023.3,682 L738.6,682 Z" fill="#fefdf8" stroke="none"/>
<path d="M738.6,579.2 739.7,608.8 740.9,634.8 742.0,635.0 743.2,559.9 744.3,605.8 745.5,637.4 746.6,633.7 747.7,593.6 748.9,620.2 750.0,638.4 751.2,636.3 752.3,596.5 753.5,619.5 754.6,635.0 755.8,634.8 756.9,592.3 758.0,622.4 759.2,637.7 760.3,639.7 761.5,596.8 762.6,620.9 763.8,641.4 764.9,633.1 766.0,572.1 767.2,605.4 768.3,638.4 769.5,635.5 770.6,591.0 771.8,611.0 772.9,634.6 774.0,633.8 775.2,588.4 776.3,621.8 777.5,642.0 778.6,640.2 779.8,588.3 780.9,625.2 782.0,637.2 783.2,638.1 784.3,588.1 785.5,615.3 786.6,640.4 787.8,637.0 788.9,553.3 790.1,624.8 791.2,636.5 792.3,634.2 793.5,596.3 794.6,617.7 795.8,638.1 796.9,640.6 798.1,595.5 799.2,605.5 800.3,641.5 801.5,634.9 802.6,570.5 803.8,618.1 804.9,640.1 806.1,636.7 807.2,574.8 808.3,609.8 809.5,636.1 810.6,634.1 811.8,595.8 812.9,623.4 814.1,640.2 815.2,636.0 816.3,570.8 817.5,606.2 818.6,638.4 819.8,638.3 820.9,587.9 822.1,623.6 823.2,642.0 824.4,635.4 825.5,568.6 826.6,624.2 827.8,634.4 828.9,636.6 830.1,585.3 831.2,613.0 832.4,635.8 833.5,637.2 834.6,554.1 835.8,624.6 836.9,638.8 838.1,634.2 839.2,593.2 840.4,605.6 841.5,637.6 842.6,634.6 843.8,593.8 844.9,622.2 846.1,635.7 847.2,638.4 848.4,584.0 849.5,607.6 850.7,634.5 851.8,637.2 852.9,583.0 854.1,615.4 855.2,640.7 856.4,637.6 857.5,592.7 858.7,604.8 859.8,634.6 860.9,635.9 862.1,582.7 863.2,623.4 864.4,640.8 865.5,634.7 866.7,572.2 867.8,609.0 868.9,636.3 870.1,635.3 871.2,578.0 872.4,617.7 873.5,636.9 874.7,638.5 875.8,583.1 876.9,611.0 878.1,640.6 879.2,542.7 880.4,578.4 881.5,625.0 882.7,638.4 883.8,638.8 885.0,577.8 886.1,608.4 887.2,637.5 888.4,634.5 889.5,587.0 890.7,610.0 891.8,635.8 893.0,638.0 894.1,572.9 895.2,611.0 896.4,634.5 897.5,633.3 898.7,582.2 899.8,621.8 901.0,635.7 902.1,633.5 903.2,583.3 904.4,610.4 905.5,636.7 906.7,639.4 907.8,574.7 909.0,611.5 910.1,639.5 911.2,635.9 912.4,574.9 913.5,610.4 914.7,643.1 915.8,639.5 917.0,584.3 918.1,620.7 919.3,637.1 920.4,635.8 921.5,595.7 922.7,620.6 923.8,642.8 925.0,639.7 926.1,587.9 927.3,621.2 928.4,643.0 929.5,637.1 930.7,586.1 931.8,613.1 933.0,641.2 934.1,555.6 935.3,596.8 936.4,619.5 937.5,639.6 938.7,639.8 939.8,573.3 941.0,624.5 942.1,637.8 943.3,640.0 944.4,581.4 945.6,613.3 946.7,563.3 947.8,634.4 949.0,585.0 950.1,612.0 951.3,640.0 952.4,639.6 953.6,579.9 954.7,605.5 955.8,634.6 957.0,636.0 958.1,586.9 959.3,625.2 960.4,642.3 961.6,636.3 962.7,579.4 963.8,612.2 965.0,635.3 966.1,637.8 967.3,584.6 968.4,619.2 969.6,634.5 970.7,637.8 971.8,569.6 973.0,612.9 974.1,641.0 975.3,633.1 976.4,582.8 977.6,618.7 978.7,634.4 979.9,636.9 981.0,588.7 982.1,622.7 983.3,637.7 984.4,637.3 985.6,588.5 986.7,608.2 987.9,643.2 989.0,636.6 990.1,589.1 991.3,609.1 992.4,641.1 993.6,638.6 994.7,592.5 995.9,619.2 997.0,637.8 998.1,637.0 999.3,578.6 1000.4,609.9 1001.6,642.2 1002.7,634.8 1003.9,588.3 1005.0,618.3 1006.1,640.6 1007.3,636.6 1008.4,583.7 1009.6,609.9 1010.7,638.0 1011.9,640.4 1013.0,589.7 1014.2,606.3 1015.3,635.3 1016.4,636.5 1017.6,596.4 1018.7,616.4 1019.9,638.1 1021.0,635.2 1022.2,578.9 1023.3,606.4" fill="none" stroke="#e0b400" stroke-width="1.0" stroke-linejoin="round"/>
<path d="M738.6,674.0 739.7,676.6 740.9,676.6 742.0,674.0 743.2,676.6 744.3,676.6 745.5,674.0 746.6,676.6 747.7,676.6 748.9,674.0 750.0,676.6 751.2,676.6 752.3,674.0 753.5,676.6 754.6,676.6 755.8,674.0 756.9,676.6 758.0,676.6 759.2,674.0 760.3,676.6 761.5,676.6 762.6,674.0 763.8,676.6 764.9,676.6 766.0,674.0 767.2,676.6 768.3,676.6 769.5,674.0 770.6,676.6 771.8,676.6 772.9,674.0 774.0,676.6 775.2,676.6 776.3,674.0 777.5,676.6 778.6,676.6 779.8,674.0 780.9,676.6 782.0,676.6 783.2,674.0 784.3,676.6 785.5,676.6 786.6,674.0 787.8,676.6 788.9,676.6 790.1,674.0 791.2,676.6 792.3,676.6 793.5,674.0 794.6,676.6 795.8,676.6 796.9,674.0 798.1,676.6 799.2,676.6 800.3,674.0 801.5,676.6 802.6,676.6 803.8,674.0 804.9,676.6 806.1,676.6 807.2,674.0 808.3,676.6 809.5,676.6 810.6,674.0 811.8,676.6 812.9,676.6 814.1,674.0 815.2,676.6 816.3,676.6 817.5,674.0 818.6,676.6 819.8,676.6 820.9,674.0 822.1,676.6 823.2,676.6 824.4,674.0 825.5,676.6 826.6,676.6 827.8,674.0 828.9,676.6 830.1,676.6 831.2,674.0 832.4,676.6 833.5,676.6 834.6,674.0 835.8,676.6 836.9,676.6 838.1,674.0 839.2,676.6 840.4,676.6 841.5,674.0 842.6,676.6 843.8,676.6 844.9,674.0 846.1,676.6 847.2,676.6 848.4,674.0 849.5,676.6 850.7,676.6 851.8,674.0 852.9,676.6 854.1,676.6 855.2,671.2 856.4,673.7 857.5,673.7 858.7,671.2 859.8,673.7 860.9,673.7 862.1,671.2 863.2,673.7 864.4,673.7 865.5,671.2 866.7,673.7 867.8,673.7 868.9,671.2 870.1,673.7 871.2,673.7 872.4,671.2 873.5,673.7 874.7,673.7 875.8,671.2 876.9,673.7 878.1,673.7 879.2,671.2 880.4,673.7 881.5,673.7 882.7,671.2 883.8,673.7 885.0,673.7 886.1,671.2 887.2,673.7 888.4,673.7 889.5,671.2 890.7,673.7 891.8,673.7 893.0,671.2 894.1,673.7 895.2,673.7 896.4,671.2 897.5,673.7 898.7,673.7 899.8,671.2 901.0,673.7 902.1,673.7 903.2,671.2 904.4,673.7 905.5,673.7 906.7,671.2 907.8,673.7 909.0,673.7 910.1,671.2 911.2,673.7 912.4,673.7 913.5,671.2 914.7,673.7 915.8,673.7 917.0,671.2 918.1,673.7 919.3,673.7 920.4,671.2 921.5,673.7 922.7,673.7 923.8,671.2 925.0,673.7 926.1,673.7 927.3,671.2 928.4,673.7 929.5,673.7 930.7,671.2 931.8,673.7 933.0,673.7 934.1,671.2 935.3,673.7 936.4,673.7 937.5,671.2 938.7,673.7 939.8,673.7 941.0,671.2 942.1,673.7 943.3,676.6 944.4,674.0 945.6,676.6 946.7,676.6 947.8,674.0 949.0,676.6 950.1,676.6 951.3,674.0 952.4,676.6 953.6,676.6 954.7,674.0 955.8,676.6 957.0,676.6 958.1,674.0 959.3,676.6 960.4,676.6 961.6,674.0 962.7,676.6 963.8,676.6 965.0,674.0 966.1,676.6 967.3,676.6 968.4,674.0 969.6,676.6 970.7,676.6 971.8,674.0 973.0,676.6 974.1,676.6 975.3,674.0 976.4,676.6 977.6,676.6 978.7,674.0 979.9,676.6 981.0,676.6 982.1,674.0 983.3,676.6 984.4,676.6 985.6,674.0 986.7,676.6 987.9,676.6 989.0,674.0 990.1,676.6 991.3,676.6 992.4,674.0 993.6,676.6 994.7,676.6 995.9,674.0 997.0,676.6 998.1,676.6 999.3,674.0 1000.4,676.6 1001.6,676.6 1002.7,674.0 1003.9,676.6 1005.0,676.6 1006.1,674.0 1007.3,676.6 1008.4,676.6 1009.6,674.0 1010.7,676.6 1011.9,676.6 1013.0,674.0 1014.2,676.6 1015.3,676.6 1016.4,674.0 1017.6,676.6 1018.7,676.6 1019.9,674.0 1021.0,676.6 1022.2,676.6 1023.3,674.0" fill="none" stroke="#56a64b" stroke-width="1.0" stroke-linejoin="round"/>
<rect x="717" y="716" width="14" height="4" rx="2" fill="#56a64b"/>
<text x="738" y="722" font-size="12.5" fill="#24292e" text-anchor="start" font-weight="normal" letter-spacing="0.98" >avg</text>
<rect x="771" y="716" width="14" height="4" rx="2" fill="#e0b400"/>
<text x="792" y="722" font-size="12.5" fill="#24292e" text-anchor="start" font-weight="normal" letter-spacing="0.98" >highest</text>
<rect x="743" y="985.8" width="280.0" height="1" fill="#e6e7e8"/>
<text x="738.5" y="990.55" font-size="12" fill="#24292e" text-anchor="end" font-weight="normal" letter-spacing="0.9" >0</text>
<rect x="743" y="930.1" width="280.0" height="1" fill="#e6e7e8"/>
<text x="738.5" y="934.925" font-size="12" fill="#24292e" text-anchor="end" font-weight="normal" letter-spacing="0.9" >50</text>
<rect x="743" y="874.5" width="280.0" height="1" fill="#e6e7e8"/>
<text x="738.5" y="879.3" font-size="12" fill="#24292e" text-anchor="end" font-weight="normal" letter-spacing="0.9" >100</text>
<rect x="769.9" y="831.6" width="1" height="158.6" fill="#e6e7e8"/>
<text x="770.6" y="1005.65" font-size="12" fill="#24292e" text-anchor="middle" font-weight="normal" letter-spacing="0.35" >15:30</text>
<rect x="839.8" y="831.6" width="1" height="158.6" fill="#e6e7e8"/>
<text x="840.5" y="1005.65" font-size="12" fill="#24292e" text-anchor="middle" font-weight="normal" letter-spacing="0.35" >15:45</text>
<rect x="909.7" y="831.6" width="1" height="158.6" fill="#e6e7e8"/>
<text x="910.4000000000001" y="1005.65" font-size="12" fill="#24292e" text-anchor="middle" font-weight="normal" letter-spacing="0.35" >16:00</text>
<rect x="979.6" y="831.6" width="1" height="158.6" fill="#e6e7e8"/>
<text x="980.3000000000001" y="1005.65" font-size="12" fill="#24292e" text-anchor="middle" font-weight="normal" letter-spacing="0.35" >16:15</text>
<path d="M743.0,950.7 744.0,953.4 745.1,933.5 746.1,924.8 747.2,953.3 748.2,915.1 749.2,968.5 750.3,916.2 751.3,945.3 752.4,962.9 753.4,940.4 754.4,917.1 755.5,934.3 756.5,942.4 757.6,939.6 758.6,953.5 759.7,930.5 760.7,956.5 761.7,970.9 762.8,915.0 763.8,942.0 764.9,960.3 765.9,938.5 766.9,956.9 768.0,939.2 769.0,964.5 770.1,945.1 771.1,942.2 772.1,928.7 773.2,942.6 774.2,948.5 775.3,964.4 776.3,969.2 777.3,958.5 778.4,953.2 779.4,940.0 780.5,916.2 781.5,927.3 782.6,916.2 783.6,954.8 784.6,946.9 785.7,920.0 786.7,954.5 787.8,943.5 788.8,944.3 789.8,962.7 790.9,954.4 791.9,943.1 793.0,940.7 794.0,960.4 795.0,945.0 796.1,965.0 797.1,967.1 798.2,964.5 799.2,936.1 800.2,924.6 801.3,931.0 802.3,951.6 803.4,939.0 804.4,940.4 805.5,963.6 806.5,940.1 807.5,928.6 808.6,964.3 809.6,965.3 810.7,954.4 811.7,967.4 812.7,959.6 813.8,935.8 814.8,955.9 815.9,929.4 816.9,953.1 817.9,934.3 819.0,948.4 820.0,936.9 821.1,955.9 822.1,968.7 823.1,957.9 824.2,940.3 825.2,941.0 826.3,952.2 827.3,960.7 828.4,936.9 829.4,957.6 830.4,951.0 831.5,950.3 832.5,930.0 833.6,949.7 834.6,944.8 835.6,918.0 836.7,965.7 837.7,966.3 838.8,952.6 839.8,942.3 840.8,934.0 841.9,964.9 842.9,940.4 844.0,943.7 845.0,954.6 846.0,942.2 847.1,917.9 848.1,969.6 849.2,946.1 850.2,958.3 851.3,922.7 852.3,971.4 853.3,941.9 854.4,962.0 855.4,940.7 856.5,946.8 857.5,968.3 858.5,952.0 859.6,936.2 860.6,943.5 861.7,937.0 862.7,942.1 863.7,929.2 864.8,968.3 865.8,938.7 866.9,949.0 867.9,940.8 868.9,924.0 870.0,935.3 871.0,964.0 872.1,940.7 873.1,924.0 874.2,954.4 875.2,963.4 876.2,931.2 877.3,959.8 878.3,934.5 879.4,959.5 880.4,942.0 881.4,917.8 882.5,912.8 883.5,939.7 884.6,955.0 885.6,950.8 886.6,949.0 887.7,924.9 888.7,941.8 889.8,949.4 890.8,932.0 891.8,959.5 892.9,930.3 893.9,942.4 895.0,938.2 896.0,959.2 897.1,949.3 898.1,947.2 899.1,946.2 900.2,964.8 901.2,944.1 902.3,919.3 903.3,943.3 904.3,956.2 905.4,945.3 906.4,949.3 907.5,965.3 908.5,954.1 909.5,964.0 910.6,855.0 911.6,969.9 912.7,962.2 913.7,949.2 914.7,963.1 915.8,949.7 916.8,964.0 917.9,952.5 918.9,944.4 920.0,954.9 921.0,941.8 922.0,954.2 923.1,945.6 924.1,930.4 925.2,945.5 926.2,843.9 927.2,948.7 928.3,953.7 929.3,957.6 930.4,951.1 931.4,948.6 932.4,945.1 933.5,947.8 934.5,940.2 935.6,905.0 936.6,950.1 937.6,927.3 938.7,946.1 939.7,948.9 940.8,941.0 941.8,950.4 942.9,942.3 943.9,943.6 944.9,934.5 946.0,942.8 947.0,946.4 948.1,961.8 949.1,947.8 950.1,949.9 951.2,931.8 952.2,940.1 953.3,941.4 954.3,954.7 955.3,951.6 956.4,966.1 957.4,920.7 958.5,952.6 959.5,936.1 960.5,946.8 961.6,936.4 962.6,959.4 963.7,936.4 964.7,957.0 965.8,938.2 966.8,925.3 967.8,963.7 968.9,961.6 969.9,932.4 971.0,961.7 972.0,930.3 973.0,960.4 974.1,932.3 975.1,959.7 976.2,943.5 977.2,964.0 978.2,942.8 979.3,961.2 980.3,931.6 981.4,947.1 982.4,872.8 983.4,968.7 984.5,951.3 985.5,964.6 986.6,943.3 987.6,950.0 988.7,935.1 989.7,962.7 990.7,950.8 991.8,959.2 992.8,971.0 993.9,960.8 994.9,852.8 995.9,953.6 997.0,946.7 998.0,952.0 999.1,930.3 1000.1,940.1 1001.1,897.2 1002.2,946.2 1003.2,948.5 1004.3,868.3 1005.3,947.3 1006.3,951.9 1007.4,940.3 1008.4,959.9 1009.5,936.8 1010.5,911.7 1011.6,945.0 1012.6,939.7 1013.6,924.0 1014.7,925.0 1015.7,965.0 1016.8,940.7 1017.8,946.2 1018.8,945.6 1019.9,935.8 1020.9,940.7 1022.0,932.2 1023.0,955.6 L1023.0,986.25 L743.0,986.25 Z" fill="#fefdf8" stroke="none"/>
<path d="M743.0,950.7 744.0,953.4 745.1,933.5 746.1,924.8 747.2,953.3 748.2,915.1 749.2,968.5 750.3,916.2 751.3,945.3 752.4,962.9 753.4,940.4 754.4,917.1 755.5,934.3 756.5,942.4 757.6,939.6 758.6,953.5 759.7,930.5 760.7,956.5 761.7,970.9 762.8,915.0 763.8,942.0 764.9,960.3 765.9,938.5 766.9,956.9 768.0,939.2 769.0,964.5 770.1,945.1 771.1,942.2 772.1,928.7 773.2,942.6 774.2,948.5 775.3,964.4 776.3,969.2 777.3,958.5 778.4,953.2 779.4,940.0 780.5,916.2 781.5,927.3 782.6,916.2 783.6,954.8 784.6,946.9 785.7,920.0 786.7,954.5 787.8,943.5 788.8,944.3 789.8,962.7 790.9,954.4 791.9,943.1 793.0,940.7 794.0,960.4 795.0,945.0 796.1,965.0 797.1,967.1 798.2,964.5 799.2,936.1 800.2,924.6 801.3,931.0 802.3,951.6 803.4,939.0 804.4,940.4 805.5,963.6 806.5,940.1 807.5,928.6 808.6,964.3 809.6,965.3 810.7,954.4 811.7,967.4 812.7,959.6 813.8,935.8 814.8,955.9 815.9,929.4 816.9,953.1 817.9,934.3 819.0,948.4 820.0,936.9 821.1,955.9 822.1,968.7 823.1,957.9 824.2,940.3 825.2,941.0 826.3,952.2 827.3,960.7 828.4,936.9 829.4,957.6 830.4,951.0 831.5,950.3 832.5,930.0 833.6,949.7 834.6,944.8 835.6,918.0 836.7,965.7 837.7,966.3 838.8,952.6 839.8,942.3 840.8,934.0 841.9,964.9 842.9,940.4 844.0,943.7 845.0,954.6 846.0,942.2 847.1,917.9 848.1,969.6 849.2,946.1 850.2,958.3 851.3,922.7 852.3,971.4 853.3,941.9 854.4,962.0 855.4,940.7 856.5,946.8 857.5,968.3 858.5,952.0 859.6,936.2 860.6,943.5 861.7,937.0 862.7,942.1 863.7,929.2 864.8,968.3 865.8,938.7 866.9,949.0 867.9,940.8 868.9,924.0 870.0,935.3 871.0,964.0 872.1,940.7 873.1,924.0 874.2,954.4 875.2,963.4 876.2,931.2 877.3,959.8 878.3,934.5 879.4,959.5 880.4,942.0 881.4,917.8 882.5,912.8 883.5,939.7 884.6,955.0 885.6,950.8 886.6,949.0 887.7,924.9 888.7,941.8 889.8,949.4 890.8,932.0 891.8,959.5 892.9,930.3 893.9,942.4 895.0,938.2 896.0,959.2 897.1,949.3 898.1,947.2 899.1,946.2 900.2,964.8 901.2,944.1 902.3,919.3 903.3,943.3 904.3,956.2 905.4,945.3 906.4,949.3 907.5,965.3 908.5,954.1 909.5,964.0 910.6,855.0 911.6,969.9 912.7,962.2 913.7,949.2 914.7,963.1 915.8,949.7 916.8,964.0 917.9,952.5 918.9,944.4 920.0,954.9 921.0,941.8 922.0,954.2 923.1,945.6 924.1,930.4 925.2,945.5 926.2,843.9 927.2,948.7 928.3,953.7 929.3,957.6 930.4,951.1 931.4,948.6 932.4,945.1 933.5,947.8 934.5,940.2 935.6,905.0 936.6,950.1 937.6,927.3 938.7,946.1 939.7,948.9 940.8,941.0 941.8,950.4 942.9,942.3 943.9,943.6 944.9,934.5 946.0,942.8 947.0,946.4 948.1,961.8 949.1,947.8 950.1,949.9 951.2,931.8 952.2,940.1 953.3,941.4 954.3,954.7 955.3,951.6 956.4,966.1 957.4,920.7 958.5,952.6 959.5,936.1 960.5,946.8 961.6,936.4 962.6,959.4 963.7,936.4 964.7,957.0 965.8,938.2 966.8,925.3 967.8,963.7 968.9,961.6 969.9,932.4 971.0,961.7 972.0,930.3 973.0,960.4 974.1,932.3 975.1,959.7 976.2,943.5 977.2,964.0 978.2,942.8 979.3,961.2 980.3,931.6 981.4,947.1 982.4,872.8 983.4,968.7 984.5,951.3 985.5,964.6 986.6,943.3 987.6,950.0 988.7,935.1 989.7,962.7 990.7,950.8 991.8,959.2 992.8,971.0 993.9,960.8 994.9,852.8 995.9,953.6 997.0,946.7 998.0,952.0 999.1,930.3 1000.1,940.1 1001.1,897.2 1002.2,946.2 1003.2,948.5 1004.3,868.3 1005.3,947.3 1006.3,951.9 1007.4,940.3 1008.4,959.9 1009.5,936.8 1010.5,911.7 1011.6,945.0 1012.6,939.7 1013.6,924.0 1014.7,925.0 1015.7,965.0 1016.8,940.7 1017.8,946.2 1018.8,945.6 1019.9,935.8 1020.9,940.7 1022.0,932.2 1023.0,955.6" fill="none" stroke="#e0b400" stroke-width="1.0" stroke-linejoin="round"/>
<path d="M743.0,985.9 750.2,985.9 757.4,985.9 764.5,985.9 771.7,985.9 778.9,985.9 786.1,985.9 793.3,985.9 800.4,985.9 807.6,985.9 814.8,985.9 822.0,985.9 829.2,985.9 836.3,985.9 843.5,985.9 850.7,985.9 857.9,985.9 865.1,985.9 872.2,985.9 879.4,985.9 886.6,985.9 893.8,985.9 900.9,985.9 908.1,985.9 915.3,985.9 922.5,985.9 929.7,985.9 936.8,985.9 944.0,985.9 951.2,985.9 958.4,985.9 965.6,985.9 972.7,985.9 979.9,985.9 987.1,985.9 994.3,985.9 1001.5,985.9 1008.6,985.9 1015.8,985.9 1023.0,985.9" fill="none" stroke="#56a64b" stroke-width="1.0" stroke-linejoin="round"/>
<rect x="1089.1" y="377.7" width="277.6" height="1" fill="#e6e7e8"/>
<text x="1084.6" y="382.5" font-size="12" fill="#24292e" text-anchor="end" font-weight="normal" letter-spacing="0.9" >0</text>
<rect x="1089.1" y="340.6" width="277.6" height="1" fill="#e6e7e8"/>
<text x="1084.6" y="345.45" font-size="12" fill="#24292e" text-anchor="end" font-weight="normal" letter-spacing="0.9" >50</text>
<rect x="1089.1" y="303.6" width="277.6" height="1" fill="#e6e7e8"/>
<text x="1084.6" y="308.40000000000003" font-size="12" fill="#24292e" text-anchor="end" font-weight="normal" letter-spacing="0.9" >100</text>
<rect x="1089.1" y="266.5" width="277.6" height="1" fill="#e6e7e8"/>
<text x="1084.6" y="271.34999999999997" font-size="12" fill="#24292e" text-anchor="end" font-weight="normal" letter-spacing="0.9" >150</text>
<rect x="1089.1" y="229.5" width="277.6" height="1" fill="#e6e7e8"/>
<text x="1084.6" y="234.3" font-size="12" fill="#24292e" text-anchor="end" font-weight="normal" letter-spacing="0.9" >200</text>
<rect x="1115.9" y="223.6" width="1" height="158.6" fill="#e6e7e8"/>
<text x="1116.6000000000001" y="397.59999999999997" font-size="12" fill="#24292e" text-anchor="middle" font-weight="normal" letter-spacing="0.35" >15:30</text>
<rect x="1185.2" y="223.6" width="1" height="158.6" fill="#e6e7e8"/>
<text x="1185.9" y="397.59999999999997" font-size="12" fill="#24292e" text-anchor="middle" font-weight="normal" letter-spacing="0.35" >15:45</text>
<rect x="1254.5" y="223.6" width="1" height="158.6" fill="#e6e7e8"/>
<text x="1255.2" y="397.59999999999997" font-size="12" fill="#24292e" text-anchor="middle" font-weight="normal" letter-spacing="0.35" >16:00</text>
<rect x="1323.8" y="223.6" width="1" height="158.6" fill="#e6e7e8"/>
<text x="1324.5" y="397.59999999999997" font-size="12" fill="#24292e" text-anchor="middle" font-weight="normal" letter-spacing="0.35" >16:15</text>
<path d="M1089.1,260.8 1090.4,260.8 1091.7,260.7 1093.0,260.6 1094.3,261.2 1095.6,261.4 1096.9,260.5 1098.2,254.6 1099.5,252.4 1100.8,251.6 1102.1,251.4 1103.4,251.6 1104.7,251.0 1106.0,250.8 1107.3,260.2 1108.6,267.6 1110.0,271.5 1111.3,266.4 1112.6,264.3 1113.9,264.7 1115.2,264.8 1116.5,264.5 1117.8,264.4 1119.1,263.7 1120.4,267.2 1121.7,271.7 1123.0,271.4 1124.3,271.5 1125.6,271.1 1126.9,271.2 1128.2,271.6 1129.5,271.8 1130.8,271.2 1132.1,271.1 1133.4,271.9 1134.7,271.3 1136.0,271.2 1137.3,271.4 1138.6,271.7 1139.9,271.2 1141.2,271.3 1142.5,271.8 1143.8,266.3 1145.1,261.3 1146.4,259.3 1147.7,257.4 1149.1,255.7 1150.4,255.4 1151.7,255.3 1153.0,255.2 1154.3,255.2 1155.6,255.3 1156.9,255.4 1158.2,257.3 1159.5,260.6 1160.8,263.0 1162.1,264.2 1163.4,266.0 1164.7,266.4 1166.0,265.6 1167.3,264.2 1168.6,262.2 1169.9,261.2 1171.2,259.8 1172.5,259.6 1173.8,261.2 1175.1,262.7 1176.4,264.6 1177.7,263.3 1179.0,263.0 1180.3,261.8 1181.6,260.5 1182.9,259.8 1184.2,259.4 1185.5,259.7 1186.8,260.2 1188.1,260.3 1189.5,259.6 1190.8,260.4 1192.1,260.4 1193.4,260.3 1194.7,260.1 1196.0,260.0 1197.3,261.1 1198.6,262.6 1199.9,262.9 1201.2,263.0 1202.5,262.5 1203.8,261.8 1205.1,261.4 1206.4,261.5 1207.7,261.1 1209.0,262.5 1210.3,269.6 1211.6,268.2 1212.9,266.5 1214.2,265.3 1215.5,265.7 1216.8,265.2 1218.1,264.9 1219.4,265.4 1220.7,265.6 1222.0,265.2 1223.3,265.2 1224.6,265.2 1225.9,265.3 1227.2,263.7 1228.6,261.1 1229.9,259.9 1231.2,257.4 1232.5,256.9 1233.8,256.8 1235.1,256.1 1236.4,256.5 1237.7,256.5 1239.0,256.1 1240.3,255.8 1241.6,256.7 1242.9,258.6 1244.2,261.3 1245.5,263.5 1246.8,265.6 1248.1,268.1 1249.4,269.5 1250.7,267.2 1252.0,265.2 1253.3,265.5 1254.6,265.2 1255.9,265.5 1257.2,265.7 1258.5,266.2 1259.8,266.6 1261.1,267.3 1262.4,267.2 1263.7,268.4 1265.0,268.6 1266.3,269.4 1267.7,269.4 1269.0,269.4 1270.3,269.3 1271.6,269.1 1272.9,269.2 1274.2,269.5 1275.5,269.0 1276.8,269.1 1278.1,266.4 1279.4,259.9 1280.7,257.3 1282.0,257.1 1283.3,257.6 1284.6,257.7 1285.9,257.1 1287.2,257.5 1288.5,258.5 1289.8,269.2 1291.1,257.8 1292.4,246.2 1293.7,245.4 1295.0,244.8 1296.3,244.0 1297.6,243.8 1298.9,242.9 1300.2,243.1 1301.5,251.7 1302.8,263.2 1304.1,266.6 1305.4,265.8 1306.7,264.7 1308.1,264.6 1309.4,264.4 1310.7,264.7 1312.0,264.5 1313.3,264.8 1314.6,264.8 1315.9,267.1 1317.2,270.3 1318.5,269.4 1319.8,268.5 1321.1,268.3 1322.4,267.2 1323.7,266.9 1325.0,266.6 1326.3,265.8 1327.6,265.7 1328.9,261.4 1330.2,257.2 1331.5,257.0 1332.8,256.7 1334.1,256.5 1335.4,255.6 1336.7,255.6 1338.0,255.5 1339.3,255.7 1340.6,255.7 1341.9,256.2 1343.2,256.6 1344.5,256.6 1345.8,257.4 1347.2,260.0 1348.5,264.4 1349.8,267.1 1351.1,267.5 1352.4,267.5 1353.7,267.3 1355.0,267.9 1356.3,267.4 1357.6,267.3 1358.9,265.8 1360.2,265.3 1361.5,265.0 1362.8,264.4 1364.1,264.6 1365.4,265.2 1366.7,265.1 L1366.7,378.2 L1089.1,378.2 Z" fill="#fdfdf9" stroke="none"/>
<path d="M1089.1,260.8 1090.4,260.8 1091.7,260.7 1093.0,260.6 1094.3,261.2 1095.6,261.4 1096.9,260.5 1098.2,254.6 1099.5,252.4 1100.8,251.6 1102.1,251.4 1103.4,251.6 1104.7,251.0 1106.0,250.8 1107.3,260.2 1108.6,267.6 1110.0,271.5 1111.3,266.4 1112.6,264.3 1113.9,264.7 1115.2,264.8 1116.5,264.5 1117.8,264.4 1119.1,263.7 1120.4,267.2 1121.7,271.7 1123.0,271.4 1124.3,271.5 1125.6,271.1 1126.9,271.2 1128.2,271.6 1129.5,271.8 1130.8,271.2 1132.1,271.1 1133.4,271.9 1134.7,271.3 1136.0,271.2 1137.3,271.4 1138.6,271.7 1139.9,271.2 1141.2,271.3 1142.5,271.8 1143.8,266.3 1145.1,261.3 1146.4,259.3 1147.7,257.4 1149.1,255.7 1150.4,255.4 1151.7,255.3 1153.0,255.2 1154.3,255.2 1155.6,255.3 1156.9,255.4 1158.2,257.3 1159.5,260.6 1160.8,263.0 1162.1,264.2 1163.4,266.0 1164.7,266.4 1166.0,265.6 1167.3,264.2 1168.6,262.2 1169.9,261.2 1171.2,259.8 1172.5,259.6 1173.8,261.2 1175.1,262.7 1176.4,264.6 1177.7,263.3 1179.0,263.0 1180.3,261.8 1181.6,260.5 1182.9,259.8 1184.2,259.4 1185.5,259.7 1186.8,260.2 1188.1,260.3 1189.5,259.6 1190.8,260.4 1192.1,260.4 1193.4,260.3 1194.7,260.1 1196.0,260.0 1197.3,261.1 1198.6,262.6 1199.9,262.9 1201.2,263.0 1202.5,262.5 1203.8,261.8 1205.1,261.4 1206.4,261.5 1207.7,261.1 1209.0,262.5 1210.3,269.6 1211.6,268.2 1212.9,266.5 1214.2,265.3 1215.5,265.7 1216.8,265.2 1218.1,264.9 1219.4,265.4 1220.7,265.6 1222.0,265.2 1223.3,265.2 1224.6,265.2 1225.9,265.3 1227.2,263.7 1228.6,261.1 1229.9,259.9 1231.2,257.4 1232.5,256.9 1233.8,256.8 1235.1,256.1 1236.4,256.5 1237.7,256.5 1239.0,256.1 1240.3,255.8 1241.6,256.7 1242.9,258.6 1244.2,261.3 1245.5,263.5 1246.8,265.6 1248.1,268.1 1249.4,269.5 1250.7,267.2 1252.0,265.2 1253.3,265.5 1254.6,265.2 1255.9,265.5 1257.2,265.7 1258.5,266.2 1259.8,266.6 1261.1,267.3 1262.4,267.2 1263.7,268.4 1265.0,268.6 1266.3,269.4 1267.7,269.4 1269.0,269.4 1270.3,269.3 1271.6,269.1 1272.9,269.2 1274.2,269.5 1275.5,269.0 1276.8,269.1 1278.1,266.4 1279.4,259.9 1280.7,257.3 1282.0,257.1 1283.3,257.6 1284.6,257.7 1285.9,257.1 1287.2,257.5 1288.5,258.5 1289.8,269.2 1291.1,257.8 1292.4,246.2 1293.7,245.4 1295.0,244.8 1296.3,244.0 1297.6,243.8 1298.9,242.9 1300.2,243.1 1301.5,251.7 1302.8,263.2 1304.1,266.6 1305.4,265.8 1306.7,264.7 1308.1,264.6 1309.4,264.4 1310.7,264.7 1312.0,264.5 1313.3,264.8 1314.6,264.8 1315.9,267.1 1317.2,270.3 1318.5,269.4 1319.8,268.5 1321.1,268.3 1322.4,267.2 1323.7,266.9 1325.0,266.6 1326.3,265.8 1327.6,265.7 1328.9,261.4 1330.2,257.2 1331.5,257.0 1332.8,256.7 1334.1,256.5 1335.4,255.6 1336.7,255.6 1338.0,255.5 1339.3,255.7 1340.6,255.7 1341.9,256.2 1343.2,256.6 1344.5,256.6 1345.8,257.4 1347.2,260.0 1348.5,264.4 1349.8,267.1 1351.1,267.5 1352.4,267.5 1353.7,267.3 1355.0,267.9 1356.3,267.4 1357.6,267.3 1358.9,265.8 1360.2,265.3 1361.5,265.0 1362.8,264.4 1364.1,264.6 1365.4,265.2 1366.7,265.1" fill="none" stroke="#e0b400" stroke-width="1.0" stroke-linejoin="round"/>
<path d="M1089.1,320.0 1090.4,320.0 1091.7,320.1 1093.0,319.7 1094.3,320.2 1095.6,320.1 1096.9,320.6 1098.2,319.7 1099.5,318.9 1100.8,318.9 1102.1,318.6 1103.4,318.6 1104.7,319.0 1106.0,319.3 1107.3,321.0 1108.6,323.9 1110.0,325.8 1111.3,324.6 1112.6,323.9 1113.9,323.3 1115.2,323.4 1116.5,324.6 1117.8,325.2 1119.1,325.8 1120.4,325.7 1121.7,326.7 1123.0,326.8 1124.3,327.0 1125.6,327.2 1126.9,327.3 1128.2,327.2 1129.5,327.5 1130.8,327.5 1132.1,327.2 1133.4,327.9 1134.7,327.6 1136.0,327.9 1137.3,328.3 1138.6,328.5 1139.9,328.6 1141.2,329.0 1142.5,329.5 1143.8,328.5 1145.1,327.6 1146.4,326.6 1147.7,326.0 1149.1,326.4 1150.4,326.6 1151.7,326.3 1153.0,326.1 1154.3,326.4 1155.6,326.2 1156.9,327.0 1158.2,327.6 1159.5,327.8 1160.8,328.8 1162.1,329.2 1163.4,329.7 1164.7,330.2 1166.0,330.3 1167.3,330.3 1168.6,329.5 1169.9,329.7 1171.2,329.4 1172.5,329.7 1173.8,329.3 1175.1,329.3 1176.4,329.5 1177.7,329.5 1179.0,329.4 1180.3,329.6 1181.6,329.4 1182.9,329.1 1184.2,329.6 1185.5,329.1 1186.8,329.4 1188.1,329.4 1189.5,329.2 1190.8,329.4 1192.1,329.8 1193.4,329.8 1194.7,330.0 1196.0,330.0 1197.3,329.4 1198.6,329.7 1199.9,329.4 1201.2,329.6 1202.5,330.0 1203.8,329.5 1205.1,329.6 1206.4,330.0 1207.7,330.3 1209.0,330.3 1210.3,330.9 1211.6,331.2 1212.9,331.8 1214.2,331.2 1215.5,330.9 1216.8,331.3 1218.1,330.7 1219.4,330.7 1220.7,330.7 1222.0,330.2 1223.3,330.5 1224.6,330.0 1225.9,330.4 1227.2,329.5 1228.6,329.9 1229.9,329.8 1231.2,329.0 1232.5,328.9 1233.8,328.7 1235.1,328.4 1236.4,328.5 1237.7,328.4 1239.0,328.1 1240.3,327.7 1241.6,328.2 1242.9,329.3 1244.2,329.7 1245.5,330.0 1246.8,329.6 1248.1,330.1 1249.4,329.4 1250.7,329.7 1252.0,329.4 1253.3,329.6 1254.6,329.5 1255.9,328.8 1257.2,328.9 1258.5,328.5 1259.8,328.4 1261.1,328.4 1262.4,329.0 1263.7,328.8 1265.0,328.7 1266.3,329.2 1267.7,329.6 1269.0,329.5 1270.3,328.9 1271.6,328.9 1272.9,329.5 1274.2,329.4 1275.5,329.1 1276.8,329.3 1278.1,329.1 1279.4,327.5 1280.7,327.1 1282.0,327.5 1283.3,328.0 1284.6,327.9 1285.9,328.0 1287.2,328.7 1288.5,329.1 1289.8,328.9 1291.1,329.0 1292.4,327.7 1293.7,326.0 1295.0,324.2 1296.3,324.1 1297.6,324.4 1298.9,324.3 1300.2,324.3 1301.5,324.6 1302.8,326.8 1304.1,328.6 1305.4,329.5 1306.7,329.2 1308.1,329.6 1309.4,329.2 1310.7,329.4 1312.0,329.9 1313.3,330.0 1314.6,329.8 1315.9,329.9 1317.2,330.0 1318.5,330.2 1319.8,329.6 1321.1,329.1 1322.4,329.0 1323.7,328.9 1325.0,328.0 1326.3,328.2 1327.6,327.4 1328.9,327.3 1330.2,327.5 1331.5,327.0 1332.8,327.1 1334.1,326.6 1335.4,326.7 1336.7,326.9 1338.0,326.1 1339.3,326.1 1340.6,326.6 1341.9,327.1 1343.2,327.9 1344.5,327.7 1345.8,328.7 1347.2,329.0 1348.5,329.3 1349.8,329.2 1351.1,329.5 1352.4,328.8 1353.7,329.1 1355.0,329.1 1356.3,328.7 1357.6,328.6 1358.9,328.7 1360.2,328.5 1361.5,328.9 1362.8,329.0 1364.1,328.8 1365.4,328.5 1366.7,328.3" fill="none" stroke="#56a64b" stroke-width="1.0" stroke-linejoin="round"/>
<path d="M1089.1,378.2 1366.7,378.2" fill="none" stroke="#5794f2" stroke-width="1.1" stroke-linejoin="round"/>
<rect x="1061" y="411.8" width="14" height="4" rx="2" fill="#56a64b"/>
<text x="1082" y="417.8" font-size="12.5" fill="#24292e" text-anchor="start" font-weight="normal" letter-spacing="0.98" >avg</text>
<rect x="1115" y="411.8" width="14" height="4" rx="2" fill="#e0b400"/>
<text x="1136" y="417.8" font-size="12.5" fill="#24292e" text-anchor="start" font-weight="normal" letter-spacing="0.98" >highest</text>
<rect x="1191" y="411.8" width="14" height="4" rx="2" fill="#5794f2"/>
<text x="1212" y="417.8" font-size="12.5" fill="#24292e" text-anchor="start" font-weight="normal" letter-spacing="0.98" >limit</text>
<rect x="1089.1" y="681.7" width="277.6" height="1" fill="#e6e7e8"/>
<text x="1084.6" y="686.5" font-size="12" fill="#24292e" text-anchor="end" font-weight="normal" letter-spacing="0.9" >0</text>
<rect x="1089.1" y="644.7" width="277.6" height="1" fill="#e6e7e8"/>
<text x="1084.6" y="649.45" font-size="12" fill="#24292e" text-anchor="end" font-weight="normal" letter-spacing="0.9" >50</text>
<rect x="1089.1" y="607.6" width="277.6" height="1" fill="#e6e7e8"/>
<text x="1084.6" y="612.4" font-size="12" fill="#24292e" text-anchor="end" font-weight="normal" letter-spacing="0.9" >100</text>
<rect x="1089.1" y="570.6" width="277.6" height="1" fill="#e6e7e8"/>
<text x="1084.6" y="575.35" font-size="12" fill="#24292e" text-anchor="end" font-weight="normal" letter-spacing="0.9" >150</text>
<rect x="1089.1" y="533.5" width="277.6" height="1" fill="#e6e7e8"/>
<text x="1084.6" y="538.3" font-size="12" fill="#24292e" text-anchor="end" font-weight="normal" letter-spacing="0.9" >200</text>
<rect x="1115.9" y="527.6" width="1" height="158.6" fill="#e6e7e8"/>
<text x="1116.6000000000001" y="701.6" font-size="12" fill="#24292e" text-anchor="middle" font-weight="normal" letter-spacing="0.35" >15:30</text>
<rect x="1185.2" y="527.6" width="1" height="158.6" fill="#e6e7e8"/>
<text x="1185.9" y="701.6" font-size="12" fill="#24292e" text-anchor="middle" font-weight="normal" letter-spacing="0.35" >15:45</text>
<rect x="1254.5" y="527.6" width="1" height="158.6" fill="#e6e7e8"/>
<text x="1255.2" y="701.6" font-size="12" fill="#24292e" text-anchor="middle" font-weight="normal" letter-spacing="0.35" >16:00</text>
<rect x="1323.8" y="527.6" width="1" height="158.6" fill="#e6e7e8"/>
<text x="1324.5" y="701.6" font-size="12" fill="#24292e" text-anchor="middle" font-weight="normal" letter-spacing="0.35" >16:15</text>
<path d="M1089.1,564.8 1090.4,564.8 1091.7,564.7 1093.0,564.6 1094.3,565.2 1095.6,565.4 1096.9,564.5 1098.2,558.6 1099.5,556.4 1100.8,555.6 1102.1,555.4 1103.4,555.6 1104.7,555.0 1106.0,554.8 1107.3,564.2 1108.6,571.6 1110.0,575.5 1111.3,570.4 1112.6,568.3 1113.9,568.7 1115.2,568.8 1116.5,568.5 1117.8,568.4 1119.1,567.7 1120.4,571.2 1121.7,575.7 1123.0,575.4 1124.3,575.5 1125.6,575.1 1126.9,575.2 1128.2,575.6 1129.5,575.8 1130.8,575.2 1132.1,575.1 1133.4,575.9 1134.7,575.3 1136.0,575.2 1137.3,575.4 1138.6,575.7 1139.9,575.2 1141.2,575.3 1142.5,575.8 1143.8,570.3 1145.1,565.3 1146.4,563.3 1147.7,561.4 1149.1,559.7 1150.4,559.4 1151.7,559.3 1153.0,559.2 1154.3,559.2 1155.6,559.3 1156.9,559.4 1158.2,561.3 1159.5,564.6 1160.8,567.0 1162.1,568.2 1163.4,570.0 1164.7,570.4 1166.0,569.6 1167.3,568.2 1168.6,566.2 1169.9,565.2 1171.2,563.8 1172.5,563.6 1173.8,565.2 1175.1,566.7 1176.4,568.6 1177.7,567.3 1179.0,567.0 1180.3,565.8 1181.6,564.5 1182.9,563.8 1184.2,563.4 1185.5,563.7 1186.8,564.2 1188.1,564.3 1189.5,563.6 1190.8,564.4 1192.1,564.4 1193.4,564.3 1194.7,564.1 1196.0,564.0 1197.3,565.1 1198.6,566.6 1199.9,566.9 1201.2,567.0 1202.5,566.5 1203.8,565.8 1205.1,565.4 1206.4,565.5 1207.7,565.1 1209.0,566.5 1210.3,573.6 1211.6,572.2 1212.9,570.5 1214.2,569.3 1215.5,569.7 1216.8,569.2 1218.1,568.9 1219.4,569.4 1220.7,569.6 1222.0,569.2 1223.3,569.2 1224.6,569.2 1225.9,569.3 1227.2,567.7 1228.6,565.1 1229.9,563.9 1231.2,561.4 1232.5,560.9 1233.8,560.8 1235.1,560.1 1236.4,560.5 1237.7,560.5 1239.0,560.1 1240.3,559.8 1241.6,560.7 1242.9,562.6 1244.2,565.3 1245.5,567.5 1246.8,569.6 1248.1,572.1 1249.4,573.5 1250.7,571.2 1252.0,569.2 1253.3,569.5 1254.6,569.2 1255.9,569.5 1257.2,569.7 1258.5,570.2 1259.8,570.6 1261.1,571.3 1262.4,571.2 1263.7,572.4 1265.0,572.6 1266.3,573.4 1267.7,573.4 1269.0,573.4 1270.3,573.3 1271.6,573.1 1272.9,573.2 1274.2,573.5 1275.5,573.0 1276.8,573.1 1278.1,570.4 1279.4,563.9 1280.7,561.3 1282.0,561.1 1283.3,561.6 1284.6,561.7 1285.9,561.1 1287.2,561.5 1288.5,562.5 1289.8,573.2 1291.1,561.8 1292.4,550.2 1293.7,549.4 1295.0,548.8 1296.3,548.0 1297.6,547.8 1298.9,546.9 1300.2,547.1 1301.5,555.7 1302.8,567.2 1304.1,570.6 1305.4,569.8 1306.7,568.7 1308.1,568.6 1309.4,568.4 1310.7,568.7 1312.0,568.5 1313.3,568.8 1314.6,568.8 1315.9,571.1 1317.2,574.3 1318.5,573.4 1319.8,572.5 1321.1,572.3 1322.4,571.2 1323.7,570.9 1325.0,570.6 1326.3,569.8 1327.6,569.7 1328.9,565.4 1330.2,561.2 1331.5,561.0 1332.8,560.7 1334.1,560.5 1335.4,559.6 1336.7,559.6 1338.0,559.5 1339.3,559.7 1340.6,559.7 1341.9,560.2 1343.2,560.6 1344.5,560.6 1345.8,561.4 1347.2,564.0 1348.5,568.4 1349.8,571.1 1351.1,571.5 1352.4,571.5 1353.7,571.3 1355.0,571.9 1356.3,571.4 1357.6,571.3 1358.9,569.8 1360.2,569.3 1361.5,569.0 1362.8,568.4 1364.1,568.6 1365.4,569.2 1366.7,569.1 L1366.7,682.2 L1089.1,682.2 Z" fill="#fdfdf9" stroke="none"/>
<path d="M1089.1,564.8 1090.4,564.8 1091.7,564.7 1093.0,564.6 1094.3,565.2 1095.6,565.4 1096.9,564.5 1098.2,558.6 1099.5,556.4 1100.8,555.6 1102.1,555.4 1103.4,555.6 1104.7,555.0 1106.0,554.8 1107.3,564.2 1108.6,571.6 1110.0,575.5 1111.3,570.4 1112.6,568.3 1113.9,568.7 1115.2,568.8 1116.5,568.5 1117.8,568.4 1119.1,567.7 1120.4,571.2 1121.7,575.7 1123.0,575.4 1124.3,575.5 1125.6,575.1 1126.9,575.2 1128.2,575.6 1129.5,575.8 1130.8,575.2 1132.1,575.1 1133.4,575.9 1134.7,575.3 1136.0,575.2 1137.3,575.4 1138.6,575.7 1139.9,575.2 1141.2,575.3 1142.5,575.8 1143.8,570.3 1145.1,565.3 1146.4,563.3 1147.7,561.4 1149.1,559.7 1150.4,559.4 1151.7,559.3 1153.0,559.2 1154.3,559.2 1155.6,559.3 1156.9,559.4 1158.2,561.3 1159.5,564.6 1160.8,567.0 1162.1,568.2 1163.4,570.0 1164.7,570.4 1166.0,569.6 1167.3,568.2 1168.6,566.2 1169.9,565.2 1171.2,563.8 1172.5,563.6 1173.8,565.2 1175.1,566.7 1176.4,568.6 1177.7,567.3 1179.0,567.0 1180.3,565.8 1181.6,564.5 1182.9,563.8 1184.2,563.4 1185.5,563.7 1186.8,564.2 1188.1,564.3 1189.5,563.6 1190.8,564.4 1192.1,564.4 1193.4,564.3 1194.7,564.1 1196.0,564.0 1197.3,565.1 1198.6,566.6 1199.9,566.9 1201.2,567.0 1202.5,566.5 1203.8,565.8 1205.1,565.4 1206.4,565.5 1207.7,565.1 1209.0,566.5 1210.3,573.6 1211.6,572.2 1212.9,570.5 1214.2,569.3 1215.5,569.7 1216.8,569.2 1218.1,568.9 1219.4,569.4 1220.7,569.6 1222.0,569.2 1223.3,569.2 1224.6,569.2 1225.9,569.3 1227.2,567.7 1228.6,565.1 1229.9,563.9 1231.2,561.4 1232.5,560.9 1233.8,560.8 1235.1,560.1 1236.4,560.5 1237.7,560.5 1239.0,560.1 1240.3,559.8 1241.6,560.7 1242.9,562.6 1244.2,565.3 1245.5,567.5 1246.8,569.6 1248.1,572.1 1249.4,573.5 1250.7,571.2 1252.0,569.2 1253.3,569.5 1254.6,569.2 1255.9,569.5 1257.2,569.7 1258.5,570.2 1259.8,570.6 1261.1,571.3 1262.4,571.2 1263.7,572.4 1265.0,572.6 1266.3,573.4 1267.7,573.4 1269.0,573.4 1270.3,573.3 1271.6,573.1 1272.9,573.2 1274.2,573.5 1275.5,573.0 1276.8,573.1 1278.1,570.4 1279.4,563.9 1280.7,561.3 1282.0,561.1 1283.3,561.6 1284.6,561.7 1285.9,561.1 1287.2,561.5 1288.5,562.5 1289.8,573.2 1291.1,561.8 1292.4,550.2 1293.7,549.4 1295.0,548.8 1296.3,548.0 1297.6,547.8 1298.9,546.9 1300.2,547.1 1301.5,555.7 1302.8,567.2 1304.1,570.6 1305.4,569.8 1306.7,568.7 1308.1,568.6 1309.4,568.4 1310.7,568.7 1312.0,568.5 1313.3,568.8 1314.6,568.8 1315.9,571.1 1317.2,574.3 1318.5,573.4 1319.8,572.5 1321.1,572.3 1322.4,571.2 1323.7,570.9 1325.0,570.6 1326.3,569.8 1327.6,569.7 1328.9,565.4 1330.2,561.2 1331.5,561.0 1332.8,560.7 1334.1,560.5 1335.4,559.6 1336.7,559.6 1338.0,559.5 1339.3,559.7 1340.6,559.7 1341.9,560.2 1343.2,560.6 1344.5,560.6 1345.8,561.4 1347.2,564.0 1348.5,568.4 1349.8,571.1 1351.1,571.5 1352.4,571.5 1353.7,571.3 1355.0,571.9 1356.3,571.4 1357.6,571.3 1358.9,569.8 1360.2,569.3 1361.5,569.0 1362.8,568.4 1364.1,568.6 1365.4,569.2 1366.7,569.1" fill="none" stroke="#e0b400" stroke-width="1.0" stroke-linejoin="round"/>
<path d="M1089.1,591.4 1090.4,591.3 1091.7,591.3 1093.0,591.0 1094.3,591.3 1095.6,591.2 1096.9,590.6 1098.2,584.7 1099.5,584.4 1100.8,584.7 1102.1,584.4 1103.4,584.4 1104.7,584.8 1106.0,585.1 1107.3,588.7 1108.6,593.7 1110.0,597.0 1111.3,594.8 1112.6,593.0 1113.9,593.0 1115.2,593.5 1116.5,594.6 1117.8,595.2 1119.1,595.7 1120.4,595.6 1121.7,596.6 1123.0,596.6 1124.3,596.7 1125.6,596.7 1126.9,596.8 1128.2,596.6 1129.5,596.8 1130.8,596.7 1132.1,596.3 1133.4,596.9 1134.7,596.5 1136.0,596.6 1137.3,596.8 1138.6,596.8 1139.9,596.7 1141.2,596.9 1142.5,597.2 1143.8,594.6 1145.1,592.1 1146.4,589.3 1147.7,587.6 1149.1,586.9 1150.4,586.1 1151.7,585.7 1153.0,585.8 1154.3,586.4 1155.6,586.5 1156.9,587.2 1158.2,587.5 1159.5,588.1 1160.8,590.1 1162.1,591.6 1163.4,593.1 1164.7,593.9 1166.0,593.2 1167.3,592.4 1168.6,590.9 1169.9,590.2 1171.2,589.2 1172.5,589.0 1173.8,589.6 1175.1,590.7 1176.4,591.8 1177.7,592.8 1179.0,592.2 1180.3,591.7 1181.6,591.0 1182.9,590.1 1184.2,589.8 1185.5,588.7 1186.8,589.1 1188.1,589.3 1189.5,589.5 1190.8,589.9 1192.1,590.6 1193.4,590.8 1194.7,591.3 1196.0,591.6 1197.3,591.0 1198.6,591.2 1199.9,590.8 1201.2,590.8 1202.5,591.0 1203.8,590.4 1205.1,590.3 1206.4,590.6 1207.7,590.7 1209.0,591.4 1210.3,595.7 1211.6,595.4 1212.9,595.3 1214.2,594.7 1215.5,594.3 1216.8,594.6 1218.1,594.0 1219.4,593.9 1220.7,593.8 1222.0,593.2 1223.3,593.4 1224.6,592.9 1225.9,593.2 1227.2,591.7 1228.6,591.1 1229.9,590.1 1231.2,588.4 1232.5,587.4 1233.8,586.3 1235.1,587.0 1236.4,589.9 1237.7,592.7 1239.0,593.3 1240.3,590.7 1241.6,588.5 1242.9,588.0 1244.2,589.4 1245.5,590.9 1246.8,592.1 1248.1,593.9 1249.4,592.5 1250.7,592.1 1252.0,591.1 1253.3,590.6 1254.6,590.9 1255.9,590.5 1257.2,591.0 1258.5,590.9 1259.8,591.3 1261.1,591.6 1262.4,592.3 1263.7,592.2 1265.0,592.1 1266.3,592.7 1267.7,593.2 1269.0,593.1 1270.3,592.5 1271.6,592.5 1272.9,593.0 1274.2,593.0 1275.5,592.7 1276.8,592.8 1278.1,592.2 1279.4,589.1 1280.7,587.6 1282.0,587.7 1283.3,588.0 1284.6,587.6 1285.9,587.5 1287.2,587.9 1288.5,588.4 1289.8,593.2 1291.1,586.8 1292.4,581.0 1293.7,580.4 1295.0,579.9 1296.3,579.6 1297.6,579.5 1298.9,579.1 1300.2,578.8 1301.5,583.4 1302.8,589.8 1304.1,591.5 1305.4,591.6 1306.7,591.2 1308.1,591.6 1309.4,591.1 1310.7,591.2 1312.0,591.6 1313.3,591.7 1314.6,591.4 1315.9,591.9 1317.2,593.2 1318.5,594.9 1319.8,595.9 1321.1,596.5 1322.4,595.4 1323.7,594.2 1325.0,592.4 1326.3,591.6 1327.6,591.4 1328.9,592.0 1330.2,592.8 1331.5,592.9 1332.8,592.1 1334.1,590.5 1335.4,589.6 1336.7,588.7 1338.0,587.0 1339.3,586.0 1340.6,586.6 1341.9,587.7 1343.2,589.2 1344.5,589.7 1345.8,591.3 1347.2,592.3 1348.5,592.8 1349.8,592.6 1351.1,592.8 1352.4,591.9 1353.7,592.1 1355.0,592.0 1356.3,591.5 1357.6,591.3 1358.9,591.2 1360.2,590.9 1361.5,591.2 1362.8,591.5 1364.1,591.4 1365.4,591.3 1366.7,591.2" fill="none" stroke="#56a64b" stroke-width="1.0" stroke-linejoin="round"/>
<path d="M1089.1,682.2 1366.7,682.2" fill="none" stroke="#5794f2" stroke-width="1.1" stroke-linejoin="round"/>
<rect x="1061" y="715.8000000000001" width="14" height="4" rx="2" fill="#56a64b"/>
<text x="1082" y="721.8000000000001" font-size="12.5" fill="#24292e" text-anchor="start" font-weight="normal" letter-spacing="0.98" >avg</text>
<rect x="1115" y="715.8000000000001" width="14" height="4" rx="2" fill="#e0b400"/>
<text x="1136" y="721.8000000000001" font-size="12.5" fill="#24292e" text-anchor="start" font-weight="normal" letter-spacing="0.98" >highest</text>
<rect x="1191" y="715.8000000000001" width="14" height="4" rx="2" fill="#5794f2"/>
<text x="1212" y="721.8000000000001" font-size="12.5" fill="#24292e" text-anchor="start" font-weight="normal" letter-spacing="0.98" >limit</text>
<rect x="1081.9" y="985.5" width="284.7" height="1" fill="#e6e7e8"/>
<text x="1077.4" y="990.3" font-size="12" fill="#24292e" text-anchor="end" font-weight="normal" letter-spacing="0.9" >0</text>
<rect x="1081.9" y="939.8" width="284.7" height="1" fill="#e6e7e8"/>
<text x="1077.4" y="944.5999999999999" font-size="12" fill="#24292e" text-anchor="end" font-weight="normal" letter-spacing="0.9" >20</text>
<rect x="1081.9" y="894.1" width="284.7" height="1" fill="#e6e7e8"/>
<text x="1077.4" y="898.9" font-size="12" fill="#24292e" text-anchor="end" font-weight="normal" letter-spacing="0.9" >40</text>
<rect x="1081.9" y="848.4" width="284.7" height="1" fill="#e6e7e8"/>
<text x="1077.4" y="853.1999999999999" font-size="12" fill="#24292e" text-anchor="end" font-weight="normal" letter-spacing="0.9" >60</text>
<rect x="1108.9" y="831.6" width="1" height="158.4" fill="#e6e7e8"/>
<text x="1109.6000000000001" y="1005.4" font-size="12" fill="#24292e" text-anchor="middle" font-weight="normal" letter-spacing="0.35" >15:30</text>
<rect x="1180.2" y="831.6" width="1" height="158.4" fill="#e6e7e8"/>
<text x="1180.9333333333334" y="1005.4" font-size="12" fill="#24292e" text-anchor="middle" font-weight="normal" letter-spacing="0.35" >15:45</text>
<rect x="1251.6" y="831.6" width="1" height="158.4" fill="#e6e7e8"/>
<text x="1252.2666666666669" y="1005.4" font-size="12" fill="#24292e" text-anchor="middle" font-weight="normal" letter-spacing="0.35" >16:00</text>
<rect x="1322.9" y="831.6" width="1" height="158.4" fill="#e6e7e8"/>
<text x="1323.6000000000001" y="1005.4" font-size="12" fill="#24292e" text-anchor="middle" font-weight="normal" letter-spacing="0.35" >16:15</text>
<path d="M1081.9,846.6 1083.2,846.6 1084.5,846.5 1085.8,846.7 1087.1,846.5 1088.4,846.4 1089.7,850.4 1091.0,856.1 1092.3,855.9 1093.7,855.9 1095.0,856.0 1096.3,855.8 1097.6,856.0 1098.9,856.0 1100.2,858.7 1101.5,862.4 1102.8,863.2 1104.1,863.2 1105.4,863.1 1106.7,863.3 1108.0,863.0 1109.3,863.0 1110.6,866.4 1111.9,869.8 1113.2,870.0 1114.5,870.1 1115.9,870.1 1117.2,870.3 1118.5,870.4 1119.8,869.9 1121.1,873.0 1122.4,876.9 1123.7,876.6 1125.0,876.7 1126.3,876.9 1127.6,876.9 1128.9,876.9 1130.2,876.9 1131.5,877.6 1132.8,880.5 1134.1,881.2 1135.4,881.2 1136.8,881.3 1138.1,881.3 1139.4,881.3 1140.7,881.7 1142.0,884.3 1143.3,886.1 1144.6,886.3 1145.9,886.3 1147.2,886.3 1148.5,886.2 1149.8,886.3 1151.1,886.3 1152.4,888.4 1153.7,890.4 1155.0,890.2 1156.3,890.3 1157.6,890.3 1159.0,890.3 1160.3,890.2 1161.6,890.1 1162.9,891.6 1164.2,893.4 1165.5,893.2 1166.8,893.3 1168.1,893.1 1169.4,893.4 1170.7,893.1 1172.0,893.5 1173.3,893.2 1174.6,893.3 1175.9,893.3 1177.2,893.1 1178.5,893.1 1179.8,893.4 1181.2,893.2 1182.5,893.2 1183.8,893.4 1185.1,893.4 1186.4,893.2 1187.7,893.1 1189.0,893.2 1190.3,893.3 1191.6,893.2 1192.9,893.3 1194.2,893.1 1195.5,893.0 1196.8,893.2 1198.1,893.4 1199.4,893.3 1200.7,893.1 1202.0,893.3 1203.4,893.4 1204.7,893.4 1206.0,893.1 1207.3,893.2 1208.6,893.3 1209.9,893.2 1211.2,893.1 1212.5,893.0 1213.8,893.1 1215.1,893.3 1216.4,893.1 1217.7,893.0 1219.0,893.1 1220.3,893.1 1221.6,893.2 1222.9,893.2 1224.2,893.1 1225.6,893.2 1226.9,893.1 1228.2,893.4 1229.5,893.4 1230.8,893.3 1232.1,893.2 1233.4,893.2 1234.7,893.4 1236.0,893.4 1237.3,893.0 1238.6,893.4 1239.9,893.0 1241.2,893.1 1242.5,893.2 1243.8,893.0 1245.1,893.1 1246.5,893.5 1247.8,893.0 1249.1,893.3 1250.4,893.0 1251.7,893.1 1253.0,893.4 1254.3,893.4 1255.6,893.4 1256.9,893.1 1258.2,893.1 1259.5,893.4 1260.8,893.4 1262.1,893.3 1263.4,893.1 1264.7,893.1 1266.0,893.1 1267.3,893.0 1268.7,893.1 1270.0,893.1 1271.3,893.5 1272.6,893.5 1273.9,893.1 1275.2,893.2 1276.5,893.3 1277.8,893.4 1279.1,893.3 1280.4,893.3 1281.7,893.2 1283.0,893.3 1284.3,893.4 1285.6,893.4 1286.9,893.4 1288.2,893.4 1289.5,893.4 1290.9,893.3 1292.2,893.4 1293.5,893.1 1294.8,893.2 1296.1,893.2 1297.4,893.2 1298.7,893.4 1300.0,893.4 1301.3,893.4 1302.6,893.3 1303.9,893.3 1305.2,893.3 1306.5,893.3 1307.8,893.1 1309.1,893.5 1310.4,893.3 1311.7,893.3 1313.1,893.3 1314.4,893.1 1315.7,893.4 1317.0,893.4 1318.3,893.4 1319.6,893.0 1320.9,893.3 1322.2,893.4 1323.5,893.0 1324.8,893.2 1326.1,893.0 1327.4,893.3 1328.7,893.1 1330.0,893.4 1331.3,893.3 1332.6,893.1 1334.0,891.3 1335.3,891.5 1336.6,893.3 1337.9,893.1 1339.2,893.4 1340.5,893.2 1341.8,893.4 1343.1,893.4 1344.4,893.1 1345.7,893.3 1347.0,893.1 1348.3,893.3 1349.6,893.1 1350.9,893.0 1352.2,893.2 1353.5,893.4 1354.8,893.2 1356.2,893.0 1357.5,893.1 1358.8,893.3 1360.1,893.3 1361.4,893.4 1362.7,893.1 1364.0,893.4 1365.3,893.4 1366.6,893.4 L1366.6,986 L1081.9,986 Z" fill="#fdfdf9" stroke="none"/>
<path d="M1081.9,846.6 1083.2,846.6 1084.5,846.5 1085.8,846.7 1087.1,846.5 1088.4,846.4 1089.7,850.4 1091.0,856.1 1092.3,855.9 1093.7,855.9 1095.0,856.0 1096.3,855.8 1097.6,856.0 1098.9,856.0 1100.2,858.7 1101.5,862.4 1102.8,863.2 1104.1,863.2 1105.4,863.1 1106.7,863.3 1108.0,863.0 1109.3,863.0 1110.6,866.4 1111.9,869.8 1113.2,870.0 1114.5,870.1 1115.9,870.1 1117.2,870.3 1118.5,870.4 1119.8,869.9 1121.1,873.0 1122.4,876.9 1123.7,876.6 1125.0,876.7 1126.3,876.9 1127.6,876.9 1128.9,876.9 1130.2,876.9 1131.5,877.6 1132.8,880.5 1134.1,881.2 1135.4,881.2 1136.8,881.3 1138.1,881.3 1139.4,881.3 1140.7,881.7 1142.0,884.3 1143.3,886.1 1144.6,886.3 1145.9,886.3 1147.2,886.3 1148.5,886.2 1149.8,886.3 1151.1,886.3 1152.4,888.4 1153.7,890.4 1155.0,890.2 1156.3,890.3 1157.6,890.3 1159.0,890.3 1160.3,890.2 1161.6,890.1 1162.9,891.6 1164.2,893.4 1165.5,893.2 1166.8,893.3 1168.1,893.1 1169.4,893.4 1170.7,893.1 1172.0,893.5 1173.3,893.2 1174.6,893.3 1175.9,893.3 1177.2,893.1 1178.5,893.1 1179.8,893.4 1181.2,893.2 1182.5,893.2 1183.8,893.4 1185.1,893.4 1186.4,893.2 1187.7,893.1 1189.0,893.2 1190.3,893.3 1191.6,893.2 1192.9,893.3 1194.2,893.1 1195.5,893.0 1196.8,893.2 1198.1,893.4 1199.4,893.3 1200.7,893.1 1202.0,893.3 1203.4,893.4 1204.7,893.4 1206.0,893.1 1207.3,893.2 1208.6,893.3 1209.9,893.2 1211.2,893.1 1212.5,893.0 1213.8,893.1 1215.1,893.3 1216.4,893.1 1217.7,893.0 1219.0,893.1 1220.3,893.1 1221.6,893.2 1222.9,893.2 1224.2,893.1 1225.6,893.2 1226.9,893.1 1228.2,893.4 1229.5,893.4 1230.8,893.3 1232.1,893.2 1233.4,893.2 1234.7,893.4 1236.0,893.4 1237.3,893.0 1238.6,893.4 1239.9,893.0 1241.2,893.1 1242.5,893.2 1243.8,893.0 1245.1,893.1 1246.5,893.5 1247.8,893.0 1249.1,893.3 1250.4,893.0 1251.7,893.1 1253.0,893.4 1254.3,893.4 1255.6,893.4 1256.9,893.1 1258.2,893.1 1259.5,893.4 1260.8,893.4 1262.1,893.3 1263.4,893.1 1264.7,893.1 1266.0,893.1 1267.3,893.0 1268.7,893.1 1270.0,893.1 1271.3,893.5 1272.6,893.5 1273.9,893.1 1275.2,893.2 1276.5,893.3 1277.8,893.4 1279.1,893.3 1280.4,893.3 1281.7,893.2 1283.0,893.3 1284.3,893.4 1285.6,893.4 1286.9,893.4 1288.2,893.4 1289.5,893.4 1290.9,893.3 1292.2,893.4 1293.5,893.1 1294.8,893.2 1296.1,893.2 1297.4,893.2 1298.7,893.4 1300.0,893.4 1301.3,893.4 1302.6,893.3 1303.9,893.3 1305.2,893.3 1306.5,893.3 1307.8,893.1 1309.1,893.5 1310.4,893.3 1311.7,893.3 1313.1,893.3 1314.4,893.1 1315.7,893.4 1317.0,893.4 1318.3,893.4 1319.6,893.0 1320.9,893.3 1322.2,893.4 1323.5,893.0 1324.8,893.2 1326.1,893.0 1327.4,893.3 1328.7,893.1 1330.0,893.4 1331.3,893.3 1332.6,893.1 1334.0,891.3 1335.3,891.5 1336.6,893.3 1337.9,893.1 1339.2,893.4 1340.5,893.2 1341.8,893.4 1343.1,893.4 1344.4,893.1 1345.7,893.3 1347.0,893.1 1348.3,893.3 1349.6,893.1 1350.9,893.0 1352.2,893.2 1353.5,893.4 1354.8,893.2 1356.2,893.0 1357.5,893.1 1358.8,893.3 1360.1,893.3 1361.4,893.4 1362.7,893.1 1364.0,893.4 1365.3,893.4 1366.6,893.4" fill="none" stroke="#e0b400" stroke-width="1.0" stroke-linejoin="round"/>
<path d="M1081.9,848.9 1083.2,848.9 1084.5,848.7 1085.8,848.7 1087.1,848.7 1088.4,849.0 1089.7,852.9 1091.0,858.8 1092.3,858.8 1093.7,858.9 1095.0,858.7 1096.3,858.9 1097.6,858.8 1098.9,858.7 1100.2,861.2 1101.5,864.5 1102.8,865.3 1104.1,865.3 1105.4,865.2 1106.7,865.1 1108.0,865.0 1109.3,865.0 1110.6,864.9 1111.9,869.7 1113.2,871.9 1114.5,872.1 1115.9,872.1 1117.2,872.1 1118.5,872.0 1119.8,871.9 1121.1,874.6 1122.4,878.4 1123.7,878.4 1125.0,878.5 1126.3,878.2 1127.6,878.3 1128.9,878.3 1130.2,878.2 1131.5,879.1 1132.8,882.7 1134.1,883.3 1135.4,883.0 1136.8,883.0 1138.1,883.2 1139.4,883.0 1140.7,883.2 1142.0,883.7 1143.3,886.4 1144.6,887.6 1145.9,887.5 1147.2,887.8 1148.5,887.8 1149.8,887.9 1151.1,887.8 1152.4,889.7 1153.7,893.6 1155.0,893.7 1156.3,893.5 1157.6,893.6 1159.0,893.4 1160.3,893.5 1161.6,893.6 1162.9,893.9 1164.2,895.1 1165.5,895.0 1166.8,894.9 1168.1,894.9 1169.4,894.8 1170.7,895.0 1172.0,894.9 1173.3,895.3 1174.6,895.0 1175.9,895.1 1177.2,895.1 1178.5,894.9 1179.8,894.9 1181.2,895.1 1182.5,895.1 1183.8,895.2 1185.1,894.9 1186.4,895.0 1187.7,895.2 1189.0,895.0 1190.3,895.3 1191.6,895.2 1192.9,895.1 1194.2,894.8 1195.5,894.9 1196.8,895.0 1198.1,894.9 1199.4,895.2 1200.7,895.0 1202.0,894.8 1203.4,895.2 1204.7,894.9 1206.0,894.8 1207.3,895.1 1208.6,894.9 1209.9,894.8 1211.2,895.2 1212.5,895.1 1213.8,895.0 1215.1,894.9 1216.4,895.2 1217.7,894.9 1219.0,895.0 1220.3,894.9 1221.6,894.9 1222.9,894.9 1224.2,895.0 1225.6,895.0 1226.9,895.1 1228.2,895.1 1229.5,895.1 1230.8,895.1 1232.1,895.1 1233.4,895.2 1234.7,895.1 1236.0,894.9 1237.3,895.1 1238.6,894.8 1239.9,894.9 1241.2,895.1 1242.5,895.2 1243.8,894.9 1245.1,894.8 1246.5,895.1 1247.8,895.0 1249.1,894.9 1250.4,895.0 1251.7,895.2 1253.0,895.2 1254.3,895.0 1255.6,895.0 1256.9,895.0 1258.2,895.2 1259.5,894.9 1260.8,894.9 1262.1,895.1 1263.4,894.9 1264.7,895.1 1266.0,895.0 1267.3,895.0 1268.7,894.8 1270.0,894.9 1271.3,895.1 1272.6,894.9 1273.9,895.1 1275.2,894.9 1276.5,894.9 1277.8,895.0 1279.1,895.3 1280.4,895.1 1281.7,895.2 1283.0,895.1 1284.3,895.3 1285.6,895.3 1286.9,895.2 1288.2,894.9 1289.5,895.0 1290.9,894.9 1292.2,894.9 1293.5,895.0 1294.8,894.9 1296.1,895.1 1297.4,895.2 1298.7,895.9 1300.0,895.1 1301.3,895.2 1302.6,895.1 1303.9,894.8 1305.2,894.8 1306.5,894.9 1307.8,895.3 1309.1,894.8 1310.4,895.0 1311.7,895.0 1313.1,895.1 1314.4,894.9 1315.7,895.1 1317.0,895.2 1318.3,895.1 1319.6,895.2 1320.9,895.2 1322.2,895.2 1323.5,895.0 1324.8,895.0 1326.1,895.2 1327.4,895.0 1328.7,895.3 1330.0,894.9 1331.3,895.2 1332.6,895.1 1334.0,895.1 1335.3,894.9 1336.6,895.1 1337.9,895.2 1339.2,894.9 1340.5,895.0 1341.8,895.2 1343.1,895.0 1344.4,894.9 1345.7,894.9 1347.0,894.9 1348.3,895.1 1349.6,895.2 1350.9,895.3 1352.2,894.9 1353.5,895.2 1354.8,895.1 1356.2,894.9 1357.5,895.2 1358.8,894.9 1360.1,895.0 1361.4,895.2 1362.7,894.9 1364.0,895.0 1365.3,895.3 1366.6,895.1" fill="none" stroke="#56a64b" stroke-width="1.0" stroke-linejoin="round"/>
<path d="M1081.9,986.0 1366.6,986.0" fill="none" stroke="#5794f2" stroke-width="1.1" stroke-linejoin="round"/>
</svg></body></html>
